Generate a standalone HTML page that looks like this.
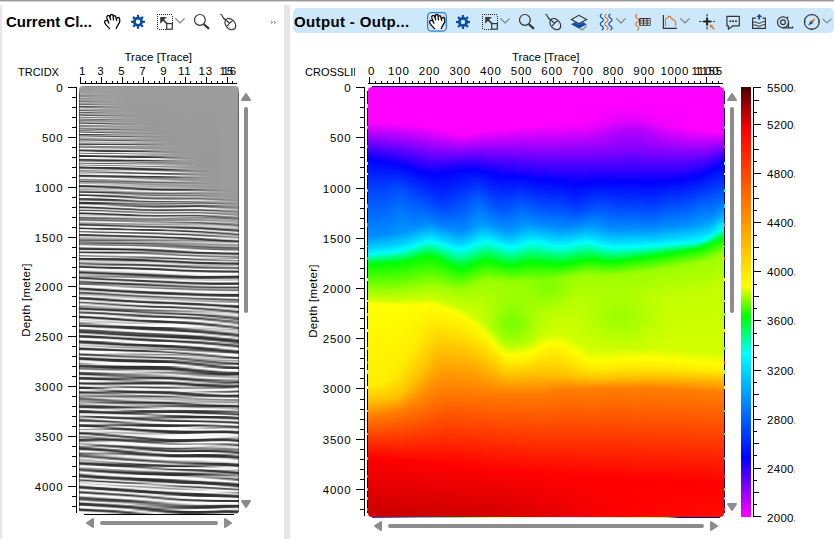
<!DOCTYPE html><html><head><meta charset="utf-8"><style>
*{margin:0;padding:0;box-sizing:border-box}
html,body{width:834px;height:539px;overflow:hidden;background:#fff}
body{position:relative;font-family:"Liberation Sans",sans-serif;color:#000}
.a{position:absolute;white-space:nowrap}
.n{font-size:11.5px;line-height:12px;letter-spacing:0.8px}
.l{font-size:11px;line-height:12px}
.ttl{font-size:15px;font-weight:bold;line-height:15px}
svg{position:absolute;left:0;top:0}
</style></head><body>
<div class="a" style="left:0;top:0;width:834px;height:1px;background:#999"></div><div class="a" style="left:0;top:1px;width:834px;height:1px;background:#d4d4d4"></div>
<div class="a" style="left:0;top:5px;width:2px;height:534px;background:#e6e6e6"></div>
<div class="a" style="left:284px;top:5px;width:6px;height:534px;background:#e6e6e6"></div>
<div class="a" style="left:293px;top:8px;width:541px;height:25px;background:#cee8fb;border-radius:5px"></div>
<svg width="834" height="539" viewBox="0 0 834 539"><defs><linearGradient id="v0" x1="0" y1="0" x2="0" y2="1"><stop offset="0.001" stop-color="#ff00ff"/><stop offset="0.083" stop-color="#ff00ff"/><stop offset="0.166" stop-color="#0200ff"/><stop offset="0.245" stop-color="#0049ff"/><stop offset="0.348" stop-color="#008dff"/><stop offset="0.376" stop-color="#00d4ff"/><stop offset="0.387" stop-color="#00f9ff"/><stop offset="0.390" stop-color="#00fffb"/><stop offset="0.413" stop-color="#00ff00"/><stop offset="0.480" stop-color="#acff00"/><stop offset="0.497" stop-color="#d3ff00"/><stop offset="0.503" stop-color="#feff00"/><stop offset="0.692" stop-color="#ffee00"/><stop offset="0.731" stop-color="#ffc000"/><stop offset="0.771" stop-color="#ff7800"/><stop offset="0.859" stop-color="#ff0000"/><stop offset="0.999" stop-color="#ca0000"/></linearGradient><linearGradient id="v1" x1="0" y1="0" x2="0" y2="1"><stop offset="0.001" stop-color="#ff00ff"/><stop offset="0.083" stop-color="#ff00ff"/><stop offset="0.166" stop-color="#0200ff"/><stop offset="0.245" stop-color="#0049ff"/><stop offset="0.348" stop-color="#008dff"/><stop offset="0.376" stop-color="#00d4ff"/><stop offset="0.387" stop-color="#00f9ff"/><stop offset="0.390" stop-color="#00fffb"/><stop offset="0.413" stop-color="#00ff00"/><stop offset="0.480" stop-color="#acff00"/><stop offset="0.497" stop-color="#d3ff00"/><stop offset="0.503" stop-color="#feff00"/><stop offset="0.692" stop-color="#ffee00"/><stop offset="0.731" stop-color="#ffc000"/><stop offset="0.771" stop-color="#ff7700"/><stop offset="0.859" stop-color="#ff0000"/><stop offset="0.999" stop-color="#cb0000"/></linearGradient><linearGradient id="v2" x1="0" y1="0" x2="0" y2="1"><stop offset="0.001" stop-color="#ff00ff"/><stop offset="0.083" stop-color="#ff00ff"/><stop offset="0.169" stop-color="#0000ff"/><stop offset="0.243" stop-color="#0047ff"/><stop offset="0.348" stop-color="#008fff"/><stop offset="0.376" stop-color="#00d6ff"/><stop offset="0.387" stop-color="#00fbff"/><stop offset="0.390" stop-color="#00fff4"/><stop offset="0.410" stop-color="#00ff13"/><stop offset="0.413" stop-color="#01ff00"/><stop offset="0.480" stop-color="#acff00"/><stop offset="0.497" stop-color="#d3ff00"/><stop offset="0.503" stop-color="#fcff00"/><stop offset="0.517" stop-color="#fffe00"/><stop offset="0.692" stop-color="#ffed00"/><stop offset="0.731" stop-color="#ffbe00"/><stop offset="0.769" stop-color="#ff7900"/><stop offset="0.862" stop-color="#fe0000"/><stop offset="0.999" stop-color="#cb0000"/></linearGradient><linearGradient id="v3" x1="0" y1="0" x2="0" y2="1"><stop offset="0.001" stop-color="#ff00ff"/><stop offset="0.083" stop-color="#ff00ff"/><stop offset="0.171" stop-color="#0001ff"/><stop offset="0.241" stop-color="#0046ff"/><stop offset="0.345" stop-color="#008cff"/><stop offset="0.373" stop-color="#00d2ff"/><stop offset="0.387" stop-color="#00fefe"/><stop offset="0.410" stop-color="#00ff0d"/><stop offset="0.413" stop-color="#03ff00"/><stop offset="0.480" stop-color="#acff00"/><stop offset="0.497" stop-color="#d2ff00"/><stop offset="0.503" stop-color="#f9ff00"/><stop offset="0.506" stop-color="#ffff00"/><stop offset="0.690" stop-color="#ffee00"/><stop offset="0.729" stop-color="#ffc100"/><stop offset="0.766" stop-color="#ff7a00"/><stop offset="0.862" stop-color="#ff0000"/><stop offset="0.999" stop-color="#cb0000"/></linearGradient><linearGradient id="v4" x1="0" y1="0" x2="0" y2="1"><stop offset="0.001" stop-color="#ff00ff"/><stop offset="0.083" stop-color="#ff00ff"/><stop offset="0.171" stop-color="#0300ff"/><stop offset="0.178" stop-color="#0006ff"/><stop offset="0.241" stop-color="#0047ff"/><stop offset="0.345" stop-color="#008fff"/><stop offset="0.373" stop-color="#00d6ff"/><stop offset="0.385" stop-color="#00fbff"/><stop offset="0.387" stop-color="#00fff5"/><stop offset="0.410" stop-color="#00ff07"/><stop offset="0.413" stop-color="#04ff00"/><stop offset="0.480" stop-color="#abff00"/><stop offset="0.497" stop-color="#d1ff00"/><stop offset="0.503" stop-color="#f7ff00"/><stop offset="0.506" stop-color="#ffff00"/><stop offset="0.690" stop-color="#ffec00"/><stop offset="0.727" stop-color="#ffc300"/><stop offset="0.764" stop-color="#ff7b00"/><stop offset="0.864" stop-color="#fe0000"/><stop offset="0.999" stop-color="#cb0000"/></linearGradient><linearGradient id="v5" x1="0" y1="0" x2="0" y2="1"><stop offset="0.001" stop-color="#ff00ff"/><stop offset="0.083" stop-color="#ff00ff"/><stop offset="0.092" stop-color="#e800ff"/><stop offset="0.173" stop-color="#0300ff"/><stop offset="0.238" stop-color="#0046ff"/><stop offset="0.343" stop-color="#008cff"/><stop offset="0.371" stop-color="#00d2ff"/><stop offset="0.385" stop-color="#00fefe"/><stop offset="0.410" stop-color="#00ff01"/><stop offset="0.478" stop-color="#a6ff00"/><stop offset="0.497" stop-color="#d0ff00"/><stop offset="0.506" stop-color="#ffff00"/><stop offset="0.687" stop-color="#ffed00"/><stop offset="0.727" stop-color="#ffc000"/><stop offset="0.762" stop-color="#ff7c00"/><stop offset="0.864" stop-color="#ff0000"/><stop offset="0.999" stop-color="#cc0000"/></linearGradient><linearGradient id="v6" x1="0" y1="0" x2="0" y2="1"><stop offset="0.001" stop-color="#ff00ff"/><stop offset="0.085" stop-color="#fc00ff"/><stop offset="0.176" stop-color="#0200ff"/><stop offset="0.238" stop-color="#0047ff"/><stop offset="0.343" stop-color="#008fff"/><stop offset="0.371" stop-color="#00d6ff"/><stop offset="0.383" stop-color="#00fbff"/><stop offset="0.385" stop-color="#00fff5"/><stop offset="0.408" stop-color="#00ff12"/><stop offset="0.410" stop-color="#01ff00"/><stop offset="0.478" stop-color="#a6ff00"/><stop offset="0.497" stop-color="#d0ff00"/><stop offset="0.501" stop-color="#e5ff00"/><stop offset="0.506" stop-color="#feff00"/><stop offset="0.685" stop-color="#ffec00"/><stop offset="0.724" stop-color="#ffc300"/><stop offset="0.759" stop-color="#ff7d00"/><stop offset="0.864" stop-color="#ff0000"/><stop offset="0.999" stop-color="#cc0000"/></linearGradient><linearGradient id="v7" x1="0" y1="0" x2="0" y2="1"><stop offset="0.001" stop-color="#ff00ff"/><stop offset="0.085" stop-color="#fd00ff"/><stop offset="0.178" stop-color="#0100ff"/><stop offset="0.236" stop-color="#0048ff"/><stop offset="0.334" stop-color="#008bff"/><stop offset="0.341" stop-color="#008fff"/><stop offset="0.369" stop-color="#00d2ff"/><stop offset="0.383" stop-color="#00fefe"/><stop offset="0.408" stop-color="#00ff0c"/><stop offset="0.410" stop-color="#03ff00"/><stop offset="0.478" stop-color="#a6ff00"/><stop offset="0.497" stop-color="#cfff00"/><stop offset="0.501" stop-color="#e3ff00"/><stop offset="0.506" stop-color="#fcff00"/><stop offset="0.515" stop-color="#fffe00"/><stop offset="0.678" stop-color="#ffec00"/><stop offset="0.724" stop-color="#ffc000"/><stop offset="0.757" stop-color="#ff7d00"/><stop offset="0.866" stop-color="#fe0000"/><stop offset="0.999" stop-color="#cc0000"/></linearGradient><linearGradient id="v8" x1="0" y1="0" x2="0" y2="1"><stop offset="0.001" stop-color="#ff00ff"/><stop offset="0.085" stop-color="#fe00ff"/><stop offset="0.180" stop-color="#0100ff"/><stop offset="0.236" stop-color="#004cff"/><stop offset="0.294" stop-color="#0079ff"/><stop offset="0.341" stop-color="#0094ff"/><stop offset="0.369" stop-color="#00d6ff"/><stop offset="0.380" stop-color="#00fbff"/><stop offset="0.383" stop-color="#00fff5"/><stop offset="0.408" stop-color="#00ff06"/><stop offset="0.410" stop-color="#04ff00"/><stop offset="0.478" stop-color="#a6ff00"/><stop offset="0.497" stop-color="#ceff00"/><stop offset="0.499" stop-color="#d5ff00"/><stop offset="0.506" stop-color="#f9ff00"/><stop offset="0.508" stop-color="#ffff00"/><stop offset="0.666" stop-color="#ffec00"/><stop offset="0.722" stop-color="#ffc200"/><stop offset="0.757" stop-color="#ff7b00"/><stop offset="0.866" stop-color="#ff0000"/><stop offset="0.999" stop-color="#cc0000"/></linearGradient><linearGradient id="v9" x1="0" y1="0" x2="0" y2="1"><stop offset="0.001" stop-color="#ff00ff"/><stop offset="0.085" stop-color="#ff00ff"/><stop offset="0.183" stop-color="#0100ff"/><stop offset="0.236" stop-color="#004eff"/><stop offset="0.283" stop-color="#0075ff"/><stop offset="0.324" stop-color="#008eff"/><stop offset="0.338" stop-color="#0095ff"/><stop offset="0.366" stop-color="#00d4ff"/><stop offset="0.378" stop-color="#00f9ff"/><stop offset="0.380" stop-color="#00fffb"/><stop offset="0.406" stop-color="#00ff12"/><stop offset="0.408" stop-color="#01ff00"/><stop offset="0.478" stop-color="#a7ff00"/><stop offset="0.497" stop-color="#ceff00"/><stop offset="0.499" stop-color="#d5ff00"/><stop offset="0.506" stop-color="#f8ff00"/><stop offset="0.508" stop-color="#ffff00"/><stop offset="0.655" stop-color="#ffec00"/><stop offset="0.717" stop-color="#ffc400"/><stop offset="0.755" stop-color="#ff7b00"/><stop offset="0.869" stop-color="#fe0000"/><stop offset="0.999" stop-color="#cd0000"/></linearGradient><linearGradient id="v10" x1="0" y1="0" x2="0" y2="1"><stop offset="0.001" stop-color="#ff00ff"/><stop offset="0.085" stop-color="#ff00ff"/><stop offset="0.185" stop-color="#0100ff"/><stop offset="0.241" stop-color="#004fff"/><stop offset="0.294" stop-color="#007bff"/><stop offset="0.336" stop-color="#0095ff"/><stop offset="0.364" stop-color="#00d5ff"/><stop offset="0.376" stop-color="#00f9ff"/><stop offset="0.378" stop-color="#00fffa"/><stop offset="0.406" stop-color="#00ff04"/><stop offset="0.410" stop-color="#0aff00"/><stop offset="0.476" stop-color="#a4ff00"/><stop offset="0.497" stop-color="#cfff00"/><stop offset="0.501" stop-color="#e2ff00"/><stop offset="0.506" stop-color="#f9ff00"/><stop offset="0.508" stop-color="#ffff00"/><stop offset="0.641" stop-color="#ffec00"/><stop offset="0.710" stop-color="#ffc200"/><stop offset="0.752" stop-color="#ff7b00"/><stop offset="0.869" stop-color="#fe0000"/><stop offset="0.999" stop-color="#cd0000"/></linearGradient><linearGradient id="v11" x1="0" y1="0" x2="0" y2="1"><stop offset="0.001" stop-color="#ff00ff"/><stop offset="0.087" stop-color="#fe00ff"/><stop offset="0.187" stop-color="#0200ff"/><stop offset="0.245" stop-color="#004cff"/><stop offset="0.334" stop-color="#0093ff"/><stop offset="0.362" stop-color="#00d7ff"/><stop offset="0.373" stop-color="#00fbff"/><stop offset="0.376" stop-color="#00fff5"/><stop offset="0.403" stop-color="#00ff06"/><stop offset="0.406" stop-color="#04ff00"/><stop offset="0.473" stop-color="#a3ff00"/><stop offset="0.494" stop-color="#cbff00"/><stop offset="0.499" stop-color="#d9ff00"/><stop offset="0.506" stop-color="#fbff00"/><stop offset="0.510" stop-color="#fffe00"/><stop offset="0.627" stop-color="#ffec00"/><stop offset="0.701" stop-color="#ffc100"/><stop offset="0.750" stop-color="#ff7900"/><stop offset="0.869" stop-color="#ff0000"/><stop offset="0.999" stop-color="#cd0000"/></linearGradient><linearGradient id="v12" x1="0" y1="0" x2="0" y2="1"><stop offset="0.001" stop-color="#ff00ff"/><stop offset="0.087" stop-color="#ff00ff"/><stop offset="0.190" stop-color="#0300ff"/><stop offset="0.252" stop-color="#004cff"/><stop offset="0.329" stop-color="#008eff"/><stop offset="0.357" stop-color="#00d2ff"/><stop offset="0.371" stop-color="#00fdfd"/><stop offset="0.376" stop-color="#00ffdc"/><stop offset="0.401" stop-color="#00ff06"/><stop offset="0.403" stop-color="#04ff00"/><stop offset="0.471" stop-color="#a2ff00"/><stop offset="0.494" stop-color="#cdff00"/><stop offset="0.499" stop-color="#dcff00"/><stop offset="0.506" stop-color="#fdff00"/><stop offset="0.615" stop-color="#ffeb00"/><stop offset="0.690" stop-color="#ffc200"/><stop offset="0.750" stop-color="#ff7500"/><stop offset="0.871" stop-color="#fe0000"/><stop offset="0.999" stop-color="#cd0000"/></linearGradient><linearGradient id="v13" x1="0" y1="0" x2="0" y2="1"><stop offset="0.001" stop-color="#ff00ff"/><stop offset="0.090" stop-color="#fd00ff"/><stop offset="0.194" stop-color="#0001ff"/><stop offset="0.259" stop-color="#004dff"/><stop offset="0.327" stop-color="#008eff"/><stop offset="0.355" stop-color="#00d4ff"/><stop offset="0.366" stop-color="#00f9ff"/><stop offset="0.369" stop-color="#00fefa"/><stop offset="0.399" stop-color="#00ff07"/><stop offset="0.401" stop-color="#03ff00"/><stop offset="0.469" stop-color="#a1ff00"/><stop offset="0.492" stop-color="#c9ff00"/><stop offset="0.497" stop-color="#d4ff00"/><stop offset="0.506" stop-color="#ffff00"/><stop offset="0.601" stop-color="#ffeb00"/><stop offset="0.680" stop-color="#ffc000"/><stop offset="0.750" stop-color="#ff7200"/><stop offset="0.871" stop-color="#ff0000"/><stop offset="0.999" stop-color="#ce0000"/></linearGradient><linearGradient id="v14" x1="0" y1="0" x2="0" y2="1"><stop offset="0.001" stop-color="#ff00ff"/><stop offset="0.090" stop-color="#ff00ff"/><stop offset="0.197" stop-color="#0001ff"/><stop offset="0.283" stop-color="#0062ff"/><stop offset="0.324" stop-color="#008fff"/><stop offset="0.352" stop-color="#00d6ff"/><stop offset="0.364" stop-color="#00fbff"/><stop offset="0.366" stop-color="#00fff6"/><stop offset="0.397" stop-color="#00ff08"/><stop offset="0.399" stop-color="#03ff00"/><stop offset="0.466" stop-color="#a0ff00"/><stop offset="0.492" stop-color="#cbff00"/><stop offset="0.497" stop-color="#d6ff00"/><stop offset="0.506" stop-color="#ffff00"/><stop offset="0.590" stop-color="#ffea00"/><stop offset="0.669" stop-color="#ffc100"/><stop offset="0.762" stop-color="#ff6400"/><stop offset="0.873" stop-color="#fe0000"/><stop offset="0.999" stop-color="#ce0000"/></linearGradient><linearGradient id="v15" x1="0" y1="0" x2="0" y2="1"><stop offset="0.001" stop-color="#ff00ff"/><stop offset="0.092" stop-color="#fd00ff"/><stop offset="0.199" stop-color="#0100ff"/><stop offset="0.322" stop-color="#0091ff"/><stop offset="0.350" stop-color="#00d9ff"/><stop offset="0.362" stop-color="#00fdfe"/><stop offset="0.366" stop-color="#00ffdf"/><stop offset="0.394" stop-color="#00ff0a"/><stop offset="0.397" stop-color="#03ff00"/><stop offset="0.464" stop-color="#9fff00"/><stop offset="0.492" stop-color="#ccff00"/><stop offset="0.497" stop-color="#d9ff00"/><stop offset="0.506" stop-color="#ffff00"/><stop offset="0.580" stop-color="#ffe800"/><stop offset="0.659" stop-color="#ffbf00"/><stop offset="0.871" stop-color="#ff0100"/><stop offset="0.999" stop-color="#ce0000"/></linearGradient><linearGradient id="v16" x1="0" y1="0" x2="0" y2="1"><stop offset="0.001" stop-color="#ff00ff"/><stop offset="0.092" stop-color="#ff00ff"/><stop offset="0.117" stop-color="#c600ff"/><stop offset="0.201" stop-color="#0100ff"/><stop offset="0.276" stop-color="#0054ff"/><stop offset="0.320" stop-color="#0090ff"/><stop offset="0.345" stop-color="#00d1ff"/><stop offset="0.359" stop-color="#00feff"/><stop offset="0.387" stop-color="#00ff31"/><stop offset="0.394" stop-color="#01ff00"/><stop offset="0.462" stop-color="#9eff00"/><stop offset="0.490" stop-color="#c8ff00"/><stop offset="0.497" stop-color="#daff00"/><stop offset="0.503" stop-color="#f8ff00"/><stop offset="0.506" stop-color="#ffff00"/><stop offset="0.583" stop-color="#ffe100"/><stop offset="0.648" stop-color="#ffbf00"/><stop offset="0.876" stop-color="#fe0000"/><stop offset="0.999" stop-color="#cf0000"/></linearGradient><linearGradient id="v17" x1="0" y1="0" x2="0" y2="1"><stop offset="0.001" stop-color="#ff00ff"/><stop offset="0.094" stop-color="#ff00ff"/><stop offset="0.203" stop-color="#0000ff"/><stop offset="0.271" stop-color="#0047ff"/><stop offset="0.317" stop-color="#0088ff"/><stop offset="0.345" stop-color="#00d1ff"/><stop offset="0.359" stop-color="#00fefe"/><stop offset="0.394" stop-color="#00ff03"/><stop offset="0.401" stop-color="#10ff00"/><stop offset="0.462" stop-color="#9eff00"/><stop offset="0.492" stop-color="#cbff00"/><stop offset="0.497" stop-color="#d6ff00"/><stop offset="0.506" stop-color="#feff00"/><stop offset="0.592" stop-color="#ffd700"/><stop offset="0.643" stop-color="#ffb900"/><stop offset="0.806" stop-color="#ff3800"/><stop offset="0.876" stop-color="#fe0000"/><stop offset="0.999" stop-color="#cf0000"/></linearGradient><linearGradient id="v18" x1="0" y1="0" x2="0" y2="1"><stop offset="0.001" stop-color="#ff00ff"/><stop offset="0.097" stop-color="#ff00ff"/><stop offset="0.201" stop-color="#0400ff"/><stop offset="0.206" stop-color="#0002ff"/><stop offset="0.271" stop-color="#003fff"/><stop offset="0.320" stop-color="#0085ff"/><stop offset="0.348" stop-color="#00d0ff"/><stop offset="0.362" stop-color="#00fefd"/><stop offset="0.397" stop-color="#00ff0a"/><stop offset="0.399" stop-color="#03ff01"/><stop offset="0.464" stop-color="#9fff00"/><stop offset="0.494" stop-color="#cbff00"/><stop offset="0.499" stop-color="#d5ff00"/><stop offset="0.508" stop-color="#fdff00"/><stop offset="0.569" stop-color="#ffe100"/><stop offset="0.673" stop-color="#ff9c00"/><stop offset="0.783" stop-color="#ff4900"/><stop offset="0.876" stop-color="#ff0000"/><stop offset="0.999" stop-color="#cf0000"/></linearGradient><linearGradient id="v19" x1="0" y1="0" x2="0" y2="1"><stop offset="0.001" stop-color="#ff00ff"/><stop offset="0.099" stop-color="#fe00ff"/><stop offset="0.201" stop-color="#0200ff"/><stop offset="0.271" stop-color="#0039ff"/><stop offset="0.322" stop-color="#0082ff"/><stop offset="0.352" stop-color="#00d5ff"/><stop offset="0.364" stop-color="#00fcfe"/><stop offset="0.366" stop-color="#00fff3"/><stop offset="0.401" stop-color="#00ff08"/><stop offset="0.403" stop-color="#03ff01"/><stop offset="0.464" stop-color="#9dff00"/><stop offset="0.497" stop-color="#caff00"/><stop offset="0.501" stop-color="#d3ff00"/><stop offset="0.510" stop-color="#fbff00"/><stop offset="0.517" stop-color="#fffc00"/><stop offset="0.562" stop-color="#ffe400"/><stop offset="0.743" stop-color="#ff6600"/><stop offset="0.878" stop-color="#fe0000"/><stop offset="0.999" stop-color="#cf0000"/></linearGradient><linearGradient id="v20" x1="0" y1="0" x2="0" y2="1"><stop offset="0.001" stop-color="#ff00ff"/><stop offset="0.101" stop-color="#fe00ff"/><stop offset="0.199" stop-color="#0400ff"/><stop offset="0.206" stop-color="#0004ff"/><stop offset="0.273" stop-color="#003cff"/><stop offset="0.324" stop-color="#0083ff"/><stop offset="0.355" stop-color="#00d4ff"/><stop offset="0.366" stop-color="#00fbff"/><stop offset="0.369" stop-color="#00fff7"/><stop offset="0.406" stop-color="#01ff06"/><stop offset="0.408" stop-color="#04ff00"/><stop offset="0.466" stop-color="#9eff00"/><stop offset="0.499" stop-color="#c9ff00"/><stop offset="0.506" stop-color="#d9ff00"/><stop offset="0.513" stop-color="#f9ff00"/><stop offset="0.515" stop-color="#fffe00"/><stop offset="0.559" stop-color="#ffe600"/><stop offset="0.669" stop-color="#ff9900"/><stop offset="0.878" stop-color="#fe0000"/><stop offset="0.999" stop-color="#d00000"/></linearGradient><linearGradient id="v21" x1="0" y1="0" x2="0" y2="1"><stop offset="0.001" stop-color="#ff00ff"/><stop offset="0.103" stop-color="#fe00ff"/><stop offset="0.199" stop-color="#0000ff"/><stop offset="0.276" stop-color="#0042ff"/><stop offset="0.329" stop-color="#0089ff"/><stop offset="0.357" stop-color="#00d3ff"/><stop offset="0.369" stop-color="#00f9ff"/><stop offset="0.371" stop-color="#00fefb"/><stop offset="0.410" stop-color="#01ff05"/><stop offset="0.415" stop-color="#0cff00"/><stop offset="0.469" stop-color="#9eff00"/><stop offset="0.503" stop-color="#ccff00"/><stop offset="0.508" stop-color="#d6ff00"/><stop offset="0.515" stop-color="#f7ff00"/><stop offset="0.517" stop-color="#feff00"/><stop offset="0.562" stop-color="#ffe600"/><stop offset="0.880" stop-color="#fe0000"/><stop offset="0.999" stop-color="#d00000"/></linearGradient><linearGradient id="v22" x1="0" y1="0" x2="0" y2="1"><stop offset="0.001" stop-color="#ff00ff"/><stop offset="0.106" stop-color="#fe00ff"/><stop offset="0.197" stop-color="#0100ff"/><stop offset="0.278" stop-color="#0049ff"/><stop offset="0.334" stop-color="#0090ff"/><stop offset="0.362" stop-color="#00d9ff"/><stop offset="0.373" stop-color="#00fdfe"/><stop offset="0.380" stop-color="#00ffd7"/><stop offset="0.413" stop-color="#00ff0f"/><stop offset="0.415" stop-color="#01ff04"/><stop offset="0.422" stop-color="#14ff00"/><stop offset="0.469" stop-color="#9bff00"/><stop offset="0.506" stop-color="#cbff00"/><stop offset="0.510" stop-color="#d3ff00"/><stop offset="0.520" stop-color="#feff00"/><stop offset="0.564" stop-color="#ffe500"/><stop offset="0.880" stop-color="#fe0000"/><stop offset="0.999" stop-color="#d00000"/></linearGradient><linearGradient id="v23" x1="0" y1="0" x2="0" y2="1"><stop offset="0.001" stop-color="#ff00ff"/><stop offset="0.108" stop-color="#ff00ff"/><stop offset="0.120" stop-color="#e000ff"/><stop offset="0.194" stop-color="#0300ff"/><stop offset="0.210" stop-color="#000eff"/><stop offset="0.287" stop-color="#0058ff"/><stop offset="0.336" stop-color="#008fff"/><stop offset="0.364" stop-color="#00d7ff"/><stop offset="0.376" stop-color="#00fcff"/><stop offset="0.378" stop-color="#00fff7"/><stop offset="0.417" stop-color="#00ff0b"/><stop offset="0.420" stop-color="#02ff01"/><stop offset="0.471" stop-color="#9cff00"/><stop offset="0.508" stop-color="#caff00"/><stop offset="0.513" stop-color="#d1ff00"/><stop offset="0.517" stop-color="#e5ff00"/><stop offset="0.522" stop-color="#fcff00"/><stop offset="0.531" stop-color="#fffa00"/><stop offset="0.571" stop-color="#ffe100"/><stop offset="0.869" stop-color="#ff0700"/><stop offset="0.885" stop-color="#fd0000"/><stop offset="0.999" stop-color="#d00000"/></linearGradient><linearGradient id="v24" x1="0" y1="0" x2="0" y2="1"><stop offset="0.001" stop-color="#ff00ff"/><stop offset="0.110" stop-color="#ff00ff"/><stop offset="0.194" stop-color="#0001ff"/><stop offset="0.336" stop-color="#008cff"/><stop offset="0.364" stop-color="#00d2ff"/><stop offset="0.378" stop-color="#00feff"/><stop offset="0.422" stop-color="#01ff00"/><stop offset="0.471" stop-color="#9bff00"/><stop offset="0.515" stop-color="#cfff00"/><stop offset="0.520" stop-color="#deff00"/><stop offset="0.524" stop-color="#f5ff00"/><stop offset="0.527" stop-color="#fdff00"/><stop offset="0.571" stop-color="#ffe300"/><stop offset="0.799" stop-color="#ff3a00"/><stop offset="0.883" stop-color="#fe0000"/><stop offset="0.999" stop-color="#d10000"/></linearGradient><linearGradient id="v25" x1="0" y1="0" x2="0" y2="1"><stop offset="0.001" stop-color="#ff00ff"/><stop offset="0.110" stop-color="#ff00ff"/><stop offset="0.192" stop-color="#0100ff"/><stop offset="0.336" stop-color="#0090ff"/><stop offset="0.364" stop-color="#00d6ff"/><stop offset="0.376" stop-color="#00fbff"/><stop offset="0.378" stop-color="#00fff8"/><stop offset="0.420" stop-color="#00ff06"/><stop offset="0.422" stop-color="#04ff00"/><stop offset="0.469" stop-color="#99ff00"/><stop offset="0.522" stop-color="#d4ff00"/><stop offset="0.531" stop-color="#faff00"/><stop offset="0.536" stop-color="#fffd00"/><stop offset="0.576" stop-color="#ffe200"/><stop offset="0.713" stop-color="#ff7800"/><stop offset="0.883" stop-color="#fe0000"/><stop offset="0.999" stop-color="#d10000"/></linearGradient><linearGradient id="v26" x1="0" y1="0" x2="0" y2="1"><stop offset="0.001" stop-color="#ff00ff"/><stop offset="0.108" stop-color="#ff00ff"/><stop offset="0.115" stop-color="#ed00ff"/><stop offset="0.190" stop-color="#0400ff"/><stop offset="0.194" stop-color="#0004ff"/><stop offset="0.278" stop-color="#005dff"/><stop offset="0.331" stop-color="#008fff"/><stop offset="0.359" stop-color="#00d3ff"/><stop offset="0.373" stop-color="#00fdfd"/><stop offset="0.383" stop-color="#00ffcb"/><stop offset="0.417" stop-color="#01ff03"/><stop offset="0.427" stop-color="#1dff00"/><stop offset="0.466" stop-color="#9bff00"/><stop offset="0.527" stop-color="#d2ff00"/><stop offset="0.534" stop-color="#eaff00"/><stop offset="0.538" stop-color="#fbff00"/><stop offset="0.545" stop-color="#fffb00"/><stop offset="0.578" stop-color="#ffe500"/><stop offset="0.643" stop-color="#ffad00"/><stop offset="0.883" stop-color="#ff0000"/><stop offset="0.999" stop-color="#d10000"/></linearGradient><linearGradient id="v27" x1="0" y1="0" x2="0" y2="1"><stop offset="0.001" stop-color="#ff00ff"/><stop offset="0.108" stop-color="#fd00ff"/><stop offset="0.190" stop-color="#0400ff"/><stop offset="0.194" stop-color="#0004ff"/><stop offset="0.264" stop-color="#005aff"/><stop offset="0.329" stop-color="#0096ff"/><stop offset="0.357" stop-color="#00d8ff"/><stop offset="0.369" stop-color="#00fbff"/><stop offset="0.371" stop-color="#00fff9"/><stop offset="0.413" stop-color="#00ff08"/><stop offset="0.415" stop-color="#03ff01"/><stop offset="0.462" stop-color="#99ff00"/><stop offset="0.513" stop-color="#c3ff00"/><stop offset="0.534" stop-color="#d3ff00"/><stop offset="0.545" stop-color="#faff00"/><stop offset="0.555" stop-color="#fffa00"/><stop offset="0.585" stop-color="#ffe300"/><stop offset="0.641" stop-color="#ffb100"/><stop offset="0.771" stop-color="#ff5000"/><stop offset="0.885" stop-color="#fe0000"/><stop offset="0.999" stop-color="#d20000"/></linearGradient><linearGradient id="v28" x1="0" y1="0" x2="0" y2="1"><stop offset="0.001" stop-color="#ff00ff"/><stop offset="0.106" stop-color="#fe00ff"/><stop offset="0.192" stop-color="#0200ff"/><stop offset="0.262" stop-color="#0060ff"/><stop offset="0.320" stop-color="#0096ff"/><stop offset="0.327" stop-color="#009eff"/><stop offset="0.355" stop-color="#00deff"/><stop offset="0.364" stop-color="#00f9ff"/><stop offset="0.366" stop-color="#00fefc"/><stop offset="0.371" stop-color="#00ffe5"/><stop offset="0.410" stop-color="#01ff03"/><stop offset="0.427" stop-color="#34ff00"/><stop offset="0.459" stop-color="#9cff00"/><stop offset="0.520" stop-color="#c4ff00"/><stop offset="0.538" stop-color="#ceff00"/><stop offset="0.552" stop-color="#f9ff00"/><stop offset="0.559" stop-color="#fffc00"/><stop offset="0.590" stop-color="#ffe500"/><stop offset="0.659" stop-color="#ffa600"/><stop offset="0.741" stop-color="#ff6600"/><stop offset="0.885" stop-color="#fe0000"/><stop offset="0.999" stop-color="#d20000"/></linearGradient><linearGradient id="v29" x1="0" y1="0" x2="0" y2="1"><stop offset="0.001" stop-color="#ff00ff"/><stop offset="0.103" stop-color="#ff00ff"/><stop offset="0.194" stop-color="#0200ff"/><stop offset="0.266" stop-color="#0065ff"/><stop offset="0.322" stop-color="#009dff"/><stop offset="0.350" stop-color="#00dcff"/><stop offset="0.362" stop-color="#00fdfe"/><stop offset="0.369" stop-color="#00ffde"/><stop offset="0.406" stop-color="#00ff07"/><stop offset="0.408" stop-color="#04ff00"/><stop offset="0.455" stop-color="#9aff00"/><stop offset="0.510" stop-color="#bdff00"/><stop offset="0.543" stop-color="#c9ff00"/><stop offset="0.550" stop-color="#daff00"/><stop offset="0.562" stop-color="#fbfe00"/><stop offset="0.573" stop-color="#fff800"/><stop offset="0.610" stop-color="#ffd700"/><stop offset="0.720" stop-color="#ff7500"/><stop offset="0.887" stop-color="#fe0000"/><stop offset="0.999" stop-color="#d20000"/></linearGradient><linearGradient id="v30" x1="0" y1="0" x2="0" y2="1"><stop offset="0.001" stop-color="#ff00ff"/><stop offset="0.101" stop-color="#ff00ff"/><stop offset="0.113" stop-color="#e300ff"/><stop offset="0.197" stop-color="#0100ff"/><stop offset="0.280" stop-color="#006dff"/><stop offset="0.320" stop-color="#009bff"/><stop offset="0.348" stop-color="#00ddff"/><stop offset="0.359" stop-color="#00fefd"/><stop offset="0.376" stop-color="#00ffa4"/><stop offset="0.403" stop-color="#00ff03"/><stop offset="0.410" stop-color="#15ff00"/><stop offset="0.452" stop-color="#9cff00"/><stop offset="0.510" stop-color="#b9ff00"/><stop offset="0.550" stop-color="#c4ff00"/><stop offset="0.571" stop-color="#fdfe00"/><stop offset="0.603" stop-color="#ffe400"/><stop offset="0.717" stop-color="#ff7700"/><stop offset="0.887" stop-color="#fe0000"/><stop offset="0.999" stop-color="#d20000"/></linearGradient><linearGradient id="v31" x1="0" y1="0" x2="0" y2="1"><stop offset="0.001" stop-color="#ff00ff"/><stop offset="0.101" stop-color="#fe00ff"/><stop offset="0.199" stop-color="#0100ff"/><stop offset="0.317" stop-color="#0091ff"/><stop offset="0.345" stop-color="#00d5ff"/><stop offset="0.359" stop-color="#00fffc"/><stop offset="0.403" stop-color="#01ff00"/><stop offset="0.450" stop-color="#99ff00"/><stop offset="0.485" stop-color="#adff00"/><stop offset="0.520" stop-color="#b4ff00"/><stop offset="0.555" stop-color="#baff00"/><stop offset="0.564" stop-color="#d0ff00"/><stop offset="0.578" stop-color="#f9fe00"/><stop offset="0.585" stop-color="#fffb00"/><stop offset="0.643" stop-color="#ffc400"/><stop offset="0.715" stop-color="#ff7a00"/><stop offset="0.890" stop-color="#fe0000"/><stop offset="0.999" stop-color="#d30000"/></linearGradient><linearGradient id="v32" x1="0" y1="0" x2="0" y2="1"><stop offset="0.001" stop-color="#ff00ff"/><stop offset="0.099" stop-color="#ff00ff"/><stop offset="0.201" stop-color="#0100ff"/><stop offset="0.280" stop-color="#005bff"/><stop offset="0.320" stop-color="#008eff"/><stop offset="0.348" stop-color="#00d4ff"/><stop offset="0.359" stop-color="#00f9ff"/><stop offset="0.362" stop-color="#00fefc"/><stop offset="0.403" stop-color="#00ff09"/><stop offset="0.406" stop-color="#03ff00"/><stop offset="0.450" stop-color="#98ff00"/><stop offset="0.457" stop-color="#9fff00"/><stop offset="0.501" stop-color="#aeff00"/><stop offset="0.550" stop-color="#abff00"/><stop offset="0.564" stop-color="#b4ff00"/><stop offset="0.580" stop-color="#e0ff00"/><stop offset="0.590" stop-color="#fcfe00"/><stop offset="0.613" stop-color="#ffea00"/><stop offset="0.690" stop-color="#ff9500"/><stop offset="0.715" stop-color="#ff7a00"/><stop offset="0.890" stop-color="#fe0000"/><stop offset="0.999" stop-color="#d30000"/></linearGradient><linearGradient id="v33" x1="0" y1="0" x2="0" y2="1"><stop offset="0.001" stop-color="#ff00ff"/><stop offset="0.099" stop-color="#fd00ff"/><stop offset="0.203" stop-color="#0000ff"/><stop offset="0.278" stop-color="#0052ff"/><stop offset="0.324" stop-color="#0091ff"/><stop offset="0.352" stop-color="#00d9ff"/><stop offset="0.364" stop-color="#00fdfe"/><stop offset="0.371" stop-color="#00ffd8"/><stop offset="0.406" stop-color="#00ff0b"/><stop offset="0.408" stop-color="#02ff01"/><stop offset="0.452" stop-color="#9cff00"/><stop offset="0.492" stop-color="#a9ff00"/><stop offset="0.520" stop-color="#a3ff00"/><stop offset="0.548" stop-color="#9dff00"/><stop offset="0.571" stop-color="#a9ff00"/><stop offset="0.580" stop-color="#beff00"/><stop offset="0.599" stop-color="#f8fe00"/><stop offset="0.606" stop-color="#fff900"/><stop offset="0.666" stop-color="#ffb700"/><stop offset="0.713" stop-color="#ff7c00"/><stop offset="0.890" stop-color="#fe0000"/><stop offset="0.999" stop-color="#d30000"/></linearGradient><linearGradient id="v34" x1="0" y1="0" x2="0" y2="1"><stop offset="0.001" stop-color="#ff00ff"/><stop offset="0.097" stop-color="#ff00ff"/><stop offset="0.206" stop-color="#0001ff"/><stop offset="0.280" stop-color="#0051ff"/><stop offset="0.327" stop-color="#008fff"/><stop offset="0.355" stop-color="#00d6ff"/><stop offset="0.366" stop-color="#00fbff"/><stop offset="0.369" stop-color="#00fff8"/><stop offset="0.410" stop-color="#01ff02"/><stop offset="0.452" stop-color="#9aff00"/><stop offset="0.485" stop-color="#a5ff00"/><stop offset="0.515" stop-color="#9eff00"/><stop offset="0.543" stop-color="#90ff00"/><stop offset="0.564" stop-color="#96ff00"/><stop offset="0.583" stop-color="#a9ff00"/><stop offset="0.599" stop-color="#d7ff00"/><stop offset="0.610" stop-color="#fafe00"/><stop offset="0.620" stop-color="#fff600"/><stop offset="0.671" stop-color="#ffb800"/><stop offset="0.713" stop-color="#ff7d00"/><stop offset="0.892" stop-color="#fe0000"/><stop offset="0.999" stop-color="#d30000"/></linearGradient><linearGradient id="v35" x1="0" y1="0" x2="0" y2="1"><stop offset="0.001" stop-color="#ff00ff"/><stop offset="0.097" stop-color="#fe00ff"/><stop offset="0.206" stop-color="#0200ff"/><stop offset="0.285" stop-color="#0056ff"/><stop offset="0.329" stop-color="#008eff"/><stop offset="0.357" stop-color="#00d4ff"/><stop offset="0.369" stop-color="#00f9ff"/><stop offset="0.371" stop-color="#00fefb"/><stop offset="0.413" stop-color="#01ff03"/><stop offset="0.443" stop-color="#73ff00"/><stop offset="0.452" stop-color="#96ff00"/><stop offset="0.457" stop-color="#9cff00"/><stop offset="0.490" stop-color="#a2ff00"/><stop offset="0.517" stop-color="#95ff00"/><stop offset="0.543" stop-color="#85ff00"/><stop offset="0.562" stop-color="#89ff00"/><stop offset="0.590" stop-color="#a8ff00"/><stop offset="0.599" stop-color="#bfff00"/><stop offset="0.620" stop-color="#fdfe00"/><stop offset="0.645" stop-color="#ffe200"/><stop offset="0.680" stop-color="#ffb000"/><stop offset="0.713" stop-color="#ff7d00"/><stop offset="0.892" stop-color="#fe0000"/><stop offset="0.999" stop-color="#d50000"/></linearGradient><linearGradient id="v36" x1="0" y1="0" x2="0" y2="1"><stop offset="0.001" stop-color="#ff00ff"/><stop offset="0.094" stop-color="#ff00ff"/><stop offset="0.136" stop-color="#a300ff"/><stop offset="0.208" stop-color="#0001ff"/><stop offset="0.331" stop-color="#008eff"/><stop offset="0.359" stop-color="#00d4ff"/><stop offset="0.373" stop-color="#00fffd"/><stop offset="0.415" stop-color="#00ff02"/><stop offset="0.455" stop-color="#9aff00"/><stop offset="0.487" stop-color="#9fff00"/><stop offset="0.515" stop-color="#92ff00"/><stop offset="0.541" stop-color="#7eff00"/><stop offset="0.559" stop-color="#7fff00"/><stop offset="0.583" stop-color="#99ff00"/><stop offset="0.599" stop-color="#b3ff00"/><stop offset="0.620" stop-color="#efff00"/><stop offset="0.622" stop-color="#faff00"/><stop offset="0.624" stop-color="#fffe00"/><stop offset="0.648" stop-color="#ffe400"/><stop offset="0.680" stop-color="#ffb300"/><stop offset="0.713" stop-color="#ff7d00"/><stop offset="0.892" stop-color="#fe0000"/><stop offset="0.999" stop-color="#d60000"/></linearGradient><linearGradient id="v37" x1="0" y1="0" x2="0" y2="1"><stop offset="0.001" stop-color="#ff00ff"/><stop offset="0.094" stop-color="#ff00ff"/><stop offset="0.208" stop-color="#0000ff"/><stop offset="0.310" stop-color="#007aff"/><stop offset="0.334" stop-color="#0095ff"/><stop offset="0.359" stop-color="#00d3ff"/><stop offset="0.373" stop-color="#00fefe"/><stop offset="0.415" stop-color="#00ff04"/><stop offset="0.420" stop-color="#10ff00"/><stop offset="0.455" stop-color="#99ff00"/><stop offset="0.487" stop-color="#9eff00"/><stop offset="0.515" stop-color="#90ff00"/><stop offset="0.541" stop-color="#7bff00"/><stop offset="0.559" stop-color="#7cff00"/><stop offset="0.580" stop-color="#93ff00"/><stop offset="0.599" stop-color="#b1ff00"/><stop offset="0.620" stop-color="#eeff00"/><stop offset="0.624" stop-color="#fffe00"/><stop offset="0.648" stop-color="#ffe400"/><stop offset="0.683" stop-color="#ffaf00"/><stop offset="0.713" stop-color="#ff7d00"/><stop offset="0.894" stop-color="#fe0000"/><stop offset="0.999" stop-color="#d70000"/></linearGradient><linearGradient id="v38" x1="0" y1="0" x2="0" y2="1"><stop offset="0.001" stop-color="#ff00ff"/><stop offset="0.094" stop-color="#ff00ff"/><stop offset="0.201" stop-color="#1200ff"/><stop offset="0.208" stop-color="#0100ff"/><stop offset="0.278" stop-color="#005cff"/><stop offset="0.331" stop-color="#0099ff"/><stop offset="0.359" stop-color="#00dbff"/><stop offset="0.371" stop-color="#00fdfe"/><stop offset="0.383" stop-color="#00ffbc"/><stop offset="0.413" stop-color="#00ff09"/><stop offset="0.415" stop-color="#03ff00"/><stop offset="0.452" stop-color="#92ff00"/><stop offset="0.455" stop-color="#98ff00"/><stop offset="0.487" stop-color="#9eff00"/><stop offset="0.515" stop-color="#91ff00"/><stop offset="0.541" stop-color="#7dff00"/><stop offset="0.559" stop-color="#7eff00"/><stop offset="0.583" stop-color="#98ff00"/><stop offset="0.597" stop-color="#adff00"/><stop offset="0.620" stop-color="#f1ff00"/><stop offset="0.622" stop-color="#fdff00"/><stop offset="0.645" stop-color="#ffe600"/><stop offset="0.683" stop-color="#ffae00"/><stop offset="0.713" stop-color="#ff7d00"/><stop offset="0.894" stop-color="#fe0000"/><stop offset="0.999" stop-color="#d90000"/></linearGradient><linearGradient id="v39" x1="0" y1="0" x2="0" y2="1"><stop offset="0.001" stop-color="#ff00ff"/><stop offset="0.094" stop-color="#fd00ff"/><stop offset="0.199" stop-color="#1a00ff"/><stop offset="0.208" stop-color="#0200ff"/><stop offset="0.276" stop-color="#005fff"/><stop offset="0.322" stop-color="#0093ff"/><stop offset="0.331" stop-color="#00a2ff"/><stop offset="0.355" stop-color="#00d8ff"/><stop offset="0.366" stop-color="#00f9ff"/><stop offset="0.369" stop-color="#00fefc"/><stop offset="0.410" stop-color="#00ff0a"/><stop offset="0.413" stop-color="#02ff00"/><stop offset="0.452" stop-color="#93ff00"/><stop offset="0.459" stop-color="#99ff00"/><stop offset="0.497" stop-color="#9dff00"/><stop offset="0.517" stop-color="#92ff00"/><stop offset="0.543" stop-color="#82ff00"/><stop offset="0.562" stop-color="#86ff00"/><stop offset="0.587" stop-color="#a3ff00"/><stop offset="0.597" stop-color="#b1ff00"/><stop offset="0.620" stop-color="#f6ff00"/><stop offset="0.622" stop-color="#fffe00"/><stop offset="0.645" stop-color="#ffe500"/><stop offset="0.683" stop-color="#ffad00"/><stop offset="0.713" stop-color="#ff7d00"/><stop offset="0.897" stop-color="#fe0000"/><stop offset="0.999" stop-color="#da0000"/></linearGradient><linearGradient id="v40" x1="0" y1="0" x2="0" y2="1"><stop offset="0.001" stop-color="#ff00ff"/><stop offset="0.092" stop-color="#ff00ff"/><stop offset="0.201" stop-color="#1600ff"/><stop offset="0.210" stop-color="#0001ff"/><stop offset="0.283" stop-color="#0065ff"/><stop offset="0.324" stop-color="#0099ff"/><stop offset="0.352" stop-color="#00daff"/><stop offset="0.364" stop-color="#00fcfe"/><stop offset="0.369" stop-color="#00ffeb"/><stop offset="0.408" stop-color="#00ff0b"/><stop offset="0.410" stop-color="#02ff01"/><stop offset="0.452" stop-color="#93ff00"/><stop offset="0.497" stop-color="#9eff00"/><stop offset="0.515" stop-color="#99ff00"/><stop offset="0.545" stop-color="#8cff00"/><stop offset="0.566" stop-color="#94ff00"/><stop offset="0.597" stop-color="#b7ff00"/><stop offset="0.617" stop-color="#f1ff00"/><stop offset="0.620" stop-color="#fcff00"/><stop offset="0.641" stop-color="#ffeb00"/><stop offset="0.685" stop-color="#ffa900"/><stop offset="0.713" stop-color="#ff7d00"/><stop offset="0.897" stop-color="#fe0000"/><stop offset="0.999" stop-color="#dc0000"/></linearGradient><linearGradient id="v41" x1="0" y1="0" x2="0" y2="1"><stop offset="0.001" stop-color="#ff00ff"/><stop offset="0.092" stop-color="#ff00ff"/><stop offset="0.208" stop-color="#0900ff"/><stop offset="0.213" stop-color="#0001ff"/><stop offset="0.322" stop-color="#0096ff"/><stop offset="0.350" stop-color="#00daff"/><stop offset="0.362" stop-color="#00fdfe"/><stop offset="0.376" stop-color="#00ffb5"/><stop offset="0.408" stop-color="#01ff01"/><stop offset="0.452" stop-color="#91ff00"/><stop offset="0.510" stop-color="#a0ff00"/><stop offset="0.550" stop-color="#98ff00"/><stop offset="0.576" stop-color="#a6ff00"/><stop offset="0.594" stop-color="#b9ff00"/><stop offset="0.620" stop-color="#fffe00"/><stop offset="0.643" stop-color="#ffe600"/><stop offset="0.685" stop-color="#ffa800"/><stop offset="0.713" stop-color="#ff7d00"/><stop offset="0.897" stop-color="#fe0000"/><stop offset="0.999" stop-color="#dd0000"/></linearGradient><linearGradient id="v42" x1="0" y1="0" x2="0" y2="1"><stop offset="0.001" stop-color="#ff00ff"/><stop offset="0.092" stop-color="#ff00ff"/><stop offset="0.215" stop-color="#0001ff"/><stop offset="0.287" stop-color="#0061ff"/><stop offset="0.320" stop-color="#0091ff"/><stop offset="0.348" stop-color="#00d7ff"/><stop offset="0.359" stop-color="#00fbff"/><stop offset="0.362" stop-color="#00fff9"/><stop offset="0.406" stop-color="#00ff06"/><stop offset="0.408" stop-color="#04ff00"/><stop offset="0.448" stop-color="#81ff00"/><stop offset="0.452" stop-color="#8eff00"/><stop offset="0.490" stop-color="#9aff00"/><stop offset="0.510" stop-color="#a3ff00"/><stop offset="0.557" stop-color="#a6ff00"/><stop offset="0.590" stop-color="#bcff00"/><stop offset="0.601" stop-color="#d7ff00"/><stop offset="0.615" stop-color="#fcff00"/><stop offset="0.629" stop-color="#fff300"/><stop offset="0.673" stop-color="#ffba00"/><stop offset="0.713" stop-color="#ff7d00"/><stop offset="0.899" stop-color="#fe0000"/><stop offset="0.999" stop-color="#de0000"/></linearGradient><linearGradient id="v43" x1="0" y1="0" x2="0" y2="1"><stop offset="0.001" stop-color="#ff00ff"/><stop offset="0.092" stop-color="#fd00ff"/><stop offset="0.215" stop-color="#0200ff"/><stop offset="0.280" stop-color="#0053ff"/><stop offset="0.322" stop-color="#0093ff"/><stop offset="0.348" stop-color="#00d4ff"/><stop offset="0.362" stop-color="#00fffd"/><stop offset="0.406" stop-color="#00ff07"/><stop offset="0.408" stop-color="#03ff00"/><stop offset="0.443" stop-color="#72ff00"/><stop offset="0.452" stop-color="#89ff00"/><stop offset="0.480" stop-color="#90ff00"/><stop offset="0.510" stop-color="#a6ff00"/><stop offset="0.571" stop-color="#b8ff00"/><stop offset="0.587" stop-color="#c3ff00"/><stop offset="0.610" stop-color="#fdfe00"/><stop offset="0.638" stop-color="#ffe500"/><stop offset="0.673" stop-color="#ffb900"/><stop offset="0.713" stop-color="#ff7d00"/><stop offset="0.899" stop-color="#fe0000"/><stop offset="0.999" stop-color="#e00000"/></linearGradient><linearGradient id="v44" x1="0" y1="0" x2="0" y2="1"><stop offset="0.001" stop-color="#ff00ff"/><stop offset="0.090" stop-color="#ff00ff"/><stop offset="0.217" stop-color="#0000ff"/><stop offset="0.283" stop-color="#0053ff"/><stop offset="0.322" stop-color="#008fff"/><stop offset="0.350" stop-color="#00d7ff"/><stop offset="0.362" stop-color="#00fcff"/><stop offset="0.364" stop-color="#00fff8"/><stop offset="0.408" stop-color="#00ff01"/><stop offset="0.441" stop-color="#69ff00"/><stop offset="0.450" stop-color="#84ff00"/><stop offset="0.480" stop-color="#8cff00"/><stop offset="0.513" stop-color="#a9ff00"/><stop offset="0.583" stop-color="#c7ff00"/><stop offset="0.606" stop-color="#fefe00"/><stop offset="0.641" stop-color="#ffde00"/><stop offset="0.671" stop-color="#ffbc00"/><stop offset="0.713" stop-color="#ff7d00"/><stop offset="0.901" stop-color="#fe0000"/><stop offset="0.999" stop-color="#e10000"/></linearGradient><linearGradient id="v45" x1="0" y1="0" x2="0" y2="1"><stop offset="0.001" stop-color="#ff00ff"/><stop offset="0.090" stop-color="#ff00ff"/><stop offset="0.217" stop-color="#0100ff"/><stop offset="0.283" stop-color="#0051ff"/><stop offset="0.324" stop-color="#0091ff"/><stop offset="0.352" stop-color="#00d9ff"/><stop offset="0.364" stop-color="#00feff"/><stop offset="0.408" stop-color="#00ff05"/><stop offset="0.410" stop-color="#04ff00"/><stop offset="0.438" stop-color="#61ff00"/><stop offset="0.450" stop-color="#83ff00"/><stop offset="0.476" stop-color="#85ff00"/><stop offset="0.524" stop-color="#b4ff00"/><stop offset="0.578" stop-color="#caff00"/><stop offset="0.599" stop-color="#fdff00"/><stop offset="0.641" stop-color="#ffdb00"/><stop offset="0.669" stop-color="#ffbe00"/><stop offset="0.713" stop-color="#ff7d00"/><stop offset="0.901" stop-color="#fe0000"/><stop offset="0.999" stop-color="#e30000"/></linearGradient><linearGradient id="v46" x1="0" y1="0" x2="0" y2="1"><stop offset="0.001" stop-color="#ff00ff"/><stop offset="0.090" stop-color="#fe00ff"/><stop offset="0.217" stop-color="#0200ff"/><stop offset="0.283" stop-color="#0050ff"/><stop offset="0.327" stop-color="#0093ff"/><stop offset="0.352" stop-color="#00d4ff"/><stop offset="0.366" stop-color="#00fffd"/><stop offset="0.410" stop-color="#01ff00"/><stop offset="0.441" stop-color="#69ff00"/><stop offset="0.450" stop-color="#83ff00"/><stop offset="0.473" stop-color="#83ff00"/><stop offset="0.492" stop-color="#95ff00"/><stop offset="0.527" stop-color="#b9ff00"/><stop offset="0.576" stop-color="#cdff00"/><stop offset="0.597" stop-color="#fffe00"/><stop offset="0.655" stop-color="#ffce00"/><stop offset="0.671" stop-color="#ffbb00"/><stop offset="0.710" stop-color="#ff7e00"/><stop offset="0.901" stop-color="#fe0000"/><stop offset="0.999" stop-color="#e40000"/></linearGradient><linearGradient id="v47" x1="0" y1="0" x2="0" y2="1"><stop offset="0.001" stop-color="#ff00ff"/><stop offset="0.090" stop-color="#fe00ff"/><stop offset="0.220" stop-color="#0001ff"/><stop offset="0.287" stop-color="#0055ff"/><stop offset="0.327" stop-color="#008fff"/><stop offset="0.355" stop-color="#00d6ff"/><stop offset="0.366" stop-color="#00fbff"/><stop offset="0.369" stop-color="#00fff9"/><stop offset="0.410" stop-color="#00ff04"/><stop offset="0.417" stop-color="#18ff00"/><stop offset="0.445" stop-color="#7cff00"/><stop offset="0.448" stop-color="#84ff00"/><stop offset="0.476" stop-color="#86ff00"/><stop offset="0.497" stop-color="#9dff00"/><stop offset="0.531" stop-color="#bfff00"/><stop offset="0.576" stop-color="#d0ff00"/><stop offset="0.594" stop-color="#fdff00"/><stop offset="0.648" stop-color="#ffd500"/><stop offset="0.669" stop-color="#ffc000"/><stop offset="0.708" stop-color="#ff7e00"/><stop offset="0.903" stop-color="#fe0000"/><stop offset="0.999" stop-color="#e50000"/></linearGradient><linearGradient id="v48" x1="0" y1="0" x2="0" y2="1"><stop offset="0.001" stop-color="#ff00ff"/><stop offset="0.090" stop-color="#fd00ff"/><stop offset="0.220" stop-color="#0001ff"/><stop offset="0.290" stop-color="#0057ff"/><stop offset="0.329" stop-color="#0091ff"/><stop offset="0.357" stop-color="#00d9ff"/><stop offset="0.369" stop-color="#00feff"/><stop offset="0.394" stop-color="#00ff69"/><stop offset="0.410" stop-color="#00ff09"/><stop offset="0.413" stop-color="#03ff00"/><stop offset="0.443" stop-color="#7bff00"/><stop offset="0.448" stop-color="#88ff00"/><stop offset="0.473" stop-color="#8aff00"/><stop offset="0.494" stop-color="#9eff00"/><stop offset="0.531" stop-color="#c1ff00"/><stop offset="0.576" stop-color="#d1ff00"/><stop offset="0.594" stop-color="#fdff00"/><stop offset="0.659" stop-color="#ffcb00"/><stop offset="0.671" stop-color="#ffbe00"/><stop offset="0.706" stop-color="#ff7f00"/><stop offset="0.903" stop-color="#fe0000"/><stop offset="0.999" stop-color="#e70000"/></linearGradient><linearGradient id="v49" x1="0" y1="0" x2="0" y2="1"><stop offset="0.001" stop-color="#ff00ff"/><stop offset="0.090" stop-color="#fc00ff"/><stop offset="0.220" stop-color="#0000ff"/><stop offset="0.290" stop-color="#0056ff"/><stop offset="0.329" stop-color="#008eff"/><stop offset="0.357" stop-color="#00d6ff"/><stop offset="0.369" stop-color="#00fbff"/><stop offset="0.371" stop-color="#00fff8"/><stop offset="0.410" stop-color="#00ff0b"/><stop offset="0.413" stop-color="#01ff00"/><stop offset="0.445" stop-color="#8cff00"/><stop offset="0.478" stop-color="#94ff00"/><stop offset="0.524" stop-color="#beff00"/><stop offset="0.573" stop-color="#d1ff00"/><stop offset="0.578" stop-color="#d4ff00"/><stop offset="0.597" stop-color="#ffff00"/><stop offset="0.669" stop-color="#ffc400"/><stop offset="0.706" stop-color="#ff7d00"/><stop offset="0.903" stop-color="#fe0000"/><stop offset="0.999" stop-color="#e80000"/></linearGradient><linearGradient id="v50" x1="0" y1="0" x2="0" y2="1"><stop offset="0.001" stop-color="#ff00ff"/><stop offset="0.087" stop-color="#fe00ff"/><stop offset="0.222" stop-color="#0001ff"/><stop offset="0.287" stop-color="#0051ff"/><stop offset="0.329" stop-color="#008fff"/><stop offset="0.357" stop-color="#00d8ff"/><stop offset="0.369" stop-color="#00fdff"/><stop offset="0.378" stop-color="#00ffca"/><stop offset="0.410" stop-color="#00ff06"/><stop offset="0.413" stop-color="#05ff00"/><stop offset="0.443" stop-color="#8cff00"/><stop offset="0.445" stop-color="#91ff00"/><stop offset="0.478" stop-color="#9bff00"/><stop offset="0.520" stop-color="#bcff00"/><stop offset="0.576" stop-color="#d1ff00"/><stop offset="0.583" stop-color="#d7ff00"/><stop offset="0.599" stop-color="#fcff00"/><stop offset="0.650" stop-color="#ffd600"/><stop offset="0.671" stop-color="#ffc200"/><stop offset="0.703" stop-color="#ff7e00"/><stop offset="0.903" stop-color="#fe0000"/><stop offset="0.999" stop-color="#ea0000"/></linearGradient><linearGradient id="v51" x1="0" y1="0" x2="0" y2="1"><stop offset="0.001" stop-color="#ff00ff"/><stop offset="0.087" stop-color="#fd00ff"/><stop offset="0.217" stop-color="#0a00ff"/><stop offset="0.224" stop-color="#0002ff"/><stop offset="0.283" stop-color="#0046ff"/><stop offset="0.327" stop-color="#008bff"/><stop offset="0.355" stop-color="#00d5ff"/><stop offset="0.366" stop-color="#00fbff"/><stop offset="0.369" stop-color="#00fff8"/><stop offset="0.408" stop-color="#00ff0b"/><stop offset="0.410" stop-color="#02ff00"/><stop offset="0.443" stop-color="#94ff00"/><stop offset="0.485" stop-color="#a7ff00"/><stop offset="0.513" stop-color="#baff00"/><stop offset="0.585" stop-color="#d3ff00"/><stop offset="0.606" stop-color="#fefe00"/><stop offset="0.652" stop-color="#ffd600"/><stop offset="0.673" stop-color="#ffc000"/><stop offset="0.703" stop-color="#ff7e00"/><stop offset="0.903" stop-color="#ff0000"/><stop offset="0.999" stop-color="#eb0000"/></linearGradient><linearGradient id="v52" x1="0" y1="0" x2="0" y2="1"><stop offset="0.001" stop-color="#ff00ff"/><stop offset="0.087" stop-color="#fd00ff"/><stop offset="0.203" stop-color="#2400ff"/><stop offset="0.227" stop-color="#0002ff"/><stop offset="0.278" stop-color="#003aff"/><stop offset="0.324" stop-color="#0086ff"/><stop offset="0.352" stop-color="#00d2ff"/><stop offset="0.364" stop-color="#00f9ff"/><stop offset="0.366" stop-color="#00fffc"/><stop offset="0.408" stop-color="#00ff02"/><stop offset="0.441" stop-color="#93ff00"/><stop offset="0.445" stop-color="#99ff00"/><stop offset="0.492" stop-color="#b1ff00"/><stop offset="0.534" stop-color="#c3ff00"/><stop offset="0.590" stop-color="#d3ff00"/><stop offset="0.610" stop-color="#fdff00"/><stop offset="0.645" stop-color="#ffe100"/><stop offset="0.673" stop-color="#ffc200"/><stop offset="0.703" stop-color="#ff7e00"/><stop offset="0.906" stop-color="#fe0000"/><stop offset="0.999" stop-color="#ec0000"/></linearGradient><linearGradient id="v53" x1="0" y1="0" x2="0" y2="1"><stop offset="0.001" stop-color="#ff00ff"/><stop offset="0.087" stop-color="#fb00ff"/><stop offset="0.203" stop-color="#2500ff"/><stop offset="0.227" stop-color="#0000ff"/><stop offset="0.278" stop-color="#0037ff"/><stop offset="0.322" stop-color="#0083ff"/><stop offset="0.350" stop-color="#00cfff"/><stop offset="0.364" stop-color="#00fefe"/><stop offset="0.406" stop-color="#00ff06"/><stop offset="0.408" stop-color="#06ff00"/><stop offset="0.441" stop-color="#9aff00"/><stop offset="0.508" stop-color="#bbff00"/><stop offset="0.594" stop-color="#d2ff00"/><stop offset="0.617" stop-color="#fefe00"/><stop offset="0.648" stop-color="#ffe200"/><stop offset="0.676" stop-color="#ffc000"/><stop offset="0.703" stop-color="#ff7e00"/><stop offset="0.906" stop-color="#fe0000"/><stop offset="0.999" stop-color="#ee0000"/></linearGradient><linearGradient id="v54" x1="0" y1="0" x2="0" y2="1"><stop offset="0.001" stop-color="#ff00ff"/><stop offset="0.085" stop-color="#fb00ff"/><stop offset="0.094" stop-color="#ec00ff"/><stop offset="0.208" stop-color="#1d00ff"/><stop offset="0.227" stop-color="#0001ff"/><stop offset="0.280" stop-color="#003dff"/><stop offset="0.322" stop-color="#008aff"/><stop offset="0.350" stop-color="#00d6ff"/><stop offset="0.362" stop-color="#00fdff"/><stop offset="0.366" stop-color="#00ffe6"/><stop offset="0.403" stop-color="#00ff0a"/><stop offset="0.406" stop-color="#03ff00"/><stop offset="0.438" stop-color="#97ff00"/><stop offset="0.443" stop-color="#9dff00"/><stop offset="0.506" stop-color="#baff00"/><stop offset="0.585" stop-color="#cdff00"/><stop offset="0.601" stop-color="#d4ff00"/><stop offset="0.622" stop-color="#fdff00"/><stop offset="0.648" stop-color="#ffe700"/><stop offset="0.676" stop-color="#ffc200"/><stop offset="0.703" stop-color="#ff7e00"/><stop offset="0.906" stop-color="#ff0000"/><stop offset="0.999" stop-color="#ef0000"/></linearGradient><linearGradient id="v55" x1="0" y1="0" x2="0" y2="1"><stop offset="0.001" stop-color="#ff00ff"/><stop offset="0.083" stop-color="#f900ff"/><stop offset="0.090" stop-color="#f300ff"/><stop offset="0.224" stop-color="#0001ff"/><stop offset="0.280" stop-color="#0042ff"/><stop offset="0.322" stop-color="#0091ff"/><stop offset="0.348" stop-color="#00d4ff"/><stop offset="0.359" stop-color="#00faff"/><stop offset="0.362" stop-color="#00fffb"/><stop offset="0.403" stop-color="#00ff02"/><stop offset="0.438" stop-color="#9cff00"/><stop offset="0.506" stop-color="#b9ff00"/><stop offset="0.562" stop-color="#c3ff00"/><stop offset="0.606" stop-color="#d4ff00"/><stop offset="0.629" stop-color="#fefe00"/><stop offset="0.652" stop-color="#ffe700"/><stop offset="0.678" stop-color="#ffbf00"/><stop offset="0.703" stop-color="#ff7e00"/><stop offset="0.906" stop-color="#ff0000"/><stop offset="0.999" stop-color="#f10000"/></linearGradient><linearGradient id="v56" x1="0" y1="0" x2="0" y2="1"><stop offset="0.001" stop-color="#ff00ff"/><stop offset="0.073" stop-color="#fa00ff"/><stop offset="0.087" stop-color="#f500ff"/><stop offset="0.187" stop-color="#4100ff"/><stop offset="0.222" stop-color="#0000ff"/><stop offset="0.280" stop-color="#0046ff"/><stop offset="0.322" stop-color="#0093ff"/><stop offset="0.348" stop-color="#00d4ff"/><stop offset="0.359" stop-color="#00f9ff"/><stop offset="0.362" stop-color="#00fffc"/><stop offset="0.401" stop-color="#00ff08"/><stop offset="0.403" stop-color="#05ff00"/><stop offset="0.436" stop-color="#98ff00"/><stop offset="0.441" stop-color="#9eff00"/><stop offset="0.503" stop-color="#b8ff00"/><stop offset="0.552" stop-color="#bcff00"/><stop offset="0.610" stop-color="#d3ff00"/><stop offset="0.634" stop-color="#fefe00"/><stop offset="0.655" stop-color="#ffe900"/><stop offset="0.678" stop-color="#ffc200"/><stop offset="0.701" stop-color="#ff8100"/><stop offset="0.906" stop-color="#ff0000"/><stop offset="0.999" stop-color="#f20000"/></linearGradient><linearGradient id="v57" x1="0" y1="0" x2="0" y2="1"><stop offset="0.001" stop-color="#ff00ff"/><stop offset="0.066" stop-color="#fa00ff"/><stop offset="0.085" stop-color="#f500ff"/><stop offset="0.129" stop-color="#aa00ff"/><stop offset="0.201" stop-color="#2600ff"/><stop offset="0.222" stop-color="#0001ff"/><stop offset="0.283" stop-color="#004eff"/><stop offset="0.324" stop-color="#0097ff"/><stop offset="0.350" stop-color="#00d7ff"/><stop offset="0.362" stop-color="#00fbff"/><stop offset="0.364" stop-color="#00fff8"/><stop offset="0.401" stop-color="#00ff07"/><stop offset="0.403" stop-color="#06ff00"/><stop offset="0.436" stop-color="#9aff00"/><stop offset="0.485" stop-color="#b1ff00"/><stop offset="0.510" stop-color="#b4ff00"/><stop offset="0.550" stop-color="#b7ff00"/><stop offset="0.613" stop-color="#d3ff00"/><stop offset="0.636" stop-color="#ffff00"/><stop offset="0.657" stop-color="#ffe900"/><stop offset="0.680" stop-color="#ffbd00"/><stop offset="0.701" stop-color="#ff8100"/><stop offset="0.908" stop-color="#ff0000"/><stop offset="0.999" stop-color="#f30000"/></linearGradient><linearGradient id="v58" x1="0" y1="0" x2="0" y2="1"><stop offset="0.001" stop-color="#ff00ff"/><stop offset="0.062" stop-color="#fa00ff"/><stop offset="0.085" stop-color="#f200ff"/><stop offset="0.115" stop-color="#bd00ff"/><stop offset="0.159" stop-color="#7500ff"/><stop offset="0.210" stop-color="#1200ff"/><stop offset="0.220" stop-color="#0000ff"/><stop offset="0.285" stop-color="#0056ff"/><stop offset="0.327" stop-color="#009aff"/><stop offset="0.352" stop-color="#00d8ff"/><stop offset="0.364" stop-color="#00fcff"/><stop offset="0.366" stop-color="#00fff7"/><stop offset="0.403" stop-color="#02ff00"/><stop offset="0.436" stop-color="#99ff00"/><stop offset="0.452" stop-color="#a4ff00"/><stop offset="0.501" stop-color="#b3ff00"/><stop offset="0.541" stop-color="#b0ff00"/><stop offset="0.613" stop-color="#d2ff00"/><stop offset="0.636" stop-color="#feff00"/><stop offset="0.657" stop-color="#ffe900"/><stop offset="0.680" stop-color="#ffbd00"/><stop offset="0.701" stop-color="#ff8000"/><stop offset="0.908" stop-color="#ff0000"/><stop offset="0.999" stop-color="#f50000"/></linearGradient><linearGradient id="v59" x1="0" y1="0" x2="0" y2="1"><stop offset="0.001" stop-color="#ff00ff"/><stop offset="0.059" stop-color="#fa00ff"/><stop offset="0.085" stop-color="#ef00ff"/><stop offset="0.110" stop-color="#c000ff"/><stop offset="0.152" stop-color="#8000ff"/><stop offset="0.203" stop-color="#2000ff"/><stop offset="0.220" stop-color="#0001ff"/><stop offset="0.290" stop-color="#005fff"/><stop offset="0.329" stop-color="#009cff"/><stop offset="0.355" stop-color="#00d9ff"/><stop offset="0.366" stop-color="#00fcff"/><stop offset="0.369" stop-color="#00fff7"/><stop offset="0.403" stop-color="#00ff07"/><stop offset="0.406" stop-color="#06ff00"/><stop offset="0.436" stop-color="#97ff00"/><stop offset="0.441" stop-color="#9eff00"/><stop offset="0.490" stop-color="#afff00"/><stop offset="0.515" stop-color="#acff00"/><stop offset="0.548" stop-color="#aeff00"/><stop offset="0.613" stop-color="#d2ff00"/><stop offset="0.636" stop-color="#ffff00"/><stop offset="0.657" stop-color="#ffe800"/><stop offset="0.678" stop-color="#ffc300"/><stop offset="0.701" stop-color="#ff7f00"/><stop offset="0.908" stop-color="#ff0000"/><stop offset="0.999" stop-color="#f60000"/></linearGradient><linearGradient id="v60" x1="0" y1="0" x2="0" y2="1"><stop offset="0.001" stop-color="#ff00ff"/><stop offset="0.057" stop-color="#fa00ff"/><stop offset="0.085" stop-color="#ea00ff"/><stop offset="0.108" stop-color="#bf00ff"/><stop offset="0.150" stop-color="#8300ff"/><stop offset="0.206" stop-color="#1b00ff"/><stop offset="0.220" stop-color="#0001ff"/><stop offset="0.292" stop-color="#0060ff"/><stop offset="0.329" stop-color="#0095ff"/><stop offset="0.357" stop-color="#00d9ff"/><stop offset="0.369" stop-color="#00fcff"/><stop offset="0.371" stop-color="#00fff6"/><stop offset="0.406" stop-color="#01ff01"/><stop offset="0.436" stop-color="#94ff00"/><stop offset="0.438" stop-color="#9cff00"/><stop offset="0.485" stop-color="#adff00"/><stop offset="0.508" stop-color="#abff00"/><stop offset="0.541" stop-color="#a7ff00"/><stop offset="0.578" stop-color="#bbff00"/><stop offset="0.610" stop-color="#ceff00"/><stop offset="0.636" stop-color="#fffe00"/><stop offset="0.655" stop-color="#ffeb00"/><stop offset="0.678" stop-color="#ffc200"/><stop offset="0.701" stop-color="#ff7f00"/><stop offset="0.908" stop-color="#ff0000"/><stop offset="0.999" stop-color="#f80000"/></linearGradient><linearGradient id="v61" x1="0" y1="0" x2="0" y2="1"><stop offset="0.001" stop-color="#ff00ff"/><stop offset="0.055" stop-color="#fa00ff"/><stop offset="0.083" stop-color="#ea00ff"/><stop offset="0.103" stop-color="#c100ff"/><stop offset="0.148" stop-color="#8600ff"/><stop offset="0.215" stop-color="#0a00ff"/><stop offset="0.222" stop-color="#0002ff"/><stop offset="0.294" stop-color="#005eff"/><stop offset="0.331" stop-color="#0093ff"/><stop offset="0.359" stop-color="#00d9ff"/><stop offset="0.371" stop-color="#00fdff"/><stop offset="0.373" stop-color="#00fff3"/><stop offset="0.406" stop-color="#00ff09"/><stop offset="0.408" stop-color="#06ff00"/><stop offset="0.438" stop-color="#9cff00"/><stop offset="0.483" stop-color="#acff00"/><stop offset="0.503" stop-color="#aaff00"/><stop offset="0.536" stop-color="#a2ff00"/><stop offset="0.566" stop-color="#b0ff00"/><stop offset="0.610" stop-color="#ceff00"/><stop offset="0.634" stop-color="#fdff00"/><stop offset="0.655" stop-color="#ffea00"/><stop offset="0.678" stop-color="#ffc100"/><stop offset="0.701" stop-color="#ff7e00"/><stop offset="0.908" stop-color="#ff0000"/><stop offset="0.999" stop-color="#f90000"/></linearGradient><linearGradient id="v62" x1="0" y1="0" x2="0" y2="1"><stop offset="0.001" stop-color="#ff00ff"/><stop offset="0.052" stop-color="#fa00ff"/><stop offset="0.083" stop-color="#e500ff"/><stop offset="0.101" stop-color="#bf00ff"/><stop offset="0.148" stop-color="#8400ff"/><stop offset="0.222" stop-color="#0001ff"/><stop offset="0.294" stop-color="#005bff"/><stop offset="0.331" stop-color="#008fff"/><stop offset="0.359" stop-color="#00d5ff"/><stop offset="0.371" stop-color="#00f9ff"/><stop offset="0.373" stop-color="#00fffb"/><stop offset="0.406" stop-color="#00ff0a"/><stop offset="0.408" stop-color="#05ff00"/><stop offset="0.438" stop-color="#9cff00"/><stop offset="0.480" stop-color="#abff00"/><stop offset="0.501" stop-color="#a9ff00"/><stop offset="0.534" stop-color="#9fff00"/><stop offset="0.559" stop-color="#a9ff00"/><stop offset="0.610" stop-color="#cfff00"/><stop offset="0.634" stop-color="#ffff00"/><stop offset="0.655" stop-color="#ffe900"/><stop offset="0.678" stop-color="#ffc000"/><stop offset="0.701" stop-color="#ff7e00"/><stop offset="0.910" stop-color="#ff0000"/><stop offset="0.999" stop-color="#fa0000"/></linearGradient><linearGradient id="v63" x1="0" y1="0" x2="0" y2="1"><stop offset="0.001" stop-color="#ff00ff"/><stop offset="0.052" stop-color="#fa00ff"/><stop offset="0.080" stop-color="#e600ff"/><stop offset="0.099" stop-color="#be00ff"/><stop offset="0.129" stop-color="#9b00ff"/><stop offset="0.159" stop-color="#7000ff"/><stop offset="0.222" stop-color="#0000ff"/><stop offset="0.294" stop-color="#0059ff"/><stop offset="0.331" stop-color="#008eff"/><stop offset="0.359" stop-color="#00d4ff"/><stop offset="0.371" stop-color="#00f9ff"/><stop offset="0.373" stop-color="#00fffc"/><stop offset="0.406" stop-color="#00ff03"/><stop offset="0.415" stop-color="#2dff00"/><stop offset="0.436" stop-color="#96ff00"/><stop offset="0.441" stop-color="#9eff00"/><stop offset="0.480" stop-color="#abff00"/><stop offset="0.501" stop-color="#a8ff00"/><stop offset="0.534" stop-color="#9dff00"/><stop offset="0.559" stop-color="#a7ff00"/><stop offset="0.610" stop-color="#d0ff00"/><stop offset="0.634" stop-color="#fffe00"/><stop offset="0.655" stop-color="#ffe800"/><stop offset="0.678" stop-color="#ffbf00"/><stop offset="0.701" stop-color="#ff7e00"/><stop offset="0.910" stop-color="#ff0000"/><stop offset="0.999" stop-color="#fc0000"/></linearGradient><linearGradient id="v64" x1="0" y1="0" x2="0" y2="1"><stop offset="0.001" stop-color="#ff00ff"/><stop offset="0.050" stop-color="#fa00ff"/><stop offset="0.078" stop-color="#e600ff"/><stop offset="0.099" stop-color="#ba00ff"/><stop offset="0.124" stop-color="#9d00ff"/><stop offset="0.150" stop-color="#7e00ff"/><stop offset="0.222" stop-color="#0000ff"/><stop offset="0.292" stop-color="#0056ff"/><stop offset="0.331" stop-color="#008eff"/><stop offset="0.359" stop-color="#00d5ff"/><stop offset="0.371" stop-color="#00faff"/><stop offset="0.373" stop-color="#00fff9"/><stop offset="0.403" stop-color="#00ff0b"/><stop offset="0.406" stop-color="#05ff00"/><stop offset="0.436" stop-color="#9bff00"/><stop offset="0.476" stop-color="#abff00"/><stop offset="0.499" stop-color="#a9ff00"/><stop offset="0.531" stop-color="#9cff00"/><stop offset="0.557" stop-color="#a5ff00"/><stop offset="0.608" stop-color="#ccff00"/><stop offset="0.634" stop-color="#fffe00"/><stop offset="0.652" stop-color="#ffec00"/><stop offset="0.678" stop-color="#ffbe00"/><stop offset="0.701" stop-color="#ff7e00"/><stop offset="0.910" stop-color="#ff0000"/><stop offset="0.999" stop-color="#fd0000"/></linearGradient><linearGradient id="v65" x1="0" y1="0" x2="0" y2="1"><stop offset="0.001" stop-color="#ff00ff"/><stop offset="0.050" stop-color="#fa00ff"/><stop offset="0.078" stop-color="#e400ff"/><stop offset="0.097" stop-color="#ba00ff"/><stop offset="0.115" stop-color="#a300ff"/><stop offset="0.143" stop-color="#8700ff"/><stop offset="0.197" stop-color="#2d00ff"/><stop offset="0.222" stop-color="#0000ff"/><stop offset="0.292" stop-color="#0056ff"/><stop offset="0.331" stop-color="#008fff"/><stop offset="0.359" stop-color="#00d6ff"/><stop offset="0.371" stop-color="#00fbff"/><stop offset="0.373" stop-color="#00fff7"/><stop offset="0.403" stop-color="#01ff01"/><stop offset="0.434" stop-color="#94ff00"/><stop offset="0.436" stop-color="#9cff00"/><stop offset="0.478" stop-color="#acff00"/><stop offset="0.499" stop-color="#a9ff00"/><stop offset="0.531" stop-color="#9dff00"/><stop offset="0.557" stop-color="#a5ff00"/><stop offset="0.608" stop-color="#ccff00"/><stop offset="0.631" stop-color="#fdff00"/><stop offset="0.652" stop-color="#ffeb00"/><stop offset="0.678" stop-color="#ffbd00"/><stop offset="0.701" stop-color="#ff7e00"/><stop offset="0.910" stop-color="#ff0000"/><stop offset="0.999" stop-color="#ff0000"/></linearGradient><linearGradient id="v66" x1="0" y1="0" x2="0" y2="1"><stop offset="0.001" stop-color="#ff00ff"/><stop offset="0.050" stop-color="#fa00ff"/><stop offset="0.076" stop-color="#e600ff"/><stop offset="0.097" stop-color="#b700ff"/><stop offset="0.115" stop-color="#a100ff"/><stop offset="0.143" stop-color="#8600ff"/><stop offset="0.194" stop-color="#3100ff"/><stop offset="0.222" stop-color="#0000ff"/><stop offset="0.292" stop-color="#0056ff"/><stop offset="0.331" stop-color="#008fff"/><stop offset="0.359" stop-color="#00d7ff"/><stop offset="0.371" stop-color="#00fcff"/><stop offset="0.373" stop-color="#00fff4"/><stop offset="0.401" stop-color="#00ff08"/><stop offset="0.403" stop-color="#07ff00"/><stop offset="0.434" stop-color="#99ff00"/><stop offset="0.459" stop-color="#a8ff00"/><stop offset="0.494" stop-color="#adff00"/><stop offset="0.531" stop-color="#9fff00"/><stop offset="0.557" stop-color="#a7ff00"/><stop offset="0.608" stop-color="#ccff00"/><stop offset="0.631" stop-color="#fdff00"/><stop offset="0.652" stop-color="#ffeb00"/><stop offset="0.676" stop-color="#ffc300"/><stop offset="0.701" stop-color="#ff7e00"/><stop offset="0.910" stop-color="#ff0000"/><stop offset="0.999" stop-color="#ff0000"/></linearGradient><linearGradient id="v67" x1="0" y1="0" x2="0" y2="1"><stop offset="0.001" stop-color="#ff00ff"/><stop offset="0.050" stop-color="#fa00ff"/><stop offset="0.076" stop-color="#e600ff"/><stop offset="0.097" stop-color="#b700ff"/><stop offset="0.115" stop-color="#a000ff"/><stop offset="0.143" stop-color="#8500ff"/><stop offset="0.194" stop-color="#3100ff"/><stop offset="0.222" stop-color="#0000ff"/><stop offset="0.292" stop-color="#0057ff"/><stop offset="0.331" stop-color="#0090ff"/><stop offset="0.359" stop-color="#00d8ff"/><stop offset="0.371" stop-color="#00fdff"/><stop offset="0.373" stop-color="#00fff0"/><stop offset="0.399" stop-color="#00ff10"/><stop offset="0.401" stop-color="#02ff00"/><stop offset="0.434" stop-color="#9cff00"/><stop offset="0.478" stop-color="#aeff00"/><stop offset="0.497" stop-color="#aeff00"/><stop offset="0.534" stop-color="#a2ff00"/><stop offset="0.562" stop-color="#adff00"/><stop offset="0.608" stop-color="#cdff00"/><stop offset="0.631" stop-color="#fdff00"/><stop offset="0.652" stop-color="#ffeb00"/><stop offset="0.676" stop-color="#ffc200"/><stop offset="0.699" stop-color="#ff8100"/><stop offset="0.913" stop-color="#ff0000"/><stop offset="0.999" stop-color="#ff0100"/></linearGradient><linearGradient id="v68" x1="0" y1="0" x2="0" y2="1"><stop offset="0.001" stop-color="#ff00ff"/><stop offset="0.050" stop-color="#fa00ff"/><stop offset="0.078" stop-color="#e400ff"/><stop offset="0.097" stop-color="#b900ff"/><stop offset="0.115" stop-color="#a200ff"/><stop offset="0.143" stop-color="#8600ff"/><stop offset="0.197" stop-color="#2c00ff"/><stop offset="0.222" stop-color="#0000ff"/><stop offset="0.292" stop-color="#0057ff"/><stop offset="0.331" stop-color="#0091ff"/><stop offset="0.357" stop-color="#00d2ff"/><stop offset="0.371" stop-color="#00feff"/><stop offset="0.380" stop-color="#00ffad"/><stop offset="0.399" stop-color="#00ff04"/><stop offset="0.403" stop-color="#14ff00"/><stop offset="0.431" stop-color="#97ff00"/><stop offset="0.436" stop-color="#9eff00"/><stop offset="0.483" stop-color="#b1ff00"/><stop offset="0.503" stop-color="#adff00"/><stop offset="0.536" stop-color="#a6ff00"/><stop offset="0.566" stop-color="#b3ff00"/><stop offset="0.608" stop-color="#cdff00"/><stop offset="0.631" stop-color="#fdff00"/><stop offset="0.652" stop-color="#ffeb00"/><stop offset="0.676" stop-color="#ffc100"/><stop offset="0.699" stop-color="#ff8100"/><stop offset="0.913" stop-color="#ff0000"/><stop offset="0.999" stop-color="#ff0100"/></linearGradient><linearGradient id="v69" x1="0" y1="0" x2="0" y2="1"><stop offset="0.001" stop-color="#ff00ff"/><stop offset="0.050" stop-color="#fa00ff"/><stop offset="0.078" stop-color="#e600ff"/><stop offset="0.099" stop-color="#b900ff"/><stop offset="0.122" stop-color="#9f00ff"/><stop offset="0.148" stop-color="#8100ff"/><stop offset="0.222" stop-color="#0000ff"/><stop offset="0.290" stop-color="#0053ff"/><stop offset="0.331" stop-color="#0091ff"/><stop offset="0.357" stop-color="#00d2ff"/><stop offset="0.371" stop-color="#00fffe"/><stop offset="0.397" stop-color="#00ff0d"/><stop offset="0.399" stop-color="#04ff00"/><stop offset="0.431" stop-color="#9bff00"/><stop offset="0.480" stop-color="#b2ff00"/><stop offset="0.499" stop-color="#b2ff00"/><stop offset="0.536" stop-color="#abff00"/><stop offset="0.571" stop-color="#b9ff00"/><stop offset="0.608" stop-color="#ceff00"/><stop offset="0.631" stop-color="#feff00"/><stop offset="0.652" stop-color="#ffeb00"/><stop offset="0.676" stop-color="#ffc100"/><stop offset="0.699" stop-color="#ff8000"/><stop offset="0.913" stop-color="#ff0000"/><stop offset="0.999" stop-color="#ff0200"/></linearGradient><linearGradient id="v70" x1="0" y1="0" x2="0" y2="1"><stop offset="0.001" stop-color="#ff00ff"/><stop offset="0.050" stop-color="#fb00ff"/><stop offset="0.080" stop-color="#e600ff"/><stop offset="0.101" stop-color="#ba00ff"/><stop offset="0.145" stop-color="#8600ff"/><stop offset="0.222" stop-color="#0100ff"/><stop offset="0.283" stop-color="#0046ff"/><stop offset="0.329" stop-color="#008aff"/><stop offset="0.357" stop-color="#00d4ff"/><stop offset="0.369" stop-color="#00faff"/><stop offset="0.371" stop-color="#00fff9"/><stop offset="0.397" stop-color="#01ff01"/><stop offset="0.429" stop-color="#95ff00"/><stop offset="0.431" stop-color="#9dff00"/><stop offset="0.487" stop-color="#b7ff00"/><stop offset="0.538" stop-color="#b0ff00"/><stop offset="0.585" stop-color="#c4ff00"/><stop offset="0.608" stop-color="#cfff00"/><stop offset="0.631" stop-color="#feff00"/><stop offset="0.652" stop-color="#ffeb00"/><stop offset="0.676" stop-color="#ffc000"/><stop offset="0.699" stop-color="#ff7f00"/><stop offset="0.913" stop-color="#ff0000"/><stop offset="0.999" stop-color="#ff0300"/></linearGradient><linearGradient id="v71" x1="0" y1="0" x2="0" y2="1"><stop offset="0.001" stop-color="#ff00ff"/><stop offset="0.052" stop-color="#fa00ff"/><stop offset="0.083" stop-color="#e600ff"/><stop offset="0.101" stop-color="#c000ff"/><stop offset="0.148" stop-color="#8400ff"/><stop offset="0.213" stop-color="#1300ff"/><stop offset="0.224" stop-color="#0001ff"/><stop offset="0.280" stop-color="#0041ff"/><stop offset="0.327" stop-color="#0084ff"/><stop offset="0.357" stop-color="#00d5ff"/><stop offset="0.369" stop-color="#00fcff"/><stop offset="0.371" stop-color="#00fff2"/><stop offset="0.394" stop-color="#00ff09"/><stop offset="0.397" stop-color="#07ff00"/><stop offset="0.429" stop-color="#9aff00"/><stop offset="0.478" stop-color="#b6ff00"/><stop offset="0.497" stop-color="#b8ff00"/><stop offset="0.543" stop-color="#b6ff00"/><stop offset="0.608" stop-color="#d0ff00"/><stop offset="0.631" stop-color="#feff00"/><stop offset="0.652" stop-color="#ffeb00"/><stop offset="0.676" stop-color="#ffbf00"/><stop offset="0.699" stop-color="#ff7f00"/><stop offset="0.913" stop-color="#ff0000"/><stop offset="0.999" stop-color="#ff0300"/></linearGradient><linearGradient id="v72" x1="0" y1="0" x2="0" y2="1"><stop offset="0.001" stop-color="#ff00ff"/><stop offset="0.055" stop-color="#fa00ff"/><stop offset="0.085" stop-color="#e700ff"/><stop offset="0.106" stop-color="#be00ff"/><stop offset="0.148" stop-color="#8500ff"/><stop offset="0.210" stop-color="#1600ff"/><stop offset="0.224" stop-color="#0001ff"/><stop offset="0.280" stop-color="#0041ff"/><stop offset="0.327" stop-color="#0084ff"/><stop offset="0.355" stop-color="#00cfff"/><stop offset="0.369" stop-color="#00feff"/><stop offset="0.376" stop-color="#00ffba"/><stop offset="0.392" stop-color="#00ff12"/><stop offset="0.394" stop-color="#03ff00"/><stop offset="0.427" stop-color="#95ff00"/><stop offset="0.429" stop-color="#9dff00"/><stop offset="0.487" stop-color="#bbff00"/><stop offset="0.543" stop-color="#baff00"/><stop offset="0.608" stop-color="#d1ff00"/><stop offset="0.631" stop-color="#feff00"/><stop offset="0.652" stop-color="#ffeb00"/><stop offset="0.676" stop-color="#ffbf00"/><stop offset="0.699" stop-color="#ff8000"/><stop offset="0.915" stop-color="#ff0000"/><stop offset="0.999" stop-color="#ff0400"/></linearGradient><linearGradient id="v73" x1="0" y1="0" x2="0" y2="1"><stop offset="0.001" stop-color="#ff00ff"/><stop offset="0.055" stop-color="#fb00ff"/><stop offset="0.085" stop-color="#eb00ff"/><stop offset="0.108" stop-color="#c000ff"/><stop offset="0.150" stop-color="#8300ff"/><stop offset="0.222" stop-color="#0000ff"/><stop offset="0.283" stop-color="#0048ff"/><stop offset="0.327" stop-color="#0088ff"/><stop offset="0.355" stop-color="#00d2ff"/><stop offset="0.366" stop-color="#00f9ff"/><stop offset="0.369" stop-color="#00fffb"/><stop offset="0.392" stop-color="#00ff04"/><stop offset="0.397" stop-color="#14ff00"/><stop offset="0.427" stop-color="#9cff00"/><stop offset="0.487" stop-color="#bdff00"/><stop offset="0.550" stop-color="#bfff00"/><stop offset="0.608" stop-color="#d1ff00"/><stop offset="0.631" stop-color="#feff00"/><stop offset="0.652" stop-color="#ffeb00"/><stop offset="0.676" stop-color="#ffbf00"/><stop offset="0.699" stop-color="#ff8100"/><stop offset="0.915" stop-color="#ff0000"/><stop offset="0.999" stop-color="#ff0400"/></linearGradient><linearGradient id="v74" x1="0" y1="0" x2="0" y2="1"><stop offset="0.001" stop-color="#ff00ff"/><stop offset="0.059" stop-color="#fa00ff"/><stop offset="0.087" stop-color="#ed00ff"/><stop offset="0.113" stop-color="#bf00ff"/><stop offset="0.152" stop-color="#8000ff"/><stop offset="0.220" stop-color="#0100ff"/><stop offset="0.290" stop-color="#0057ff"/><stop offset="0.327" stop-color="#008dff"/><stop offset="0.355" stop-color="#00d5ff"/><stop offset="0.366" stop-color="#00fbff"/><stop offset="0.369" stop-color="#00fff3"/><stop offset="0.390" stop-color="#00ff0c"/><stop offset="0.392" stop-color="#05ff00"/><stop offset="0.424" stop-color="#99ff00"/><stop offset="0.450" stop-color="#abff00"/><stop offset="0.490" stop-color="#beff00"/><stop offset="0.557" stop-color="#c4ff00"/><stop offset="0.608" stop-color="#d2ff00"/><stop offset="0.631" stop-color="#feff00"/><stop offset="0.652" stop-color="#ffeb00"/><stop offset="0.676" stop-color="#ffc000"/><stop offset="0.701" stop-color="#ff7e00"/><stop offset="0.915" stop-color="#ff0000"/><stop offset="0.999" stop-color="#ff0500"/></linearGradient><linearGradient id="v75" x1="0" y1="0" x2="0" y2="1"><stop offset="0.001" stop-color="#ff00ff"/><stop offset="0.062" stop-color="#fa00ff"/><stop offset="0.090" stop-color="#ee00ff"/><stop offset="0.120" stop-color="#b900ff"/><stop offset="0.164" stop-color="#6b00ff"/><stop offset="0.220" stop-color="#0001ff"/><stop offset="0.299" stop-color="#0067ff"/><stop offset="0.327" stop-color="#0090ff"/><stop offset="0.355" stop-color="#00d8ff"/><stop offset="0.366" stop-color="#00fdff"/><stop offset="0.369" stop-color="#00ffeb"/><stop offset="0.387" stop-color="#00ff16"/><stop offset="0.390" stop-color="#02ff01"/><stop offset="0.422" stop-color="#96ff00"/><stop offset="0.424" stop-color="#9dff00"/><stop offset="0.487" stop-color="#bfff00"/><stop offset="0.566" stop-color="#c8ff00"/><stop offset="0.610" stop-color="#d5ff00"/><stop offset="0.634" stop-color="#fffe00"/><stop offset="0.652" stop-color="#ffec00"/><stop offset="0.676" stop-color="#ffc100"/><stop offset="0.701" stop-color="#ff7e00"/><stop offset="0.915" stop-color="#ff0000"/><stop offset="0.999" stop-color="#ff0500"/></linearGradient><linearGradient id="v76" x1="0" y1="0" x2="0" y2="1"><stop offset="0.001" stop-color="#ff00ff"/><stop offset="0.066" stop-color="#fa00ff"/><stop offset="0.090" stop-color="#f300ff"/><stop offset="0.169" stop-color="#6300ff"/><stop offset="0.220" stop-color="#0001ff"/><stop offset="0.308" stop-color="#0076ff"/><stop offset="0.327" stop-color="#0092ff"/><stop offset="0.352" stop-color="#00d3ff"/><stop offset="0.366" stop-color="#00fffd"/><stop offset="0.387" stop-color="#00ff06"/><stop offset="0.390" stop-color="#08ff00"/><stop offset="0.422" stop-color="#9dff00"/><stop offset="0.487" stop-color="#c0ff00"/><stop offset="0.585" stop-color="#ceff00"/><stop offset="0.610" stop-color="#d4ff00"/><stop offset="0.634" stop-color="#fffe00"/><stop offset="0.655" stop-color="#ffe900"/><stop offset="0.678" stop-color="#ffbc00"/><stop offset="0.701" stop-color="#ff8000"/><stop offset="0.915" stop-color="#ff0000"/><stop offset="0.999" stop-color="#ff0600"/></linearGradient><linearGradient id="v77" x1="0" y1="0" x2="0" y2="1"><stop offset="0.001" stop-color="#ff00ff"/><stop offset="0.071" stop-color="#fa00ff"/><stop offset="0.092" stop-color="#f500ff"/><stop offset="0.178" stop-color="#5100ff"/><stop offset="0.217" stop-color="#0200ff"/><stop offset="0.303" stop-color="#0070ff"/><stop offset="0.324" stop-color="#008eff"/><stop offset="0.352" stop-color="#00d5ff"/><stop offset="0.364" stop-color="#00faff"/><stop offset="0.366" stop-color="#00fff5"/><stop offset="0.385" stop-color="#00ff10"/><stop offset="0.387" stop-color="#05ff00"/><stop offset="0.420" stop-color="#9bff00"/><stop offset="0.485" stop-color="#c1ff00"/><stop offset="0.610" stop-color="#d3ff00"/><stop offset="0.634" stop-color="#feff00"/><stop offset="0.655" stop-color="#ffea00"/><stop offset="0.678" stop-color="#ffbc00"/><stop offset="0.703" stop-color="#ff7e00"/><stop offset="0.917" stop-color="#ff0000"/><stop offset="0.999" stop-color="#ff0600"/></linearGradient><linearGradient id="v78" x1="0" y1="0" x2="0" y2="1"><stop offset="0.001" stop-color="#ff00ff"/><stop offset="0.080" stop-color="#f900ff"/><stop offset="0.092" stop-color="#f800ff"/><stop offset="0.176" stop-color="#5600ff"/><stop offset="0.217" stop-color="#0100ff"/><stop offset="0.317" stop-color="#0085ff"/><stop offset="0.327" stop-color="#0096ff"/><stop offset="0.352" stop-color="#00d8ff"/><stop offset="0.364" stop-color="#00fcff"/><stop offset="0.366" stop-color="#00ffeb"/><stop offset="0.383" stop-color="#00ff1b"/><stop offset="0.385" stop-color="#01ff01"/><stop offset="0.417" stop-color="#98ff00"/><stop offset="0.422" stop-color="#9fff00"/><stop offset="0.485" stop-color="#c1ff00"/><stop offset="0.613" stop-color="#d5ff00"/><stop offset="0.636" stop-color="#fffe00"/><stop offset="0.655" stop-color="#ffeb00"/><stop offset="0.680" stop-color="#ffb700"/><stop offset="0.703" stop-color="#ff7e00"/><stop offset="0.917" stop-color="#ff0000"/><stop offset="0.999" stop-color="#ff0700"/></linearGradient><linearGradient id="v79" x1="0" y1="0" x2="0" y2="1"><stop offset="0.001" stop-color="#ff00ff"/><stop offset="0.094" stop-color="#f900ff"/><stop offset="0.210" stop-color="#0e00ff"/><stop offset="0.217" stop-color="#0000ff"/><stop offset="0.322" stop-color="#008cff"/><stop offset="0.350" stop-color="#00d3ff"/><stop offset="0.364" stop-color="#00fffe"/><stop offset="0.383" stop-color="#00ff09"/><stop offset="0.385" stop-color="#08ff00"/><stop offset="0.415" stop-color="#95ff00"/><stop offset="0.417" stop-color="#9dff00"/><stop offset="0.485" stop-color="#c1ff00"/><stop offset="0.613" stop-color="#d3ff00"/><stop offset="0.636" stop-color="#ffff00"/><stop offset="0.655" stop-color="#ffec00"/><stop offset="0.680" stop-color="#ffb800"/><stop offset="0.703" stop-color="#ff7f00"/><stop offset="0.917" stop-color="#ff0000"/><stop offset="0.999" stop-color="#ff0800"/></linearGradient><linearGradient id="v80" x1="0" y1="0" x2="0" y2="1"><stop offset="0.001" stop-color="#ff00ff"/><stop offset="0.094" stop-color="#fb00ff"/><stop offset="0.183" stop-color="#4600ff"/><stop offset="0.215" stop-color="#0100ff"/><stop offset="0.322" stop-color="#008eff"/><stop offset="0.350" stop-color="#00d5ff"/><stop offset="0.362" stop-color="#00faff"/><stop offset="0.364" stop-color="#00fff4"/><stop offset="0.380" stop-color="#00ff15"/><stop offset="0.383" stop-color="#04ff00"/><stop offset="0.415" stop-color="#9cff00"/><stop offset="0.483" stop-color="#c1ff00"/><stop offset="0.613" stop-color="#d3ff00"/><stop offset="0.636" stop-color="#feff00"/><stop offset="0.657" stop-color="#ffe900"/><stop offset="0.683" stop-color="#ffb300"/><stop offset="0.703" stop-color="#ff8000"/><stop offset="0.917" stop-color="#ff0000"/><stop offset="0.999" stop-color="#ff0800"/></linearGradient><linearGradient id="v81" x1="0" y1="0" x2="0" y2="1"><stop offset="0.001" stop-color="#ff00ff"/><stop offset="0.097" stop-color="#fc00ff"/><stop offset="0.213" stop-color="#0200ff"/><stop offset="0.322" stop-color="#0091ff"/><stop offset="0.350" stop-color="#00d9ff"/><stop offset="0.362" stop-color="#00fdff"/><stop offset="0.364" stop-color="#00ffe6"/><stop offset="0.380" stop-color="#01ff03"/><stop offset="0.408" stop-color="#84ff00"/><stop offset="0.413" stop-color="#9aff00"/><stop offset="0.480" stop-color="#c1ff00"/><stop offset="0.615" stop-color="#d4ff00"/><stop offset="0.638" stop-color="#fffe00"/><stop offset="0.657" stop-color="#ffea00"/><stop offset="0.685" stop-color="#ffae00"/><stop offset="0.706" stop-color="#ff7e00"/><stop offset="0.917" stop-color="#ff0000"/><stop offset="0.999" stop-color="#ff0900"/></linearGradient><linearGradient id="v82" x1="0" y1="0" x2="0" y2="1"><stop offset="0.001" stop-color="#ff00ff"/><stop offset="0.099" stop-color="#fc00ff"/><stop offset="0.210" stop-color="#0200ff"/><stop offset="0.299" stop-color="#0076ff"/><stop offset="0.322" stop-color="#0096ff"/><stop offset="0.348" stop-color="#00d5ff"/><stop offset="0.359" stop-color="#00f9ff"/><stop offset="0.362" stop-color="#00fff9"/><stop offset="0.378" stop-color="#00ff0c"/><stop offset="0.380" stop-color="#07ff00"/><stop offset="0.410" stop-color="#97ff00"/><stop offset="0.413" stop-color="#9dff00"/><stop offset="0.480" stop-color="#c2ff00"/><stop offset="0.615" stop-color="#d3ff00"/><stop offset="0.638" stop-color="#ffff00"/><stop offset="0.657" stop-color="#ffec00"/><stop offset="0.690" stop-color="#ffa400"/><stop offset="0.706" stop-color="#ff7e00"/><stop offset="0.917" stop-color="#ff0000"/><stop offset="0.999" stop-color="#ff0900"/></linearGradient><linearGradient id="v83" x1="0" y1="0" x2="0" y2="1"><stop offset="0.001" stop-color="#ff00ff"/><stop offset="0.099" stop-color="#fe00ff"/><stop offset="0.203" stop-color="#0d00ff"/><stop offset="0.208" stop-color="#0200ff"/><stop offset="0.276" stop-color="#005fff"/><stop offset="0.320" stop-color="#0096ff"/><stop offset="0.348" stop-color="#00daff"/><stop offset="0.359" stop-color="#00fdff"/><stop offset="0.362" stop-color="#00ffe8"/><stop offset="0.376" stop-color="#00ff18"/><stop offset="0.378" stop-color="#03ff00"/><stop offset="0.410" stop-color="#9dff00"/><stop offset="0.480" stop-color="#c2ff00"/><stop offset="0.617" stop-color="#d5ff00"/><stop offset="0.641" stop-color="#fffe00"/><stop offset="0.657" stop-color="#ffed00"/><stop offset="0.701" stop-color="#ff8a00"/><stop offset="0.708" stop-color="#ff7d00"/><stop offset="0.920" stop-color="#ff0000"/><stop offset="0.999" stop-color="#ff0a00"/></linearGradient><linearGradient id="v84" x1="0" y1="0" x2="0" y2="1"><stop offset="0.001" stop-color="#ff00ff"/><stop offset="0.101" stop-color="#fd00ff"/><stop offset="0.206" stop-color="#0100ff"/><stop offset="0.271" stop-color="#005fff"/><stop offset="0.317" stop-color="#0097ff"/><stop offset="0.345" stop-color="#00d9ff"/><stop offset="0.357" stop-color="#00fcff"/><stop offset="0.359" stop-color="#00fff0"/><stop offset="0.373" stop-color="#00ff1d"/><stop offset="0.376" stop-color="#03ff02"/><stop offset="0.408" stop-color="#9cff00"/><stop offset="0.478" stop-color="#c2ff00"/><stop offset="0.617" stop-color="#d4ff00"/><stop offset="0.641" stop-color="#fffe00"/><stop offset="0.659" stop-color="#ffea00"/><stop offset="0.708" stop-color="#ff7e00"/><stop offset="0.920" stop-color="#ff0000"/><stop offset="0.999" stop-color="#ff0a00"/></linearGradient><linearGradient id="v85" x1="0" y1="0" x2="0" y2="1"><stop offset="0.001" stop-color="#ff00ff"/><stop offset="0.101" stop-color="#ff00ff"/><stop offset="0.201" stop-color="#0400ff"/><stop offset="0.210" stop-color="#000cff"/><stop offset="0.273" stop-color="#0064ff"/><stop offset="0.315" stop-color="#0097ff"/><stop offset="0.343" stop-color="#00daff"/><stop offset="0.355" stop-color="#00fdfd"/><stop offset="0.357" stop-color="#00ffe7"/><stop offset="0.371" stop-color="#01ff11"/><stop offset="0.373" stop-color="#06ff00"/><stop offset="0.406" stop-color="#9cff00"/><stop offset="0.476" stop-color="#c2ff00"/><stop offset="0.617" stop-color="#d3ff00"/><stop offset="0.641" stop-color="#ffff00"/><stop offset="0.659" stop-color="#ffeb00"/><stop offset="0.708" stop-color="#ff7e00"/><stop offset="0.920" stop-color="#ff0000"/><stop offset="0.999" stop-color="#ff0b00"/></linearGradient><linearGradient id="v86" x1="0" y1="0" x2="0" y2="1"><stop offset="0.001" stop-color="#ff00ff"/><stop offset="0.103" stop-color="#fc00ff"/><stop offset="0.197" stop-color="#0300ff"/><stop offset="0.210" stop-color="#0012ff"/><stop offset="0.297" stop-color="#0081ff"/><stop offset="0.313" stop-color="#0098ff"/><stop offset="0.338" stop-color="#00d7ff"/><stop offset="0.350" stop-color="#00faff"/><stop offset="0.352" stop-color="#00fff1"/><stop offset="0.359" stop-color="#00ff87"/><stop offset="0.366" stop-color="#00ff1a"/><stop offset="0.369" stop-color="#04ff03"/><stop offset="0.376" stop-color="#22ff00"/><stop offset="0.401" stop-color="#96ff00"/><stop offset="0.403" stop-color="#9dff00"/><stop offset="0.473" stop-color="#c2ff00"/><stop offset="0.617" stop-color="#d3ff00"/><stop offset="0.641" stop-color="#feff00"/><stop offset="0.659" stop-color="#ffeb00"/><stop offset="0.708" stop-color="#ff7e00"/><stop offset="0.920" stop-color="#ff0000"/><stop offset="0.999" stop-color="#ff0b00"/></linearGradient><linearGradient id="v87" x1="0" y1="0" x2="0" y2="1"><stop offset="0.001" stop-color="#ff00ff"/><stop offset="0.103" stop-color="#fe00ff"/><stop offset="0.192" stop-color="#0201ff"/><stop offset="0.306" stop-color="#0091ff"/><stop offset="0.334" stop-color="#00d7ff"/><stop offset="0.343" stop-color="#00f4ff"/><stop offset="0.345" stop-color="#00fafb"/><stop offset="0.348" stop-color="#00feec"/><stop offset="0.352" stop-color="#00ffab"/><stop offset="0.362" stop-color="#00ff21"/><stop offset="0.364" stop-color="#03ff07"/><stop offset="0.366" stop-color="#0bff00"/><stop offset="0.399" stop-color="#99ff00"/><stop offset="0.406" stop-color="#a0ff00"/><stop offset="0.473" stop-color="#c2ff00"/><stop offset="0.620" stop-color="#d6ff00"/><stop offset="0.643" stop-color="#fffe00"/><stop offset="0.659" stop-color="#ffec00"/><stop offset="0.708" stop-color="#ff7f00"/><stop offset="0.920" stop-color="#ff0000"/><stop offset="0.999" stop-color="#ff0c00"/></linearGradient><linearGradient id="v88" x1="0" y1="0" x2="0" y2="1"><stop offset="0.001" stop-color="#ff00ff"/><stop offset="0.103" stop-color="#ff00ff"/><stop offset="0.187" stop-color="#0201ff"/><stop offset="0.297" stop-color="#008cff"/><stop offset="0.327" stop-color="#00d8ff"/><stop offset="0.336" stop-color="#00f5ff"/><stop offset="0.338" stop-color="#00faf8"/><stop offset="0.341" stop-color="#00fee8"/><stop offset="0.343" stop-color="#00ffd0"/><stop offset="0.357" stop-color="#00ff1f"/><stop offset="0.359" stop-color="#02ff09"/><stop offset="0.362" stop-color="#0aff00"/><stop offset="0.394" stop-color="#95ff00"/><stop offset="0.399" stop-color="#9eff00"/><stop offset="0.469" stop-color="#c2ff00"/><stop offset="0.620" stop-color="#d5ff00"/><stop offset="0.643" stop-color="#fffe00"/><stop offset="0.659" stop-color="#ffed00"/><stop offset="0.710" stop-color="#ff7e00"/><stop offset="0.922" stop-color="#ff0100"/><stop offset="0.999" stop-color="#ff0c00"/></linearGradient><linearGradient id="v89" x1="0" y1="0" x2="0" y2="1"><stop offset="0.001" stop-color="#ff00ff"/><stop offset="0.103" stop-color="#ff00ff"/><stop offset="0.108" stop-color="#f400ff"/><stop offset="0.180" stop-color="#0500ff"/><stop offset="0.185" stop-color="#0004ff"/><stop offset="0.252" stop-color="#0059ff"/><stop offset="0.290" stop-color="#008fff"/><stop offset="0.317" stop-color="#00d5ff"/><stop offset="0.327" stop-color="#00f2ff"/><stop offset="0.329" stop-color="#00f9fc"/><stop offset="0.331" stop-color="#00fdf1"/><stop offset="0.334" stop-color="#00ffdf"/><stop offset="0.352" stop-color="#00ff17"/><stop offset="0.355" stop-color="#03ff06"/><stop offset="0.357" stop-color="#0bff00"/><stop offset="0.390" stop-color="#97ff00"/><stop offset="0.397" stop-color="#a0ff00"/><stop offset="0.466" stop-color="#c2ff00"/><stop offset="0.620" stop-color="#d4ff00"/><stop offset="0.643" stop-color="#fffe00"/><stop offset="0.659" stop-color="#ffee00"/><stop offset="0.710" stop-color="#ff7e00"/><stop offset="0.922" stop-color="#ff0000"/><stop offset="0.999" stop-color="#ff0d00"/></linearGradient><linearGradient id="v90" x1="0" y1="0" x2="0" y2="1"><stop offset="0.001" stop-color="#ff00ff"/><stop offset="0.106" stop-color="#fd00ff"/><stop offset="0.178" stop-color="#0300ff"/><stop offset="0.213" stop-color="#0029ff"/><stop offset="0.248" stop-color="#0057ff"/><stop offset="0.285" stop-color="#0090ff"/><stop offset="0.313" stop-color="#00d8ff"/><stop offset="0.324" stop-color="#00fdff"/><stop offset="0.327" stop-color="#00fff0"/><stop offset="0.350" stop-color="#00ff0b"/><stop offset="0.352" stop-color="#06ff00"/><stop offset="0.387" stop-color="#9dff00"/><stop offset="0.464" stop-color="#c2ff00"/><stop offset="0.620" stop-color="#d4ff00"/><stop offset="0.643" stop-color="#ffff00"/><stop offset="0.659" stop-color="#ffee00"/><stop offset="0.710" stop-color="#ff7e00"/><stop offset="0.922" stop-color="#ff0000"/><stop offset="0.999" stop-color="#ff0d00"/></linearGradient><linearGradient id="v91" x1="0" y1="0" x2="0" y2="1"><stop offset="0.001" stop-color="#ff00ff"/><stop offset="0.106" stop-color="#fd00ff"/><stop offset="0.178" stop-color="#0200ff"/><stop offset="0.243" stop-color="#0050ff"/><stop offset="0.285" stop-color="#0091ff"/><stop offset="0.313" stop-color="#00d9ff"/><stop offset="0.324" stop-color="#00feff"/><stop offset="0.329" stop-color="#00ffd6"/><stop offset="0.350" stop-color="#00ff08"/><stop offset="0.352" stop-color="#06ff00"/><stop offset="0.385" stop-color="#96ff00"/><stop offset="0.387" stop-color="#9dff00"/><stop offset="0.464" stop-color="#c2ff00"/><stop offset="0.620" stop-color="#d4ff00"/><stop offset="0.643" stop-color="#ffff00"/><stop offset="0.659" stop-color="#ffee00"/><stop offset="0.710" stop-color="#ff7e00"/><stop offset="0.922" stop-color="#ff0000"/><stop offset="0.999" stop-color="#ff0e00"/></linearGradient><linearGradient id="s0" x1="0" y1="0" x2="0" y2="1"><stop offset="0.001" stop-color="#9d9d9d"/><stop offset="0.008" stop-color="#a2a2a2"/><stop offset="0.011" stop-color="#919191"/><stop offset="0.013" stop-color="#9e9e9e"/><stop offset="0.015" stop-color="#929292"/><stop offset="0.018" stop-color="#b4b4b4"/><stop offset="0.020" stop-color="#adadad"/><stop offset="0.022" stop-color="#808080"/><stop offset="0.025" stop-color="#7b7b7b"/><stop offset="0.027" stop-color="#cdcdcd"/><stop offset="0.029" stop-color="#828282"/><stop offset="0.032" stop-color="#d2d2d2"/><stop offset="0.034" stop-color="#7a7a7a"/><stop offset="0.036" stop-color="#6a6a6a"/><stop offset="0.039" stop-color="#f1f1f1"/><stop offset="0.041" stop-color="#8a8a8a"/><stop offset="0.043" stop-color="#858585"/><stop offset="0.046" stop-color="#c0c0c0"/><stop offset="0.048" stop-color="#484848"/><stop offset="0.050" stop-color="#d7d7d7"/><stop offset="0.053" stop-color="#bbbbbb"/><stop offset="0.055" stop-color="#c9c9c9"/><stop offset="0.057" stop-color="#333333"/><stop offset="0.060" stop-color="#ededed"/><stop offset="0.062" stop-color="#7d7d7d"/><stop offset="0.064" stop-color="#bfbfbf"/><stop offset="0.067" stop-color="#3a3a3a"/><stop offset="0.069" stop-color="#dadada"/><stop offset="0.071" stop-color="#7d7d7d"/><stop offset="0.074" stop-color="#dedede"/><stop offset="0.076" stop-color="#7c7c7c"/><stop offset="0.078" stop-color="#b3b3b3"/><stop offset="0.081" stop-color="#797979"/><stop offset="0.083" stop-color="#a7a7a7"/><stop offset="0.085" stop-color="#484848"/><stop offset="0.088" stop-color="#e7e7e7"/><stop offset="0.090" stop-color="#a1a1a1"/><stop offset="0.092" stop-color="#8d8d8d"/><stop offset="0.095" stop-color="#969696"/><stop offset="0.097" stop-color="#ababab"/><stop offset="0.099" stop-color="#818181"/><stop offset="0.102" stop-color="#d5d5d5"/><stop offset="0.104" stop-color="#696969"/><stop offset="0.106" stop-color="#5d5d5d"/><stop offset="0.109" stop-color="#e9e9e9"/><stop offset="0.111" stop-color="#dddddd"/><stop offset="0.113" stop-color="#303030"/><stop offset="0.116" stop-color="#9a9a9a"/><stop offset="0.118" stop-color="#d6d6d6"/><stop offset="0.120" stop-color="#a3a3a3"/><stop offset="0.123" stop-color="#b1b1b1"/><stop offset="0.125" stop-color="#656565"/><stop offset="0.127" stop-color="#d4d4d4"/><stop offset="0.130" stop-color="#7e7e7e"/><stop offset="0.132" stop-color="#dadada"/><stop offset="0.134" stop-color="#818181"/><stop offset="0.137" stop-color="#6f6f6f"/><stop offset="0.139" stop-color="#9b9b9b"/><stop offset="0.141" stop-color="#a3a3a3"/><stop offset="0.144" stop-color="#959595"/><stop offset="0.146" stop-color="#fafafa"/><stop offset="0.148" stop-color="#747474"/><stop offset="0.151" stop-color="#303030"/><stop offset="0.153" stop-color="#fcfcfc"/><stop offset="0.155" stop-color="#a8a8a8"/><stop offset="0.160" stop-color="#dfdfdf"/><stop offset="0.162" stop-color="#303030"/><stop offset="0.165" stop-color="#525252"/><stop offset="0.167" stop-color="#ffffff"/><stop offset="0.169" stop-color="#f6f6f6"/><stop offset="0.172" stop-color="#303030"/><stop offset="0.174" stop-color="#494949"/><stop offset="0.176" stop-color="#e7e7e7"/><stop offset="0.179" stop-color="#999999"/><stop offset="0.181" stop-color="#cacaca"/><stop offset="0.183" stop-color="#8e8e8e"/><stop offset="0.186" stop-color="#fcfcfc"/><stop offset="0.188" stop-color="#414141"/><stop offset="0.190" stop-color="#343434"/><stop offset="0.193" stop-color="#9d9d9d"/><stop offset="0.195" stop-color="#e7e7e7"/><stop offset="0.197" stop-color="#646464"/><stop offset="0.200" stop-color="#aaaaaa"/><stop offset="0.202" stop-color="#e1e1e1"/><stop offset="0.204" stop-color="#969696"/><stop offset="0.207" stop-color="#d3d3d3"/><stop offset="0.209" stop-color="#303030"/><stop offset="0.211" stop-color="#3f3f3f"/><stop offset="0.214" stop-color="#ffffff"/><stop offset="0.216" stop-color="#cecece"/><stop offset="0.218" stop-color="#7b7b7b"/><stop offset="0.221" stop-color="#adadad"/><stop offset="0.223" stop-color="#464646"/><stop offset="0.225" stop-color="#afafaf"/><stop offset="0.228" stop-color="#bcbcbc"/><stop offset="0.230" stop-color="#fcfcfc"/><stop offset="0.232" stop-color="#363636"/><stop offset="0.235" stop-color="#333333"/><stop offset="0.237" stop-color="#dcdcdc"/><stop offset="0.239" stop-color="#c9c9c9"/><stop offset="0.242" stop-color="#8f8f8f"/><stop offset="0.244" stop-color="#c0c0c0"/><stop offset="0.246" stop-color="#4e4e4e"/><stop offset="0.251" stop-color="#dedede"/><stop offset="0.254" stop-color="#535353"/><stop offset="0.256" stop-color="#313131"/><stop offset="0.258" stop-color="#ffffff"/><stop offset="0.261" stop-color="#d2d2d2"/><stop offset="0.263" stop-color="#4b4b4b"/><stop offset="0.265" stop-color="#4c4c4c"/><stop offset="0.268" stop-color="#bebebe"/><stop offset="0.270" stop-color="#aaaaaa"/><stop offset="0.272" stop-color="#3a3a3a"/><stop offset="0.275" stop-color="#303030"/><stop offset="0.277" stop-color="#fdfdfd"/><stop offset="0.279" stop-color="#ffffff"/><stop offset="0.282" stop-color="#383838"/><stop offset="0.284" stop-color="#3c3c3c"/><stop offset="0.286" stop-color="#f1f1f1"/><stop offset="0.289" stop-color="#7e7e7e"/><stop offset="0.291" stop-color="#858585"/><stop offset="0.293" stop-color="#ffffff"/><stop offset="0.296" stop-color="#353535"/><stop offset="0.298" stop-color="#353535"/><stop offset="0.300" stop-color="#d2d2d2"/><stop offset="0.303" stop-color="#dadada"/><stop offset="0.305" stop-color="#cbcbcb"/><stop offset="0.307" stop-color="#5d5d5d"/><stop offset="0.310" stop-color="#7a7a7a"/><stop offset="0.312" stop-color="#5c5c5c"/><stop offset="0.317" stop-color="#ffffff"/><stop offset="0.319" stop-color="#ababab"/><stop offset="0.321" stop-color="#7e7e7e"/><stop offset="0.324" stop-color="#303030"/><stop offset="0.326" stop-color="#b1b1b1"/><stop offset="0.328" stop-color="#ffffff"/><stop offset="0.331" stop-color="#363636"/><stop offset="0.333" stop-color="#303030"/><stop offset="0.335" stop-color="#fdfdfd"/><stop offset="0.338" stop-color="#d2d2d2"/><stop offset="0.340" stop-color="#5f5f5f"/><stop offset="0.342" stop-color="#fbfbfb"/><stop offset="0.345" stop-color="#f1f1f1"/><stop offset="0.347" stop-color="#303030"/><stop offset="0.349" stop-color="#595959"/><stop offset="0.352" stop-color="#ffffff"/><stop offset="0.354" stop-color="#a7a7a7"/><stop offset="0.356" stop-color="#a8a8a8"/><stop offset="0.359" stop-color="#7b7b7b"/><stop offset="0.361" stop-color="#686868"/><stop offset="0.363" stop-color="#7d7d7d"/><stop offset="0.370" stop-color="#838383"/><stop offset="0.373" stop-color="#ffffff"/><stop offset="0.375" stop-color="#ffffff"/><stop offset="0.377" stop-color="#696969"/><stop offset="0.380" stop-color="#303030"/><stop offset="0.382" stop-color="#818181"/><stop offset="0.384" stop-color="#e8e8e8"/><stop offset="0.387" stop-color="#757575"/><stop offset="0.389" stop-color="#646464"/><stop offset="0.391" stop-color="#ededed"/><stop offset="0.394" stop-color="#fbfbfb"/><stop offset="0.396" stop-color="#656565"/><stop offset="0.398" stop-color="#e0e0e0"/><stop offset="0.401" stop-color="#bdbdbd"/><stop offset="0.403" stop-color="#303030"/><stop offset="0.405" stop-color="#494949"/><stop offset="0.408" stop-color="#f0f0f0"/><stop offset="0.410" stop-color="#d6d6d6"/><stop offset="0.412" stop-color="#7a7a7a"/><stop offset="0.415" stop-color="#6d6d6d"/><stop offset="0.417" stop-color="#e7e7e7"/><stop offset="0.419" stop-color="#808080"/><stop offset="0.422" stop-color="#303030"/><stop offset="0.424" stop-color="#b0b0b0"/><stop offset="0.426" stop-color="#ffffff"/><stop offset="0.429" stop-color="#f1f1f1"/><stop offset="0.431" stop-color="#bababa"/><stop offset="0.433" stop-color="#414141"/><stop offset="0.436" stop-color="#323232"/><stop offset="0.438" stop-color="#a8a8a8"/><stop offset="0.440" stop-color="#cdcdcd"/><stop offset="0.443" stop-color="#e0e0e0"/><stop offset="0.445" stop-color="#808080"/><stop offset="0.447" stop-color="#303030"/><stop offset="0.452" stop-color="#fdfdfd"/><stop offset="0.454" stop-color="#909090"/><stop offset="0.457" stop-color="#646464"/><stop offset="0.459" stop-color="#979797"/><stop offset="0.461" stop-color="#3d3d3d"/><stop offset="0.464" stop-color="#bababa"/><stop offset="0.466" stop-color="#ffffff"/><stop offset="0.468" stop-color="#fbfbfb"/><stop offset="0.471" stop-color="#4c4c4c"/><stop offset="0.473" stop-color="#303030"/><stop offset="0.475" stop-color="#7f7f7f"/><stop offset="0.478" stop-color="#fdfdfd"/><stop offset="0.480" stop-color="#878787"/><stop offset="0.482" stop-color="#4a4a4a"/><stop offset="0.485" stop-color="#999999"/><stop offset="0.487" stop-color="#aeaeae"/><stop offset="0.489" stop-color="#fefefe"/><stop offset="0.492" stop-color="#bebebe"/><stop offset="0.494" stop-color="#303030"/><stop offset="0.496" stop-color="#383838"/><stop offset="0.499" stop-color="#f2f2f2"/><stop offset="0.501" stop-color="#ececec"/><stop offset="0.504" stop-color="#656565"/><stop offset="0.506" stop-color="#757575"/><stop offset="0.508" stop-color="#fafafa"/><stop offset="0.511" stop-color="#f1f1f1"/><stop offset="0.513" stop-color="#959595"/><stop offset="0.515" stop-color="#9b9b9b"/><stop offset="0.518" stop-color="#535353"/><stop offset="0.520" stop-color="#313131"/><stop offset="0.522" stop-color="#acacac"/><stop offset="0.525" stop-color="#adadad"/><stop offset="0.527" stop-color="#676767"/><stop offset="0.529" stop-color="#868686"/><stop offset="0.532" stop-color="#f1f1f1"/><stop offset="0.534" stop-color="#ffffff"/><stop offset="0.536" stop-color="#727272"/><stop offset="0.539" stop-color="#303030"/><stop offset="0.541" stop-color="#3d3d3d"/><stop offset="0.543" stop-color="#ffffff"/><stop offset="0.546" stop-color="#eeeeee"/><stop offset="0.548" stop-color="#f6f6f6"/><stop offset="0.550" stop-color="#efefef"/><stop offset="0.553" stop-color="#555555"/><stop offset="0.557" stop-color="#808080"/><stop offset="0.560" stop-color="#3d3d3d"/><stop offset="0.562" stop-color="#acacac"/><stop offset="0.564" stop-color="#ffffff"/><stop offset="0.567" stop-color="#c5c5c5"/><stop offset="0.569" stop-color="#4e4e4e"/><stop offset="0.571" stop-color="#525252"/><stop offset="0.574" stop-color="#323232"/><stop offset="0.576" stop-color="#5e5e5e"/><stop offset="0.578" stop-color="#fcfcfc"/><stop offset="0.581" stop-color="#adadad"/><stop offset="0.583" stop-color="#303030"/><stop offset="0.585" stop-color="#303030"/><stop offset="0.588" stop-color="#ebebeb"/><stop offset="0.590" stop-color="#ffffff"/><stop offset="0.592" stop-color="#ffffff"/><stop offset="0.595" stop-color="#323232"/><stop offset="0.597" stop-color="#303030"/><stop offset="0.599" stop-color="#424242"/><stop offset="0.602" stop-color="#e5e5e5"/><stop offset="0.604" stop-color="#d6d6d6"/><stop offset="0.606" stop-color="#e5e5e5"/><stop offset="0.609" stop-color="#eaeaea"/><stop offset="0.611" stop-color="#353535"/><stop offset="0.613" stop-color="#303030"/><stop offset="0.616" stop-color="#7e7e7e"/><stop offset="0.620" stop-color="#ffffff"/><stop offset="0.623" stop-color="#fafafa"/><stop offset="0.625" stop-color="#4c4c4c"/><stop offset="0.627" stop-color="#454545"/><stop offset="0.630" stop-color="#f1f1f1"/><stop offset="0.632" stop-color="#c6c6c6"/><stop offset="0.634" stop-color="#303030"/><stop offset="0.637" stop-color="#303030"/><stop offset="0.639" stop-color="#868686"/><stop offset="0.641" stop-color="#ffffff"/><stop offset="0.644" stop-color="#ffffff"/><stop offset="0.646" stop-color="#939393"/><stop offset="0.648" stop-color="#777777"/><stop offset="0.651" stop-color="#979797"/><stop offset="0.653" stop-color="#303030"/><stop offset="0.655" stop-color="#4d4d4d"/><stop offset="0.658" stop-color="#8a8a8a"/><stop offset="0.660" stop-color="#6a6a6a"/><stop offset="0.662" stop-color="#cccccc"/><stop offset="0.665" stop-color="#ffffff"/><stop offset="0.667" stop-color="#c2c2c2"/><stop offset="0.669" stop-color="#474747"/><stop offset="0.672" stop-color="#303030"/><stop offset="0.674" stop-color="#777777"/><stop offset="0.676" stop-color="#f9f9f9"/><stop offset="0.679" stop-color="#a9a9a9"/><stop offset="0.681" stop-color="#303030"/><stop offset="0.683" stop-color="#303030"/><stop offset="0.686" stop-color="#a4a4a4"/><stop offset="0.688" stop-color="#ffffff"/><stop offset="0.690" stop-color="#ffffff"/><stop offset="0.693" stop-color="#525252"/><stop offset="0.695" stop-color="#303030"/><stop offset="0.697" stop-color="#c7c7c7"/><stop offset="0.700" stop-color="#ffffff"/><stop offset="0.702" stop-color="#636363"/><stop offset="0.704" stop-color="#303030"/><stop offset="0.707" stop-color="#3c3c3c"/><stop offset="0.709" stop-color="#ffffff"/><stop offset="0.711" stop-color="#ffffff"/><stop offset="0.714" stop-color="#4b4b4b"/><stop offset="0.716" stop-color="#3b3b3b"/><stop offset="0.718" stop-color="#6b6b6b"/><stop offset="0.721" stop-color="#bdbdbd"/><stop offset="0.723" stop-color="#cecece"/><stop offset="0.725" stop-color="#868686"/><stop offset="0.728" stop-color="#505050"/><stop offset="0.730" stop-color="#5c5c5c"/><stop offset="0.732" stop-color="#888888"/><stop offset="0.735" stop-color="#a0a0a0"/><stop offset="0.737" stop-color="#c8c8c8"/><stop offset="0.739" stop-color="#c9c9c9"/><stop offset="0.742" stop-color="#8a8a8a"/><stop offset="0.744" stop-color="#8d8d8d"/><stop offset="0.749" stop-color="#303030"/><stop offset="0.751" stop-color="#636363"/><stop offset="0.754" stop-color="#ffffff"/><stop offset="0.756" stop-color="#dfdfdf"/><stop offset="0.758" stop-color="#303030"/><stop offset="0.761" stop-color="#303030"/><stop offset="0.763" stop-color="#3b3b3b"/><stop offset="0.765" stop-color="#cccccc"/><stop offset="0.768" stop-color="#dbdbdb"/><stop offset="0.770" stop-color="#a8a8a8"/><stop offset="0.772" stop-color="#d3d3d3"/><stop offset="0.775" stop-color="#d8d8d8"/><stop offset="0.777" stop-color="#5e5e5e"/><stop offset="0.779" stop-color="#454545"/><stop offset="0.782" stop-color="#626262"/><stop offset="0.784" stop-color="#959595"/><stop offset="0.786" stop-color="#ffffff"/><stop offset="0.789" stop-color="#fcfcfc"/><stop offset="0.791" stop-color="#303030"/><stop offset="0.793" stop-color="#303030"/><stop offset="0.798" stop-color="#ffffff"/><stop offset="0.800" stop-color="#f2f2f2"/><stop offset="0.803" stop-color="#888888"/><stop offset="0.805" stop-color="#ffffff"/><stop offset="0.807" stop-color="#c9c9c9"/><stop offset="0.810" stop-color="#303030"/><stop offset="0.812" stop-color="#303030"/><stop offset="0.814" stop-color="#f5f5f5"/><stop offset="0.817" stop-color="#d6d6d6"/><stop offset="0.819" stop-color="#6f6f6f"/><stop offset="0.821" stop-color="#c9c9c9"/><stop offset="0.824" stop-color="#cecece"/><stop offset="0.826" stop-color="#313131"/><stop offset="0.828" stop-color="#303030"/><stop offset="0.831" stop-color="#898989"/><stop offset="0.833" stop-color="#acacac"/><stop offset="0.835" stop-color="#b3b3b3"/><stop offset="0.838" stop-color="#fdfdfd"/><stop offset="0.840" stop-color="#f5f5f5"/><stop offset="0.842" stop-color="#363636"/><stop offset="0.845" stop-color="#303030"/><stop offset="0.847" stop-color="#3c3c3c"/><stop offset="0.849" stop-color="#838383"/><stop offset="0.852" stop-color="#ffffff"/><stop offset="0.854" stop-color="#ffffff"/><stop offset="0.859" stop-color="#363636"/><stop offset="0.861" stop-color="#393939"/><stop offset="0.863" stop-color="#474747"/><stop offset="0.866" stop-color="#b2b2b2"/><stop offset="0.868" stop-color="#fefefe"/><stop offset="0.870" stop-color="#b0b0b0"/><stop offset="0.873" stop-color="#8d8d8d"/><stop offset="0.875" stop-color="#f3f3f3"/><stop offset="0.877" stop-color="#898989"/><stop offset="0.880" stop-color="#303030"/><stop offset="0.882" stop-color="#313131"/><stop offset="0.884" stop-color="#a4a4a4"/><stop offset="0.887" stop-color="#f5f5f5"/><stop offset="0.889" stop-color="#f3f3f3"/><stop offset="0.891" stop-color="#b4b4b4"/><stop offset="0.894" stop-color="#525252"/><stop offset="0.896" stop-color="#404040"/><stop offset="0.898" stop-color="#cecece"/><stop offset="0.901" stop-color="#ffffff"/><stop offset="0.903" stop-color="#e5e5e5"/><stop offset="0.905" stop-color="#535353"/><stop offset="0.908" stop-color="#303030"/><stop offset="0.910" stop-color="#303030"/><stop offset="0.912" stop-color="#717171"/><stop offset="0.915" stop-color="#fefefe"/><stop offset="0.917" stop-color="#b0b0b0"/><stop offset="0.919" stop-color="#444444"/><stop offset="0.922" stop-color="#cecece"/><stop offset="0.926" stop-color="#bbbbbb"/><stop offset="0.929" stop-color="#ffffff"/><stop offset="0.931" stop-color="#fbfbfb"/><stop offset="0.933" stop-color="#4c4c4c"/><stop offset="0.936" stop-color="#303030"/><stop offset="0.938" stop-color="#303030"/><stop offset="0.940" stop-color="#d8d8d8"/><stop offset="0.943" stop-color="#ffffff"/><stop offset="0.945" stop-color="#cacaca"/><stop offset="0.947" stop-color="#303030"/><stop offset="0.950" stop-color="#545454"/><stop offset="0.952" stop-color="#fdfdfd"/><stop offset="0.954" stop-color="#ffffff"/><stop offset="0.957" stop-color="#d5d5d5"/><stop offset="0.959" stop-color="#646464"/><stop offset="0.961" stop-color="#3f3f3f"/><stop offset="0.964" stop-color="#5e5e5e"/><stop offset="0.966" stop-color="#676767"/><stop offset="0.968" stop-color="#e1e1e1"/><stop offset="0.971" stop-color="#eeeeee"/><stop offset="0.973" stop-color="#444444"/><stop offset="0.975" stop-color="#303030"/><stop offset="0.978" stop-color="#303030"/><stop offset="0.980" stop-color="#dbdbdb"/><stop offset="0.982" stop-color="#ffffff"/><stop offset="0.985" stop-color="#ececec"/><stop offset="0.987" stop-color="#383838"/><stop offset="0.989" stop-color="#323232"/><stop offset="0.992" stop-color="#7f7f7f"/><stop offset="0.994" stop-color="#f4f4f4"/><stop offset="0.996" stop-color="#fdfdfd"/><stop offset="0.999" stop-color="#d5d5d5"/></linearGradient><linearGradient id="s1" x1="0" y1="0" x2="0" y2="1"><stop offset="0.001" stop-color="#9d9d9d"/><stop offset="0.011" stop-color="#999999"/><stop offset="0.013" stop-color="#a0a0a0"/><stop offset="0.015" stop-color="#9a9a9a"/><stop offset="0.020" stop-color="#a7a7a7"/><stop offset="0.022" stop-color="#8a8a8a"/><stop offset="0.025" stop-color="#909090"/><stop offset="0.027" stop-color="#b1b1b1"/><stop offset="0.029" stop-color="#909090"/><stop offset="0.032" stop-color="#a5a5a5"/><stop offset="0.034" stop-color="#9d9d9d"/><stop offset="0.036" stop-color="#7e7e7e"/><stop offset="0.039" stop-color="#b2b2b2"/><stop offset="0.041" stop-color="#9f9f9f"/><stop offset="0.043" stop-color="#5b5b5b"/><stop offset="0.046" stop-color="#fefefe"/><stop offset="0.048" stop-color="#3b3b3b"/><stop offset="0.053" stop-color="#d3d3d3"/><stop offset="0.055" stop-color="#b5b5b5"/><stop offset="0.057" stop-color="#545454"/><stop offset="0.060" stop-color="#ededed"/><stop offset="0.062" stop-color="#515151"/><stop offset="0.064" stop-color="#b9b9b9"/><stop offset="0.067" stop-color="#909090"/><stop offset="0.069" stop-color="#565656"/><stop offset="0.071" stop-color="#fefefe"/><stop offset="0.074" stop-color="#626262"/><stop offset="0.076" stop-color="#cccccc"/><stop offset="0.078" stop-color="#868686"/><stop offset="0.081" stop-color="#808080"/><stop offset="0.083" stop-color="#afafaf"/><stop offset="0.085" stop-color="#a4a4a4"/><stop offset="0.088" stop-color="#4c4c4c"/><stop offset="0.090" stop-color="#fafafa"/><stop offset="0.092" stop-color="#7b7b7b"/><stop offset="0.095" stop-color="#8f8f8f"/><stop offset="0.097" stop-color="#cbcbcb"/><stop offset="0.099" stop-color="#7b7b7b"/><stop offset="0.102" stop-color="#a3a3a3"/><stop offset="0.104" stop-color="#7a7a7a"/><stop offset="0.106" stop-color="#b9b9b9"/><stop offset="0.109" stop-color="#666666"/><stop offset="0.111" stop-color="#ffffff"/><stop offset="0.113" stop-color="#303030"/><stop offset="0.116" stop-color="#939393"/><stop offset="0.118" stop-color="#a7a7a7"/><stop offset="0.120" stop-color="#d7d7d7"/><stop offset="0.123" stop-color="#969696"/><stop offset="0.125" stop-color="#767676"/><stop offset="0.130" stop-color="#c1c1c1"/><stop offset="0.132" stop-color="#c7c7c7"/><stop offset="0.134" stop-color="#929292"/><stop offset="0.137" stop-color="#434343"/><stop offset="0.139" stop-color="#cecece"/><stop offset="0.141" stop-color="#939393"/><stop offset="0.144" stop-color="#7d7d7d"/><stop offset="0.146" stop-color="#f8f8f8"/><stop offset="0.148" stop-color="#b0b0b0"/><stop offset="0.151" stop-color="#303030"/><stop offset="0.153" stop-color="#9f9f9f"/><stop offset="0.155" stop-color="#fdfdfd"/><stop offset="0.158" stop-color="#737373"/><stop offset="0.160" stop-color="#ffffff"/><stop offset="0.162" stop-color="#3e3e3e"/><stop offset="0.165" stop-color="#303030"/><stop offset="0.167" stop-color="#ffffff"/><stop offset="0.169" stop-color="#ffffff"/><stop offset="0.172" stop-color="#333333"/><stop offset="0.174" stop-color="#555555"/><stop offset="0.176" stop-color="#8f8f8f"/><stop offset="0.179" stop-color="#e5e5e5"/><stop offset="0.181" stop-color="#797979"/><stop offset="0.183" stop-color="#e5e5e5"/><stop offset="0.186" stop-color="#aeaeae"/><stop offset="0.188" stop-color="#c1c1c1"/><stop offset="0.190" stop-color="#303030"/><stop offset="0.193" stop-color="#646464"/><stop offset="0.195" stop-color="#e5e5e5"/><stop offset="0.197" stop-color="#8b8b8b"/><stop offset="0.200" stop-color="#a5a5a5"/><stop offset="0.202" stop-color="#ababab"/><stop offset="0.207" stop-color="#dfdfdf"/><stop offset="0.209" stop-color="#373737"/><stop offset="0.211" stop-color="#303030"/><stop offset="0.214" stop-color="#f8f8f8"/><stop offset="0.216" stop-color="#ebebeb"/><stop offset="0.218" stop-color="#858585"/><stop offset="0.221" stop-color="#a2a2a2"/><stop offset="0.223" stop-color="#545454"/><stop offset="0.225" stop-color="#9c9c9c"/><stop offset="0.228" stop-color="#b1b1b1"/><stop offset="0.230" stop-color="#ffffff"/><stop offset="0.232" stop-color="#636363"/><stop offset="0.235" stop-color="#303030"/><stop offset="0.237" stop-color="#b2b2b2"/><stop offset="0.239" stop-color="#d0d0d0"/><stop offset="0.242" stop-color="#9c9c9c"/><stop offset="0.244" stop-color="#c6c6c6"/><stop offset="0.246" stop-color="#6e6e6e"/><stop offset="0.249" stop-color="#4d4d4d"/><stop offset="0.251" stop-color="#ffffff"/><stop offset="0.254" stop-color="#737373"/><stop offset="0.256" stop-color="#303030"/><stop offset="0.258" stop-color="#fcfcfc"/><stop offset="0.261" stop-color="#ffffff"/><stop offset="0.263" stop-color="#404040"/><stop offset="0.265" stop-color="#464646"/><stop offset="0.270" stop-color="#e4e4e4"/><stop offset="0.272" stop-color="#353535"/><stop offset="0.275" stop-color="#303030"/><stop offset="0.277" stop-color="#c6c6c6"/><stop offset="0.279" stop-color="#ffffff"/><stop offset="0.282" stop-color="#8c8c8c"/><stop offset="0.284" stop-color="#303030"/><stop offset="0.286" stop-color="#c1c1c1"/><stop offset="0.289" stop-color="#c7c7c7"/><stop offset="0.291" stop-color="#454545"/><stop offset="0.293" stop-color="#ffffff"/><stop offset="0.296" stop-color="#919191"/><stop offset="0.298" stop-color="#303030"/><stop offset="0.300" stop-color="#acacac"/><stop offset="0.303" stop-color="#dfdfdf"/><stop offset="0.305" stop-color="#dddddd"/><stop offset="0.307" stop-color="#6d6d6d"/><stop offset="0.314" stop-color="#797979"/><stop offset="0.317" stop-color="#ffffff"/><stop offset="0.319" stop-color="#b7b7b7"/><stop offset="0.321" stop-color="#9b9b9b"/><stop offset="0.324" stop-color="#363636"/><stop offset="0.326" stop-color="#6c6c6c"/><stop offset="0.328" stop-color="#ffffff"/><stop offset="0.331" stop-color="#bebebe"/><stop offset="0.333" stop-color="#303030"/><stop offset="0.335" stop-color="#cfcfcf"/><stop offset="0.338" stop-color="#fcfcfc"/><stop offset="0.340" stop-color="#707070"/><stop offset="0.342" stop-color="#ababab"/><stop offset="0.345" stop-color="#ffffff"/><stop offset="0.347" stop-color="#434343"/><stop offset="0.349" stop-color="#313131"/><stop offset="0.352" stop-color="#eaeaea"/><stop offset="0.354" stop-color="#bfbfbf"/><stop offset="0.356" stop-color="#acacac"/><stop offset="0.359" stop-color="#818181"/><stop offset="0.361" stop-color="#656565"/><stop offset="0.363" stop-color="#939393"/><stop offset="0.366" stop-color="#767676"/><stop offset="0.370" stop-color="#7d7d7d"/><stop offset="0.373" stop-color="#dfdfdf"/><stop offset="0.375" stop-color="#ffffff"/><stop offset="0.377" stop-color="#afafaf"/><stop offset="0.380" stop-color="#303030"/><stop offset="0.382" stop-color="#3c3c3c"/><stop offset="0.384" stop-color="#f3f3f3"/><stop offset="0.387" stop-color="#939393"/><stop offset="0.389" stop-color="#3f3f3f"/><stop offset="0.391" stop-color="#c8c8c8"/><stop offset="0.394" stop-color="#ffffff"/><stop offset="0.396" stop-color="#8c8c8c"/><stop offset="0.398" stop-color="#a3a3a3"/><stop offset="0.401" stop-color="#f8f8f8"/><stop offset="0.403" stop-color="#303030"/><stop offset="0.405" stop-color="#303030"/><stop offset="0.408" stop-color="#cbcbcb"/><stop offset="0.410" stop-color="#e1e1e1"/><stop offset="0.412" stop-color="#adadad"/><stop offset="0.415" stop-color="#696969"/><stop offset="0.417" stop-color="#919191"/><stop offset="0.419" stop-color="#d5d5d5"/><stop offset="0.422" stop-color="#3f3f3f"/><stop offset="0.424" stop-color="#313131"/><stop offset="0.426" stop-color="#fafafa"/><stop offset="0.429" stop-color="#ffffff"/><stop offset="0.431" stop-color="#d3d3d3"/><stop offset="0.433" stop-color="#989898"/><stop offset="0.436" stop-color="#303030"/><stop offset="0.438" stop-color="#666666"/><stop offset="0.440" stop-color="#c3c3c3"/><stop offset="0.443" stop-color="#b4b4b4"/><stop offset="0.445" stop-color="#b2b2b2"/><stop offset="0.447" stop-color="#575757"/><stop offset="0.450" stop-color="#343434"/><stop offset="0.452" stop-color="#bebebe"/><stop offset="0.454" stop-color="#ededed"/><stop offset="0.457" stop-color="#6b6b6b"/><stop offset="0.459" stop-color="#5e5e5e"/><stop offset="0.461" stop-color="#6d6d6d"/><stop offset="0.464" stop-color="#696969"/><stop offset="0.466" stop-color="#f8f8f8"/><stop offset="0.468" stop-color="#ffffff"/><stop offset="0.471" stop-color="#d2d2d2"/><stop offset="0.473" stop-color="#373737"/><stop offset="0.475" stop-color="#303030"/><stop offset="0.478" stop-color="#a5a5a5"/><stop offset="0.480" stop-color="#f5f5f5"/><stop offset="0.482" stop-color="#545454"/><stop offset="0.485" stop-color="#5b5b5b"/><stop offset="0.487" stop-color="#adadad"/><stop offset="0.489" stop-color="#cbcbcb"/><stop offset="0.492" stop-color="#ffffff"/><stop offset="0.494" stop-color="#636363"/><stop offset="0.496" stop-color="#303030"/><stop offset="0.499" stop-color="#585858"/><stop offset="0.501" stop-color="#ffffff"/><stop offset="0.504" stop-color="#dfdfdf"/><stop offset="0.506" stop-color="#4c4c4c"/><stop offset="0.508" stop-color="#a0a0a0"/><stop offset="0.511" stop-color="#fefefe"/><stop offset="0.515" stop-color="#959595"/><stop offset="0.518" stop-color="#9b9b9b"/><stop offset="0.520" stop-color="#303030"/><stop offset="0.522" stop-color="#3e3e3e"/><stop offset="0.525" stop-color="#fcfcfc"/><stop offset="0.527" stop-color="#adadad"/><stop offset="0.529" stop-color="#434343"/><stop offset="0.532" stop-color="#868686"/><stop offset="0.534" stop-color="#ffffff"/><stop offset="0.536" stop-color="#fefefe"/><stop offset="0.539" stop-color="#313131"/><stop offset="0.541" stop-color="#303030"/><stop offset="0.543" stop-color="#a7a7a7"/><stop offset="0.546" stop-color="#ffffff"/><stop offset="0.548" stop-color="#d1d1d1"/><stop offset="0.550" stop-color="#f6f6f6"/><stop offset="0.553" stop-color="#aeaeae"/><stop offset="0.555" stop-color="#838383"/><stop offset="0.557" stop-color="#9f9f9f"/><stop offset="0.560" stop-color="#303030"/><stop offset="0.562" stop-color="#373737"/><stop offset="0.564" stop-color="#fbfbfb"/><stop offset="0.567" stop-color="#ffffff"/><stop offset="0.569" stop-color="#898989"/><stop offset="0.571" stop-color="#464646"/><stop offset="0.574" stop-color="#4d4d4d"/><stop offset="0.576" stop-color="#303030"/><stop offset="0.578" stop-color="#a3a3a3"/><stop offset="0.581" stop-color="#ffffff"/><stop offset="0.583" stop-color="#5e5e5e"/><stop offset="0.585" stop-color="#303030"/><stop offset="0.588" stop-color="#494949"/><stop offset="0.590" stop-color="#ffffff"/><stop offset="0.592" stop-color="#ffffff"/><stop offset="0.595" stop-color="#b0b0b0"/><stop offset="0.597" stop-color="#303030"/><stop offset="0.599" stop-color="#303030"/><stop offset="0.602" stop-color="#717171"/><stop offset="0.604" stop-color="#ebebeb"/><stop offset="0.606" stop-color="#c0c0c0"/><stop offset="0.609" stop-color="#e7e7e7"/><stop offset="0.611" stop-color="#c6c6c6"/><stop offset="0.613" stop-color="#303030"/><stop offset="0.616" stop-color="#323232"/><stop offset="0.618" stop-color="#d2d2d2"/><stop offset="0.620" stop-color="#ffffff"/><stop offset="0.623" stop-color="#ffffff"/><stop offset="0.625" stop-color="#bcbcbc"/><stop offset="0.627" stop-color="#323232"/><stop offset="0.630" stop-color="#7c7c7c"/><stop offset="0.632" stop-color="#ffffff"/><stop offset="0.634" stop-color="#777777"/><stop offset="0.637" stop-color="#303030"/><stop offset="0.639" stop-color="#303030"/><stop offset="0.641" stop-color="#b8b8b8"/><stop offset="0.644" stop-color="#ffffff"/><stop offset="0.646" stop-color="#fdfdfd"/><stop offset="0.648" stop-color="#acacac"/><stop offset="0.651" stop-color="#a8a8a8"/><stop offset="0.653" stop-color="#4a4a4a"/><stop offset="0.655" stop-color="#303030"/><stop offset="0.658" stop-color="#737373"/><stop offset="0.662" stop-color="#7e7e7e"/><stop offset="0.665" stop-color="#ffffff"/><stop offset="0.667" stop-color="#fbfbfb"/><stop offset="0.669" stop-color="#747474"/><stop offset="0.672" stop-color="#343434"/><stop offset="0.674" stop-color="#343434"/><stop offset="0.676" stop-color="#bdbdbd"/><stop offset="0.679" stop-color="#f5f5f5"/><stop offset="0.681" stop-color="#434343"/><stop offset="0.683" stop-color="#303030"/><stop offset="0.686" stop-color="#5f5f5f"/><stop offset="0.688" stop-color="#ffffff"/><stop offset="0.690" stop-color="#ffffff"/><stop offset="0.693" stop-color="#838383"/><stop offset="0.695" stop-color="#303030"/><stop offset="0.697" stop-color="#6b6b6b"/><stop offset="0.700" stop-color="#ffffff"/><stop offset="0.702" stop-color="#d4d4d4"/><stop offset="0.704" stop-color="#303030"/><stop offset="0.707" stop-color="#303030"/><stop offset="0.709" stop-color="#f1f1f1"/><stop offset="0.711" stop-color="#ffffff"/><stop offset="0.714" stop-color="#7f7f7f"/><stop offset="0.716" stop-color="#303030"/><stop offset="0.718" stop-color="#737373"/><stop offset="0.721" stop-color="#c3c3c3"/><stop offset="0.723" stop-color="#9e9e9e"/><stop offset="0.725" stop-color="#949494"/><stop offset="0.728" stop-color="#acacac"/><stop offset="0.730" stop-color="#6b6b6b"/><stop offset="0.732" stop-color="#5c5c5c"/><stop offset="0.735" stop-color="#999999"/><stop offset="0.739" stop-color="#9a9a9a"/><stop offset="0.742" stop-color="#cdcdcd"/><stop offset="0.744" stop-color="#b3b3b3"/><stop offset="0.746" stop-color="#6a6a6a"/><stop offset="0.749" stop-color="#303030"/><stop offset="0.751" stop-color="#303030"/><stop offset="0.754" stop-color="#f1f1f1"/><stop offset="0.756" stop-color="#ffffff"/><stop offset="0.758" stop-color="#575757"/><stop offset="0.761" stop-color="#303030"/><stop offset="0.763" stop-color="#303030"/><stop offset="0.765" stop-color="#c8c8c8"/><stop offset="0.768" stop-color="#ffffff"/><stop offset="0.770" stop-color="#cacaca"/><stop offset="0.772" stop-color="#4b4b4b"/><stop offset="0.775" stop-color="#a2a2a2"/><stop offset="0.777" stop-color="#e3e3e3"/><stop offset="0.779" stop-color="#7f7f7f"/><stop offset="0.782" stop-color="#323232"/><stop offset="0.784" stop-color="#777777"/><stop offset="0.786" stop-color="#ebebeb"/><stop offset="0.789" stop-color="#ffffff"/><stop offset="0.791" stop-color="#737373"/><stop offset="0.793" stop-color="#303030"/><stop offset="0.796" stop-color="#313131"/><stop offset="0.798" stop-color="#ffffff"/><stop offset="0.800" stop-color="#fefefe"/><stop offset="0.803" stop-color="#8a8a8a"/><stop offset="0.805" stop-color="#f2f2f2"/><stop offset="0.807" stop-color="#ffffff"/><stop offset="0.810" stop-color="#555555"/><stop offset="0.812" stop-color="#303030"/><stop offset="0.814" stop-color="#6f6f6f"/><stop offset="0.817" stop-color="#fdfdfd"/><stop offset="0.819" stop-color="#959595"/><stop offset="0.821" stop-color="#7f7f7f"/><stop offset="0.824" stop-color="#9c9c9c"/><stop offset="0.826" stop-color="#464646"/><stop offset="0.828" stop-color="#383838"/><stop offset="0.831" stop-color="#989898"/><stop offset="0.833" stop-color="#e7e7e7"/><stop offset="0.835" stop-color="#bababa"/><stop offset="0.838" stop-color="#9b9b9b"/><stop offset="0.840" stop-color="#cecece"/><stop offset="0.842" stop-color="#a7a7a7"/><stop offset="0.845" stop-color="#525252"/><stop offset="0.847" stop-color="#303030"/><stop offset="0.849" stop-color="#323232"/><stop offset="0.852" stop-color="#c8c8c8"/><stop offset="0.854" stop-color="#ffffff"/><stop offset="0.856" stop-color="#c8c8c8"/><stop offset="0.859" stop-color="#676767"/><stop offset="0.861" stop-color="#757575"/><stop offset="0.866" stop-color="#4f4f4f"/><stop offset="0.870" stop-color="#f9f9f9"/><stop offset="0.873" stop-color="#c3c3c3"/><stop offset="0.875" stop-color="#a8a8a8"/><stop offset="0.877" stop-color="#dddddd"/><stop offset="0.880" stop-color="#666666"/><stop offset="0.882" stop-color="#303030"/><stop offset="0.884" stop-color="#323232"/><stop offset="0.887" stop-color="#e0e0e0"/><stop offset="0.889" stop-color="#ffffff"/><stop offset="0.891" stop-color="#d7d7d7"/><stop offset="0.896" stop-color="#575757"/><stop offset="0.898" stop-color="#343434"/><stop offset="0.901" stop-color="#b1b1b1"/><stop offset="0.903" stop-color="#ffffff"/><stop offset="0.905" stop-color="#f3f3f3"/><stop offset="0.908" stop-color="#8b8b8b"/><stop offset="0.910" stop-color="#303030"/><stop offset="0.912" stop-color="#303030"/><stop offset="0.915" stop-color="#5a5a5a"/><stop offset="0.917" stop-color="#fafafa"/><stop offset="0.919" stop-color="#bfbfbf"/><stop offset="0.922" stop-color="#363636"/><stop offset="0.924" stop-color="#b3b3b3"/><stop offset="0.926" stop-color="#e9e9e9"/><stop offset="0.929" stop-color="#d1d1d1"/><stop offset="0.931" stop-color="#fbfbfb"/><stop offset="0.933" stop-color="#f9f9f9"/><stop offset="0.936" stop-color="#575757"/><stop offset="0.938" stop-color="#303030"/><stop offset="0.940" stop-color="#303030"/><stop offset="0.943" stop-color="#dcdcdc"/><stop offset="0.945" stop-color="#ffffff"/><stop offset="0.947" stop-color="#ababab"/><stop offset="0.950" stop-color="#303030"/><stop offset="0.952" stop-color="#676767"/><stop offset="0.954" stop-color="#fefefe"/><stop offset="0.957" stop-color="#ffffff"/><stop offset="0.959" stop-color="#d6d6d6"/><stop offset="0.961" stop-color="#656565"/><stop offset="0.964" stop-color="#404040"/><stop offset="0.966" stop-color="#4e4e4e"/><stop offset="0.968" stop-color="#707070"/><stop offset="0.971" stop-color="#f7f7f7"/><stop offset="0.973" stop-color="#dedede"/><stop offset="0.975" stop-color="#333333"/><stop offset="0.980" stop-color="#343434"/><stop offset="0.982" stop-color="#fcfcfc"/><stop offset="0.985" stop-color="#ffffff"/><stop offset="0.987" stop-color="#d8d8d8"/><stop offset="0.989" stop-color="#303030"/><stop offset="0.992" stop-color="#333333"/><stop offset="0.994" stop-color="#b1b1b1"/><stop offset="0.996" stop-color="#ffffff"/><stop offset="0.999" stop-color="#e6e6e6"/></linearGradient><linearGradient id="s2" x1="0" y1="0" x2="0" y2="1"><stop offset="0.001" stop-color="#9d9d9d"/><stop offset="0.020" stop-color="#a0a0a0"/><stop offset="0.022" stop-color="#979797"/><stop offset="0.027" stop-color="#a0a0a0"/><stop offset="0.032" stop-color="#9d9d9d"/><stop offset="0.034" stop-color="#a1a1a1"/><stop offset="0.036" stop-color="#939393"/><stop offset="0.041" stop-color="#a4a4a4"/><stop offset="0.043" stop-color="#878787"/><stop offset="0.046" stop-color="#cccccc"/><stop offset="0.048" stop-color="#777777"/><stop offset="0.050" stop-color="#878787"/><stop offset="0.053" stop-color="#c5c5c5"/><stop offset="0.055" stop-color="#9c9c9c"/><stop offset="0.057" stop-color="#989898"/><stop offset="0.060" stop-color="#a0a0a0"/><stop offset="0.062" stop-color="#8e8e8e"/><stop offset="0.064" stop-color="#9d9d9d"/><stop offset="0.067" stop-color="#b7b7b7"/><stop offset="0.069" stop-color="#585858"/><stop offset="0.071" stop-color="#d8d8d8"/><stop offset="0.074" stop-color="#7e7e7e"/><stop offset="0.076" stop-color="#e4e4e4"/><stop offset="0.078" stop-color="#646464"/><stop offset="0.081" stop-color="#989898"/><stop offset="0.083" stop-color="#a0a0a0"/><stop offset="0.085" stop-color="#bebebe"/><stop offset="0.088" stop-color="#3c3c3c"/><stop offset="0.090" stop-color="#e4e4e4"/><stop offset="0.092" stop-color="#909090"/><stop offset="0.095" stop-color="#989898"/><stop offset="0.097" stop-color="#c3c3c3"/><stop offset="0.099" stop-color="#9d9d9d"/><stop offset="0.102" stop-color="#5d5d5d"/><stop offset="0.104" stop-color="#b4b4b4"/><stop offset="0.106" stop-color="#c4c4c4"/><stop offset="0.109" stop-color="#3e3e3e"/><stop offset="0.111" stop-color="#fbfbfb"/><stop offset="0.113" stop-color="#4e4e4e"/><stop offset="0.116" stop-color="#9b9b9b"/><stop offset="0.118" stop-color="#747474"/><stop offset="0.120" stop-color="#eaeaea"/><stop offset="0.123" stop-color="#979797"/><stop offset="0.125" stop-color="#949494"/><stop offset="0.127" stop-color="#545454"/><stop offset="0.130" stop-color="#f1f1f1"/><stop offset="0.132" stop-color="#b3b3b3"/><stop offset="0.134" stop-color="#b3b3b3"/><stop offset="0.137" stop-color="#303030"/><stop offset="0.139" stop-color="#f5f5f5"/><stop offset="0.141" stop-color="#808080"/><stop offset="0.144" stop-color="#878787"/><stop offset="0.146" stop-color="#d4d4d4"/><stop offset="0.148" stop-color="#dadada"/><stop offset="0.151" stop-color="#303030"/><stop offset="0.153" stop-color="#484848"/><stop offset="0.155" stop-color="#ffffff"/><stop offset="0.158" stop-color="#5b5b5b"/><stop offset="0.160" stop-color="#ffffff"/><stop offset="0.162" stop-color="#818181"/><stop offset="0.165" stop-color="#303030"/><stop offset="0.167" stop-color="#dedede"/><stop offset="0.169" stop-color="#ffffff"/><stop offset="0.172" stop-color="#666666"/><stop offset="0.174" stop-color="#3a3a3a"/><stop offset="0.176" stop-color="#6e6e6e"/><stop offset="0.179" stop-color="#fcfcfc"/><stop offset="0.181" stop-color="#575757"/><stop offset="0.183" stop-color="#ffffff"/><stop offset="0.186" stop-color="#747474"/><stop offset="0.188" stop-color="#ffffff"/><stop offset="0.190" stop-color="#303030"/><stop offset="0.193" stop-color="#494949"/><stop offset="0.195" stop-color="#bdbdbd"/><stop offset="0.197" stop-color="#b0b0b0"/><stop offset="0.200" stop-color="#b3b3b3"/><stop offset="0.202" stop-color="#757575"/><stop offset="0.204" stop-color="#dedede"/><stop offset="0.207" stop-color="#eeeeee"/><stop offset="0.209" stop-color="#575757"/><stop offset="0.211" stop-color="#303030"/><stop offset="0.214" stop-color="#c3c3c3"/><stop offset="0.216" stop-color="#ffffff"/><stop offset="0.218" stop-color="#9d9d9d"/><stop offset="0.223" stop-color="#757575"/><stop offset="0.225" stop-color="#787878"/><stop offset="0.228" stop-color="#bfbfbf"/><stop offset="0.230" stop-color="#e3e3e3"/><stop offset="0.232" stop-color="#b6b6b6"/><stop offset="0.235" stop-color="#303030"/><stop offset="0.237" stop-color="#707070"/><stop offset="0.239" stop-color="#c3c3c3"/><stop offset="0.242" stop-color="#bababa"/><stop offset="0.244" stop-color="#c8c8c8"/><stop offset="0.246" stop-color="#939393"/><stop offset="0.249" stop-color="#303030"/><stop offset="0.251" stop-color="#ebebeb"/><stop offset="0.254" stop-color="#bdbdbd"/><stop offset="0.256" stop-color="#313131"/><stop offset="0.258" stop-color="#747474"/><stop offset="0.261" stop-color="#ffffff"/><stop offset="0.263" stop-color="#7c7c7c"/><stop offset="0.265" stop-color="#373737"/><stop offset="0.268" stop-color="#676767"/><stop offset="0.270" stop-color="#fefefe"/><stop offset="0.272" stop-color="#505050"/><stop offset="0.275" stop-color="#303030"/><stop offset="0.277" stop-color="#858585"/><stop offset="0.279" stop-color="#f6f6f6"/><stop offset="0.282" stop-color="#f5f5f5"/><stop offset="0.284" stop-color="#373737"/><stop offset="0.286" stop-color="#5e5e5e"/><stop offset="0.289" stop-color="#fbfbfb"/><stop offset="0.291" stop-color="#525252"/><stop offset="0.293" stop-color="#c7c7c7"/><stop offset="0.296" stop-color="#f8f8f8"/><stop offset="0.298" stop-color="#303030"/><stop offset="0.300" stop-color="#525252"/><stop offset="0.303" stop-color="#e0e0e0"/><stop offset="0.305" stop-color="#e8e8e8"/><stop offset="0.307" stop-color="#8c8c8c"/><stop offset="0.310" stop-color="#616161"/><stop offset="0.312" stop-color="#8c8c8c"/><stop offset="0.314" stop-color="#5a5a5a"/><stop offset="0.317" stop-color="#f5f5f5"/><stop offset="0.319" stop-color="#dbdbdb"/><stop offset="0.321" stop-color="#979797"/><stop offset="0.326" stop-color="#404040"/><stop offset="0.328" stop-color="#d8d8d8"/><stop offset="0.331" stop-color="#ffffff"/><stop offset="0.333" stop-color="#303030"/><stop offset="0.335" stop-color="#575757"/><stop offset="0.338" stop-color="#ffffff"/><stop offset="0.340" stop-color="#a2a2a2"/><stop offset="0.342" stop-color="#595959"/><stop offset="0.345" stop-color="#ffffff"/><stop offset="0.347" stop-color="#9e9e9e"/><stop offset="0.349" stop-color="#303030"/><stop offset="0.352" stop-color="#a8a8a8"/><stop offset="0.354" stop-color="#d4d4d4"/><stop offset="0.361" stop-color="#616161"/><stop offset="0.363" stop-color="#a4a4a4"/><stop offset="0.366" stop-color="#7c7c7c"/><stop offset="0.368" stop-color="#676767"/><stop offset="0.373" stop-color="#a6a6a6"/><stop offset="0.375" stop-color="#ffffff"/><stop offset="0.377" stop-color="#e6e6e6"/><stop offset="0.380" stop-color="#313131"/><stop offset="0.382" stop-color="#303030"/><stop offset="0.384" stop-color="#dedede"/><stop offset="0.387" stop-color="#b2b2b2"/><stop offset="0.389" stop-color="#313131"/><stop offset="0.391" stop-color="#a4a4a4"/><stop offset="0.394" stop-color="#ffffff"/><stop offset="0.396" stop-color="#bcbcbc"/><stop offset="0.398" stop-color="#838383"/><stop offset="0.401" stop-color="#f6f6f6"/><stop offset="0.403" stop-color="#313131"/><stop offset="0.405" stop-color="#303030"/><stop offset="0.408" stop-color="#9c9c9c"/><stop offset="0.410" stop-color="#dadada"/><stop offset="0.412" stop-color="#cccccc"/><stop offset="0.415" stop-color="#868686"/><stop offset="0.417" stop-color="#5b5b5b"/><stop offset="0.419" stop-color="#c0c0c0"/><stop offset="0.422" stop-color="#a4a4a4"/><stop offset="0.424" stop-color="#303030"/><stop offset="0.426" stop-color="#858585"/><stop offset="0.429" stop-color="#ffffff"/><stop offset="0.431" stop-color="#f8f8f8"/><stop offset="0.433" stop-color="#cccccc"/><stop offset="0.436" stop-color="#4f4f4f"/><stop offset="0.438" stop-color="#333333"/><stop offset="0.440" stop-color="#969696"/><stop offset="0.443" stop-color="#b3b3b3"/><stop offset="0.445" stop-color="#8c8c8c"/><stop offset="0.447" stop-color="#bcbcbc"/><stop offset="0.450" stop-color="#505050"/><stop offset="0.452" stop-color="#424242"/><stop offset="0.454" stop-color="#e8e8e8"/><stop offset="0.457" stop-color="#d0d0d0"/><stop offset="0.459" stop-color="#373737"/><stop offset="0.464" stop-color="#7b7b7b"/><stop offset="0.466" stop-color="#a5a5a5"/><stop offset="0.468" stop-color="#fdfdfd"/><stop offset="0.471" stop-color="#ffffff"/><stop offset="0.473" stop-color="#b4b4b4"/><stop offset="0.475" stop-color="#303030"/><stop offset="0.478" stop-color="#333333"/><stop offset="0.480" stop-color="#d0d0d0"/><stop offset="0.482" stop-color="#dddddd"/><stop offset="0.485" stop-color="#3c3c3c"/><stop offset="0.489" stop-color="#b6b6b6"/><stop offset="0.492" stop-color="#e4e4e4"/><stop offset="0.494" stop-color="#fafafa"/><stop offset="0.496" stop-color="#505050"/><stop offset="0.499" stop-color="#303030"/><stop offset="0.501" stop-color="#7f7f7f"/><stop offset="0.504" stop-color="#ffffff"/><stop offset="0.506" stop-color="#c0c0c0"/><stop offset="0.508" stop-color="#4a4a4a"/><stop offset="0.511" stop-color="#afafaf"/><stop offset="0.513" stop-color="#fafafa"/><stop offset="0.515" stop-color="#b9b9b9"/><stop offset="0.518" stop-color="#a5a5a5"/><stop offset="0.522" stop-color="#303030"/><stop offset="0.525" stop-color="#888888"/><stop offset="0.527" stop-color="#ffffff"/><stop offset="0.529" stop-color="#6c6c6c"/><stop offset="0.532" stop-color="#343434"/><stop offset="0.534" stop-color="#d2d2d2"/><stop offset="0.536" stop-color="#ffffff"/><stop offset="0.539" stop-color="#d3d3d3"/><stop offset="0.541" stop-color="#313131"/><stop offset="0.543" stop-color="#303030"/><stop offset="0.546" stop-color="#cdcdcd"/><stop offset="0.548" stop-color="#f6f6f6"/><stop offset="0.550" stop-color="#bdbdbd"/><stop offset="0.553" stop-color="#e1e1e1"/><stop offset="0.555" stop-color="#d5d5d5"/><stop offset="0.557" stop-color="#b8b8b8"/><stop offset="0.560" stop-color="#494949"/><stop offset="0.562" stop-color="#303030"/><stop offset="0.564" stop-color="#717171"/><stop offset="0.567" stop-color="#ffffff"/><stop offset="0.569" stop-color="#f5f5f5"/><stop offset="0.571" stop-color="#646464"/><stop offset="0.574" stop-color="#4b4b4b"/><stop offset="0.576" stop-color="#3e3e3e"/><stop offset="0.578" stop-color="#3d3d3d"/><stop offset="0.581" stop-color="#c0c0c0"/><stop offset="0.583" stop-color="#ededed"/><stop offset="0.585" stop-color="#3d3d3d"/><stop offset="0.588" stop-color="#303030"/><stop offset="0.590" stop-color="#a5a5a5"/><stop offset="0.592" stop-color="#ffffff"/><stop offset="0.595" stop-color="#ffffff"/><stop offset="0.597" stop-color="#676767"/><stop offset="0.599" stop-color="#303030"/><stop offset="0.602" stop-color="#303030"/><stop offset="0.604" stop-color="#949494"/><stop offset="0.606" stop-color="#dedede"/><stop offset="0.609" stop-color="#a6a6a6"/><stop offset="0.611" stop-color="#f7f7f7"/><stop offset="0.613" stop-color="#7e7e7e"/><stop offset="0.616" stop-color="#303030"/><stop offset="0.618" stop-color="#676767"/><stop offset="0.620" stop-color="#ffffff"/><stop offset="0.623" stop-color="#ffffff"/><stop offset="0.625" stop-color="#f0f0f0"/><stop offset="0.627" stop-color="#787878"/><stop offset="0.630" stop-color="#353535"/><stop offset="0.632" stop-color="#c3c3c3"/><stop offset="0.634" stop-color="#f4f4f4"/><stop offset="0.637" stop-color="#404040"/><stop offset="0.639" stop-color="#303030"/><stop offset="0.641" stop-color="#313131"/><stop offset="0.644" stop-color="#e8e8e8"/><stop offset="0.646" stop-color="#ffffff"/><stop offset="0.648" stop-color="#fdfdfd"/><stop offset="0.651" stop-color="#dbdbdb"/><stop offset="0.653" stop-color="#727272"/><stop offset="0.655" stop-color="#303030"/><stop offset="0.658" stop-color="#343434"/><stop offset="0.660" stop-color="#7e7e7e"/><stop offset="0.662" stop-color="#696969"/><stop offset="0.665" stop-color="#dddddd"/><stop offset="0.667" stop-color="#ffffff"/><stop offset="0.669" stop-color="#b1b1b1"/><stop offset="0.672" stop-color="#4e4e4e"/><stop offset="0.674" stop-color="#3e3e3e"/><stop offset="0.676" stop-color="#656565"/><stop offset="0.679" stop-color="#e0e0e0"/><stop offset="0.681" stop-color="#9c9c9c"/><stop offset="0.683" stop-color="#303030"/><stop offset="0.686" stop-color="#313131"/><stop offset="0.688" stop-color="#dadada"/><stop offset="0.690" stop-color="#fefefe"/><stop offset="0.693" stop-color="#8b8b8b"/><stop offset="0.695" stop-color="#333333"/><stop offset="0.697" stop-color="#535353"/><stop offset="0.700" stop-color="#dedede"/><stop offset="0.702" stop-color="#f7f7f7"/><stop offset="0.704" stop-color="#686868"/><stop offset="0.707" stop-color="#5c5c5c"/><stop offset="0.709" stop-color="#b8b8b8"/><stop offset="0.711" stop-color="#b9b9b9"/><stop offset="0.714" stop-color="#9e9e9e"/><stop offset="0.716" stop-color="#484848"/><stop offset="0.718" stop-color="#4f4f4f"/><stop offset="0.721" stop-color="#cdcdcd"/><stop offset="0.723" stop-color="#8d8d8d"/><stop offset="0.725" stop-color="#6b6b6b"/><stop offset="0.728" stop-color="#d3d3d3"/><stop offset="0.730" stop-color="#c3c3c3"/><stop offset="0.732" stop-color="#5c5c5c"/><stop offset="0.735" stop-color="#707070"/><stop offset="0.737" stop-color="#8f8f8f"/><stop offset="0.739" stop-color="#626262"/><stop offset="0.742" stop-color="#b4b4b4"/><stop offset="0.744" stop-color="#f8f8f8"/><stop offset="0.746" stop-color="#7e7e7e"/><stop offset="0.749" stop-color="#303030"/><stop offset="0.751" stop-color="#313131"/><stop offset="0.754" stop-color="#8c8c8c"/><stop offset="0.756" stop-color="#ffffff"/><stop offset="0.758" stop-color="#ececec"/><stop offset="0.761" stop-color="#303030"/><stop offset="0.763" stop-color="#303030"/><stop offset="0.765" stop-color="#818181"/><stop offset="0.768" stop-color="#ffffff"/><stop offset="0.770" stop-color="#ffffff"/><stop offset="0.772" stop-color="#454545"/><stop offset="0.775" stop-color="#333333"/><stop offset="0.777" stop-color="#dbdbdb"/><stop offset="0.779" stop-color="#f6f6f6"/><stop offset="0.782" stop-color="#474747"/><stop offset="0.784" stop-color="#3d3d3d"/><stop offset="0.786" stop-color="#cacaca"/><stop offset="0.789" stop-color="#e0e0e0"/><stop offset="0.791" stop-color="#acacac"/><stop offset="0.793" stop-color="#3d3d3d"/><stop offset="0.796" stop-color="#333333"/><stop offset="0.798" stop-color="#9a9a9a"/><stop offset="0.800" stop-color="#b8b8b8"/><stop offset="0.803" stop-color="#a8a8a8"/><stop offset="0.805" stop-color="#e4e4e4"/><stop offset="0.807" stop-color="#ececec"/><stop offset="0.810" stop-color="#c1c1c1"/><stop offset="0.812" stop-color="#636363"/><stop offset="0.814" stop-color="#303030"/><stop offset="0.817" stop-color="#797979"/><stop offset="0.819" stop-color="#e8e8e8"/><stop offset="0.821" stop-color="#9f9f9f"/><stop offset="0.824" stop-color="#424242"/><stop offset="0.826" stop-color="#353535"/><stop offset="0.828" stop-color="#646464"/><stop offset="0.831" stop-color="#c6c6c6"/><stop offset="0.833" stop-color="#e8e8e8"/><stop offset="0.835" stop-color="#fafafa"/><stop offset="0.840" stop-color="#3c3c3c"/><stop offset="0.842" stop-color="#898989"/><stop offset="0.845" stop-color="#eaeaea"/><stop offset="0.847" stop-color="#717171"/><stop offset="0.849" stop-color="#303030"/><stop offset="0.852" stop-color="#424242"/><stop offset="0.854" stop-color="#e0e0e0"/><stop offset="0.856" stop-color="#cccccc"/><stop offset="0.859" stop-color="#8d8d8d"/><stop offset="0.861" stop-color="#a8a8a8"/><stop offset="0.863" stop-color="#b0b0b0"/><stop offset="0.868" stop-color="#474747"/><stop offset="0.870" stop-color="#919191"/><stop offset="0.873" stop-color="#f8f8f8"/><stop offset="0.875" stop-color="#e0e0e0"/><stop offset="0.877" stop-color="#9d9d9d"/><stop offset="0.880" stop-color="#b1b1b1"/><stop offset="0.882" stop-color="#4a4a4a"/><stop offset="0.884" stop-color="#303030"/><stop offset="0.887" stop-color="#3c3c3c"/><stop offset="0.889" stop-color="#fafafa"/><stop offset="0.891" stop-color="#ffffff"/><stop offset="0.894" stop-color="#afafaf"/><stop offset="0.896" stop-color="#969696"/><stop offset="0.898" stop-color="#4b4b4b"/><stop offset="0.901" stop-color="#303030"/><stop offset="0.903" stop-color="#9f9f9f"/><stop offset="0.905" stop-color="#ffffff"/><stop offset="0.908" stop-color="#ffffff"/><stop offset="0.910" stop-color="#aeaeae"/><stop offset="0.912" stop-color="#303030"/><stop offset="0.915" stop-color="#303030"/><stop offset="0.917" stop-color="#505050"/><stop offset="0.919" stop-color="#ffffff"/><stop offset="0.922" stop-color="#b4b4b4"/><stop offset="0.924" stop-color="#303030"/><stop offset="0.926" stop-color="#d3d3d3"/><stop offset="0.929" stop-color="#fafafa"/><stop offset="0.931" stop-color="#bdbdbd"/><stop offset="0.933" stop-color="#f9f9f9"/><stop offset="0.936" stop-color="#fcfcfc"/><stop offset="0.938" stop-color="#494949"/><stop offset="0.940" stop-color="#303030"/><stop offset="0.943" stop-color="#313131"/><stop offset="0.945" stop-color="#e7e7e7"/><stop offset="0.947" stop-color="#ffffff"/><stop offset="0.952" stop-color="#303030"/><stop offset="0.954" stop-color="#767676"/><stop offset="0.957" stop-color="#ffffff"/><stop offset="0.959" stop-color="#ffffff"/><stop offset="0.961" stop-color="#d4d4d4"/><stop offset="0.964" stop-color="#515151"/><stop offset="0.966" stop-color="#363636"/><stop offset="0.968" stop-color="#494949"/><stop offset="0.971" stop-color="#949494"/><stop offset="0.973" stop-color="#ffffff"/><stop offset="0.975" stop-color="#bcbcbc"/><stop offset="0.978" stop-color="#303030"/><stop offset="0.980" stop-color="#303030"/><stop offset="0.982" stop-color="#515151"/><stop offset="0.985" stop-color="#ffffff"/><stop offset="0.987" stop-color="#ffffff"/><stop offset="0.992" stop-color="#303030"/><stop offset="0.994" stop-color="#4c4c4c"/><stop offset="0.996" stop-color="#dadada"/><stop offset="0.999" stop-color="#ffffff"/></linearGradient><linearGradient id="s3" x1="0" y1="0" x2="0" y2="1"><stop offset="0.001" stop-color="#9d9d9d"/><stop offset="0.041" stop-color="#9f9f9f"/><stop offset="0.043" stop-color="#989898"/><stop offset="0.046" stop-color="#a5a5a5"/><stop offset="0.048" stop-color="#979797"/><stop offset="0.050" stop-color="#969696"/><stop offset="0.053" stop-color="#a7a7a7"/><stop offset="0.055" stop-color="#9a9a9a"/><stop offset="0.057" stop-color="#9f9f9f"/><stop offset="0.060" stop-color="#959595"/><stop offset="0.062" stop-color="#a7a7a7"/><stop offset="0.064" stop-color="#919191"/><stop offset="0.067" stop-color="#ababab"/><stop offset="0.069" stop-color="#828282"/><stop offset="0.071" stop-color="#a5a5a5"/><stop offset="0.076" stop-color="#a6a6a6"/><stop offset="0.078" stop-color="#888888"/><stop offset="0.081" stop-color="#a2a2a2"/><stop offset="0.083" stop-color="#919191"/><stop offset="0.085" stop-color="#b9b9b9"/><stop offset="0.088" stop-color="#737373"/><stop offset="0.092" stop-color="#bababa"/><stop offset="0.095" stop-color="#939393"/><stop offset="0.097" stop-color="#aaaaaa"/><stop offset="0.099" stop-color="#b0b0b0"/><stop offset="0.102" stop-color="#606060"/><stop offset="0.104" stop-color="#b5b5b5"/><stop offset="0.106" stop-color="#a8a8a8"/><stop offset="0.109" stop-color="#7d7d7d"/><stop offset="0.111" stop-color="#b0b0b0"/><stop offset="0.113" stop-color="#929292"/><stop offset="0.116" stop-color="#aaaaaa"/><stop offset="0.118" stop-color="#525252"/><stop offset="0.120" stop-color="#e3e3e3"/><stop offset="0.123" stop-color="#a8a8a8"/><stop offset="0.125" stop-color="#9c9c9c"/><stop offset="0.127" stop-color="#3f3f3f"/><stop offset="0.130" stop-color="#f0f0f0"/><stop offset="0.132" stop-color="#b6b6b6"/><stop offset="0.134" stop-color="#bebebe"/><stop offset="0.137" stop-color="#303030"/><stop offset="0.139" stop-color="#f3f3f3"/><stop offset="0.141" stop-color="#818181"/><stop offset="0.144" stop-color="#949494"/><stop offset="0.146" stop-color="#b2b2b2"/><stop offset="0.148" stop-color="#f0f0f0"/><stop offset="0.151" stop-color="#363636"/><stop offset="0.153" stop-color="#303030"/><stop offset="0.155" stop-color="#ffffff"/><stop offset="0.158" stop-color="#686868"/><stop offset="0.160" stop-color="#fefefe"/><stop offset="0.162" stop-color="#a2a2a2"/><stop offset="0.165" stop-color="#303030"/><stop offset="0.169" stop-color="#ffffff"/><stop offset="0.174" stop-color="#303030"/><stop offset="0.176" stop-color="#717171"/><stop offset="0.179" stop-color="#e7e7e7"/><stop offset="0.181" stop-color="#616161"/><stop offset="0.183" stop-color="#fefefe"/><stop offset="0.186" stop-color="#7b7b7b"/><stop offset="0.188" stop-color="#ffffff"/><stop offset="0.190" stop-color="#393939"/><stop offset="0.193" stop-color="#373737"/><stop offset="0.195" stop-color="#878787"/><stop offset="0.197" stop-color="#c6c6c6"/><stop offset="0.200" stop-color="#cdcdcd"/><stop offset="0.202" stop-color="#5c5c5c"/><stop offset="0.204" stop-color="#bdbdbd"/><stop offset="0.207" stop-color="#ffffff"/><stop offset="0.209" stop-color="#7c7c7c"/><stop offset="0.211" stop-color="#303030"/><stop offset="0.214" stop-color="#868686"/><stop offset="0.216" stop-color="#fefefe"/><stop offset="0.221" stop-color="#898989"/><stop offset="0.225" stop-color="#737373"/><stop offset="0.228" stop-color="#b2b2b2"/><stop offset="0.230" stop-color="#bababa"/><stop offset="0.232" stop-color="#e9e9e9"/><stop offset="0.235" stop-color="#5f5f5f"/><stop offset="0.237" stop-color="#393939"/><stop offset="0.239" stop-color="#7c7c7c"/><stop offset="0.242" stop-color="#d7d7d7"/><stop offset="0.244" stop-color="#d8d8d8"/><stop offset="0.246" stop-color="#a1a1a1"/><stop offset="0.249" stop-color="#4f4f4f"/><stop offset="0.251" stop-color="#6e6e6e"/><stop offset="0.254" stop-color="#ffffff"/><stop offset="0.256" stop-color="#646464"/><stop offset="0.258" stop-color="#303030"/><stop offset="0.261" stop-color="#dbdbdb"/><stop offset="0.263" stop-color="#fcfcfc"/><stop offset="0.265" stop-color="#383838"/><stop offset="0.268" stop-color="#505050"/><stop offset="0.270" stop-color="#c5c5c5"/><stop offset="0.272" stop-color="#bababa"/><stop offset="0.275" stop-color="#303030"/><stop offset="0.277" stop-color="#7e7e7e"/><stop offset="0.279" stop-color="#858585"/><stop offset="0.282" stop-color="#ffffff"/><stop offset="0.284" stop-color="#c2c2c2"/><stop offset="0.286" stop-color="#303030"/><stop offset="0.289" stop-color="#b9b9b9"/><stop offset="0.291" stop-color="#c3c3c3"/><stop offset="0.293" stop-color="#565656"/><stop offset="0.296" stop-color="#fafafa"/><stop offset="0.298" stop-color="#9d9d9d"/><stop offset="0.300" stop-color="#303030"/><stop offset="0.303" stop-color="#b0b0b0"/><stop offset="0.305" stop-color="#ededed"/><stop offset="0.307" stop-color="#b6b6b6"/><stop offset="0.310" stop-color="#575757"/><stop offset="0.312" stop-color="#959595"/><stop offset="0.314" stop-color="#656565"/><stop offset="0.317" stop-color="#b6b6b6"/><stop offset="0.319" stop-color="#fdfdfd"/><stop offset="0.321" stop-color="#909090"/><stop offset="0.324" stop-color="#9b9b9b"/><stop offset="0.326" stop-color="#474747"/><stop offset="0.328" stop-color="#888888"/><stop offset="0.331" stop-color="#ffffff"/><stop offset="0.333" stop-color="#474747"/><stop offset="0.335" stop-color="#303030"/><stop offset="0.338" stop-color="#ffffff"/><stop offset="0.340" stop-color="#dbdbdb"/><stop offset="0.342" stop-color="#404040"/><stop offset="0.345" stop-color="#f2f2f2"/><stop offset="0.347" stop-color="#f4f4f4"/><stop offset="0.349" stop-color="#373737"/><stop offset="0.352" stop-color="#646464"/><stop offset="0.354" stop-color="#d3d3d3"/><stop offset="0.356" stop-color="#bcbcbc"/><stop offset="0.361" stop-color="#616161"/><stop offset="0.363" stop-color="#afafaf"/><stop offset="0.368" stop-color="#595959"/><stop offset="0.370" stop-color="#959595"/><stop offset="0.373" stop-color="#848484"/><stop offset="0.375" stop-color="#ffffff"/><stop offset="0.377" stop-color="#ffffff"/><stop offset="0.380" stop-color="#494949"/><stop offset="0.382" stop-color="#303030"/><stop offset="0.384" stop-color="#c4c4c4"/><stop offset="0.387" stop-color="#bebebe"/><stop offset="0.389" stop-color="#333333"/><stop offset="0.394" stop-color="#ffffff"/><stop offset="0.396" stop-color="#d6d6d6"/><stop offset="0.398" stop-color="#848484"/><stop offset="0.401" stop-color="#dfdfdf"/><stop offset="0.403" stop-color="#4b4b4b"/><stop offset="0.405" stop-color="#303030"/><stop offset="0.408" stop-color="#787878"/><stop offset="0.410" stop-color="#cfcfcf"/><stop offset="0.412" stop-color="#dadada"/><stop offset="0.415" stop-color="#9e9e9e"/><stop offset="0.417" stop-color="#484848"/><stop offset="0.422" stop-color="#e6e6e6"/><stop offset="0.424" stop-color="#303030"/><stop offset="0.426" stop-color="#313131"/><stop offset="0.429" stop-color="#ffffff"/><stop offset="0.431" stop-color="#ffffff"/><stop offset="0.433" stop-color="#dadada"/><stop offset="0.436" stop-color="#949494"/><stop offset="0.438" stop-color="#303030"/><stop offset="0.440" stop-color="#5c5c5c"/><stop offset="0.443" stop-color="#a9a9a9"/><stop offset="0.445" stop-color="#838383"/><stop offset="0.447" stop-color="#b1b1b1"/><stop offset="0.450" stop-color="#cecece"/><stop offset="0.452" stop-color="#303030"/><stop offset="0.454" stop-color="#727272"/><stop offset="0.457" stop-color="#fefefe"/><stop offset="0.459" stop-color="#8d8d8d"/><stop offset="0.461" stop-color="#303030"/><stop offset="0.464" stop-color="#838383"/><stop offset="0.466" stop-color="#959595"/><stop offset="0.468" stop-color="#b2b2b2"/><stop offset="0.471" stop-color="#fefefe"/><stop offset="0.473" stop-color="#ffffff"/><stop offset="0.478" stop-color="#303030"/><stop offset="0.480" stop-color="#3d3d3d"/><stop offset="0.482" stop-color="#dfdfdf"/><stop offset="0.485" stop-color="#c6c6c6"/><stop offset="0.487" stop-color="#474747"/><stop offset="0.492" stop-color="#c4c4c4"/><stop offset="0.496" stop-color="#f9f9f9"/><stop offset="0.499" stop-color="#4d4d4d"/><stop offset="0.501" stop-color="#303030"/><stop offset="0.504" stop-color="#9d9d9d"/><stop offset="0.506" stop-color="#ffffff"/><stop offset="0.508" stop-color="#b8b8b8"/><stop offset="0.511" stop-color="#444444"/><stop offset="0.515" stop-color="#f8f8f8"/><stop offset="0.520" stop-color="#919191"/><stop offset="0.522" stop-color="#494949"/><stop offset="0.525" stop-color="#303030"/><stop offset="0.527" stop-color="#bebebe"/><stop offset="0.529" stop-color="#f8f8f8"/><stop offset="0.532" stop-color="#424242"/><stop offset="0.534" stop-color="#484848"/><stop offset="0.536" stop-color="#d3d3d3"/><stop offset="0.539" stop-color="#ffffff"/><stop offset="0.541" stop-color="#d6d6d6"/><stop offset="0.543" stop-color="#333333"/><stop offset="0.546" stop-color="#303030"/><stop offset="0.548" stop-color="#cacaca"/><stop offset="0.550" stop-color="#e6e6e6"/><stop offset="0.553" stop-color="#a5a5a5"/><stop offset="0.555" stop-color="#ffffff"/><stop offset="0.557" stop-color="#f6f6f6"/><stop offset="0.560" stop-color="#7d7d7d"/><stop offset="0.562" stop-color="#303030"/><stop offset="0.564" stop-color="#303030"/><stop offset="0.567" stop-color="#c3c3c3"/><stop offset="0.569" stop-color="#ffffff"/><stop offset="0.571" stop-color="#e5e5e5"/><stop offset="0.574" stop-color="#5b5b5b"/><stop offset="0.576" stop-color="#464646"/><stop offset="0.581" stop-color="#3f3f3f"/><stop offset="0.583" stop-color="#cbcbcb"/><stop offset="0.585" stop-color="#d5d5d5"/><stop offset="0.588" stop-color="#313131"/><stop offset="0.590" stop-color="#303030"/><stop offset="0.592" stop-color="#dedede"/><stop offset="0.595" stop-color="#ffffff"/><stop offset="0.597" stop-color="#f8f8f8"/><stop offset="0.599" stop-color="#808080"/><stop offset="0.602" stop-color="#303030"/><stop offset="0.604" stop-color="#313131"/><stop offset="0.606" stop-color="#aeaeae"/><stop offset="0.609" stop-color="#bcbcbc"/><stop offset="0.611" stop-color="#ababab"/><stop offset="0.613" stop-color="#fbfbfb"/><stop offset="0.616" stop-color="#363636"/><stop offset="0.618" stop-color="#303030"/><stop offset="0.620" stop-color="#efefef"/><stop offset="0.623" stop-color="#ffffff"/><stop offset="0.625" stop-color="#d2d2d2"/><stop offset="0.627" stop-color="#bcbcbc"/><stop offset="0.630" stop-color="#5f5f5f"/><stop offset="0.632" stop-color="#676767"/><stop offset="0.634" stop-color="#e0e0e0"/><stop offset="0.637" stop-color="#b9b9b9"/><stop offset="0.639" stop-color="#303030"/><stop offset="0.641" stop-color="#303030"/><stop offset="0.644" stop-color="#4a4a4a"/><stop offset="0.646" stop-color="#ffffff"/><stop offset="0.651" stop-color="#ffffff"/><stop offset="0.653" stop-color="#9d9d9d"/><stop offset="0.655" stop-color="#303030"/><stop offset="0.658" stop-color="#303030"/><stop offset="0.660" stop-color="#464646"/><stop offset="0.665" stop-color="#adadad"/><stop offset="0.667" stop-color="#fefefe"/><stop offset="0.669" stop-color="#ededed"/><stop offset="0.672" stop-color="#7d7d7d"/><stop offset="0.674" stop-color="#5f5f5f"/><stop offset="0.676" stop-color="#5f5f5f"/><stop offset="0.681" stop-color="#a9a9a9"/><stop offset="0.683" stop-color="#535353"/><stop offset="0.686" stop-color="#383838"/><stop offset="0.688" stop-color="#969696"/><stop offset="0.690" stop-color="#d7d7d7"/><stop offset="0.695" stop-color="#373737"/><stop offset="0.700" stop-color="#c0c0c0"/><stop offset="0.702" stop-color="#a4a4a4"/><stop offset="0.704" stop-color="#949494"/><stop offset="0.707" stop-color="#dadada"/><stop offset="0.709" stop-color="#ededed"/><stop offset="0.711" stop-color="#6c6c6c"/><stop offset="0.714" stop-color="#3b3b3b"/><stop offset="0.716" stop-color="#6b6b6b"/><stop offset="0.718" stop-color="#7c7c7c"/><stop offset="0.721" stop-color="#a3a3a3"/><stop offset="0.723" stop-color="#999999"/><stop offset="0.725" stop-color="#5c5c5c"/><stop offset="0.730" stop-color="#efefef"/><stop offset="0.732" stop-color="#b7b7b7"/><stop offset="0.735" stop-color="#696969"/><stop offset="0.737" stop-color="#676767"/><stop offset="0.739" stop-color="#555555"/><stop offset="0.742" stop-color="#747474"/><stop offset="0.744" stop-color="#ededed"/><stop offset="0.746" stop-color="#d3d3d3"/><stop offset="0.749" stop-color="#3d3d3d"/><stop offset="0.751" stop-color="#393939"/><stop offset="0.754" stop-color="#9a9a9a"/><stop offset="0.756" stop-color="#d8d8d8"/><stop offset="0.758" stop-color="#ebebeb"/><stop offset="0.761" stop-color="#525252"/><stop offset="0.763" stop-color="#303030"/><stop offset="0.765" stop-color="#323232"/><stop offset="0.768" stop-color="#fafafa"/><stop offset="0.770" stop-color="#ffffff"/><stop offset="0.772" stop-color="#b9b9b9"/><stop offset="0.775" stop-color="#303030"/><stop offset="0.777" stop-color="#464646"/><stop offset="0.779" stop-color="#fefefe"/><stop offset="0.782" stop-color="#dddddd"/><stop offset="0.784" stop-color="#414141"/><stop offset="0.789" stop-color="#bababa"/><stop offset="0.791" stop-color="#6c6c6c"/><stop offset="0.793" stop-color="#717171"/><stop offset="0.796" stop-color="#c9c9c9"/><stop offset="0.800" stop-color="#343434"/><stop offset="0.803" stop-color="#646464"/><stop offset="0.805" stop-color="#fbfbfb"/><stop offset="0.807" stop-color="#e3e3e3"/><stop offset="0.810" stop-color="#acacac"/><stop offset="0.812" stop-color="#dedede"/><stop offset="0.814" stop-color="#aeaeae"/><stop offset="0.817" stop-color="#323232"/><stop offset="0.819" stop-color="#585858"/><stop offset="0.821" stop-color="#ebebeb"/><stop offset="0.824" stop-color="#838383"/><stop offset="0.826" stop-color="#303030"/><stop offset="0.828" stop-color="#3d3d3d"/><stop offset="0.831" stop-color="#e2e2e2"/><stop offset="0.833" stop-color="#fefefe"/><stop offset="0.835" stop-color="#fbfbfb"/><stop offset="0.838" stop-color="#eeeeee"/><stop offset="0.840" stop-color="#5c5c5c"/><stop offset="0.842" stop-color="#303030"/><stop offset="0.847" stop-color="#fefefe"/><stop offset="0.849" stop-color="#7b7b7b"/><stop offset="0.852" stop-color="#303030"/><stop offset="0.854" stop-color="#494949"/><stop offset="0.856" stop-color="#909090"/><stop offset="0.859" stop-color="#7e7e7e"/><stop offset="0.863" stop-color="#e4e4e4"/><stop offset="0.866" stop-color="#cacaca"/><stop offset="0.868" stop-color="#7d7d7d"/><stop offset="0.870" stop-color="#3b3b3b"/><stop offset="0.873" stop-color="#818181"/><stop offset="0.875" stop-color="#fcfcfc"/><stop offset="0.877" stop-color="#e7e7e7"/><stop offset="0.880" stop-color="#7e7e7e"/><stop offset="0.882" stop-color="#7d7d7d"/><stop offset="0.884" stop-color="#393939"/><stop offset="0.887" stop-color="#303030"/><stop offset="0.889" stop-color="#616161"/><stop offset="0.891" stop-color="#ffffff"/><stop offset="0.894" stop-color="#fafafa"/><stop offset="0.896" stop-color="#a1a1a1"/><stop offset="0.898" stop-color="#8c8c8c"/><stop offset="0.901" stop-color="#383838"/><stop offset="0.903" stop-color="#303030"/><stop offset="0.905" stop-color="#9f9f9f"/><stop offset="0.908" stop-color="#ffffff"/><stop offset="0.910" stop-color="#ffffff"/><stop offset="0.912" stop-color="#a1a1a1"/><stop offset="0.915" stop-color="#303030"/><stop offset="0.917" stop-color="#303030"/><stop offset="0.919" stop-color="#6e6e6e"/><stop offset="0.922" stop-color="#ffffff"/><stop offset="0.924" stop-color="#777777"/><stop offset="0.926" stop-color="#393939"/><stop offset="0.929" stop-color="#f9f9f9"/><stop offset="0.931" stop-color="#f1f1f1"/><stop offset="0.933" stop-color="#a8a8a8"/><stop offset="0.936" stop-color="#fbfbfb"/><stop offset="0.938" stop-color="#f1f1f1"/><stop offset="0.940" stop-color="#3e3e3e"/><stop offset="0.943" stop-color="#303030"/><stop offset="0.945" stop-color="#373737"/><stop offset="0.947" stop-color="#e5e5e5"/><stop offset="0.950" stop-color="#ffffff"/><stop offset="0.952" stop-color="#848484"/><stop offset="0.954" stop-color="#303030"/><stop offset="0.959" stop-color="#ffffff"/><stop offset="0.961" stop-color="#ffffff"/><stop offset="0.964" stop-color="#bbbbbb"/><stop offset="0.966" stop-color="#373737"/><stop offset="0.968" stop-color="#363636"/><stop offset="0.971" stop-color="#5d5d5d"/><stop offset="0.973" stop-color="#c2c2c2"/><stop offset="0.975" stop-color="#ffffff"/><stop offset="0.978" stop-color="#838383"/><stop offset="0.980" stop-color="#303030"/><stop offset="0.982" stop-color="#303030"/><stop offset="0.985" stop-color="#7d7d7d"/><stop offset="0.987" stop-color="#ffffff"/><stop offset="0.989" stop-color="#ffffff"/><stop offset="0.992" stop-color="#575757"/><stop offset="0.994" stop-color="#303030"/><stop offset="0.996" stop-color="#6b6b6b"/><stop offset="0.999" stop-color="#d3d3d3"/></linearGradient><linearGradient id="s4" x1="0" y1="0" x2="0" y2="1"><stop offset="0.001" stop-color="#9d9d9d"/><stop offset="0.060" stop-color="#9a9a9a"/><stop offset="0.062" stop-color="#a0a0a0"/><stop offset="0.064" stop-color="#989898"/><stop offset="0.067" stop-color="#a0a0a0"/><stop offset="0.069" stop-color="#969696"/><stop offset="0.074" stop-color="#a2a2a2"/><stop offset="0.078" stop-color="#999999"/><stop offset="0.081" stop-color="#9e9e9e"/><stop offset="0.083" stop-color="#979797"/><stop offset="0.085" stop-color="#a7a7a7"/><stop offset="0.088" stop-color="#919191"/><stop offset="0.090" stop-color="#939393"/><stop offset="0.092" stop-color="#adadad"/><stop offset="0.095" stop-color="#969696"/><stop offset="0.099" stop-color="#a5a5a5"/><stop offset="0.102" stop-color="#848484"/><stop offset="0.104" stop-color="#a2a2a2"/><stop offset="0.109" stop-color="#9d9d9d"/><stop offset="0.111" stop-color="#898989"/><stop offset="0.113" stop-color="#ababab"/><stop offset="0.116" stop-color="#a8a8a8"/><stop offset="0.118" stop-color="#646464"/><stop offset="0.120" stop-color="#c6c6c6"/><stop offset="0.123" stop-color="#ababab"/><stop offset="0.125" stop-color="#9b9b9b"/><stop offset="0.127" stop-color="#585858"/><stop offset="0.130" stop-color="#cfcfcf"/><stop offset="0.134" stop-color="#b5b5b5"/><stop offset="0.137" stop-color="#343434"/><stop offset="0.139" stop-color="#dddddd"/><stop offset="0.141" stop-color="#8d8d8d"/><stop offset="0.144" stop-color="#989898"/><stop offset="0.146" stop-color="#999999"/><stop offset="0.148" stop-color="#f2f2f2"/><stop offset="0.151" stop-color="#575757"/><stop offset="0.153" stop-color="#303030"/><stop offset="0.155" stop-color="#fdfdfd"/><stop offset="0.158" stop-color="#909090"/><stop offset="0.160" stop-color="#e7e7e7"/><stop offset="0.162" stop-color="#bdbdbd"/><stop offset="0.165" stop-color="#303030"/><stop offset="0.167" stop-color="#474747"/><stop offset="0.169" stop-color="#ffffff"/><stop offset="0.172" stop-color="#bdbdbd"/><stop offset="0.174" stop-color="#303030"/><stop offset="0.176" stop-color="#8b8b8b"/><stop offset="0.179" stop-color="#b5b5b5"/><stop offset="0.181" stop-color="#858585"/><stop offset="0.183" stop-color="#dddddd"/><stop offset="0.186" stop-color="#aaaaaa"/><stop offset="0.188" stop-color="#d6d6d6"/><stop offset="0.190" stop-color="#929292"/><stop offset="0.193" stop-color="#303030"/><stop offset="0.195" stop-color="#4d4d4d"/><stop offset="0.197" stop-color="#c3c3c3"/><stop offset="0.200" stop-color="#f5f5f5"/><stop offset="0.202" stop-color="#6c6c6c"/><stop offset="0.204" stop-color="#616161"/><stop offset="0.207" stop-color="#ffffff"/><stop offset="0.209" stop-color="#a9a9a9"/><stop offset="0.211" stop-color="#303030"/><stop offset="0.214" stop-color="#676767"/><stop offset="0.216" stop-color="#cbcbcb"/><stop offset="0.218" stop-color="#e4e4e4"/><stop offset="0.221" stop-color="#adadad"/><stop offset="0.223" stop-color="#606060"/><stop offset="0.225" stop-color="#979797"/><stop offset="0.228" stop-color="#828282"/><stop offset="0.230" stop-color="#c7c7c7"/><stop offset="0.232" stop-color="#b4b4b4"/><stop offset="0.235" stop-color="#cdcdcd"/><stop offset="0.237" stop-color="#545454"/><stop offset="0.239" stop-color="#363636"/><stop offset="0.244" stop-color="#fcfcfc"/><stop offset="0.249" stop-color="#727272"/><stop offset="0.251" stop-color="#606060"/><stop offset="0.254" stop-color="#a8a8a8"/><stop offset="0.256" stop-color="#e1e1e1"/><stop offset="0.258" stop-color="#525252"/><stop offset="0.261" stop-color="#4d4d4d"/><stop offset="0.263" stop-color="#eaeaea"/><stop offset="0.265" stop-color="#d7d7d7"/><stop offset="0.268" stop-color="#323232"/><stop offset="0.270" stop-color="#8a8a8a"/><stop offset="0.272" stop-color="#c7c7c7"/><stop offset="0.275" stop-color="#646464"/><stop offset="0.277" stop-color="#747474"/><stop offset="0.279" stop-color="#646464"/><stop offset="0.282" stop-color="#989898"/><stop offset="0.284" stop-color="#ffffff"/><stop offset="0.286" stop-color="#757575"/><stop offset="0.289" stop-color="#3e3e3e"/><stop offset="0.291" stop-color="#e5e5e5"/><stop offset="0.293" stop-color="#848484"/><stop offset="0.296" stop-color="#919191"/><stop offset="0.298" stop-color="#ffffff"/><stop offset="0.300" stop-color="#404040"/><stop offset="0.303" stop-color="#454545"/><stop offset="0.305" stop-color="#e6e6e6"/><stop offset="0.307" stop-color="#d5d5d5"/><stop offset="0.310" stop-color="#666666"/><stop offset="0.312" stop-color="#888888"/><stop offset="0.314" stop-color="#808080"/><stop offset="0.317" stop-color="#8d8d8d"/><stop offset="0.319" stop-color="#eeeeee"/><stop offset="0.321" stop-color="#a7a7a7"/><stop offset="0.324" stop-color="#9f9f9f"/><stop offset="0.328" stop-color="#555555"/><stop offset="0.331" stop-color="#eeeeee"/><stop offset="0.333" stop-color="#d0d0d0"/><stop offset="0.335" stop-color="#303030"/><stop offset="0.338" stop-color="#e1e1e1"/><stop offset="0.340" stop-color="#fefefe"/><stop offset="0.342" stop-color="#595959"/><stop offset="0.345" stop-color="#9c9c9c"/><stop offset="0.347" stop-color="#ffffff"/><stop offset="0.349" stop-color="#727272"/><stop offset="0.352" stop-color="#373737"/><stop offset="0.354" stop-color="#b5b5b5"/><stop offset="0.356" stop-color="#cfcfcf"/><stop offset="0.359" stop-color="#8b8b8b"/><stop offset="0.361" stop-color="#686868"/><stop offset="0.363" stop-color="#b5b5b5"/><stop offset="0.366" stop-color="#939393"/><stop offset="0.368" stop-color="#4f4f4f"/><stop offset="0.370" stop-color="#989898"/><stop offset="0.373" stop-color="#727272"/><stop offset="0.375" stop-color="#f8f8f8"/><stop offset="0.377" stop-color="#ffffff"/><stop offset="0.380" stop-color="#797979"/><stop offset="0.382" stop-color="#303030"/><stop offset="0.384" stop-color="#919191"/><stop offset="0.387" stop-color="#c5c5c5"/><stop offset="0.389" stop-color="#3e3e3e"/><stop offset="0.391" stop-color="#888888"/><stop offset="0.394" stop-color="#ffffff"/><stop offset="0.396" stop-color="#f5f5f5"/><stop offset="0.398" stop-color="#919191"/><stop offset="0.401" stop-color="#a8a8a8"/><stop offset="0.403" stop-color="#7b7b7b"/><stop offset="0.405" stop-color="#303030"/><stop offset="0.408" stop-color="#454545"/><stop offset="0.410" stop-color="#b9b9b9"/><stop offset="0.412" stop-color="#e3e3e3"/><stop offset="0.415" stop-color="#bcbcbc"/><stop offset="0.417" stop-color="#454545"/><stop offset="0.419" stop-color="#686868"/><stop offset="0.422" stop-color="#ffffff"/><stop offset="0.424" stop-color="#535353"/><stop offset="0.426" stop-color="#303030"/><stop offset="0.429" stop-color="#e3e3e3"/><stop offset="0.431" stop-color="#ffffff"/><stop offset="0.433" stop-color="#f4f4f4"/><stop offset="0.436" stop-color="#c5c5c5"/><stop offset="0.438" stop-color="#555555"/><stop offset="0.440" stop-color="#333333"/><stop offset="0.443" stop-color="#7d7d7d"/><stop offset="0.445" stop-color="#8c8c8c"/><stop offset="0.447" stop-color="#878787"/><stop offset="0.450" stop-color="#ffffff"/><stop offset="0.452" stop-color="#737373"/><stop offset="0.454" stop-color="#303030"/><stop offset="0.457" stop-color="#c2c2c2"/><stop offset="0.459" stop-color="#ebebeb"/><stop offset="0.461" stop-color="#474747"/><stop offset="0.464" stop-color="#3a3a3a"/><stop offset="0.466" stop-color="#b4b4b4"/><stop offset="0.468" stop-color="#8b8b8b"/><stop offset="0.471" stop-color="#bdbdbd"/><stop offset="0.473" stop-color="#ffffff"/><stop offset="0.475" stop-color="#fefefe"/><stop offset="0.478" stop-color="#6a6a6a"/><stop offset="0.480" stop-color="#303030"/><stop offset="0.482" stop-color="#4e4e4e"/><stop offset="0.485" stop-color="#ececec"/><stop offset="0.487" stop-color="#b9b9b9"/><stop offset="0.489" stop-color="#434343"/><stop offset="0.492" stop-color="#9f9f9f"/><stop offset="0.496" stop-color="#e4e4e4"/><stop offset="0.499" stop-color="#f5f5f5"/><stop offset="0.501" stop-color="#323232"/><stop offset="0.504" stop-color="#303030"/><stop offset="0.506" stop-color="#c9c9c9"/><stop offset="0.508" stop-color="#ffffff"/><stop offset="0.511" stop-color="#a1a1a1"/><stop offset="0.513" stop-color="#363636"/><stop offset="0.515" stop-color="#adadad"/><stop offset="0.518" stop-color="#fefefe"/><stop offset="0.522" stop-color="#696969"/><stop offset="0.525" stop-color="#4c4c4c"/><stop offset="0.527" stop-color="#3f3f3f"/><stop offset="0.529" stop-color="#d8d8d8"/><stop offset="0.532" stop-color="#d8d8d8"/><stop offset="0.534" stop-color="#383838"/><stop offset="0.536" stop-color="#5c5c5c"/><stop offset="0.539" stop-color="#c7c7c7"/><stop offset="0.541" stop-color="#ffffff"/><stop offset="0.543" stop-color="#dbdbdb"/><stop offset="0.546" stop-color="#303030"/><stop offset="0.548" stop-color="#303030"/><stop offset="0.550" stop-color="#dddddd"/><stop offset="0.553" stop-color="#c4c4c4"/><stop offset="0.555" stop-color="#c7c7c7"/><stop offset="0.557" stop-color="#ffffff"/><stop offset="0.560" stop-color="#dfdfdf"/><stop offset="0.562" stop-color="#313131"/><stop offset="0.567" stop-color="#353535"/><stop offset="0.569" stop-color="#e5e5e5"/><stop offset="0.571" stop-color="#ffffff"/><stop offset="0.574" stop-color="#d9d9d9"/><stop offset="0.576" stop-color="#474747"/><stop offset="0.578" stop-color="#505050"/><stop offset="0.581" stop-color="#383838"/><stop offset="0.583" stop-color="#434343"/><stop offset="0.585" stop-color="#e2e2e2"/><stop offset="0.588" stop-color="#a8a8a8"/><stop offset="0.590" stop-color="#303030"/><stop offset="0.592" stop-color="#3e3e3e"/><stop offset="0.595" stop-color="#ededed"/><stop offset="0.597" stop-color="#ffffff"/><stop offset="0.599" stop-color="#fcfcfc"/><stop offset="0.602" stop-color="#6c6c6c"/><stop offset="0.604" stop-color="#303030"/><stop offset="0.606" stop-color="#3d3d3d"/><stop offset="0.609" stop-color="#bdbdbd"/><stop offset="0.611" stop-color="#9b9b9b"/><stop offset="0.613" stop-color="#d8d8d8"/><stop offset="0.616" stop-color="#9f9f9f"/><stop offset="0.618" stop-color="#303030"/><stop offset="0.620" stop-color="#757575"/><stop offset="0.623" stop-color="#ffffff"/><stop offset="0.625" stop-color="#c5c5c5"/><stop offset="0.630" stop-color="#a0a0a0"/><stop offset="0.632" stop-color="#616161"/><stop offset="0.634" stop-color="#989898"/><stop offset="0.637" stop-color="#e5e5e5"/><stop offset="0.639" stop-color="#565656"/><stop offset="0.641" stop-color="#303030"/><stop offset="0.644" stop-color="#303030"/><stop offset="0.646" stop-color="#cfcfcf"/><stop offset="0.648" stop-color="#ffffff"/><stop offset="0.651" stop-color="#ffffff"/><stop offset="0.653" stop-color="#d0d0d0"/><stop offset="0.655" stop-color="#303030"/><stop offset="0.660" stop-color="#303030"/><stop offset="0.662" stop-color="#666666"/><stop offset="0.665" stop-color="#b8b8b8"/><stop offset="0.667" stop-color="#eaeaea"/><stop offset="0.669" stop-color="#eaeaea"/><stop offset="0.672" stop-color="#a9a9a9"/><stop offset="0.674" stop-color="#787878"/><stop offset="0.676" stop-color="#7b7b7b"/><stop offset="0.681" stop-color="#686868"/><stop offset="0.683" stop-color="#717171"/><stop offset="0.686" stop-color="#6f6f6f"/><stop offset="0.688" stop-color="#969696"/><stop offset="0.690" stop-color="#a8a8a8"/><stop offset="0.695" stop-color="#323232"/><stop offset="0.697" stop-color="#858585"/><stop offset="0.700" stop-color="#eeeeee"/><stop offset="0.702" stop-color="#878787"/><stop offset="0.704" stop-color="#484848"/><stop offset="0.707" stop-color="#fefefe"/><stop offset="0.709" stop-color="#ffffff"/><stop offset="0.711" stop-color="#a7a7a7"/><stop offset="0.714" stop-color="#303030"/><stop offset="0.716" stop-color="#303030"/><stop offset="0.718" stop-color="#a9a9a9"/><stop offset="0.721" stop-color="#c0c0c0"/><stop offset="0.723" stop-color="#808080"/><stop offset="0.725" stop-color="#656565"/><stop offset="0.728" stop-color="#939393"/><stop offset="0.730" stop-color="#d5d5d5"/><stop offset="0.732" stop-color="#e3e3e3"/><stop offset="0.735" stop-color="#acacac"/><stop offset="0.737" stop-color="#585858"/><stop offset="0.739" stop-color="#383838"/><stop offset="0.742" stop-color="#656565"/><stop offset="0.744" stop-color="#bebebe"/><stop offset="0.746" stop-color="#dbdbdb"/><stop offset="0.749" stop-color="#7a7a7a"/><stop offset="0.751" stop-color="#383838"/><stop offset="0.754" stop-color="#b9b9b9"/><stop offset="0.756" stop-color="#dbdbdb"/><stop offset="0.758" stop-color="#7f7f7f"/><stop offset="0.761" stop-color="#676767"/><stop offset="0.763" stop-color="#313131"/><stop offset="0.765" stop-color="#303030"/><stop offset="0.768" stop-color="#b0b0b0"/><stop offset="0.770" stop-color="#ffffff"/><stop offset="0.772" stop-color="#f2f2f2"/><stop offset="0.775" stop-color="#3f3f3f"/><stop offset="0.777" stop-color="#303030"/><stop offset="0.779" stop-color="#a0a0a0"/><stop offset="0.782" stop-color="#ffffff"/><stop offset="0.784" stop-color="#cbcbcb"/><stop offset="0.786" stop-color="#727272"/><stop offset="0.789" stop-color="#818181"/><stop offset="0.793" stop-color="#353535"/><stop offset="0.796" stop-color="#f3f3f3"/><stop offset="0.798" stop-color="#fefefe"/><stop offset="0.800" stop-color="#414141"/><stop offset="0.803" stop-color="#303030"/><stop offset="0.805" stop-color="#8c8c8c"/><stop offset="0.807" stop-color="#ffffff"/><stop offset="0.810" stop-color="#b2b2b2"/><stop offset="0.812" stop-color="#acacac"/><stop offset="0.814" stop-color="#ffffff"/><stop offset="0.817" stop-color="#d2d2d2"/><stop offset="0.819" stop-color="#3a3a3a"/><stop offset="0.821" stop-color="#414141"/><stop offset="0.824" stop-color="#bdbdbd"/><stop offset="0.826" stop-color="#696969"/><stop offset="0.828" stop-color="#303030"/><stop offset="0.831" stop-color="#626262"/><stop offset="0.833" stop-color="#fbfbfb"/><stop offset="0.838" stop-color="#fafafa"/><stop offset="0.840" stop-color="#bfbfbf"/><stop offset="0.842" stop-color="#474747"/><stop offset="0.845" stop-color="#303030"/><stop offset="0.847" stop-color="#868686"/><stop offset="0.849" stop-color="#fbfbfb"/><stop offset="0.852" stop-color="#a7a7a7"/><stop offset="0.854" stop-color="#404040"/><stop offset="0.856" stop-color="#323232"/><stop offset="0.859" stop-color="#3c3c3c"/><stop offset="0.861" stop-color="#6f6f6f"/><stop offset="0.863" stop-color="#e0e0e0"/><stop offset="0.866" stop-color="#fcfcfc"/><stop offset="0.868" stop-color="#d8d8d8"/><stop offset="0.873" stop-color="#353535"/><stop offset="0.875" stop-color="#848484"/><stop offset="0.877" stop-color="#fefefe"/><stop offset="0.880" stop-color="#dddddd"/><stop offset="0.882" stop-color="#505050"/><stop offset="0.884" stop-color="#4e4e4e"/><stop offset="0.887" stop-color="#373737"/><stop offset="0.889" stop-color="#303030"/><stop offset="0.891" stop-color="#adadad"/><stop offset="0.894" stop-color="#ffffff"/><stop offset="0.896" stop-color="#e9e9e9"/><stop offset="0.898" stop-color="#9b9b9b"/><stop offset="0.903" stop-color="#303030"/><stop offset="0.905" stop-color="#303030"/><stop offset="0.908" stop-color="#cecece"/><stop offset="0.910" stop-color="#ffffff"/><stop offset="0.912" stop-color="#ffffff"/><stop offset="0.915" stop-color="#5b5b5b"/><stop offset="0.917" stop-color="#303030"/><stop offset="0.919" stop-color="#303030"/><stop offset="0.922" stop-color="#9e9e9e"/><stop offset="0.924" stop-color="#fcfcfc"/><stop offset="0.926" stop-color="#4b4b4b"/><stop offset="0.929" stop-color="#7c7c7c"/><stop offset="0.931" stop-color="#ffffff"/><stop offset="0.933" stop-color="#c6c6c6"/><stop offset="0.936" stop-color="#a5a5a5"/><stop offset="0.938" stop-color="#ffffff"/><stop offset="0.940" stop-color="#e4e4e4"/><stop offset="0.943" stop-color="#3d3d3d"/><stop offset="0.945" stop-color="#303030"/><stop offset="0.947" stop-color="#363636"/><stop offset="0.950" stop-color="#e5e5e5"/><stop offset="0.952" stop-color="#ffffff"/><stop offset="0.954" stop-color="#787878"/><stop offset="0.957" stop-color="#303030"/><stop offset="0.959" stop-color="#adadad"/><stop offset="0.961" stop-color="#ffffff"/><stop offset="0.964" stop-color="#fefefe"/><stop offset="0.966" stop-color="#a3a3a3"/><stop offset="0.968" stop-color="#373737"/><stop offset="0.971" stop-color="#404040"/><stop offset="0.973" stop-color="#797979"/><stop offset="0.975" stop-color="#c1c1c1"/><stop offset="0.978" stop-color="#f9f9f9"/><stop offset="0.980" stop-color="#888888"/><stop offset="0.982" stop-color="#303030"/><stop offset="0.985" stop-color="#303030"/><stop offset="0.987" stop-color="#838383"/><stop offset="0.989" stop-color="#fdfdfd"/><stop offset="0.992" stop-color="#ffffff"/><stop offset="0.994" stop-color="#8f8f8f"/><stop offset="0.996" stop-color="#313131"/><stop offset="0.999" stop-color="#4f4f4f"/></linearGradient><linearGradient id="s5" x1="0" y1="0" x2="0" y2="1"><stop offset="0.001" stop-color="#9d9d9d"/><stop offset="0.090" stop-color="#9a9a9a"/><stop offset="0.092" stop-color="#a0a0a0"/><stop offset="0.097" stop-color="#9d9d9d"/><stop offset="0.102" stop-color="#959595"/><stop offset="0.106" stop-color="#9e9e9e"/><stop offset="0.109" stop-color="#9d9d9d"/><stop offset="0.111" stop-color="#919191"/><stop offset="0.113" stop-color="#a4a4a4"/><stop offset="0.116" stop-color="#a0a0a0"/><stop offset="0.118" stop-color="#868686"/><stop offset="0.120" stop-color="#aaaaaa"/><stop offset="0.125" stop-color="#9b9b9b"/><stop offset="0.127" stop-color="#808080"/><stop offset="0.130" stop-color="#acacac"/><stop offset="0.132" stop-color="#b3b3b3"/><stop offset="0.134" stop-color="#a4a4a4"/><stop offset="0.137" stop-color="#636363"/><stop offset="0.139" stop-color="#b9b9b9"/><stop offset="0.141" stop-color="#9a9a9a"/><stop offset="0.146" stop-color="#929292"/><stop offset="0.148" stop-color="#d7d7d7"/><stop offset="0.151" stop-color="#797979"/><stop offset="0.153" stop-color="#454545"/><stop offset="0.155" stop-color="#d2d2d2"/><stop offset="0.158" stop-color="#b3b3b3"/><stop offset="0.162" stop-color="#c4c4c4"/><stop offset="0.165" stop-color="#323232"/><stop offset="0.167" stop-color="#303030"/><stop offset="0.169" stop-color="#ffffff"/><stop offset="0.172" stop-color="#d3d3d3"/><stop offset="0.174" stop-color="#303030"/><stop offset="0.176" stop-color="#a5a5a5"/><stop offset="0.179" stop-color="#7b7b7b"/><stop offset="0.181" stop-color="#a7a7a7"/><stop offset="0.183" stop-color="#aeaeae"/><stop offset="0.186" stop-color="#e7e7e7"/><stop offset="0.188" stop-color="#858585"/><stop offset="0.190" stop-color="#f3f3f3"/><stop offset="0.193" stop-color="#303030"/><stop offset="0.195" stop-color="#303030"/><stop offset="0.197" stop-color="#8e8e8e"/><stop offset="0.200" stop-color="#ffffff"/><stop offset="0.202" stop-color="#acacac"/><stop offset="0.204" stop-color="#303030"/><stop offset="0.207" stop-color="#ffffff"/><stop offset="0.209" stop-color="#f5f5f5"/><stop offset="0.211" stop-color="#303030"/><stop offset="0.216" stop-color="#8f8f8f"/><stop offset="0.218" stop-color="#d2d2d2"/><stop offset="0.221" stop-color="#dbdbdb"/><stop offset="0.223" stop-color="#7e7e7e"/><stop offset="0.225" stop-color="#737373"/><stop offset="0.228" stop-color="#9f9f9f"/><stop offset="0.230" stop-color="#9a9a9a"/><stop offset="0.232" stop-color="#b7b7b7"/><stop offset="0.235" stop-color="#b3b3b3"/><stop offset="0.237" stop-color="#c3c3c3"/><stop offset="0.239" stop-color="#535353"/><stop offset="0.242" stop-color="#343434"/><stop offset="0.244" stop-color="#cdcdcd"/><stop offset="0.246" stop-color="#f8f8f8"/><stop offset="0.249" stop-color="#8c8c8c"/><stop offset="0.251" stop-color="#767676"/><stop offset="0.254" stop-color="#7d7d7d"/><stop offset="0.258" stop-color="#cacaca"/><stop offset="0.261" stop-color="#666666"/><stop offset="0.263" stop-color="#595959"/><stop offset="0.265" stop-color="#eeeeee"/><stop offset="0.268" stop-color="#bbbbbb"/><stop offset="0.270" stop-color="#484848"/><stop offset="0.272" stop-color="#a9a9a9"/><stop offset="0.275" stop-color="#8b8b8b"/><stop offset="0.277" stop-color="#818181"/><stop offset="0.279" stop-color="#838383"/><stop offset="0.282" stop-color="#434343"/><stop offset="0.284" stop-color="#c6c6c6"/><stop offset="0.286" stop-color="#fefefe"/><stop offset="0.289" stop-color="#414141"/><stop offset="0.291" stop-color="#6f6f6f"/><stop offset="0.293" stop-color="#e1e1e1"/><stop offset="0.296" stop-color="#646464"/><stop offset="0.298" stop-color="#d3d3d3"/><stop offset="0.300" stop-color="#d5d5d5"/><stop offset="0.303" stop-color="#303030"/><stop offset="0.305" stop-color="#a6a6a6"/><stop offset="0.307" stop-color="#ebebeb"/><stop offset="0.310" stop-color="#7d7d7d"/><stop offset="0.317" stop-color="#8f8f8f"/><stop offset="0.319" stop-color="#c0c0c0"/><stop offset="0.321" stop-color="#c4c4c4"/><stop offset="0.324" stop-color="#939393"/><stop offset="0.326" stop-color="#ababab"/><stop offset="0.328" stop-color="#474747"/><stop offset="0.331" stop-color="#ababab"/><stop offset="0.333" stop-color="#ffffff"/><stop offset="0.335" stop-color="#303030"/><stop offset="0.338" stop-color="#6d6d6d"/><stop offset="0.340" stop-color="#ffffff"/><stop offset="0.342" stop-color="#858585"/><stop offset="0.345" stop-color="#575757"/><stop offset="0.347" stop-color="#ffffff"/><stop offset="0.349" stop-color="#c9c9c9"/><stop offset="0.352" stop-color="#303030"/><stop offset="0.354" stop-color="#7f7f7f"/><stop offset="0.356" stop-color="#e3e3e3"/><stop offset="0.359" stop-color="#878787"/><stop offset="0.361" stop-color="#787878"/><stop offset="0.363" stop-color="#b4b4b4"/><stop offset="0.366" stop-color="#9e9e9e"/><stop offset="0.368" stop-color="#505050"/><stop offset="0.370" stop-color="#919191"/><stop offset="0.373" stop-color="#6f6f6f"/><stop offset="0.375" stop-color="#c6c6c6"/><stop offset="0.377" stop-color="#ffffff"/><stop offset="0.380" stop-color="#b2b2b2"/><stop offset="0.382" stop-color="#303030"/><stop offset="0.384" stop-color="#515151"/><stop offset="0.387" stop-color="#bfbfbf"/><stop offset="0.389" stop-color="#5c5c5c"/><stop offset="0.391" stop-color="#777777"/><stop offset="0.394" stop-color="#f2f2f2"/><stop offset="0.396" stop-color="#ffffff"/><stop offset="0.398" stop-color="#afafaf"/><stop offset="0.401" stop-color="#6a6a6a"/><stop offset="0.403" stop-color="#a5a5a5"/><stop offset="0.405" stop-color="#414141"/><stop offset="0.408" stop-color="#303030"/><stop offset="0.410" stop-color="#989898"/><stop offset="0.412" stop-color="#e4e4e4"/><stop offset="0.415" stop-color="#d9d9d9"/><stop offset="0.417" stop-color="#545454"/><stop offset="0.419" stop-color="#393939"/><stop offset="0.422" stop-color="#fcfcfc"/><stop offset="0.424" stop-color="#bfbfbf"/><stop offset="0.426" stop-color="#303030"/><stop offset="0.429" stop-color="#555555"/><stop offset="0.431" stop-color="#ffffff"/><stop offset="0.433" stop-color="#ffffff"/><stop offset="0.436" stop-color="#d8d8d8"/><stop offset="0.438" stop-color="#9e9e9e"/><stop offset="0.440" stop-color="#303030"/><stop offset="0.443" stop-color="#434343"/><stop offset="0.445" stop-color="#808080"/><stop offset="0.447" stop-color="#7c7c7c"/><stop offset="0.450" stop-color="#eaeaea"/><stop offset="0.452" stop-color="#eeeeee"/><stop offset="0.454" stop-color="#313131"/><stop offset="0.457" stop-color="#474747"/><stop offset="0.459" stop-color="#ebebeb"/><stop offset="0.461" stop-color="#adadad"/><stop offset="0.464" stop-color="#313131"/><stop offset="0.468" stop-color="#bbbbbb"/><stop offset="0.471" stop-color="#767676"/><stop offset="0.473" stop-color="#e3e3e3"/><stop offset="0.475" stop-color="#ffffff"/><stop offset="0.478" stop-color="#ededed"/><stop offset="0.480" stop-color="#3c3c3c"/><stop offset="0.482" stop-color="#303030"/><stop offset="0.485" stop-color="#6c6c6c"/><stop offset="0.487" stop-color="#fafafa"/><stop offset="0.489" stop-color="#979797"/><stop offset="0.492" stop-color="#515151"/><stop offset="0.494" stop-color="#b7b7b7"/><stop offset="0.496" stop-color="#b3b3b3"/><stop offset="0.499" stop-color="#f8f8f8"/><stop offset="0.501" stop-color="#c5c5c5"/><stop offset="0.504" stop-color="#303030"/><stop offset="0.506" stop-color="#333333"/><stop offset="0.508" stop-color="#ebebeb"/><stop offset="0.511" stop-color="#ffffff"/><stop offset="0.513" stop-color="#6f6f6f"/><stop offset="0.515" stop-color="#3e3e3e"/><stop offset="0.518" stop-color="#d1d1d1"/><stop offset="0.520" stop-color="#fafafa"/><stop offset="0.522" stop-color="#888888"/><stop offset="0.525" stop-color="#626262"/><stop offset="0.527" stop-color="#707070"/><stop offset="0.529" stop-color="#606060"/><stop offset="0.532" stop-color="#d3d3d3"/><stop offset="0.534" stop-color="#aeaeae"/><stop offset="0.536" stop-color="#3f3f3f"/><stop offset="0.539" stop-color="#4e4e4e"/><stop offset="0.541" stop-color="#d8d8d8"/><stop offset="0.543" stop-color="#ffffff"/><stop offset="0.546" stop-color="#c1c1c1"/><stop offset="0.548" stop-color="#303030"/><stop offset="0.550" stop-color="#353535"/><stop offset="0.553" stop-color="#e5e5e5"/><stop offset="0.555" stop-color="#bbbbbb"/><stop offset="0.557" stop-color="#fafafa"/><stop offset="0.560" stop-color="#ffffff"/><stop offset="0.562" stop-color="#878787"/><stop offset="0.564" stop-color="#303030"/><stop offset="0.567" stop-color="#303030"/><stop offset="0.569" stop-color="#4a4a4a"/><stop offset="0.571" stop-color="#f2f2f2"/><stop offset="0.574" stop-color="#ffffff"/><stop offset="0.576" stop-color="#bababa"/><stop offset="0.578" stop-color="#424242"/><stop offset="0.581" stop-color="#535353"/><stop offset="0.583" stop-color="#303030"/><stop offset="0.585" stop-color="#595959"/><stop offset="0.588" stop-color="#eeeeee"/><stop offset="0.590" stop-color="#7a7a7a"/><stop offset="0.592" stop-color="#303030"/><stop offset="0.595" stop-color="#505050"/><stop offset="0.597" stop-color="#fafafa"/><stop offset="0.599" stop-color="#ffffff"/><stop offset="0.602" stop-color="#eeeeee"/><stop offset="0.604" stop-color="#313131"/><stop offset="0.606" stop-color="#303030"/><stop offset="0.611" stop-color="#b3b3b3"/><stop offset="0.613" stop-color="#a2a2a2"/><stop offset="0.616" stop-color="#c7c7c7"/><stop offset="0.618" stop-color="#343434"/><stop offset="0.620" stop-color="#313131"/><stop offset="0.623" stop-color="#ffffff"/><stop offset="0.627" stop-color="#959595"/><stop offset="0.630" stop-color="#c7c7c7"/><stop offset="0.632" stop-color="#787878"/><stop offset="0.634" stop-color="#646464"/><stop offset="0.637" stop-color="#d8d8d8"/><stop offset="0.639" stop-color="#939393"/><stop offset="0.641" stop-color="#303030"/><stop offset="0.644" stop-color="#303030"/><stop offset="0.646" stop-color="#828282"/><stop offset="0.648" stop-color="#ffffff"/><stop offset="0.651" stop-color="#ffffff"/><stop offset="0.653" stop-color="#d7d7d7"/><stop offset="0.655" stop-color="#303030"/><stop offset="0.660" stop-color="#303030"/><stop offset="0.662" stop-color="#545454"/><stop offset="0.665" stop-color="#d8d8d8"/><stop offset="0.667" stop-color="#d7d7d7"/><stop offset="0.669" stop-color="#c4c4c4"/><stop offset="0.672" stop-color="#bdbdbd"/><stop offset="0.674" stop-color="#979797"/><stop offset="0.676" stop-color="#929292"/><stop offset="0.679" stop-color="#757575"/><stop offset="0.681" stop-color="#343434"/><stop offset="0.683" stop-color="#5a5a5a"/><stop offset="0.686" stop-color="#aeaeae"/><stop offset="0.688" stop-color="#bfbfbf"/><stop offset="0.690" stop-color="#8f8f8f"/><stop offset="0.693" stop-color="#3c3c3c"/><stop offset="0.695" stop-color="#303030"/><stop offset="0.697" stop-color="#8c8c8c"/><stop offset="0.700" stop-color="#ffffff"/><stop offset="0.702" stop-color="#9e9e9e"/><stop offset="0.704" stop-color="#303030"/><stop offset="0.707" stop-color="#ececec"/><stop offset="0.709" stop-color="#ffffff"/><stop offset="0.711" stop-color="#e5e5e5"/><stop offset="0.714" stop-color="#303030"/><stop offset="0.716" stop-color="#303030"/><stop offset="0.718" stop-color="#828282"/><stop offset="0.721" stop-color="#f8f8f8"/><stop offset="0.723" stop-color="#787878"/><stop offset="0.725" stop-color="#535353"/><stop offset="0.728" stop-color="#a2a2a2"/><stop offset="0.732" stop-color="#d7d7d7"/><stop offset="0.735" stop-color="#dddddd"/><stop offset="0.737" stop-color="#757575"/><stop offset="0.739" stop-color="#303030"/><stop offset="0.742" stop-color="#5e5e5e"/><stop offset="0.744" stop-color="#b1b1b1"/><stop offset="0.746" stop-color="#adadad"/><stop offset="0.749" stop-color="#959595"/><stop offset="0.751" stop-color="#666666"/><stop offset="0.754" stop-color="#bfbfbf"/><stop offset="0.756" stop-color="#fefefe"/><stop offset="0.758" stop-color="#4f4f4f"/><stop offset="0.761" stop-color="#303030"/><stop offset="0.763" stop-color="#575757"/><stop offset="0.765" stop-color="#565656"/><stop offset="0.768" stop-color="#787878"/><stop offset="0.770" stop-color="#ebebeb"/><stop offset="0.772" stop-color="#dadada"/><stop offset="0.775" stop-color="#767676"/><stop offset="0.777" stop-color="#3a3a3a"/><stop offset="0.779" stop-color="#404040"/><stop offset="0.782" stop-color="#acacac"/><stop offset="0.784" stop-color="#ffffff"/><stop offset="0.786" stop-color="#eaeaea"/><stop offset="0.789" stop-color="#797979"/><stop offset="0.791" stop-color="#3a3a3a"/><stop offset="0.793" stop-color="#303030"/><stop offset="0.796" stop-color="#767676"/><stop offset="0.798" stop-color="#ffffff"/><stop offset="0.800" stop-color="#f5f5f5"/><stop offset="0.803" stop-color="#313131"/><stop offset="0.805" stop-color="#303030"/><stop offset="0.810" stop-color="#e3e3e3"/><stop offset="0.812" stop-color="#acacac"/><stop offset="0.814" stop-color="#cdcdcd"/><stop offset="0.817" stop-color="#ffffff"/><stop offset="0.819" stop-color="#ebebeb"/><stop offset="0.821" stop-color="#5c5c5c"/><stop offset="0.824" stop-color="#303030"/><stop offset="0.826" stop-color="#666666"/><stop offset="0.828" stop-color="#626262"/><stop offset="0.831" stop-color="#333333"/><stop offset="0.833" stop-color="#6a6a6a"/><stop offset="0.835" stop-color="#f2f2f2"/><stop offset="0.838" stop-color="#ffffff"/><stop offset="0.840" stop-color="#f7f7f7"/><stop offset="0.845" stop-color="#424242"/><stop offset="0.847" stop-color="#313131"/><stop offset="0.849" stop-color="#585858"/><stop offset="0.852" stop-color="#d8d8d8"/><stop offset="0.854" stop-color="#e8e8e8"/><stop offset="0.856" stop-color="#767676"/><stop offset="0.859" stop-color="#303030"/><stop offset="0.861" stop-color="#303030"/><stop offset="0.863" stop-color="#757575"/><stop offset="0.866" stop-color="#f3f3f3"/><stop offset="0.868" stop-color="#ffffff"/><stop offset="0.870" stop-color="#e1e1e1"/><stop offset="0.873" stop-color="#828282"/><stop offset="0.875" stop-color="#363636"/><stop offset="0.877" stop-color="#959595"/><stop offset="0.880" stop-color="#ffffff"/><stop offset="0.882" stop-color="#bfbfbf"/><stop offset="0.884" stop-color="#303030"/><stop offset="0.889" stop-color="#4f4f4f"/><stop offset="0.891" stop-color="#464646"/><stop offset="0.894" stop-color="#cecece"/><stop offset="0.896" stop-color="#ffffff"/><stop offset="0.898" stop-color="#d6d6d6"/><stop offset="0.901" stop-color="#797979"/><stop offset="0.903" stop-color="#434343"/><stop offset="0.905" stop-color="#303030"/><stop offset="0.908" stop-color="#3a3a3a"/><stop offset="0.910" stop-color="#ffffff"/><stop offset="0.912" stop-color="#ffffff"/><stop offset="0.915" stop-color="#eaeaea"/><stop offset="0.917" stop-color="#303030"/><stop offset="0.922" stop-color="#303030"/><stop offset="0.924" stop-color="#b0b0b0"/><stop offset="0.926" stop-color="#d5d5d5"/><stop offset="0.929" stop-color="#616161"/><stop offset="0.931" stop-color="#d0d0d0"/><stop offset="0.933" stop-color="#ffffff"/><stop offset="0.936" stop-color="#979797"/><stop offset="0.938" stop-color="#b8b8b8"/><stop offset="0.940" stop-color="#ffffff"/><stop offset="0.943" stop-color="#e6e6e6"/><stop offset="0.945" stop-color="#3d3d3d"/><stop offset="0.947" stop-color="#303030"/><stop offset="0.950" stop-color="#343434"/><stop offset="0.952" stop-color="#eaeaea"/><stop offset="0.954" stop-color="#ffffff"/><stop offset="0.957" stop-color="#838383"/><stop offset="0.959" stop-color="#303030"/><stop offset="0.961" stop-color="#a1a1a1"/><stop offset="0.964" stop-color="#ffffff"/><stop offset="0.966" stop-color="#fcfcfc"/><stop offset="0.971" stop-color="#4b4b4b"/><stop offset="0.973" stop-color="#4b4b4b"/><stop offset="0.975" stop-color="#828282"/><stop offset="0.978" stop-color="#979797"/><stop offset="0.980" stop-color="#cecece"/><stop offset="0.982" stop-color="#adadad"/><stop offset="0.985" stop-color="#404040"/><stop offset="0.987" stop-color="#303030"/><stop offset="0.989" stop-color="#464646"/><stop offset="0.992" stop-color="#b4b4b4"/><stop offset="0.994" stop-color="#ffffff"/><stop offset="0.996" stop-color="#e4e4e4"/><stop offset="0.999" stop-color="#6f6f6f"/></linearGradient><linearGradient id="s6" x1="0" y1="0" x2="0" y2="1"><stop offset="0.001" stop-color="#9d9d9d"/><stop offset="0.111" stop-color="#989898"/><stop offset="0.116" stop-color="#9e9e9e"/><stop offset="0.118" stop-color="#969696"/><stop offset="0.123" stop-color="#9e9e9e"/><stop offset="0.127" stop-color="#959595"/><stop offset="0.132" stop-color="#a6a6a6"/><stop offset="0.137" stop-color="#8d8d8d"/><stop offset="0.141" stop-color="#a4a4a4"/><stop offset="0.144" stop-color="#959595"/><stop offset="0.146" stop-color="#969696"/><stop offset="0.148" stop-color="#b3b3b3"/><stop offset="0.153" stop-color="#7d7d7d"/><stop offset="0.155" stop-color="#969696"/><stop offset="0.158" stop-color="#c1c1c1"/><stop offset="0.160" stop-color="#9b9b9b"/><stop offset="0.162" stop-color="#b8b8b8"/><stop offset="0.167" stop-color="#323232"/><stop offset="0.169" stop-color="#f2f2f2"/><stop offset="0.172" stop-color="#e6e6e6"/><stop offset="0.174" stop-color="#525252"/><stop offset="0.176" stop-color="#9e9e9e"/><stop offset="0.179" stop-color="#6e6e6e"/><stop offset="0.181" stop-color="#a4a4a4"/><stop offset="0.183" stop-color="#9c9c9c"/><stop offset="0.186" stop-color="#f0f0f0"/><stop offset="0.188" stop-color="#6b6b6b"/><stop offset="0.190" stop-color="#f6f6f6"/><stop offset="0.193" stop-color="#626262"/><stop offset="0.195" stop-color="#303030"/><stop offset="0.197" stop-color="#535353"/><stop offset="0.200" stop-color="#fcfcfc"/><stop offset="0.202" stop-color="#efefef"/><stop offset="0.204" stop-color="#303030"/><stop offset="0.207" stop-color="#c1c1c1"/><stop offset="0.209" stop-color="#ffffff"/><stop offset="0.211" stop-color="#343434"/><stop offset="0.216" stop-color="#838383"/><stop offset="0.218" stop-color="#9f9f9f"/><stop offset="0.221" stop-color="#e7e7e7"/><stop offset="0.223" stop-color="#ababab"/><stop offset="0.225" stop-color="#595959"/><stop offset="0.228" stop-color="#adadad"/><stop offset="0.230" stop-color="#8c8c8c"/><stop offset="0.232" stop-color="#b6b6b6"/><stop offset="0.235" stop-color="#999999"/><stop offset="0.237" stop-color="#d5d5d5"/><stop offset="0.239" stop-color="#969696"/><stop offset="0.242" stop-color="#303030"/><stop offset="0.244" stop-color="#797979"/><stop offset="0.246" stop-color="#ffffff"/><stop offset="0.251" stop-color="#666666"/><stop offset="0.254" stop-color="#9a9a9a"/><stop offset="0.256" stop-color="#6e6e6e"/><stop offset="0.258" stop-color="#d9d9d9"/><stop offset="0.261" stop-color="#878787"/><stop offset="0.263" stop-color="#5e5e5e"/><stop offset="0.265" stop-color="#a9a9a9"/><stop offset="0.268" stop-color="#ffffff"/><stop offset="0.270" stop-color="#3d3d3d"/><stop offset="0.272" stop-color="#ababab"/><stop offset="0.275" stop-color="#767676"/><stop offset="0.277" stop-color="#989898"/><stop offset="0.279" stop-color="#8c8c8c"/><stop offset="0.282" stop-color="#474747"/><stop offset="0.284" stop-color="#868686"/><stop offset="0.286" stop-color="#ffffff"/><stop offset="0.289" stop-color="#636363"/><stop offset="0.291" stop-color="#444444"/><stop offset="0.293" stop-color="#e3e3e3"/><stop offset="0.296" stop-color="#7e7e7e"/><stop offset="0.298" stop-color="#a1a1a1"/><stop offset="0.300" stop-color="#ffffff"/><stop offset="0.303" stop-color="#303030"/><stop offset="0.305" stop-color="#858585"/><stop offset="0.307" stop-color="#ececec"/><stop offset="0.310" stop-color="#7d7d7d"/><stop offset="0.312" stop-color="#888888"/><stop offset="0.314" stop-color="#858585"/><stop offset="0.317" stop-color="#a3a3a3"/><stop offset="0.319" stop-color="#a3a3a3"/><stop offset="0.321" stop-color="#c4c4c4"/><stop offset="0.324" stop-color="#919191"/><stop offset="0.326" stop-color="#c6c6c6"/><stop offset="0.328" stop-color="#575757"/><stop offset="0.331" stop-color="#767676"/><stop offset="0.333" stop-color="#f4f4f4"/><stop offset="0.335" stop-color="#565656"/><stop offset="0.338" stop-color="#303030"/><stop offset="0.340" stop-color="#ffffff"/><stop offset="0.342" stop-color="#bbbbbb"/><stop offset="0.345" stop-color="#424242"/><stop offset="0.347" stop-color="#d6d6d6"/><stop offset="0.349" stop-color="#ffffff"/><stop offset="0.352" stop-color="#494949"/><stop offset="0.354" stop-color="#383838"/><stop offset="0.356" stop-color="#dedede"/><stop offset="0.359" stop-color="#959595"/><stop offset="0.361" stop-color="#828282"/><stop offset="0.363" stop-color="#b0b0b0"/><stop offset="0.366" stop-color="#ababab"/><stop offset="0.368" stop-color="#6c6c6c"/><stop offset="0.373" stop-color="#818181"/><stop offset="0.375" stop-color="#797979"/><stop offset="0.377" stop-color="#fafafa"/><stop offset="0.380" stop-color="#f9f9f9"/><stop offset="0.382" stop-color="#6c6c6c"/><stop offset="0.384" stop-color="#303030"/><stop offset="0.387" stop-color="#7d7d7d"/><stop offset="0.389" stop-color="#989898"/><stop offset="0.391" stop-color="#707070"/><stop offset="0.394" stop-color="#a9a9a9"/><stop offset="0.396" stop-color="#ffffff"/><stop offset="0.398" stop-color="#f4f4f4"/><stop offset="0.401" stop-color="#454545"/><stop offset="0.403" stop-color="#868686"/><stop offset="0.405" stop-color="#b9b9b9"/><stop offset="0.408" stop-color="#303030"/><stop offset="0.410" stop-color="#484848"/><stop offset="0.412" stop-color="#c9c9c9"/><stop offset="0.415" stop-color="#f3f3f3"/><stop offset="0.419" stop-color="#303030"/><stop offset="0.422" stop-color="#a4a4a4"/><stop offset="0.424" stop-color="#ffffff"/><stop offset="0.426" stop-color="#4c4c4c"/><stop offset="0.429" stop-color="#303030"/><stop offset="0.431" stop-color="#d1d1d1"/><stop offset="0.433" stop-color="#ffffff"/><stop offset="0.436" stop-color="#f5f5f5"/><stop offset="0.438" stop-color="#dbdbdb"/><stop offset="0.440" stop-color="#6a6a6a"/><stop offset="0.443" stop-color="#303030"/><stop offset="0.445" stop-color="#4b4b4b"/><stop offset="0.447" stop-color="#7a7a7a"/><stop offset="0.450" stop-color="#b4b4b4"/><stop offset="0.452" stop-color="#ffffff"/><stop offset="0.457" stop-color="#303030"/><stop offset="0.459" stop-color="#7e7e7e"/><stop offset="0.461" stop-color="#e5e5e5"/><stop offset="0.464" stop-color="#707070"/><stop offset="0.466" stop-color="#343434"/><stop offset="0.468" stop-color="#b1b1b1"/><stop offset="0.471" stop-color="#919191"/><stop offset="0.473" stop-color="#878787"/><stop offset="0.475" stop-color="#fefefe"/><stop offset="0.478" stop-color="#ffffff"/><stop offset="0.480" stop-color="#acacac"/><stop offset="0.482" stop-color="#303030"/><stop offset="0.485" stop-color="#303030"/><stop offset="0.487" stop-color="#adadad"/><stop offset="0.489" stop-color="#f9f9f9"/><stop offset="0.492" stop-color="#606060"/><stop offset="0.494" stop-color="#7e7e7e"/><stop offset="0.496" stop-color="#b7b7b7"/><stop offset="0.499" stop-color="#c7c7c7"/><stop offset="0.501" stop-color="#ffffff"/><stop offset="0.504" stop-color="#545454"/><stop offset="0.506" stop-color="#303030"/><stop offset="0.508" stop-color="#5f5f5f"/><stop offset="0.511" stop-color="#ffffff"/><stop offset="0.513" stop-color="#e3e3e3"/><stop offset="0.515" stop-color="#323232"/><stop offset="0.518" stop-color="#737373"/><stop offset="0.520" stop-color="#ffffff"/><stop offset="0.522" stop-color="#c5c5c5"/><stop offset="0.525" stop-color="#595959"/><stop offset="0.527" stop-color="#969696"/><stop offset="0.529" stop-color="#6d6d6d"/><stop offset="0.532" stop-color="#656565"/><stop offset="0.534" stop-color="#e3e3e3"/><stop offset="0.539" stop-color="#303030"/><stop offset="0.541" stop-color="#727272"/><stop offset="0.543" stop-color="#ffffff"/><stop offset="0.546" stop-color="#ffffff"/><stop offset="0.548" stop-color="#484848"/><stop offset="0.550" stop-color="#303030"/><stop offset="0.553" stop-color="#4d4d4d"/><stop offset="0.555" stop-color="#f4f4f4"/><stop offset="0.557" stop-color="#e3e3e3"/><stop offset="0.560" stop-color="#ffffff"/><stop offset="0.562" stop-color="#f6f6f6"/><stop offset="0.564" stop-color="#313131"/><stop offset="0.569" stop-color="#303030"/><stop offset="0.571" stop-color="#737373"/><stop offset="0.574" stop-color="#ffffff"/><stop offset="0.576" stop-color="#ffffff"/><stop offset="0.578" stop-color="#7a7a7a"/><stop offset="0.581" stop-color="#454545"/><stop offset="0.585" stop-color="#303030"/><stop offset="0.590" stop-color="#f5f5f5"/><stop offset="0.592" stop-color="#505050"/><stop offset="0.595" stop-color="#303030"/><stop offset="0.597" stop-color="#6e6e6e"/><stop offset="0.599" stop-color="#ffffff"/><stop offset="0.602" stop-color="#ffffff"/><stop offset="0.604" stop-color="#888888"/><stop offset="0.606" stop-color="#303030"/><stop offset="0.609" stop-color="#303030"/><stop offset="0.611" stop-color="#a8a8a8"/><stop offset="0.616" stop-color="#979797"/><stop offset="0.618" stop-color="#ababab"/><stop offset="0.620" stop-color="#303030"/><stop offset="0.623" stop-color="#c8c8c8"/><stop offset="0.625" stop-color="#e8e8e8"/><stop offset="0.627" stop-color="#7a7a7a"/><stop offset="0.630" stop-color="#dddddd"/><stop offset="0.632" stop-color="#b1b1b1"/><stop offset="0.634" stop-color="#3b3b3b"/><stop offset="0.637" stop-color="#a9a9a9"/><stop offset="0.639" stop-color="#d7d7d7"/><stop offset="0.641" stop-color="#303030"/><stop offset="0.646" stop-color="#343434"/><stop offset="0.648" stop-color="#ffffff"/><stop offset="0.653" stop-color="#fafafa"/><stop offset="0.655" stop-color="#303030"/><stop offset="0.662" stop-color="#363636"/><stop offset="0.665" stop-color="#e0e0e0"/><stop offset="0.667" stop-color="#cbcbcb"/><stop offset="0.669" stop-color="#939393"/><stop offset="0.672" stop-color="#c8c8c8"/><stop offset="0.674" stop-color="#c8c8c8"/><stop offset="0.676" stop-color="#adadad"/><stop offset="0.679" stop-color="#868686"/><stop offset="0.681" stop-color="#303030"/><stop offset="0.683" stop-color="#323232"/><stop offset="0.686" stop-color="#d3d3d3"/><stop offset="0.688" stop-color="#f6f6f6"/><stop offset="0.690" stop-color="#8c8c8c"/><stop offset="0.693" stop-color="#303030"/><stop offset="0.695" stop-color="#303030"/><stop offset="0.700" stop-color="#ffffff"/><stop offset="0.702" stop-color="#c2c2c2"/><stop offset="0.704" stop-color="#303030"/><stop offset="0.707" stop-color="#aeaeae"/><stop offset="0.709" stop-color="#ffffff"/><stop offset="0.711" stop-color="#ffffff"/><stop offset="0.714" stop-color="#303030"/><stop offset="0.718" stop-color="#393939"/><stop offset="0.721" stop-color="#fefefe"/><stop offset="0.723" stop-color="#a7a7a7"/><stop offset="0.725" stop-color="#3b3b3b"/><stop offset="0.728" stop-color="#ababab"/><stop offset="0.730" stop-color="#bdbdbd"/><stop offset="0.732" stop-color="#bebebe"/><stop offset="0.735" stop-color="#ededed"/><stop offset="0.737" stop-color="#a8a8a8"/><stop offset="0.739" stop-color="#303030"/><stop offset="0.742" stop-color="#494949"/><stop offset="0.744" stop-color="#aaaaaa"/><stop offset="0.746" stop-color="#838383"/><stop offset="0.749" stop-color="#8c8c8c"/><stop offset="0.756" stop-color="#fafafa"/><stop offset="0.758" stop-color="#535353"/><stop offset="0.761" stop-color="#303030"/><stop offset="0.763" stop-color="#464646"/><stop offset="0.765" stop-color="#dbdbdb"/><stop offset="0.768" stop-color="#969696"/><stop offset="0.770" stop-color="#8c8c8c"/><stop offset="0.772" stop-color="#979797"/><stop offset="0.775" stop-color="#7e7e7e"/><stop offset="0.777" stop-color="#828282"/><stop offset="0.782" stop-color="#3d3d3d"/><stop offset="0.784" stop-color="#c4c4c4"/><stop offset="0.786" stop-color="#ffffff"/><stop offset="0.789" stop-color="#e2e2e2"/><stop offset="0.791" stop-color="#303030"/><stop offset="0.793" stop-color="#303030"/><stop offset="0.796" stop-color="#434343"/><stop offset="0.798" stop-color="#ffffff"/><stop offset="0.800" stop-color="#ffffff"/><stop offset="0.803" stop-color="#b9b9b9"/><stop offset="0.805" stop-color="#303030"/><stop offset="0.807" stop-color="#303030"/><stop offset="0.810" stop-color="#717171"/><stop offset="0.812" stop-color="#c9c9c9"/><stop offset="0.814" stop-color="#c7c7c7"/><stop offset="0.817" stop-color="#f7f7f7"/><stop offset="0.819" stop-color="#ffffff"/><stop offset="0.821" stop-color="#f9f9f9"/><stop offset="0.824" stop-color="#5a5a5a"/><stop offset="0.826" stop-color="#303030"/><stop offset="0.828" stop-color="#393939"/><stop offset="0.831" stop-color="#6a6a6a"/><stop offset="0.833" stop-color="#4d4d4d"/><stop offset="0.835" stop-color="#848484"/><stop offset="0.838" stop-color="#f8f8f8"/><stop offset="0.840" stop-color="#ffffff"/><stop offset="0.842" stop-color="#f5f5f5"/><stop offset="0.845" stop-color="#6c6c6c"/><stop offset="0.847" stop-color="#484848"/><stop offset="0.852" stop-color="#3a3a3a"/><stop offset="0.854" stop-color="#cbcbcb"/><stop offset="0.856" stop-color="#fefefe"/><stop offset="0.859" stop-color="#7e7e7e"/><stop offset="0.861" stop-color="#303030"/><stop offset="0.863" stop-color="#303030"/><stop offset="0.868" stop-color="#fefefe"/><stop offset="0.870" stop-color="#ffffff"/><stop offset="0.873" stop-color="#d9d9d9"/><stop offset="0.875" stop-color="#777777"/><stop offset="0.877" stop-color="#484848"/><stop offset="0.880" stop-color="#acacac"/><stop offset="0.882" stop-color="#fdfdfd"/><stop offset="0.884" stop-color="#757575"/><stop offset="0.887" stop-color="#303030"/><stop offset="0.889" stop-color="#717171"/><stop offset="0.891" stop-color="#9b9b9b"/><stop offset="0.894" stop-color="#6f6f6f"/><stop offset="0.898" stop-color="#ffffff"/><stop offset="0.903" stop-color="#505050"/><stop offset="0.905" stop-color="#303030"/><stop offset="0.908" stop-color="#303030"/><stop offset="0.910" stop-color="#adadad"/><stop offset="0.912" stop-color="#ffffff"/><stop offset="0.915" stop-color="#ffffff"/><stop offset="0.917" stop-color="#8e8e8e"/><stop offset="0.919" stop-color="#303030"/><stop offset="0.924" stop-color="#313131"/><stop offset="0.926" stop-color="#ababab"/><stop offset="0.929" stop-color="#ececec"/><stop offset="0.931" stop-color="#959595"/><stop offset="0.933" stop-color="#c7c7c7"/><stop offset="0.936" stop-color="#e6e6e6"/><stop offset="0.938" stop-color="#8d8d8d"/><stop offset="0.943" stop-color="#ffffff"/><stop offset="0.945" stop-color="#ececec"/><stop offset="0.947" stop-color="#383838"/><stop offset="0.950" stop-color="#303030"/><stop offset="0.952" stop-color="#363636"/><stop offset="0.954" stop-color="#e2e2e2"/><stop offset="0.957" stop-color="#ffffff"/><stop offset="0.959" stop-color="#a7a7a7"/><stop offset="0.961" stop-color="#353535"/><stop offset="0.964" stop-color="#808080"/><stop offset="0.966" stop-color="#f9f9f9"/><stop offset="0.968" stop-color="#fdfdfd"/><stop offset="0.971" stop-color="#bfbfbf"/><stop offset="0.973" stop-color="#767676"/><stop offset="0.975" stop-color="#5a5a5a"/><stop offset="0.978" stop-color="#7b7b7b"/><stop offset="0.980" stop-color="#747474"/><stop offset="0.982" stop-color="#909090"/><stop offset="0.985" stop-color="#b8b8b8"/><stop offset="0.987" stop-color="#646464"/><stop offset="0.989" stop-color="#333333"/><stop offset="0.992" stop-color="#303030"/><stop offset="0.994" stop-color="#5f5f5f"/><stop offset="0.996" stop-color="#ebebeb"/><stop offset="0.999" stop-color="#ffffff"/></linearGradient><linearGradient id="s7" x1="0" y1="0" x2="0" y2="1"><stop offset="0.001" stop-color="#9d9d9d"/><stop offset="0.137" stop-color="#999999"/><stop offset="0.141" stop-color="#a0a0a0"/><stop offset="0.146" stop-color="#9a9a9a"/><stop offset="0.151" stop-color="#9b9b9b"/><stop offset="0.155" stop-color="#919191"/><stop offset="0.158" stop-color="#a7a7a7"/><stop offset="0.160" stop-color="#9c9c9c"/><stop offset="0.165" stop-color="#9f9f9f"/><stop offset="0.167" stop-color="#6e6e6e"/><stop offset="0.172" stop-color="#d1d1d1"/><stop offset="0.174" stop-color="#8b8b8b"/><stop offset="0.179" stop-color="#949494"/><stop offset="0.181" stop-color="#878787"/><stop offset="0.183" stop-color="#a8a8a8"/><stop offset="0.186" stop-color="#b5b5b5"/><stop offset="0.188" stop-color="#9d9d9d"/><stop offset="0.190" stop-color="#a9a9a9"/><stop offset="0.193" stop-color="#bfbfbf"/><stop offset="0.195" stop-color="#434343"/><stop offset="0.197" stop-color="#505050"/><stop offset="0.200" stop-color="#c2c2c2"/><stop offset="0.202" stop-color="#fcfcfc"/><stop offset="0.204" stop-color="#494949"/><stop offset="0.207" stop-color="#767676"/><stop offset="0.209" stop-color="#ffffff"/><stop offset="0.211" stop-color="#727272"/><stop offset="0.214" stop-color="#5a5a5a"/><stop offset="0.216" stop-color="#8b8b8b"/><stop offset="0.218" stop-color="#868686"/><stop offset="0.221" stop-color="#cccccc"/><stop offset="0.223" stop-color="#c5c5c5"/><stop offset="0.225" stop-color="#666666"/><stop offset="0.228" stop-color="#9c9c9c"/><stop offset="0.235" stop-color="#a2a2a2"/><stop offset="0.237" stop-color="#bababa"/><stop offset="0.239" stop-color="#bcbcbc"/><stop offset="0.242" stop-color="#303030"/><stop offset="0.244" stop-color="#5a5a5a"/><stop offset="0.246" stop-color="#ffffff"/><stop offset="0.249" stop-color="#bcbcbc"/><stop offset="0.251" stop-color="#646464"/><stop offset="0.254" stop-color="#a2a2a2"/><stop offset="0.256" stop-color="#6f6f6f"/><stop offset="0.258" stop-color="#cbcbcb"/><stop offset="0.263" stop-color="#666666"/><stop offset="0.265" stop-color="#949494"/><stop offset="0.268" stop-color="#ffffff"/><stop offset="0.270" stop-color="#4b4b4b"/><stop offset="0.272" stop-color="#b3b3b3"/><stop offset="0.275" stop-color="#5e5e5e"/><stop offset="0.277" stop-color="#aeaeae"/><stop offset="0.279" stop-color="#868686"/><stop offset="0.282" stop-color="#3b3b3b"/><stop offset="0.286" stop-color="#ffffff"/><stop offset="0.289" stop-color="#585858"/><stop offset="0.291" stop-color="#4f4f4f"/><stop offset="0.293" stop-color="#e8e8e8"/><stop offset="0.296" stop-color="#717171"/><stop offset="0.298" stop-color="#adadad"/><stop offset="0.300" stop-color="#fafafa"/><stop offset="0.303" stop-color="#303030"/><stop offset="0.305" stop-color="#9c9c9c"/><stop offset="0.307" stop-color="#d1d1d1"/><stop offset="0.310" stop-color="#7e7e7e"/><stop offset="0.312" stop-color="#8d8d8d"/><stop offset="0.314" stop-color="#868686"/><stop offset="0.317" stop-color="#bcbcbc"/><stop offset="0.319" stop-color="#898989"/><stop offset="0.321" stop-color="#bababa"/><stop offset="0.324" stop-color="#979797"/><stop offset="0.326" stop-color="#d2d2d2"/><stop offset="0.328" stop-color="#747474"/><stop offset="0.331" stop-color="#4e4e4e"/><stop offset="0.333" stop-color="#b8b8b8"/><stop offset="0.335" stop-color="#d9d9d9"/><stop offset="0.338" stop-color="#303030"/><stop offset="0.340" stop-color="#cccccc"/><stop offset="0.342" stop-color="#ebebeb"/><stop offset="0.345" stop-color="#6c6c6c"/><stop offset="0.347" stop-color="#5b5b5b"/><stop offset="0.349" stop-color="#ffffff"/><stop offset="0.352" stop-color="#c5c5c5"/><stop offset="0.354" stop-color="#303030"/><stop offset="0.356" stop-color="#898989"/><stop offset="0.359" stop-color="#bcbcbc"/><stop offset="0.361" stop-color="#7f7f7f"/><stop offset="0.363" stop-color="#b8b8b8"/><stop offset="0.366" stop-color="#aaaaaa"/><stop offset="0.370" stop-color="#737373"/><stop offset="0.375" stop-color="#767676"/><stop offset="0.377" stop-color="#969696"/><stop offset="0.380" stop-color="#ffffff"/><stop offset="0.382" stop-color="#e8e8e8"/><stop offset="0.384" stop-color="#515151"/><stop offset="0.387" stop-color="#303030"/><stop offset="0.389" stop-color="#939393"/><stop offset="0.391" stop-color="#a7a7a7"/><stop offset="0.394" stop-color="#6d6d6d"/><stop offset="0.396" stop-color="#c6c6c6"/><stop offset="0.398" stop-color="#ffffff"/><stop offset="0.401" stop-color="#a4a4a4"/><stop offset="0.403" stop-color="#353535"/><stop offset="0.405" stop-color="#e8e8e8"/><stop offset="0.408" stop-color="#838383"/><stop offset="0.410" stop-color="#303030"/><stop offset="0.412" stop-color="#727272"/><stop offset="0.415" stop-color="#e8e8e8"/><stop offset="0.417" stop-color="#d5d5d5"/><stop offset="0.419" stop-color="#585858"/><stop offset="0.422" stop-color="#3f3f3f"/><stop offset="0.424" stop-color="#e0e0e0"/><stop offset="0.426" stop-color="#e9e9e9"/><stop offset="0.429" stop-color="#303030"/><stop offset="0.431" stop-color="#333333"/><stop offset="0.433" stop-color="#fdfdfd"/><stop offset="0.436" stop-color="#ffffff"/><stop offset="0.438" stop-color="#f3f3f3"/><stop offset="0.440" stop-color="#d0d0d0"/><stop offset="0.443" stop-color="#3d3d3d"/><stop offset="0.445" stop-color="#303030"/><stop offset="0.447" stop-color="#535353"/><stop offset="0.450" stop-color="#a2a2a2"/><stop offset="0.452" stop-color="#e4e4e4"/><stop offset="0.454" stop-color="#fdfdfd"/><stop offset="0.457" stop-color="#515151"/><stop offset="0.459" stop-color="#303030"/><stop offset="0.461" stop-color="#afafaf"/><stop offset="0.464" stop-color="#c9c9c9"/><stop offset="0.466" stop-color="#505050"/><stop offset="0.468" stop-color="#626262"/><stop offset="0.471" stop-color="#bababa"/><stop offset="0.473" stop-color="#686868"/><stop offset="0.475" stop-color="#c7c7c7"/><stop offset="0.478" stop-color="#ffffff"/><stop offset="0.480" stop-color="#fbfbfb"/><stop offset="0.482" stop-color="#545454"/><stop offset="0.485" stop-color="#303030"/><stop offset="0.487" stop-color="#414141"/><stop offset="0.489" stop-color="#f9f9f9"/><stop offset="0.492" stop-color="#c0c0c0"/><stop offset="0.494" stop-color="#545454"/><stop offset="0.496" stop-color="#a3a3a3"/><stop offset="0.499" stop-color="#b7b7b7"/><stop offset="0.501" stop-color="#eeeeee"/><stop offset="0.504" stop-color="#d6d6d6"/><stop offset="0.506" stop-color="#303030"/><stop offset="0.508" stop-color="#303030"/><stop offset="0.511" stop-color="#eeeeee"/><stop offset="0.513" stop-color="#ffffff"/><stop offset="0.515" stop-color="#5f5f5f"/><stop offset="0.518" stop-color="#3a3a3a"/><stop offset="0.520" stop-color="#e2e2e2"/><stop offset="0.522" stop-color="#eeeeee"/><stop offset="0.525" stop-color="#696969"/><stop offset="0.527" stop-color="#9b9b9b"/><stop offset="0.529" stop-color="#a2a2a2"/><stop offset="0.532" stop-color="#323232"/><stop offset="0.534" stop-color="#acacac"/><stop offset="0.536" stop-color="#dfdfdf"/><stop offset="0.539" stop-color="#323232"/><stop offset="0.541" stop-color="#383838"/><stop offset="0.543" stop-color="#f2f2f2"/><stop offset="0.546" stop-color="#ffffff"/><stop offset="0.548" stop-color="#e2e2e2"/><stop offset="0.550" stop-color="#303030"/><stop offset="0.553" stop-color="#303030"/><stop offset="0.555" stop-color="#cccccc"/><stop offset="0.557" stop-color="#fcfcfc"/><stop offset="0.562" stop-color="#ffffff"/><stop offset="0.564" stop-color="#6c6c6c"/><stop offset="0.567" stop-color="#303030"/><stop offset="0.569" stop-color="#3b3b3b"/><stop offset="0.571" stop-color="#303030"/><stop offset="0.574" stop-color="#d8d8d8"/><stop offset="0.576" stop-color="#ffffff"/><stop offset="0.578" stop-color="#e8e8e8"/><stop offset="0.581" stop-color="#505050"/><stop offset="0.585" stop-color="#303030"/><stop offset="0.588" stop-color="#343434"/><stop offset="0.590" stop-color="#e4e4e4"/><stop offset="0.592" stop-color="#dfdfdf"/><stop offset="0.595" stop-color="#303030"/><stop offset="0.597" stop-color="#303030"/><stop offset="0.599" stop-color="#f8f8f8"/><stop offset="0.602" stop-color="#ffffff"/><stop offset="0.604" stop-color="#f9f9f9"/><stop offset="0.606" stop-color="#353535"/><stop offset="0.609" stop-color="#303030"/><stop offset="0.611" stop-color="#575757"/><stop offset="0.613" stop-color="#b4b4b4"/><stop offset="0.616" stop-color="#5b5b5b"/><stop offset="0.618" stop-color="#f5f5f5"/><stop offset="0.623" stop-color="#424242"/><stop offset="0.625" stop-color="#d5d5d5"/><stop offset="0.627" stop-color="#898989"/><stop offset="0.630" stop-color="#c9c9c9"/><stop offset="0.632" stop-color="#ebebeb"/><stop offset="0.634" stop-color="#464646"/><stop offset="0.637" stop-color="#5d5d5d"/><stop offset="0.639" stop-color="#e5e5e5"/><stop offset="0.641" stop-color="#6b6b6b"/><stop offset="0.644" stop-color="#303030"/><stop offset="0.646" stop-color="#303030"/><stop offset="0.648" stop-color="#ececec"/><stop offset="0.651" stop-color="#ffffff"/><stop offset="0.653" stop-color="#ffffff"/><stop offset="0.655" stop-color="#616161"/><stop offset="0.658" stop-color="#303030"/><stop offset="0.662" stop-color="#303030"/><stop offset="0.665" stop-color="#b3b3b3"/><stop offset="0.667" stop-color="#cfcfcf"/><stop offset="0.669" stop-color="#767676"/><stop offset="0.672" stop-color="#a7a7a7"/><stop offset="0.674" stop-color="#efefef"/><stop offset="0.676" stop-color="#dbdbdb"/><stop offset="0.679" stop-color="#9c9c9c"/><stop offset="0.681" stop-color="#313131"/><stop offset="0.683" stop-color="#303030"/><stop offset="0.686" stop-color="#a4a4a4"/><stop offset="0.688" stop-color="#ffffff"/><stop offset="0.690" stop-color="#bababa"/><stop offset="0.693" stop-color="#303030"/><stop offset="0.695" stop-color="#303030"/><stop offset="0.697" stop-color="#787878"/><stop offset="0.700" stop-color="#fcfcfc"/><stop offset="0.702" stop-color="#cfcfcf"/><stop offset="0.704" stop-color="#545454"/><stop offset="0.707" stop-color="#888888"/><stop offset="0.709" stop-color="#ffffff"/><stop offset="0.711" stop-color="#ffffff"/><stop offset="0.714" stop-color="#5d5d5d"/><stop offset="0.716" stop-color="#303030"/><stop offset="0.718" stop-color="#303030"/><stop offset="0.721" stop-color="#bbbbbb"/><stop offset="0.723" stop-color="#e0e0e0"/><stop offset="0.725" stop-color="#5b5b5b"/><stop offset="0.730" stop-color="#c4c4c4"/><stop offset="0.732" stop-color="#ababab"/><stop offset="0.735" stop-color="#dcdcdc"/><stop offset="0.737" stop-color="#d0d0d0"/><stop offset="0.739" stop-color="#404040"/><stop offset="0.742" stop-color="#353535"/><stop offset="0.744" stop-color="#919191"/><stop offset="0.746" stop-color="#6c6c6c"/><stop offset="0.749" stop-color="#6e6e6e"/><stop offset="0.751" stop-color="#e2e2e2"/><stop offset="0.754" stop-color="#fcfcfc"/><stop offset="0.756" stop-color="#d8d8d8"/><stop offset="0.758" stop-color="#555555"/><stop offset="0.761" stop-color="#303030"/><stop offset="0.763" stop-color="#303030"/><stop offset="0.765" stop-color="#ffffff"/><stop offset="0.768" stop-color="#f0f0f0"/><stop offset="0.770" stop-color="#4c4c4c"/><stop offset="0.772" stop-color="#414141"/><stop offset="0.775" stop-color="#626262"/><stop offset="0.777" stop-color="#b3b3b3"/><stop offset="0.779" stop-color="#b5b5b5"/><stop offset="0.782" stop-color="#303030"/><stop offset="0.784" stop-color="#4d4d4d"/><stop offset="0.786" stop-color="#ffffff"/><stop offset="0.789" stop-color="#ffffff"/><stop offset="0.791" stop-color="#595959"/><stop offset="0.793" stop-color="#303030"/><stop offset="0.796" stop-color="#323232"/><stop offset="0.798" stop-color="#fdfdfd"/><stop offset="0.803" stop-color="#ffffff"/><stop offset="0.805" stop-color="#626262"/><stop offset="0.807" stop-color="#303030"/><stop offset="0.810" stop-color="#303030"/><stop offset="0.812" stop-color="#6c6c6c"/><stop offset="0.814" stop-color="#dedede"/><stop offset="0.817" stop-color="#f9f9f9"/><stop offset="0.821" stop-color="#ffffff"/><stop offset="0.824" stop-color="#f5f5f5"/><stop offset="0.826" stop-color="#404040"/><stop offset="0.828" stop-color="#303030"/><stop offset="0.831" stop-color="#333333"/><stop offset="0.833" stop-color="#a3a3a3"/><stop offset="0.835" stop-color="#898989"/><stop offset="0.838" stop-color="#9c9c9c"/><stop offset="0.840" stop-color="#ffffff"/><stop offset="0.842" stop-color="#ffffff"/><stop offset="0.845" stop-color="#cbcbcb"/><stop offset="0.847" stop-color="#494949"/><stop offset="0.849" stop-color="#6c6c6c"/><stop offset="0.852" stop-color="#434343"/><stop offset="0.854" stop-color="#353535"/><stop offset="0.856" stop-color="#e5e5e5"/><stop offset="0.859" stop-color="#ffffff"/><stop offset="0.861" stop-color="#4f4f4f"/><stop offset="0.863" stop-color="#303030"/><stop offset="0.866" stop-color="#313131"/><stop offset="0.868" stop-color="#c7c7c7"/><stop offset="0.870" stop-color="#ffffff"/><stop offset="0.873" stop-color="#ffffff"/><stop offset="0.875" stop-color="#c2c2c2"/><stop offset="0.877" stop-color="#777777"/><stop offset="0.880" stop-color="#656565"/><stop offset="0.882" stop-color="#b0b0b0"/><stop offset="0.884" stop-color="#d3d3d3"/><stop offset="0.887" stop-color="#373737"/><stop offset="0.889" stop-color="#323232"/><stop offset="0.891" stop-color="#e3e3e3"/><stop offset="0.894" stop-color="#c4c4c4"/><stop offset="0.896" stop-color="#3e3e3e"/><stop offset="0.898" stop-color="#c2c2c2"/><stop offset="0.901" stop-color="#f5f5f5"/><stop offset="0.903" stop-color="#676767"/><stop offset="0.905" stop-color="#373737"/><stop offset="0.908" stop-color="#303030"/><stop offset="0.910" stop-color="#353535"/><stop offset="0.912" stop-color="#fefefe"/><stop offset="0.917" stop-color="#fdfdfd"/><stop offset="0.919" stop-color="#606060"/><stop offset="0.922" stop-color="#303030"/><stop offset="0.926" stop-color="#313131"/><stop offset="0.929" stop-color="#eeeeee"/><stop offset="0.931" stop-color="#f9f9f9"/><stop offset="0.933" stop-color="#727272"/><stop offset="0.936" stop-color="#acacac"/><stop offset="0.938" stop-color="#dbdbdb"/><stop offset="0.940" stop-color="#8c8c8c"/><stop offset="0.943" stop-color="#d6d6d6"/><stop offset="0.945" stop-color="#ffffff"/><stop offset="0.947" stop-color="#eaeaea"/><stop offset="0.950" stop-color="#303030"/><stop offset="0.954" stop-color="#323232"/><stop offset="0.957" stop-color="#c3c3c3"/><stop offset="0.959" stop-color="#ffffff"/><stop offset="0.961" stop-color="#dcdcdc"/><stop offset="0.964" stop-color="#525252"/><stop offset="0.966" stop-color="#535353"/><stop offset="0.968" stop-color="#dadada"/><stop offset="0.971" stop-color="#ffffff"/><stop offset="0.973" stop-color="#dedede"/><stop offset="0.978" stop-color="#727272"/><stop offset="0.985" stop-color="#5a5a5a"/><stop offset="0.987" stop-color="#9c9c9c"/><stop offset="0.989" stop-color="#ababab"/><stop offset="0.994" stop-color="#303030"/><stop offset="0.996" stop-color="#333333"/><stop offset="0.999" stop-color="#c3c3c3"/></linearGradient><linearGradient id="s8" x1="0" y1="0" x2="0" y2="1"><stop offset="0.001" stop-color="#9d9d9d"/><stop offset="0.158" stop-color="#9a9a9a"/><stop offset="0.165" stop-color="#9d9d9d"/><stop offset="0.169" stop-color="#8e8e8e"/><stop offset="0.172" stop-color="#a9a9a9"/><stop offset="0.176" stop-color="#969696"/><stop offset="0.179" stop-color="#9c9c9c"/><stop offset="0.181" stop-color="#8f8f8f"/><stop offset="0.183" stop-color="#9d9d9d"/><stop offset="0.188" stop-color="#a7a7a7"/><stop offset="0.190" stop-color="#929292"/><stop offset="0.193" stop-color="#b2b2b2"/><stop offset="0.195" stop-color="#8b8b8b"/><stop offset="0.197" stop-color="#767676"/><stop offset="0.200" stop-color="#8b8b8b"/><stop offset="0.202" stop-color="#cdcdcd"/><stop offset="0.204" stop-color="#979797"/><stop offset="0.207" stop-color="#707070"/><stop offset="0.209" stop-color="#cbcbcb"/><stop offset="0.211" stop-color="#bababa"/><stop offset="0.214" stop-color="#696969"/><stop offset="0.216" stop-color="#969696"/><stop offset="0.218" stop-color="#8c8c8c"/><stop offset="0.221" stop-color="#a0a0a0"/><stop offset="0.223" stop-color="#c2c2c2"/><stop offset="0.225" stop-color="#828282"/><stop offset="0.228" stop-color="#8e8e8e"/><stop offset="0.230" stop-color="#aaaaaa"/><stop offset="0.232" stop-color="#969696"/><stop offset="0.235" stop-color="#a5a5a5"/><stop offset="0.237" stop-color="#a2a2a2"/><stop offset="0.239" stop-color="#cbcbcb"/><stop offset="0.242" stop-color="#383838"/><stop offset="0.244" stop-color="#5d5d5d"/><stop offset="0.246" stop-color="#fbfbfb"/><stop offset="0.251" stop-color="#6c6c6c"/><stop offset="0.254" stop-color="#adadad"/><stop offset="0.256" stop-color="#6d6d6d"/><stop offset="0.258" stop-color="#c2c2c2"/><stop offset="0.261" stop-color="#a1a1a1"/><stop offset="0.263" stop-color="#646464"/><stop offset="0.265" stop-color="#9f9f9f"/><stop offset="0.268" stop-color="#ffffff"/><stop offset="0.270" stop-color="#656565"/><stop offset="0.272" stop-color="#a4a4a4"/><stop offset="0.275" stop-color="#545454"/><stop offset="0.277" stop-color="#cfcfcf"/><stop offset="0.279" stop-color="#717171"/><stop offset="0.282" stop-color="#313131"/><stop offset="0.284" stop-color="#cecece"/><stop offset="0.286" stop-color="#ffffff"/><stop offset="0.289" stop-color="#505050"/><stop offset="0.291" stop-color="#585858"/><stop offset="0.293" stop-color="#f8f8f8"/><stop offset="0.296" stop-color="#595959"/><stop offset="0.298" stop-color="#c1c1c1"/><stop offset="0.300" stop-color="#ececec"/><stop offset="0.303" stop-color="#303030"/><stop offset="0.305" stop-color="#b1b1b1"/><stop offset="0.307" stop-color="#a6a6a6"/><stop offset="0.310" stop-color="#8f8f8f"/><stop offset="0.314" stop-color="#8e8e8e"/><stop offset="0.317" stop-color="#d0d0d0"/><stop offset="0.319" stop-color="#707070"/><stop offset="0.321" stop-color="#a7a7a7"/><stop offset="0.324" stop-color="#a9a9a9"/><stop offset="0.326" stop-color="#d2d2d2"/><stop offset="0.328" stop-color="#a1a1a1"/><stop offset="0.331" stop-color="#343434"/><stop offset="0.333" stop-color="#696969"/><stop offset="0.335" stop-color="#ffffff"/><stop offset="0.338" stop-color="#4e4e4e"/><stop offset="0.340" stop-color="#424242"/><stop offset="0.342" stop-color="#f6f6f6"/><stop offset="0.345" stop-color="#b8b8b8"/><stop offset="0.347" stop-color="#383838"/><stop offset="0.349" stop-color="#cdcdcd"/><stop offset="0.352" stop-color="#ffffff"/><stop offset="0.354" stop-color="#565656"/><stop offset="0.356" stop-color="#323232"/><stop offset="0.359" stop-color="#a0a0a0"/><stop offset="0.361" stop-color="#969696"/><stop offset="0.363" stop-color="#b1b1b1"/><stop offset="0.366" stop-color="#bbbbbb"/><stop offset="0.368" stop-color="#939393"/><stop offset="0.370" stop-color="#9a9a9a"/><stop offset="0.373" stop-color="#6c6c6c"/><stop offset="0.377" stop-color="#737373"/><stop offset="0.380" stop-color="#aeaeae"/><stop offset="0.382" stop-color="#ffffff"/><stop offset="0.384" stop-color="#e1e1e1"/><stop offset="0.387" stop-color="#393939"/><stop offset="0.389" stop-color="#343434"/><stop offset="0.391" stop-color="#bfbfbf"/><stop offset="0.394" stop-color="#9f9f9f"/><stop offset="0.396" stop-color="#646464"/><stop offset="0.398" stop-color="#f3f3f3"/><stop offset="0.401" stop-color="#fefefe"/><stop offset="0.403" stop-color="#4f4f4f"/><stop offset="0.405" stop-color="#767676"/><stop offset="0.408" stop-color="#f9f9f9"/><stop offset="0.410" stop-color="#4b4b4b"/><stop offset="0.412" stop-color="#303030"/><stop offset="0.415" stop-color="#a9a9a9"/><stop offset="0.417" stop-color="#e5e5e5"/><stop offset="0.419" stop-color="#a3a3a3"/><stop offset="0.422" stop-color="#484848"/><stop offset="0.424" stop-color="#717171"/><stop offset="0.426" stop-color="#fafafa"/><stop offset="0.429" stop-color="#a4a4a4"/><stop offset="0.431" stop-color="#303030"/><stop offset="0.433" stop-color="#676767"/><stop offset="0.436" stop-color="#ffffff"/><stop offset="0.440" stop-color="#f5f5f5"/><stop offset="0.445" stop-color="#303030"/><stop offset="0.447" stop-color="#303030"/><stop offset="0.450" stop-color="#8d8d8d"/><stop offset="0.452" stop-color="#c9c9c9"/><stop offset="0.454" stop-color="#f7f7f7"/><stop offset="0.457" stop-color="#d8d8d8"/><stop offset="0.459" stop-color="#303030"/><stop offset="0.461" stop-color="#424242"/><stop offset="0.464" stop-color="#cecece"/><stop offset="0.466" stop-color="#a5a5a5"/><stop offset="0.468" stop-color="#484848"/><stop offset="0.471" stop-color="#9a9a9a"/><stop offset="0.473" stop-color="#909090"/><stop offset="0.475" stop-color="#797979"/><stop offset="0.478" stop-color="#fbfbfb"/><stop offset="0.480" stop-color="#ffffff"/><stop offset="0.482" stop-color="#c5c5c5"/><stop offset="0.485" stop-color="#313131"/><stop offset="0.487" stop-color="#303030"/><stop offset="0.489" stop-color="#9c9c9c"/><stop offset="0.492" stop-color="#ffffff"/><stop offset="0.494" stop-color="#7c7c7c"/><stop offset="0.496" stop-color="#6a6a6a"/><stop offset="0.499" stop-color="#b7b7b7"/><stop offset="0.501" stop-color="#b9b9b9"/><stop offset="0.504" stop-color="#fafafa"/><stop offset="0.506" stop-color="#888888"/><stop offset="0.508" stop-color="#303030"/><stop offset="0.511" stop-color="#535353"/><stop offset="0.513" stop-color="#ffffff"/><stop offset="0.515" stop-color="#dcdcdc"/><stop offset="0.518" stop-color="#383838"/><stop offset="0.520" stop-color="#777777"/><stop offset="0.522" stop-color="#f4f4f4"/><stop offset="0.525" stop-color="#ababab"/><stop offset="0.527" stop-color="#898989"/><stop offset="0.529" stop-color="#cecece"/><stop offset="0.532" stop-color="#626262"/><stop offset="0.534" stop-color="#393939"/><stop offset="0.536" stop-color="#eeeeee"/><stop offset="0.539" stop-color="#9e9e9e"/><stop offset="0.541" stop-color="#303030"/><stop offset="0.543" stop-color="#6f6f6f"/><stop offset="0.546" stop-color="#ffffff"/><stop offset="0.548" stop-color="#ffffff"/><stop offset="0.550" stop-color="#8a8a8a"/><stop offset="0.553" stop-color="#303030"/><stop offset="0.555" stop-color="#343434"/><stop offset="0.557" stop-color="#f7f7f7"/><stop offset="0.562" stop-color="#ffffff"/><stop offset="0.564" stop-color="#e2e2e2"/><stop offset="0.567" stop-color="#5c5c5c"/><stop offset="0.569" stop-color="#4d4d4d"/><stop offset="0.571" stop-color="#343434"/><stop offset="0.574" stop-color="#3e3e3e"/><stop offset="0.576" stop-color="#f1f1f1"/><stop offset="0.578" stop-color="#ffffff"/><stop offset="0.581" stop-color="#c7c7c7"/><stop offset="0.583" stop-color="#393939"/><stop offset="0.588" stop-color="#303030"/><stop offset="0.590" stop-color="#525252"/><stop offset="0.592" stop-color="#ffffff"/><stop offset="0.595" stop-color="#9f9f9f"/><stop offset="0.597" stop-color="#303030"/><stop offset="0.599" stop-color="#494949"/><stop offset="0.602" stop-color="#ffffff"/><stop offset="0.604" stop-color="#ffffff"/><stop offset="0.606" stop-color="#cfcfcf"/><stop offset="0.609" stop-color="#313131"/><stop offset="0.611" stop-color="#303030"/><stop offset="0.613" stop-color="#717171"/><stop offset="0.618" stop-color="#838383"/><stop offset="0.620" stop-color="#ffffff"/><stop offset="0.623" stop-color="#959595"/><stop offset="0.625" stop-color="#3e3e3e"/><stop offset="0.627" stop-color="#9e9e9e"/><stop offset="0.630" stop-color="#a8a8a8"/><stop offset="0.632" stop-color="#e1e1e1"/><stop offset="0.634" stop-color="#cccccc"/><stop offset="0.637" stop-color="#515151"/><stop offset="0.639" stop-color="#5d5d5d"/><stop offset="0.641" stop-color="#bebebe"/><stop offset="0.644" stop-color="#868686"/><stop offset="0.646" stop-color="#313131"/><stop offset="0.648" stop-color="#333333"/><stop offset="0.651" stop-color="#c0c0c0"/><stop offset="0.653" stop-color="#ffffff"/><stop offset="0.655" stop-color="#fbfbfb"/><stop offset="0.658" stop-color="#a9a9a9"/><stop offset="0.660" stop-color="#3f3f3f"/><stop offset="0.662" stop-color="#303030"/><stop offset="0.665" stop-color="#3e3e3e"/><stop offset="0.667" stop-color="#8c8c8c"/><stop offset="0.669" stop-color="#9a9a9a"/><stop offset="0.672" stop-color="#797979"/><stop offset="0.674" stop-color="#a1a1a1"/><stop offset="0.676" stop-color="#f2f2f2"/><stop offset="0.679" stop-color="#ededed"/><stop offset="0.681" stop-color="#898989"/><stop offset="0.683" stop-color="#333333"/><stop offset="0.686" stop-color="#333333"/><stop offset="0.688" stop-color="#aeaeae"/><stop offset="0.690" stop-color="#fefefe"/><stop offset="0.695" stop-color="#303030"/><stop offset="0.697" stop-color="#313131"/><stop offset="0.700" stop-color="#a1a1a1"/><stop offset="0.702" stop-color="#dfdfdf"/><stop offset="0.704" stop-color="#929292"/><stop offset="0.707" stop-color="#949494"/><stop offset="0.709" stop-color="#ececec"/><stop offset="0.711" stop-color="#fcfcfc"/><stop offset="0.714" stop-color="#efefef"/><stop offset="0.716" stop-color="#5c5c5c"/><stop offset="0.718" stop-color="#303030"/><stop offset="0.721" stop-color="#363636"/><stop offset="0.723" stop-color="#979797"/><stop offset="0.725" stop-color="#c1c1c1"/><stop offset="0.728" stop-color="#8c8c8c"/><stop offset="0.730" stop-color="#a8a8a8"/><stop offset="0.732" stop-color="#b5b5b5"/><stop offset="0.735" stop-color="#b5b5b5"/><stop offset="0.737" stop-color="#d2d2d2"/><stop offset="0.739" stop-color="#9e9e9e"/><stop offset="0.742" stop-color="#505050"/><stop offset="0.746" stop-color="#616161"/><stop offset="0.749" stop-color="#525252"/><stop offset="0.751" stop-color="#c2c2c2"/><stop offset="0.754" stop-color="#ffffff"/><stop offset="0.756" stop-color="#e6e6e6"/><stop offset="0.758" stop-color="#4b4b4b"/><stop offset="0.761" stop-color="#303030"/><stop offset="0.763" stop-color="#303030"/><stop offset="0.765" stop-color="#e1e1e1"/><stop offset="0.768" stop-color="#ffffff"/><stop offset="0.770" stop-color="#6b6b6b"/><stop offset="0.772" stop-color="#303030"/><stop offset="0.775" stop-color="#363636"/><stop offset="0.777" stop-color="#c4c4c4"/><stop offset="0.779" stop-color="#ededed"/><stop offset="0.782" stop-color="#414141"/><stop offset="0.784" stop-color="#303030"/><stop offset="0.786" stop-color="#ffffff"/><stop offset="0.789" stop-color="#ffffff"/><stop offset="0.791" stop-color="#7d7d7d"/><stop offset="0.793" stop-color="#303030"/><stop offset="0.796" stop-color="#575757"/><stop offset="0.798" stop-color="#ffffff"/><stop offset="0.800" stop-color="#f8f8f8"/><stop offset="0.803" stop-color="#ffffff"/><stop offset="0.805" stop-color="#b3b3b3"/><stop offset="0.807" stop-color="#303030"/><stop offset="0.810" stop-color="#303030"/><stop offset="0.812" stop-color="#424242"/><stop offset="0.814" stop-color="#f9f9f9"/><stop offset="0.817" stop-color="#ffffff"/><stop offset="0.819" stop-color="#fafafa"/><stop offset="0.824" stop-color="#ffffff"/><stop offset="0.826" stop-color="#3a3a3a"/><stop offset="0.831" stop-color="#303030"/><stop offset="0.833" stop-color="#d9d9d9"/><stop offset="0.838" stop-color="#929292"/><stop offset="0.840" stop-color="#ffffff"/><stop offset="0.842" stop-color="#ffffff"/><stop offset="0.845" stop-color="#bebebe"/><stop offset="0.847" stop-color="#525252"/><stop offset="0.849" stop-color="#868686"/><stop offset="0.852" stop-color="#515151"/><stop offset="0.854" stop-color="#303030"/><stop offset="0.856" stop-color="#d6d6d6"/><stop offset="0.859" stop-color="#ffffff"/><stop offset="0.861" stop-color="#626262"/><stop offset="0.863" stop-color="#303030"/><stop offset="0.866" stop-color="#303030"/><stop offset="0.868" stop-color="#a7a7a7"/><stop offset="0.870" stop-color="#ffffff"/><stop offset="0.873" stop-color="#ffffff"/><stop offset="0.875" stop-color="#dcdcdc"/><stop offset="0.877" stop-color="#a2a2a2"/><stop offset="0.880" stop-color="#727272"/><stop offset="0.882" stop-color="#666666"/><stop offset="0.884" stop-color="#acacac"/><stop offset="0.887" stop-color="#606060"/><stop offset="0.889" stop-color="#303030"/><stop offset="0.891" stop-color="#d8d8d8"/><stop offset="0.894" stop-color="#ffffff"/><stop offset="0.896" stop-color="#343434"/><stop offset="0.898" stop-color="#4c4c4c"/><stop offset="0.901" stop-color="#f0f0f0"/><stop offset="0.903" stop-color="#9d9d9d"/><stop offset="0.905" stop-color="#383838"/><stop offset="0.908" stop-color="#303030"/><stop offset="0.910" stop-color="#383838"/><stop offset="0.912" stop-color="#b8b8b8"/><stop offset="0.915" stop-color="#ffffff"/><stop offset="0.917" stop-color="#ffffff"/><stop offset="0.919" stop-color="#e4e4e4"/><stop offset="0.922" stop-color="#545454"/><stop offset="0.924" stop-color="#303030"/><stop offset="0.926" stop-color="#303030"/><stop offset="0.929" stop-color="#515151"/><stop offset="0.931" stop-color="#ffffff"/><stop offset="0.933" stop-color="#e4e4e4"/><stop offset="0.936" stop-color="#383838"/><stop offset="0.938" stop-color="#b6b6b6"/><stop offset="0.940" stop-color="#d4d4d4"/><stop offset="0.943" stop-color="#9a9a9a"/><stop offset="0.945" stop-color="#fefefe"/><stop offset="0.947" stop-color="#ffffff"/><stop offset="0.950" stop-color="#a6a6a6"/><stop offset="0.952" stop-color="#303030"/><stop offset="0.957" stop-color="#303030"/><stop offset="0.959" stop-color="#ebebeb"/><stop offset="0.961" stop-color="#ffffff"/><stop offset="0.964" stop-color="#e9e9e9"/><stop offset="0.966" stop-color="#373737"/><stop offset="0.968" stop-color="#4b4b4b"/><stop offset="0.971" stop-color="#f1f1f1"/><stop offset="0.973" stop-color="#ffffff"/><stop offset="0.975" stop-color="#e8e8e8"/><stop offset="0.978" stop-color="#afafaf"/><stop offset="0.980" stop-color="#5f5f5f"/><stop offset="0.982" stop-color="#555555"/><stop offset="0.985" stop-color="#3a3a3a"/><stop offset="0.987" stop-color="#575757"/><stop offset="0.989" stop-color="#e2e2e2"/><stop offset="0.992" stop-color="#dddddd"/><stop offset="0.994" stop-color="#303030"/><stop offset="0.996" stop-color="#303030"/><stop offset="0.999" stop-color="#474747"/></linearGradient><linearGradient id="s9" x1="0" y1="0" x2="0" y2="1"><stop offset="0.001" stop-color="#9d9d9d"/><stop offset="0.172" stop-color="#999999"/><stop offset="0.181" stop-color="#9a9a9a"/><stop offset="0.193" stop-color="#999999"/><stop offset="0.195" stop-color="#a1a1a1"/><stop offset="0.197" stop-color="#919191"/><stop offset="0.200" stop-color="#909090"/><stop offset="0.204" stop-color="#a7a7a7"/><stop offset="0.207" stop-color="#8e8e8e"/><stop offset="0.209" stop-color="#9a9a9a"/><stop offset="0.211" stop-color="#b0b0b0"/><stop offset="0.214" stop-color="#8c8c8c"/><stop offset="0.216" stop-color="#989898"/><stop offset="0.221" stop-color="#939393"/><stop offset="0.223" stop-color="#aaaaaa"/><stop offset="0.225" stop-color="#969696"/><stop offset="0.228" stop-color="#929292"/><stop offset="0.230" stop-color="#a3a3a3"/><stop offset="0.232" stop-color="#989898"/><stop offset="0.235" stop-color="#9e9e9e"/><stop offset="0.237" stop-color="#979797"/><stop offset="0.239" stop-color="#b9b9b9"/><stop offset="0.242" stop-color="#646464"/><stop offset="0.244" stop-color="#797979"/><stop offset="0.246" stop-color="#d4d4d4"/><stop offset="0.249" stop-color="#9e9e9e"/><stop offset="0.251" stop-color="#818181"/><stop offset="0.254" stop-color="#afafaf"/><stop offset="0.256" stop-color="#6f6f6f"/><stop offset="0.258" stop-color="#bababa"/><stop offset="0.261" stop-color="#a6a6a6"/><stop offset="0.263" stop-color="#626262"/><stop offset="0.265" stop-color="#adadad"/><stop offset="0.268" stop-color="#e9e9e9"/><stop offset="0.270" stop-color="#919191"/><stop offset="0.272" stop-color="#6f6f6f"/><stop offset="0.275" stop-color="#838383"/><stop offset="0.277" stop-color="#c7c7c7"/><stop offset="0.279" stop-color="#575757"/><stop offset="0.282" stop-color="#3f3f3f"/><stop offset="0.284" stop-color="#f4f4f4"/><stop offset="0.286" stop-color="#ffffff"/><stop offset="0.289" stop-color="#444444"/><stop offset="0.291" stop-color="#696969"/><stop offset="0.293" stop-color="#f8f8f8"/><stop offset="0.296" stop-color="#4b4b4b"/><stop offset="0.298" stop-color="#d1d1d1"/><stop offset="0.300" stop-color="#e5e5e5"/><stop offset="0.303" stop-color="#303030"/><stop offset="0.305" stop-color="#acacac"/><stop offset="0.307" stop-color="#848484"/><stop offset="0.310" stop-color="#a9a9a9"/><stop offset="0.312" stop-color="#8c8c8c"/><stop offset="0.314" stop-color="#9a9a9a"/><stop offset="0.317" stop-color="#dddddd"/><stop offset="0.319" stop-color="#5d5d5d"/><stop offset="0.324" stop-color="#bfbfbf"/><stop offset="0.326" stop-color="#cdcdcd"/><stop offset="0.328" stop-color="#c9c9c9"/><stop offset="0.331" stop-color="#424242"/><stop offset="0.333" stop-color="#333333"/><stop offset="0.335" stop-color="#dddddd"/><stop offset="0.338" stop-color="#eaeaea"/><stop offset="0.340" stop-color="#303030"/><stop offset="0.342" stop-color="#838383"/><stop offset="0.345" stop-color="#efefef"/><stop offset="0.347" stop-color="#858585"/><stop offset="0.349" stop-color="#484848"/><stop offset="0.352" stop-color="#f8f8f8"/><stop offset="0.354" stop-color="#efefef"/><stop offset="0.356" stop-color="#3e3e3e"/><stop offset="0.359" stop-color="#3b3b3b"/><stop offset="0.361" stop-color="#8d8d8d"/><stop offset="0.363" stop-color="#a8a8a8"/><stop offset="0.366" stop-color="#cfcfcf"/><stop offset="0.368" stop-color="#a2a2a2"/><stop offset="0.370" stop-color="#969696"/><stop offset="0.373" stop-color="#a4a4a4"/><stop offset="0.375" stop-color="#5c5c5c"/><stop offset="0.377" stop-color="#797979"/><stop offset="0.380" stop-color="#6b6b6b"/><stop offset="0.382" stop-color="#bebebe"/><stop offset="0.384" stop-color="#ffffff"/><stop offset="0.387" stop-color="#cbcbcb"/><stop offset="0.389" stop-color="#303030"/><stop offset="0.391" stop-color="#434343"/><stop offset="0.394" stop-color="#e7e7e7"/><stop offset="0.396" stop-color="#757575"/><stop offset="0.398" stop-color="#8a8a8a"/><stop offset="0.401" stop-color="#ffffff"/><stop offset="0.403" stop-color="#c1c1c1"/><stop offset="0.405" stop-color="#515151"/><stop offset="0.408" stop-color="#bfbfbf"/><stop offset="0.410" stop-color="#d8d8d8"/><stop offset="0.412" stop-color="#303030"/><stop offset="0.415" stop-color="#424242"/><stop offset="0.417" stop-color="#c7c7c7"/><stop offset="0.419" stop-color="#c2c2c2"/><stop offset="0.424" stop-color="#535353"/><stop offset="0.426" stop-color="#a3a3a3"/><stop offset="0.429" stop-color="#ffffff"/><stop offset="0.431" stop-color="#3f3f3f"/><stop offset="0.433" stop-color="#303030"/><stop offset="0.436" stop-color="#e8e8e8"/><stop offset="0.438" stop-color="#ffffff"/><stop offset="0.440" stop-color="#ffffff"/><stop offset="0.443" stop-color="#dcdcdc"/><stop offset="0.445" stop-color="#383838"/><stop offset="0.447" stop-color="#303030"/><stop offset="0.450" stop-color="#5c5c5c"/><stop offset="0.452" stop-color="#cbcbcb"/><stop offset="0.454" stop-color="#cfcfcf"/><stop offset="0.457" stop-color="#ffffff"/><stop offset="0.459" stop-color="#6a6a6a"/><stop offset="0.461" stop-color="#303030"/><stop offset="0.466" stop-color="#d7d7d7"/><stop offset="0.468" stop-color="#808080"/><stop offset="0.471" stop-color="#606060"/><stop offset="0.473" stop-color="#aaaaaa"/><stop offset="0.475" stop-color="#6d6d6d"/><stop offset="0.478" stop-color="#bfbfbf"/><stop offset="0.480" stop-color="#ffffff"/><stop offset="0.482" stop-color="#fefefe"/><stop offset="0.485" stop-color="#757575"/><stop offset="0.487" stop-color="#303030"/><stop offset="0.489" stop-color="#373737"/><stop offset="0.492" stop-color="#f0f0f0"/><stop offset="0.494" stop-color="#e5e5e5"/><stop offset="0.496" stop-color="#4f4f4f"/><stop offset="0.499" stop-color="#929292"/><stop offset="0.501" stop-color="#b5b5b5"/><stop offset="0.504" stop-color="#bcbcbc"/><stop offset="0.506" stop-color="#fdfdfd"/><stop offset="0.508" stop-color="#474747"/><stop offset="0.511" stop-color="#303030"/><stop offset="0.515" stop-color="#ffffff"/><stop offset="0.518" stop-color="#a7a7a7"/><stop offset="0.520" stop-color="#343434"/><stop offset="0.522" stop-color="#969696"/><stop offset="0.525" stop-color="#d9d9d9"/><stop offset="0.527" stop-color="#aaaaaa"/><stop offset="0.529" stop-color="#bdbdbd"/><stop offset="0.532" stop-color="#c7c7c7"/><stop offset="0.534" stop-color="#3b3b3b"/><stop offset="0.536" stop-color="#545454"/><stop offset="0.539" stop-color="#f7f7f7"/><stop offset="0.541" stop-color="#717171"/><stop offset="0.543" stop-color="#303030"/><stop offset="0.548" stop-color="#ffffff"/><stop offset="0.550" stop-color="#ffffff"/><stop offset="0.553" stop-color="#737373"/><stop offset="0.555" stop-color="#303030"/><stop offset="0.557" stop-color="#484848"/><stop offset="0.560" stop-color="#fbfbfb"/><stop offset="0.562" stop-color="#fdfdfd"/><stop offset="0.564" stop-color="#e1e1e1"/><stop offset="0.567" stop-color="#d0d0d0"/><stop offset="0.569" stop-color="#7e7e7e"/><stop offset="0.574" stop-color="#313131"/><stop offset="0.576" stop-color="#505050"/><stop offset="0.578" stop-color="#f2f2f2"/><stop offset="0.581" stop-color="#ffffff"/><stop offset="0.583" stop-color="#acacac"/><stop offset="0.585" stop-color="#333333"/><stop offset="0.590" stop-color="#303030"/><stop offset="0.592" stop-color="#7f7f7f"/><stop offset="0.595" stop-color="#ffffff"/><stop offset="0.597" stop-color="#676767"/><stop offset="0.599" stop-color="#303030"/><stop offset="0.602" stop-color="#737373"/><stop offset="0.604" stop-color="#ffffff"/><stop offset="0.606" stop-color="#ffffff"/><stop offset="0.609" stop-color="#c3c3c3"/><stop offset="0.611" stop-color="#323232"/><stop offset="0.613" stop-color="#303030"/><stop offset="0.616" stop-color="#515151"/><stop offset="0.618" stop-color="#686868"/><stop offset="0.623" stop-color="#ffffff"/><stop offset="0.625" stop-color="#acacac"/><stop offset="0.627" stop-color="#303030"/><stop offset="0.632" stop-color="#cecece"/><stop offset="0.637" stop-color="#cbcbcb"/><stop offset="0.641" stop-color="#434343"/><stop offset="0.644" stop-color="#848484"/><stop offset="0.646" stop-color="#b5b5b5"/><stop offset="0.648" stop-color="#545454"/><stop offset="0.651" stop-color="#303030"/><stop offset="0.653" stop-color="#707070"/><stop offset="0.655" stop-color="#dedede"/><stop offset="0.658" stop-color="#ffffff"/><stop offset="0.660" stop-color="#f1f1f1"/><stop offset="0.662" stop-color="#858585"/><stop offset="0.665" stop-color="#303030"/><stop offset="0.667" stop-color="#3a3a3a"/><stop offset="0.672" stop-color="#646464"/><stop offset="0.674" stop-color="#828282"/><stop offset="0.676" stop-color="#8f8f8f"/><stop offset="0.679" stop-color="#d6d6d6"/><stop offset="0.681" stop-color="#fdfdfd"/><stop offset="0.683" stop-color="#a6a6a6"/><stop offset="0.686" stop-color="#3a3a3a"/><stop offset="0.688" stop-color="#363636"/><stop offset="0.690" stop-color="#888888"/><stop offset="0.693" stop-color="#e6e6e6"/><stop offset="0.695" stop-color="#a7a7a7"/><stop offset="0.697" stop-color="#313131"/><stop offset="0.700" stop-color="#313131"/><stop offset="0.702" stop-color="#888888"/><stop offset="0.704" stop-color="#afafaf"/><stop offset="0.707" stop-color="#939393"/><stop offset="0.709" stop-color="#ececec"/><stop offset="0.711" stop-color="#efefef"/><stop offset="0.714" stop-color="#bfbfbf"/><stop offset="0.716" stop-color="#dcdcdc"/><stop offset="0.718" stop-color="#7e7e7e"/><stop offset="0.721" stop-color="#303030"/><stop offset="0.723" stop-color="#303030"/><stop offset="0.725" stop-color="#6d6d6d"/><stop offset="0.728" stop-color="#ececec"/><stop offset="0.730" stop-color="#9b9b9b"/><stop offset="0.732" stop-color="#9c9c9c"/><stop offset="0.735" stop-color="#b9b9b9"/><stop offset="0.737" stop-color="#aeaeae"/><stop offset="0.739" stop-color="#bcbcbc"/><stop offset="0.742" stop-color="#b4b4b4"/><stop offset="0.744" stop-color="#575757"/><stop offset="0.746" stop-color="#373737"/><stop offset="0.749" stop-color="#4f4f4f"/><stop offset="0.751" stop-color="#898989"/><stop offset="0.754" stop-color="#ffffff"/><stop offset="0.756" stop-color="#ffffff"/><stop offset="0.758" stop-color="#515151"/><stop offset="0.761" stop-color="#303030"/><stop offset="0.763" stop-color="#303030"/><stop offset="0.765" stop-color="#696969"/><stop offset="0.768" stop-color="#ffffff"/><stop offset="0.770" stop-color="#d6d6d6"/><stop offset="0.772" stop-color="#303030"/><stop offset="0.775" stop-color="#303030"/><stop offset="0.777" stop-color="#c0c0c0"/><stop offset="0.779" stop-color="#f7f7f7"/><stop offset="0.782" stop-color="#717171"/><stop offset="0.784" stop-color="#303030"/><stop offset="0.786" stop-color="#d9d9d9"/><stop offset="0.789" stop-color="#ffffff"/><stop offset="0.791" stop-color="#7f7f7f"/><stop offset="0.793" stop-color="#303030"/><stop offset="0.796" stop-color="#a7a7a7"/><stop offset="0.798" stop-color="#e5e5e5"/><stop offset="0.800" stop-color="#bbbbbb"/><stop offset="0.803" stop-color="#ffffff"/><stop offset="0.805" stop-color="#bfbfbf"/><stop offset="0.807" stop-color="#303030"/><stop offset="0.810" stop-color="#303030"/><stop offset="0.812" stop-color="#8a8a8a"/><stop offset="0.814" stop-color="#ffffff"/><stop offset="0.819" stop-color="#f6f6f6"/><stop offset="0.821" stop-color="#ffffff"/><stop offset="0.824" stop-color="#e0e0e0"/><stop offset="0.826" stop-color="#303030"/><stop offset="0.828" stop-color="#303030"/><stop offset="0.831" stop-color="#6d6d6d"/><stop offset="0.833" stop-color="#ffffff"/><stop offset="0.835" stop-color="#aeaeae"/><stop offset="0.838" stop-color="#b2b2b2"/><stop offset="0.840" stop-color="#fefefe"/><stop offset="0.842" stop-color="#ececec"/><stop offset="0.845" stop-color="#8c8c8c"/><stop offset="0.847" stop-color="#787878"/><stop offset="0.849" stop-color="#939393"/><stop offset="0.852" stop-color="#323232"/><stop offset="0.854" stop-color="#303030"/><stop offset="0.856" stop-color="#fefefe"/><stop offset="0.859" stop-color="#ffffff"/><stop offset="0.861" stop-color="#323232"/><stop offset="0.866" stop-color="#303030"/><stop offset="0.868" stop-color="#acacac"/><stop offset="0.870" stop-color="#ffffff"/><stop offset="0.873" stop-color="#ffffff"/><stop offset="0.875" stop-color="#e7e7e7"/><stop offset="0.877" stop-color="#c3c3c3"/><stop offset="0.882" stop-color="#3a3a3a"/><stop offset="0.884" stop-color="#676767"/><stop offset="0.887" stop-color="#7d7d7d"/><stop offset="0.889" stop-color="#434343"/><stop offset="0.891" stop-color="#cacaca"/><stop offset="0.894" stop-color="#ffffff"/><stop offset="0.896" stop-color="#656565"/><stop offset="0.898" stop-color="#303030"/><stop offset="0.901" stop-color="#9d9d9d"/><stop offset="0.903" stop-color="#c6c6c6"/><stop offset="0.905" stop-color="#565656"/><stop offset="0.908" stop-color="#303030"/><stop offset="0.910" stop-color="#6b6b6b"/><stop offset="0.912" stop-color="#868686"/><stop offset="0.915" stop-color="#d1d1d1"/><stop offset="0.917" stop-color="#ffffff"/><stop offset="0.919" stop-color="#ffffff"/><stop offset="0.922" stop-color="#d9d9d9"/><stop offset="0.924" stop-color="#333333"/><stop offset="0.929" stop-color="#303030"/><stop offset="0.931" stop-color="#d7d7d7"/><stop offset="0.933" stop-color="#ffffff"/><stop offset="0.936" stop-color="#888888"/><stop offset="0.938" stop-color="#3e3e3e"/><stop offset="0.940" stop-color="#d3d3d3"/><stop offset="0.945" stop-color="#d9d9d9"/><stop offset="0.947" stop-color="#ffffff"/><stop offset="0.950" stop-color="#ffffff"/><stop offset="0.952" stop-color="#3d3d3d"/><stop offset="0.954" stop-color="#303030"/><stop offset="0.957" stop-color="#303030"/><stop offset="0.959" stop-color="#494949"/><stop offset="0.961" stop-color="#ffffff"/><stop offset="0.964" stop-color="#ffffff"/><stop offset="0.966" stop-color="#8e8e8e"/><stop offset="0.968" stop-color="#303030"/><stop offset="0.973" stop-color="#ffffff"/><stop offset="0.975" stop-color="#ffffff"/><stop offset="0.978" stop-color="#dbdbdb"/><stop offset="0.980" stop-color="#666666"/><stop offset="0.982" stop-color="#393939"/><stop offset="0.985" stop-color="#313131"/><stop offset="0.987" stop-color="#414141"/><stop offset="0.989" stop-color="#fefefe"/><stop offset="0.992" stop-color="#ffffff"/><stop offset="0.994" stop-color="#303030"/><stop offset="0.996" stop-color="#303030"/><stop offset="0.999" stop-color="#484848"/></linearGradient><linearGradient id="s10" x1="0" y1="0" x2="0" y2="1"><stop offset="0.001" stop-color="#9d9d9d"/><stop offset="0.202" stop-color="#989898"/><stop offset="0.207" stop-color="#9a9a9a"/><stop offset="0.237" stop-color="#999999"/><stop offset="0.239" stop-color="#a2a2a2"/><stop offset="0.244" stop-color="#868686"/><stop offset="0.246" stop-color="#a5a5a5"/><stop offset="0.249" stop-color="#a5a5a5"/><stop offset="0.251" stop-color="#8e8e8e"/><stop offset="0.254" stop-color="#a1a1a1"/><stop offset="0.256" stop-color="#929292"/><stop offset="0.258" stop-color="#919191"/><stop offset="0.261" stop-color="#b3b3b3"/><stop offset="0.263" stop-color="#8c8c8c"/><stop offset="0.265" stop-color="#747474"/><stop offset="0.268" stop-color="#d8d8d8"/><stop offset="0.270" stop-color="#a6a6a6"/><stop offset="0.272" stop-color="#8b8b8b"/><stop offset="0.275" stop-color="#626262"/><stop offset="0.277" stop-color="#d9d9d9"/><stop offset="0.279" stop-color="#757575"/><stop offset="0.282" stop-color="#535353"/><stop offset="0.284" stop-color="#939393"/><stop offset="0.286" stop-color="#f8f8f8"/><stop offset="0.289" stop-color="#b0b0b0"/><stop offset="0.291" stop-color="#3e3e3e"/><stop offset="0.293" stop-color="#c5c5c5"/><stop offset="0.296" stop-color="#a4a4a4"/><stop offset="0.298" stop-color="#6a6a6a"/><stop offset="0.300" stop-color="#f2f2f2"/><stop offset="0.303" stop-color="#909090"/><stop offset="0.305" stop-color="#515151"/><stop offset="0.307" stop-color="#7f7f7f"/><stop offset="0.312" stop-color="#b0b0b0"/><stop offset="0.314" stop-color="#898989"/><stop offset="0.317" stop-color="#d3d3d3"/><stop offset="0.319" stop-color="#a4a4a4"/><stop offset="0.321" stop-color="#4b4b4b"/><stop offset="0.324" stop-color="#9d9d9d"/><stop offset="0.326" stop-color="#d3d3d3"/><stop offset="0.328" stop-color="#d4d4d4"/><stop offset="0.331" stop-color="#b0b0b0"/><stop offset="0.333" stop-color="#343434"/><stop offset="0.335" stop-color="#4a4a4a"/><stop offset="0.338" stop-color="#f0f0f0"/><stop offset="0.340" stop-color="#cbcbcb"/><stop offset="0.342" stop-color="#303030"/><stop offset="0.345" stop-color="#929292"/><stop offset="0.347" stop-color="#e2e2e2"/><stop offset="0.349" stop-color="#6f6f6f"/><stop offset="0.352" stop-color="#7f7f7f"/><stop offset="0.354" stop-color="#ffffff"/><stop offset="0.356" stop-color="#cdcdcd"/><stop offset="0.359" stop-color="#393939"/><stop offset="0.361" stop-color="#3a3a3a"/><stop offset="0.363" stop-color="#989898"/><stop offset="0.366" stop-color="#d0d0d0"/><stop offset="0.368" stop-color="#c4c4c4"/><stop offset="0.370" stop-color="#8b8b8b"/><stop offset="0.373" stop-color="#b2b2b2"/><stop offset="0.377" stop-color="#5a5a5a"/><stop offset="0.380" stop-color="#7e7e7e"/><stop offset="0.382" stop-color="#6a6a6a"/><stop offset="0.384" stop-color="#fcfcfc"/><stop offset="0.387" stop-color="#ffffff"/><stop offset="0.389" stop-color="#464646"/><stop offset="0.391" stop-color="#303030"/><stop offset="0.394" stop-color="#c4c4c4"/><stop offset="0.396" stop-color="#adadad"/><stop offset="0.398" stop-color="#6b6b6b"/><stop offset="0.401" stop-color="#e4e4e4"/><stop offset="0.403" stop-color="#c8c8c8"/><stop offset="0.405" stop-color="#8d8d8d"/><stop offset="0.408" stop-color="#8e8e8e"/><stop offset="0.410" stop-color="#f0f0f0"/><stop offset="0.412" stop-color="#494949"/><stop offset="0.415" stop-color="#303030"/><stop offset="0.417" stop-color="#a1a1a1"/><stop offset="0.419" stop-color="#b7b7b7"/><stop offset="0.422" stop-color="#aeaeae"/><stop offset="0.424" stop-color="#646464"/><stop offset="0.426" stop-color="#767676"/><stop offset="0.429" stop-color="#ffffff"/><stop offset="0.431" stop-color="#737373"/><stop offset="0.433" stop-color="#303030"/><stop offset="0.436" stop-color="#a3a3a3"/><stop offset="0.438" stop-color="#ffffff"/><stop offset="0.440" stop-color="#ffffff"/><stop offset="0.443" stop-color="#e3e3e3"/><stop offset="0.445" stop-color="#383838"/><stop offset="0.447" stop-color="#303030"/><stop offset="0.450" stop-color="#606060"/><stop offset="0.452" stop-color="#cfcfcf"/><stop offset="0.454" stop-color="#c1c1c1"/><stop offset="0.457" stop-color="#ffffff"/><stop offset="0.459" stop-color="#9f9f9f"/><stop offset="0.461" stop-color="#303030"/><stop offset="0.464" stop-color="#505050"/><stop offset="0.466" stop-color="#e7e7e7"/><stop offset="0.468" stop-color="#acacac"/><stop offset="0.471" stop-color="#484848"/><stop offset="0.473" stop-color="#9e9e9e"/><stop offset="0.475" stop-color="#808080"/><stop offset="0.478" stop-color="#939393"/><stop offset="0.480" stop-color="#fefefe"/><stop offset="0.482" stop-color="#ffffff"/><stop offset="0.485" stop-color="#bdbdbd"/><stop offset="0.487" stop-color="#303030"/><stop offset="0.489" stop-color="#303030"/><stop offset="0.492" stop-color="#a9a9a9"/><stop offset="0.494" stop-color="#ffffff"/><stop offset="0.496" stop-color="#7e7e7e"/><stop offset="0.499" stop-color="#5a5a5a"/><stop offset="0.501" stop-color="#b4b4b4"/><stop offset="0.504" stop-color="#949494"/><stop offset="0.506" stop-color="#f4f4f4"/><stop offset="0.508" stop-color="#eaeaea"/><stop offset="0.511" stop-color="#303030"/><stop offset="0.513" stop-color="#303030"/><stop offset="0.515" stop-color="#bfbfbf"/><stop offset="0.518" stop-color="#ffffff"/><stop offset="0.522" stop-color="#3a3a3a"/><stop offset="0.527" stop-color="#cecece"/><stop offset="0.532" stop-color="#d0d0d0"/><stop offset="0.534" stop-color="#b7b7b7"/><stop offset="0.536" stop-color="#484848"/><stop offset="0.539" stop-color="#4b4b4b"/><stop offset="0.541" stop-color="#d3d3d3"/><stop offset="0.543" stop-color="#9e9e9e"/><stop offset="0.546" stop-color="#363636"/><stop offset="0.548" stop-color="#757575"/><stop offset="0.550" stop-color="#ebebeb"/><stop offset="0.553" stop-color="#ffffff"/><stop offset="0.555" stop-color="#aeaeae"/><stop offset="0.557" stop-color="#333333"/><stop offset="0.560" stop-color="#3b3b3b"/><stop offset="0.562" stop-color="#c5c5c5"/><stop offset="0.564" stop-color="#f4f4f4"/><stop offset="0.567" stop-color="#bebebe"/><stop offset="0.569" stop-color="#e3e3e3"/><stop offset="0.571" stop-color="#b7b7b7"/><stop offset="0.574" stop-color="#616161"/><stop offset="0.576" stop-color="#363636"/><stop offset="0.578" stop-color="#404040"/><stop offset="0.581" stop-color="#cbcbcb"/><stop offset="0.583" stop-color="#ffffff"/><stop offset="0.585" stop-color="#c3c3c3"/><stop offset="0.588" stop-color="#3e3e3e"/><stop offset="0.590" stop-color="#303030"/><stop offset="0.592" stop-color="#303030"/><stop offset="0.595" stop-color="#757575"/><stop offset="0.597" stop-color="#f7f7f7"/><stop offset="0.599" stop-color="#7e7e7e"/><stop offset="0.602" stop-color="#303030"/><stop offset="0.604" stop-color="#5f5f5f"/><stop offset="0.606" stop-color="#f2f2f2"/><stop offset="0.609" stop-color="#ffffff"/><stop offset="0.611" stop-color="#dcdcdc"/><stop offset="0.613" stop-color="#494949"/><stop offset="0.616" stop-color="#303030"/><stop offset="0.618" stop-color="#343434"/><stop offset="0.620" stop-color="#676767"/><stop offset="0.623" stop-color="#d2d2d2"/><stop offset="0.625" stop-color="#ffffff"/><stop offset="0.627" stop-color="#d6d6d6"/><stop offset="0.630" stop-color="#424242"/><stop offset="0.632" stop-color="#555555"/><stop offset="0.634" stop-color="#d8d8d8"/><stop offset="0.639" stop-color="#b9b9b9"/><stop offset="0.641" stop-color="#b4b4b4"/><stop offset="0.644" stop-color="#515151"/><stop offset="0.646" stop-color="#525252"/><stop offset="0.648" stop-color="#b6b6b6"/><stop offset="0.651" stop-color="#8a8a8a"/><stop offset="0.653" stop-color="#3c3c3c"/><stop offset="0.655" stop-color="#343434"/><stop offset="0.658" stop-color="#8c8c8c"/><stop offset="0.660" stop-color="#fdfdfd"/><stop offset="0.662" stop-color="#ffffff"/><stop offset="0.665" stop-color="#a7a7a7"/><stop offset="0.667" stop-color="#373737"/><stop offset="0.669" stop-color="#4c4c4c"/><stop offset="0.672" stop-color="#303030"/><stop offset="0.674" stop-color="#474747"/><stop offset="0.676" stop-color="#939393"/><stop offset="0.679" stop-color="#9c9c9c"/><stop offset="0.681" stop-color="#eaeaea"/><stop offset="0.683" stop-color="#fbfbfb"/><stop offset="0.686" stop-color="#767676"/><stop offset="0.688" stop-color="#515151"/><stop offset="0.693" stop-color="#828282"/><stop offset="0.695" stop-color="#bcbcbc"/><stop offset="0.697" stop-color="#6d6d6d"/><stop offset="0.700" stop-color="#323232"/><stop offset="0.702" stop-color="#464646"/><stop offset="0.704" stop-color="#7d7d7d"/><stop offset="0.707" stop-color="#979797"/><stop offset="0.709" stop-color="#fbfbfb"/><stop offset="0.711" stop-color="#ffffff"/><stop offset="0.714" stop-color="#747474"/><stop offset="0.718" stop-color="#f0f0f0"/><stop offset="0.721" stop-color="#6a6a6a"/><stop offset="0.723" stop-color="#303030"/><stop offset="0.725" stop-color="#303030"/><stop offset="0.728" stop-color="#e4e4e4"/><stop offset="0.730" stop-color="#e8e8e8"/><stop offset="0.732" stop-color="#777777"/><stop offset="0.735" stop-color="#b7b7b7"/><stop offset="0.737" stop-color="#a5a5a5"/><stop offset="0.739" stop-color="#a1a1a1"/><stop offset="0.742" stop-color="#e4e4e4"/><stop offset="0.744" stop-color="#9c9c9c"/><stop offset="0.746" stop-color="#303030"/><stop offset="0.749" stop-color="#393939"/><stop offset="0.751" stop-color="#878787"/><stop offset="0.754" stop-color="#ededed"/><stop offset="0.756" stop-color="#ffffff"/><stop offset="0.758" stop-color="#818181"/><stop offset="0.761" stop-color="#303030"/><stop offset="0.763" stop-color="#3e3e3e"/><stop offset="0.765" stop-color="#363636"/><stop offset="0.768" stop-color="#f2f2f2"/><stop offset="0.770" stop-color="#ffffff"/><stop offset="0.772" stop-color="#303030"/><stop offset="0.775" stop-color="#303030"/><stop offset="0.777" stop-color="#a0a0a0"/><stop offset="0.779" stop-color="#eaeaea"/><stop offset="0.782" stop-color="#b4b4b4"/><stop offset="0.784" stop-color="#313131"/><stop offset="0.786" stop-color="#828282"/><stop offset="0.789" stop-color="#ffffff"/><stop offset="0.791" stop-color="#bebebe"/><stop offset="0.793" stop-color="#4e4e4e"/><stop offset="0.796" stop-color="#9a9a9a"/><stop offset="0.798" stop-color="#8f8f8f"/><stop offset="0.800" stop-color="#b2b2b2"/><stop offset="0.803" stop-color="#ffffff"/><stop offset="0.805" stop-color="#aaaaaa"/><stop offset="0.807" stop-color="#303030"/><stop offset="0.810" stop-color="#303030"/><stop offset="0.812" stop-color="#cccccc"/><stop offset="0.814" stop-color="#ffffff"/><stop offset="0.817" stop-color="#ededed"/><stop offset="0.819" stop-color="#ffffff"/><stop offset="0.821" stop-color="#ffffff"/><stop offset="0.824" stop-color="#7d7d7d"/><stop offset="0.826" stop-color="#303030"/><stop offset="0.828" stop-color="#303030"/><stop offset="0.831" stop-color="#d8d8d8"/><stop offset="0.833" stop-color="#ffffff"/><stop offset="0.835" stop-color="#a3a3a3"/><stop offset="0.838" stop-color="#a4a4a4"/><stop offset="0.840" stop-color="#d6d6d6"/><stop offset="0.842" stop-color="#c7c7c7"/><stop offset="0.845" stop-color="#a7a7a7"/><stop offset="0.849" stop-color="#7e7e7e"/><stop offset="0.852" stop-color="#373737"/><stop offset="0.854" stop-color="#323232"/><stop offset="0.856" stop-color="#dfdfdf"/><stop offset="0.859" stop-color="#f4f4f4"/><stop offset="0.861" stop-color="#414141"/><stop offset="0.863" stop-color="#303030"/><stop offset="0.866" stop-color="#303030"/><stop offset="0.868" stop-color="#888888"/><stop offset="0.870" stop-color="#f8f8f8"/><stop offset="0.875" stop-color="#fcfcfc"/><stop offset="0.877" stop-color="#e9e9e9"/><stop offset="0.880" stop-color="#9d9d9d"/><stop offset="0.882" stop-color="#303030"/><stop offset="0.884" stop-color="#303030"/><stop offset="0.887" stop-color="#737373"/><stop offset="0.889" stop-color="#a0a0a0"/><stop offset="0.891" stop-color="#b9b9b9"/><stop offset="0.894" stop-color="#ffffff"/><stop offset="0.896" stop-color="#dbdbdb"/><stop offset="0.898" stop-color="#333333"/><stop offset="0.901" stop-color="#343434"/><stop offset="0.903" stop-color="#989898"/><stop offset="0.905" stop-color="#a7a7a7"/><stop offset="0.908" stop-color="#424242"/><stop offset="0.910" stop-color="#717171"/><stop offset="0.912" stop-color="#b1b1b1"/><stop offset="0.915" stop-color="#7a7a7a"/><stop offset="0.917" stop-color="#acacac"/><stop offset="0.919" stop-color="#ffffff"/><stop offset="0.922" stop-color="#ffffff"/><stop offset="0.924" stop-color="#c0c0c0"/><stop offset="0.926" stop-color="#303030"/><stop offset="0.931" stop-color="#343434"/><stop offset="0.933" stop-color="#e6e6e6"/><stop offset="0.936" stop-color="#ffffff"/><stop offset="0.938" stop-color="#5e5e5e"/><stop offset="0.940" stop-color="#505050"/><stop offset="0.943" stop-color="#f3f3f3"/><stop offset="0.945" stop-color="#efefef"/><stop offset="0.950" stop-color="#fefefe"/><stop offset="0.952" stop-color="#b4b4b4"/><stop offset="0.954" stop-color="#303030"/><stop offset="0.959" stop-color="#303030"/><stop offset="0.961" stop-color="#fcfcfc"/><stop offset="0.964" stop-color="#ffffff"/><stop offset="0.966" stop-color="#e6e6e6"/><stop offset="0.968" stop-color="#303030"/><stop offset="0.971" stop-color="#505050"/><stop offset="0.973" stop-color="#ffffff"/><stop offset="0.975" stop-color="#ffffff"/><stop offset="0.978" stop-color="#e5e5e5"/><stop offset="0.980" stop-color="#4f4f4f"/><stop offset="0.982" stop-color="#303030"/><stop offset="0.985" stop-color="#303030"/><stop offset="0.987" stop-color="#777777"/><stop offset="0.989" stop-color="#ffffff"/><stop offset="0.992" stop-color="#c4c4c4"/><stop offset="0.994" stop-color="#303030"/><stop offset="0.996" stop-color="#303030"/><stop offset="0.999" stop-color="#8c8c8c"/></linearGradient><linearGradient id="s11" x1="0" y1="0" x2="0" y2="1"><stop offset="0.001" stop-color="#9d9d9d"/><stop offset="0.242" stop-color="#9c9c9c"/><stop offset="0.244" stop-color="#959595"/><stop offset="0.249" stop-color="#9e9e9e"/><stop offset="0.254" stop-color="#999999"/><stop offset="0.256" stop-color="#9d9d9d"/><stop offset="0.258" stop-color="#929292"/><stop offset="0.261" stop-color="#9e9e9e"/><stop offset="0.263" stop-color="#9f9f9f"/><stop offset="0.265" stop-color="#8d8d8d"/><stop offset="0.268" stop-color="#949494"/><stop offset="0.270" stop-color="#b5b5b5"/><stop offset="0.275" stop-color="#7f7f7f"/><stop offset="0.277" stop-color="#9e9e9e"/><stop offset="0.279" stop-color="#a9a9a9"/><stop offset="0.282" stop-color="#7b7b7b"/><stop offset="0.284" stop-color="#7b7b7b"/><stop offset="0.286" stop-color="#a5a5a5"/><stop offset="0.289" stop-color="#dedede"/><stop offset="0.291" stop-color="#8f8f8f"/><stop offset="0.293" stop-color="#6b6b6b"/><stop offset="0.296" stop-color="#bdbdbd"/><stop offset="0.298" stop-color="#8f8f8f"/><stop offset="0.300" stop-color="#868686"/><stop offset="0.303" stop-color="#e8e8e8"/><stop offset="0.305" stop-color="#888888"/><stop offset="0.307" stop-color="#575757"/><stop offset="0.310" stop-color="#737373"/><stop offset="0.312" stop-color="#adadad"/><stop offset="0.317" stop-color="#9f9f9f"/><stop offset="0.319" stop-color="#cecece"/><stop offset="0.321" stop-color="#858585"/><stop offset="0.324" stop-color="#565656"/><stop offset="0.326" stop-color="#a1a1a1"/><stop offset="0.328" stop-color="#dedede"/><stop offset="0.331" stop-color="#cdcdcd"/><stop offset="0.333" stop-color="#a1a1a1"/><stop offset="0.335" stop-color="#343434"/><stop offset="0.338" stop-color="#595959"/><stop offset="0.340" stop-color="#f4f4f4"/><stop offset="0.342" stop-color="#c6c6c6"/><stop offset="0.345" stop-color="#303030"/><stop offset="0.347" stop-color="#939393"/><stop offset="0.349" stop-color="#d4d4d4"/><stop offset="0.352" stop-color="#7b7b7b"/><stop offset="0.354" stop-color="#aaaaaa"/><stop offset="0.356" stop-color="#fefefe"/><stop offset="0.359" stop-color="#b5b5b5"/><stop offset="0.361" stop-color="#313131"/><stop offset="0.363" stop-color="#3f3f3f"/><stop offset="0.366" stop-color="#cecece"/><stop offset="0.368" stop-color="#d7d7d7"/><stop offset="0.370" stop-color="#9e9e9e"/><stop offset="0.373" stop-color="#9e9e9e"/><stop offset="0.375" stop-color="#b0b0b0"/><stop offset="0.377" stop-color="#5f5f5f"/><stop offset="0.380" stop-color="#707070"/><stop offset="0.382" stop-color="#6e6e6e"/><stop offset="0.387" stop-color="#ffffff"/><stop offset="0.391" stop-color="#303030"/><stop offset="0.396" stop-color="#c9c9c9"/><stop offset="0.398" stop-color="#7d7d7d"/><stop offset="0.401" stop-color="#afafaf"/><stop offset="0.403" stop-color="#aaaaaa"/><stop offset="0.405" stop-color="#cacaca"/><stop offset="0.408" stop-color="#898989"/><stop offset="0.410" stop-color="#d7d7d7"/><stop offset="0.415" stop-color="#303030"/><stop offset="0.417" stop-color="#797979"/><stop offset="0.419" stop-color="#aeaeae"/><stop offset="0.422" stop-color="#cdcdcd"/><stop offset="0.424" stop-color="#707070"/><stop offset="0.426" stop-color="#646464"/><stop offset="0.429" stop-color="#f8f8f8"/><stop offset="0.433" stop-color="#303030"/><stop offset="0.436" stop-color="#888888"/><stop offset="0.438" stop-color="#ffffff"/><stop offset="0.440" stop-color="#ffffff"/><stop offset="0.443" stop-color="#cfcfcf"/><stop offset="0.445" stop-color="#303030"/><stop offset="0.447" stop-color="#303030"/><stop offset="0.450" stop-color="#838383"/><stop offset="0.452" stop-color="#c6c6c6"/><stop offset="0.454" stop-color="#c1c1c1"/><stop offset="0.457" stop-color="#ffffff"/><stop offset="0.459" stop-color="#a2a2a2"/><stop offset="0.461" stop-color="#303030"/><stop offset="0.464" stop-color="#444444"/><stop offset="0.466" stop-color="#fcfcfc"/><stop offset="0.468" stop-color="#bfbfbf"/><stop offset="0.471" stop-color="#414141"/><stop offset="0.473" stop-color="#979797"/><stop offset="0.475" stop-color="#939393"/><stop offset="0.478" stop-color="#818181"/><stop offset="0.480" stop-color="#eaeaea"/><stop offset="0.482" stop-color="#ffffff"/><stop offset="0.485" stop-color="#dbdbdb"/><stop offset="0.487" stop-color="#303030"/><stop offset="0.489" stop-color="#303030"/><stop offset="0.492" stop-color="#6c6c6c"/><stop offset="0.494" stop-color="#ffffff"/><stop offset="0.496" stop-color="#cacaca"/><stop offset="0.499" stop-color="#474747"/><stop offset="0.501" stop-color="#8e8e8e"/><stop offset="0.504" stop-color="#969696"/><stop offset="0.506" stop-color="#b2b2b2"/><stop offset="0.508" stop-color="#ffffff"/><stop offset="0.511" stop-color="#b8b8b8"/><stop offset="0.513" stop-color="#303030"/><stop offset="0.515" stop-color="#313131"/><stop offset="0.518" stop-color="#c3c3c3"/><stop offset="0.520" stop-color="#ffffff"/><stop offset="0.522" stop-color="#aeaeae"/><stop offset="0.525" stop-color="#3a3a3a"/><stop offset="0.527" stop-color="#585858"/><stop offset="0.529" stop-color="#c6c6c6"/><stop offset="0.532" stop-color="#f6f6f6"/><stop offset="0.534" stop-color="#dedede"/><stop offset="0.536" stop-color="#b9b9b9"/><stop offset="0.539" stop-color="#696969"/><stop offset="0.541" stop-color="#353535"/><stop offset="0.543" stop-color="#8b8b8b"/><stop offset="0.546" stop-color="#cecece"/><stop offset="0.548" stop-color="#656565"/><stop offset="0.550" stop-color="#474747"/><stop offset="0.553" stop-color="#b3b3b3"/><stop offset="0.555" stop-color="#fcfcfc"/><stop offset="0.557" stop-color="#f2f2f2"/><stop offset="0.560" stop-color="#757575"/><stop offset="0.562" stop-color="#303030"/><stop offset="0.564" stop-color="#838383"/><stop offset="0.567" stop-color="#fafafa"/><stop offset="0.569" stop-color="#bababa"/><stop offset="0.571" stop-color="#d7d7d7"/><stop offset="0.574" stop-color="#e7e7e7"/><stop offset="0.576" stop-color="#818181"/><stop offset="0.578" stop-color="#3e3e3e"/><stop offset="0.581" stop-color="#303030"/><stop offset="0.583" stop-color="#929292"/><stop offset="0.585" stop-color="#fefefe"/><stop offset="0.588" stop-color="#e8e8e8"/><stop offset="0.590" stop-color="#626262"/><stop offset="0.592" stop-color="#303030"/><stop offset="0.595" stop-color="#303030"/><stop offset="0.597" stop-color="#515151"/><stop offset="0.599" stop-color="#cecece"/><stop offset="0.602" stop-color="#a3a3a3"/><stop offset="0.604" stop-color="#383838"/><stop offset="0.606" stop-color="#383838"/><stop offset="0.609" stop-color="#c1c1c1"/><stop offset="0.611" stop-color="#ffffff"/><stop offset="0.613" stop-color="#fbfbfb"/><stop offset="0.616" stop-color="#828282"/><stop offset="0.618" stop-color="#303030"/><stop offset="0.620" stop-color="#303030"/><stop offset="0.623" stop-color="#585858"/><stop offset="0.625" stop-color="#e8e8e8"/><stop offset="0.627" stop-color="#ffffff"/><stop offset="0.630" stop-color="#fcfcfc"/><stop offset="0.632" stop-color="#767676"/><stop offset="0.634" stop-color="#323232"/><stop offset="0.637" stop-color="#b6b6b6"/><stop offset="0.639" stop-color="#d9d9d9"/><stop offset="0.641" stop-color="#9c9c9c"/><stop offset="0.644" stop-color="#d1d1d1"/><stop offset="0.646" stop-color="#6c6c6c"/><stop offset="0.648" stop-color="#373737"/><stop offset="0.651" stop-color="#9d9d9d"/><stop offset="0.653" stop-color="#d8d8d8"/><stop offset="0.655" stop-color="#656565"/><stop offset="0.658" stop-color="#303030"/><stop offset="0.660" stop-color="#505050"/><stop offset="0.662" stop-color="#ffffff"/><stop offset="0.665" stop-color="#ffffff"/><stop offset="0.667" stop-color="#b8b8b8"/><stop offset="0.669" stop-color="#515151"/><stop offset="0.672" stop-color="#343434"/><stop offset="0.674" stop-color="#303030"/><stop offset="0.676" stop-color="#616161"/><stop offset="0.679" stop-color="#b0b0b0"/><stop offset="0.681" stop-color="#b6b6b6"/><stop offset="0.683" stop-color="#f0f0f0"/><stop offset="0.688" stop-color="#7c7c7c"/><stop offset="0.690" stop-color="#888888"/><stop offset="0.693" stop-color="#4f4f4f"/><stop offset="0.695" stop-color="#707070"/><stop offset="0.697" stop-color="#aaaaaa"/><stop offset="0.700" stop-color="#646464"/><stop offset="0.702" stop-color="#333333"/><stop offset="0.704" stop-color="#3f3f3f"/><stop offset="0.709" stop-color="#ffffff"/><stop offset="0.711" stop-color="#fcfcfc"/><stop offset="0.714" stop-color="#5e5e5e"/><stop offset="0.716" stop-color="#787878"/><stop offset="0.718" stop-color="#ffffff"/><stop offset="0.721" stop-color="#c8c8c8"/><stop offset="0.723" stop-color="#303030"/><stop offset="0.725" stop-color="#303030"/><stop offset="0.730" stop-color="#ffffff"/><stop offset="0.732" stop-color="#878787"/><stop offset="0.737" stop-color="#acacac"/><stop offset="0.739" stop-color="#8f8f8f"/><stop offset="0.742" stop-color="#e2e2e2"/><stop offset="0.744" stop-color="#d9d9d9"/><stop offset="0.746" stop-color="#333333"/><stop offset="0.749" stop-color="#303030"/><stop offset="0.751" stop-color="#898989"/><stop offset="0.754" stop-color="#c5c5c5"/><stop offset="0.756" stop-color="#f1f1f1"/><stop offset="0.758" stop-color="#bababa"/><stop offset="0.761" stop-color="#373737"/><stop offset="0.763" stop-color="#696969"/><stop offset="0.765" stop-color="#4e4e4e"/><stop offset="0.768" stop-color="#7b7b7b"/><stop offset="0.770" stop-color="#ffffff"/><stop offset="0.772" stop-color="#575757"/><stop offset="0.775" stop-color="#303030"/><stop offset="0.777" stop-color="#5f5f5f"/><stop offset="0.779" stop-color="#d1d1d1"/><stop offset="0.782" stop-color="#ededed"/><stop offset="0.784" stop-color="#4e4e4e"/><stop offset="0.786" stop-color="#383838"/><stop offset="0.789" stop-color="#f6f6f6"/><stop offset="0.791" stop-color="#fefefe"/><stop offset="0.793" stop-color="#888888"/><stop offset="0.796" stop-color="#464646"/><stop offset="0.798" stop-color="#6e6e6e"/><stop offset="0.800" stop-color="#d1d1d1"/><stop offset="0.803" stop-color="#ffffff"/><stop offset="0.805" stop-color="#919191"/><stop offset="0.807" stop-color="#303030"/><stop offset="0.810" stop-color="#303030"/><stop offset="0.812" stop-color="#d8d8d8"/><stop offset="0.814" stop-color="#ffffff"/><stop offset="0.817" stop-color="#efefef"/><stop offset="0.819" stop-color="#f1f1f1"/><stop offset="0.821" stop-color="#e8e8e8"/><stop offset="0.824" stop-color="#4e4e4e"/><stop offset="0.826" stop-color="#303030"/><stop offset="0.828" stop-color="#303030"/><stop offset="0.831" stop-color="#f6f6f6"/><stop offset="0.833" stop-color="#ffffff"/><stop offset="0.835" stop-color="#8e8e8e"/><stop offset="0.838" stop-color="#666666"/><stop offset="0.840" stop-color="#aaaaaa"/><stop offset="0.842" stop-color="#e3e3e3"/><stop offset="0.845" stop-color="#cbcbcb"/><stop offset="0.847" stop-color="#828282"/><stop offset="0.849" stop-color="#7c7c7c"/><stop offset="0.852" stop-color="#6a6a6a"/><stop offset="0.854" stop-color="#323232"/><stop offset="0.856" stop-color="#777777"/><stop offset="0.859" stop-color="#d2d2d2"/><stop offset="0.861" stop-color="#929292"/><stop offset="0.863" stop-color="#323232"/><stop offset="0.866" stop-color="#303030"/><stop offset="0.868" stop-color="#525252"/><stop offset="0.870" stop-color="#d4d4d4"/><stop offset="0.873" stop-color="#fdfdfd"/><stop offset="0.877" stop-color="#ffffff"/><stop offset="0.880" stop-color="#c0c0c0"/><stop offset="0.882" stop-color="#3c3c3c"/><stop offset="0.884" stop-color="#303030"/><stop offset="0.887" stop-color="#393939"/><stop offset="0.889" stop-color="#cbcbcb"/><stop offset="0.891" stop-color="#f1f1f1"/><stop offset="0.894" stop-color="#eaeaea"/><stop offset="0.896" stop-color="#f1f1f1"/><stop offset="0.898" stop-color="#9e9e9e"/><stop offset="0.901" stop-color="#313131"/><stop offset="0.903" stop-color="#333333"/><stop offset="0.905" stop-color="#939393"/><stop offset="0.908" stop-color="#999999"/><stop offset="0.910" stop-color="#6a6a6a"/><stop offset="0.912" stop-color="#b7b7b7"/><stop offset="0.915" stop-color="#b9b9b9"/><stop offset="0.917" stop-color="#4c4c4c"/><stop offset="0.919" stop-color="#8c8c8c"/><stop offset="0.922" stop-color="#ffffff"/><stop offset="0.924" stop-color="#ffffff"/><stop offset="0.926" stop-color="#919191"/><stop offset="0.929" stop-color="#303030"/><stop offset="0.931" stop-color="#303030"/><stop offset="0.933" stop-color="#3c3c3c"/><stop offset="0.936" stop-color="#d4d4d4"/><stop offset="0.938" stop-color="#f8f8f8"/><stop offset="0.940" stop-color="#484848"/><stop offset="0.943" stop-color="#7b7b7b"/><stop offset="0.945" stop-color="#ffffff"/><stop offset="0.947" stop-color="#ededed"/><stop offset="0.950" stop-color="#bbbbbb"/><stop offset="0.952" stop-color="#f0f0f0"/><stop offset="0.954" stop-color="#818181"/><stop offset="0.957" stop-color="#303030"/><stop offset="0.959" stop-color="#303030"/><stop offset="0.961" stop-color="#a2a2a2"/><stop offset="0.964" stop-color="#ffffff"/><stop offset="0.966" stop-color="#ffffff"/><stop offset="0.968" stop-color="#303030"/><stop offset="0.971" stop-color="#383838"/><stop offset="0.973" stop-color="#ffffff"/><stop offset="0.975" stop-color="#ffffff"/><stop offset="0.978" stop-color="#cccccc"/><stop offset="0.980" stop-color="#313131"/><stop offset="0.982" stop-color="#303030"/><stop offset="0.985" stop-color="#3e3e3e"/><stop offset="0.987" stop-color="#ebebeb"/><stop offset="0.989" stop-color="#ffffff"/><stop offset="0.992" stop-color="#4f4f4f"/><stop offset="0.994" stop-color="#303030"/><stop offset="0.996" stop-color="#303030"/><stop offset="0.999" stop-color="#e8e8e8"/></linearGradient><linearGradient id="s12" x1="0" y1="0" x2="0" y2="1"><stop offset="0.001" stop-color="#9d9d9d"/><stop offset="0.265" stop-color="#9a9a9a"/><stop offset="0.268" stop-color="#959595"/><stop offset="0.272" stop-color="#a2a2a2"/><stop offset="0.277" stop-color="#919191"/><stop offset="0.279" stop-color="#9f9f9f"/><stop offset="0.284" stop-color="#8f8f8f"/><stop offset="0.286" stop-color="#909090"/><stop offset="0.291" stop-color="#b3b3b3"/><stop offset="0.293" stop-color="#939393"/><stop offset="0.296" stop-color="#898989"/><stop offset="0.298" stop-color="#a5a5a5"/><stop offset="0.300" stop-color="#959595"/><stop offset="0.303" stop-color="#909090"/><stop offset="0.305" stop-color="#bfbfbf"/><stop offset="0.310" stop-color="#6c6c6c"/><stop offset="0.312" stop-color="#7f7f7f"/><stop offset="0.314" stop-color="#a8a8a8"/><stop offset="0.319" stop-color="#a4a4a4"/><stop offset="0.321" stop-color="#b5b5b5"/><stop offset="0.326" stop-color="#6a6a6a"/><stop offset="0.328" stop-color="#979797"/><stop offset="0.331" stop-color="#d2d2d2"/><stop offset="0.333" stop-color="#c0c0c0"/><stop offset="0.335" stop-color="#9c9c9c"/><stop offset="0.338" stop-color="#3f3f3f"/><stop offset="0.340" stop-color="#646464"/><stop offset="0.342" stop-color="#ebebeb"/><stop offset="0.345" stop-color="#c8c8c8"/><stop offset="0.347" stop-color="#323232"/><stop offset="0.349" stop-color="#949494"/><stop offset="0.352" stop-color="#c3c3c3"/><stop offset="0.354" stop-color="#929292"/><stop offset="0.356" stop-color="#b0b0b0"/><stop offset="0.359" stop-color="#fdfdfd"/><stop offset="0.361" stop-color="#848484"/><stop offset="0.363" stop-color="#303030"/><stop offset="0.368" stop-color="#e8e8e8"/><stop offset="0.370" stop-color="#a9a9a9"/><stop offset="0.373" stop-color="#9a9a9a"/><stop offset="0.375" stop-color="#b1b1b1"/><stop offset="0.377" stop-color="#797979"/><stop offset="0.380" stop-color="#636363"/><stop offset="0.384" stop-color="#929292"/><stop offset="0.387" stop-color="#ffffff"/><stop offset="0.389" stop-color="#b6b6b6"/><stop offset="0.391" stop-color="#303030"/><stop offset="0.394" stop-color="#646464"/><stop offset="0.396" stop-color="#c1c1c1"/><stop offset="0.401" stop-color="#787878"/><stop offset="0.403" stop-color="#999999"/><stop offset="0.405" stop-color="#f8f8f8"/><stop offset="0.408" stop-color="#818181"/><stop offset="0.410" stop-color="#c5c5c5"/><stop offset="0.412" stop-color="#a3a3a3"/><stop offset="0.415" stop-color="#303030"/><stop offset="0.417" stop-color="#565656"/><stop offset="0.419" stop-color="#bababa"/><stop offset="0.422" stop-color="#dddddd"/><stop offset="0.424" stop-color="#747474"/><stop offset="0.426" stop-color="#5c5c5c"/><stop offset="0.429" stop-color="#e2e2e2"/><stop offset="0.431" stop-color="#ababab"/><stop offset="0.433" stop-color="#303030"/><stop offset="0.436" stop-color="#7d7d7d"/><stop offset="0.438" stop-color="#ffffff"/><stop offset="0.440" stop-color="#ffffff"/><stop offset="0.443" stop-color="#a7a7a7"/><stop offset="0.445" stop-color="#303030"/><stop offset="0.447" stop-color="#313131"/><stop offset="0.450" stop-color="#8f8f8f"/><stop offset="0.452" stop-color="#b8b8b8"/><stop offset="0.454" stop-color="#cbcbcb"/><stop offset="0.457" stop-color="#fdfdfd"/><stop offset="0.459" stop-color="#8f8f8f"/><stop offset="0.461" stop-color="#303030"/><stop offset="0.464" stop-color="#5b5b5b"/><stop offset="0.466" stop-color="#ffffff"/><stop offset="0.468" stop-color="#b7b7b7"/><stop offset="0.471" stop-color="#3d3d3d"/><stop offset="0.473" stop-color="#9a9a9a"/><stop offset="0.475" stop-color="#9d9d9d"/><stop offset="0.478" stop-color="#707070"/><stop offset="0.480" stop-color="#d8d8d8"/><stop offset="0.482" stop-color="#ffffff"/><stop offset="0.485" stop-color="#d6d6d6"/><stop offset="0.487" stop-color="#343434"/><stop offset="0.489" stop-color="#303030"/><stop offset="0.492" stop-color="#585858"/><stop offset="0.494" stop-color="#ffffff"/><stop offset="0.496" stop-color="#f2f2f2"/><stop offset="0.499" stop-color="#636363"/><stop offset="0.501" stop-color="#636363"/><stop offset="0.504" stop-color="#8b8b8b"/><stop offset="0.506" stop-color="#a0a0a0"/><stop offset="0.508" stop-color="#f9f9f9"/><stop offset="0.511" stop-color="#ffffff"/><stop offset="0.513" stop-color="#686868"/><stop offset="0.515" stop-color="#303030"/><stop offset="0.518" stop-color="#333333"/><stop offset="0.520" stop-color="#cacaca"/><stop offset="0.522" stop-color="#ffffff"/><stop offset="0.525" stop-color="#c2c2c2"/><stop offset="0.527" stop-color="#414141"/><stop offset="0.529" stop-color="#3f3f3f"/><stop offset="0.532" stop-color="#ababab"/><stop offset="0.534" stop-color="#fcfcfc"/><stop offset="0.536" stop-color="#f0f0f0"/><stop offset="0.539" stop-color="#c2c2c2"/><stop offset="0.543" stop-color="#4b4b4b"/><stop offset="0.546" stop-color="#484848"/><stop offset="0.548" stop-color="#b0b0b0"/><stop offset="0.550" stop-color="#b3b3b3"/><stop offset="0.553" stop-color="#4f4f4f"/><stop offset="0.555" stop-color="#636363"/><stop offset="0.557" stop-color="#cccccc"/><stop offset="0.560" stop-color="#ffffff"/><stop offset="0.562" stop-color="#cdcdcd"/><stop offset="0.564" stop-color="#4f4f4f"/><stop offset="0.567" stop-color="#3c3c3c"/><stop offset="0.569" stop-color="#b9b9b9"/><stop offset="0.571" stop-color="#d4d4d4"/><stop offset="0.574" stop-color="#bababa"/><stop offset="0.576" stop-color="#fbfbfb"/><stop offset="0.578" stop-color="#bababa"/><stop offset="0.581" stop-color="#535353"/><stop offset="0.583" stop-color="#343434"/><stop offset="0.585" stop-color="#525252"/><stop offset="0.588" stop-color="#dbdbdb"/><stop offset="0.590" stop-color="#fefefe"/><stop offset="0.592" stop-color="#a0a0a0"/><stop offset="0.595" stop-color="#343434"/><stop offset="0.597" stop-color="#303030"/><stop offset="0.599" stop-color="#3b3b3b"/><stop offset="0.602" stop-color="#828282"/><stop offset="0.604" stop-color="#bbbbbb"/><stop offset="0.606" stop-color="#5e5e5e"/><stop offset="0.609" stop-color="#303030"/><stop offset="0.611" stop-color="#909090"/><stop offset="0.613" stop-color="#ffffff"/><stop offset="0.616" stop-color="#ffffff"/><stop offset="0.618" stop-color="#a2a2a2"/><stop offset="0.620" stop-color="#303030"/><stop offset="0.623" stop-color="#303030"/><stop offset="0.625" stop-color="#6e6e6e"/><stop offset="0.627" stop-color="#ffffff"/><stop offset="0.632" stop-color="#ffffff"/><stop offset="0.634" stop-color="#464646"/><stop offset="0.637" stop-color="#313131"/><stop offset="0.639" stop-color="#eeeeee"/><stop offset="0.641" stop-color="#9b9b9b"/><stop offset="0.644" stop-color="#bfbfbf"/><stop offset="0.646" stop-color="#b7b7b7"/><stop offset="0.648" stop-color="#303030"/><stop offset="0.651" stop-color="#5c5c5c"/><stop offset="0.653" stop-color="#ffffff"/><stop offset="0.655" stop-color="#afafaf"/><stop offset="0.658" stop-color="#303030"/><stop offset="0.660" stop-color="#303030"/><stop offset="0.662" stop-color="#ffffff"/><stop offset="0.665" stop-color="#ffffff"/><stop offset="0.667" stop-color="#e5e5e5"/><stop offset="0.669" stop-color="#484848"/><stop offset="0.672" stop-color="#303030"/><stop offset="0.674" stop-color="#303030"/><stop offset="0.676" stop-color="#9a9a9a"/><stop offset="0.679" stop-color="#b6b6b6"/><stop offset="0.681" stop-color="#ababab"/><stop offset="0.683" stop-color="#dbdbdb"/><stop offset="0.688" stop-color="#a3a3a3"/><stop offset="0.690" stop-color="#5a5a5a"/><stop offset="0.693" stop-color="#303030"/><stop offset="0.695" stop-color="#a3a3a3"/><stop offset="0.697" stop-color="#c1c1c1"/><stop offset="0.700" stop-color="#464646"/><stop offset="0.702" stop-color="#303030"/><stop offset="0.704" stop-color="#7e7e7e"/><stop offset="0.707" stop-color="#f5f5f5"/><stop offset="0.709" stop-color="#f9f9f9"/><stop offset="0.711" stop-color="#aaaaaa"/><stop offset="0.714" stop-color="#3b3b3b"/><stop offset="0.716" stop-color="#b7b7b7"/><stop offset="0.718" stop-color="#ffffff"/><stop offset="0.721" stop-color="#9e9e9e"/><stop offset="0.723" stop-color="#303030"/><stop offset="0.725" stop-color="#303030"/><stop offset="0.728" stop-color="#a3a3a3"/><stop offset="0.730" stop-color="#ffffff"/><stop offset="0.732" stop-color="#8f8f8f"/><stop offset="0.735" stop-color="#858585"/><stop offset="0.737" stop-color="#aaaaaa"/><stop offset="0.739" stop-color="#979797"/><stop offset="0.742" stop-color="#d6d6d6"/><stop offset="0.744" stop-color="#e8e8e8"/><stop offset="0.746" stop-color="#5f5f5f"/><stop offset="0.749" stop-color="#303030"/><stop offset="0.751" stop-color="#777777"/><stop offset="0.754" stop-color="#b1b1b1"/><stop offset="0.756" stop-color="#adadad"/><stop offset="0.758" stop-color="#d4d4d4"/><stop offset="0.761" stop-color="#848484"/><stop offset="0.763" stop-color="#6f6f6f"/><stop offset="0.765" stop-color="#898989"/><stop offset="0.768" stop-color="#313131"/><stop offset="0.770" stop-color="#a8a8a8"/><stop offset="0.772" stop-color="#efefef"/><stop offset="0.775" stop-color="#383838"/><stop offset="0.777" stop-color="#303030"/><stop offset="0.779" stop-color="#888888"/><stop offset="0.782" stop-color="#ffffff"/><stop offset="0.784" stop-color="#bebebe"/><stop offset="0.786" stop-color="#303030"/><stop offset="0.789" stop-color="#656565"/><stop offset="0.791" stop-color="#ffffff"/><stop offset="0.793" stop-color="#f3f3f3"/><stop offset="0.796" stop-color="#303030"/><stop offset="0.798" stop-color="#414141"/><stop offset="0.800" stop-color="#a9a9a9"/><stop offset="0.803" stop-color="#eaeaea"/><stop offset="0.805" stop-color="#fefefe"/><stop offset="0.807" stop-color="#5a5a5a"/><stop offset="0.810" stop-color="#303030"/><stop offset="0.812" stop-color="#3f3f3f"/><stop offset="0.814" stop-color="#e4e4e4"/><stop offset="0.817" stop-color="#ffffff"/><stop offset="0.819" stop-color="#d1d1d1"/><stop offset="0.821" stop-color="#b8b8b8"/><stop offset="0.824" stop-color="#c1c1c1"/><stop offset="0.828" stop-color="#303030"/><stop offset="0.831" stop-color="#474747"/><stop offset="0.833" stop-color="#ededed"/><stop offset="0.835" stop-color="#f1f1f1"/><stop offset="0.838" stop-color="#595959"/><stop offset="0.840" stop-color="#454545"/><stop offset="0.842" stop-color="#b9b9b9"/><stop offset="0.845" stop-color="#fdfdfd"/><stop offset="0.847" stop-color="#c2c2c2"/><stop offset="0.849" stop-color="#7c7c7c"/><stop offset="0.852" stop-color="#a0a0a0"/><stop offset="0.854" stop-color="#818181"/><stop offset="0.856" stop-color="#303030"/><stop offset="0.859" stop-color="#4f4f4f"/><stop offset="0.861" stop-color="#d4d4d4"/><stop offset="0.863" stop-color="#c7c7c7"/><stop offset="0.866" stop-color="#4a4a4a"/><stop offset="0.868" stop-color="#303030"/><stop offset="0.870" stop-color="#4e4e4e"/><stop offset="0.873" stop-color="#bbbbbb"/><stop offset="0.875" stop-color="#f9f9f9"/><stop offset="0.880" stop-color="#fcfcfc"/><stop offset="0.882" stop-color="#ababab"/><stop offset="0.884" stop-color="#3a3a3a"/><stop offset="0.887" stop-color="#303030"/><stop offset="0.889" stop-color="#484848"/><stop offset="0.891" stop-color="#ededed"/><stop offset="0.894" stop-color="#ffffff"/><stop offset="0.896" stop-color="#cbcbcb"/><stop offset="0.901" stop-color="#b5b5b5"/><stop offset="0.903" stop-color="#3a3a3a"/><stop offset="0.905" stop-color="#303030"/><stop offset="0.910" stop-color="#acacac"/><stop offset="0.912" stop-color="#a7a7a7"/><stop offset="0.915" stop-color="#cecece"/><stop offset="0.917" stop-color="#b3b3b3"/><stop offset="0.919" stop-color="#3e3e3e"/><stop offset="0.922" stop-color="#6b6b6b"/><stop offset="0.924" stop-color="#fafafa"/><stop offset="0.926" stop-color="#ffffff"/><stop offset="0.931" stop-color="#313131"/><stop offset="0.936" stop-color="#313131"/><stop offset="0.938" stop-color="#b3b3b3"/><stop offset="0.940" stop-color="#f2f2f2"/><stop offset="0.943" stop-color="#444444"/><stop offset="0.945" stop-color="#b7b7b7"/><stop offset="0.947" stop-color="#ffffff"/><stop offset="0.950" stop-color="#8a8a8a"/><stop offset="0.952" stop-color="#a7a7a7"/><stop offset="0.954" stop-color="#fcfcfc"/><stop offset="0.957" stop-color="#474747"/><stop offset="0.959" stop-color="#303030"/><stop offset="0.961" stop-color="#303030"/><stop offset="0.964" stop-color="#ffffff"/><stop offset="0.966" stop-color="#ffffff"/><stop offset="0.968" stop-color="#3d3d3d"/><stop offset="0.971" stop-color="#303030"/><stop offset="0.973" stop-color="#ffffff"/><stop offset="0.975" stop-color="#ffffff"/><stop offset="0.978" stop-color="#cfcfcf"/><stop offset="0.980" stop-color="#303030"/><stop offset="0.982" stop-color="#303030"/><stop offset="0.985" stop-color="#7b7b7b"/><stop offset="0.987" stop-color="#dfdfdf"/><stop offset="0.989" stop-color="#fefefe"/><stop offset="0.992" stop-color="#7b7b7b"/><stop offset="0.994" stop-color="#303030"/><stop offset="0.996" stop-color="#303030"/><stop offset="0.999" stop-color="#a2a2a2"/></linearGradient><linearGradient id="s13" x1="0" y1="0" x2="0" y2="1"><stop offset="0.001" stop-color="#9d9d9d"/><stop offset="0.275" stop-color="#9c9c9c"/><stop offset="0.279" stop-color="#979797"/><stop offset="0.284" stop-color="#989898"/><stop offset="0.289" stop-color="#969696"/><stop offset="0.293" stop-color="#a4a4a4"/><stop offset="0.296" stop-color="#949494"/><stop offset="0.298" stop-color="#939393"/><stop offset="0.300" stop-color="#9f9f9f"/><stop offset="0.305" stop-color="#959595"/><stop offset="0.307" stop-color="#adadad"/><stop offset="0.310" stop-color="#9a9a9a"/><stop offset="0.312" stop-color="#7c7c7c"/><stop offset="0.317" stop-color="#a3a3a3"/><stop offset="0.321" stop-color="#a2a2a2"/><stop offset="0.324" stop-color="#a7a7a7"/><stop offset="0.328" stop-color="#7a7a7a"/><stop offset="0.333" stop-color="#c4c4c4"/><stop offset="0.335" stop-color="#afafaf"/><stop offset="0.338" stop-color="#8f8f8f"/><stop offset="0.340" stop-color="#464646"/><stop offset="0.342" stop-color="#8d8d8d"/><stop offset="0.345" stop-color="#f7f7f7"/><stop offset="0.349" stop-color="#303030"/><stop offset="0.352" stop-color="#bababa"/><stop offset="0.356" stop-color="#939393"/><stop offset="0.359" stop-color="#c9c9c9"/><stop offset="0.361" stop-color="#d8d8d8"/><stop offset="0.363" stop-color="#373737"/><stop offset="0.366" stop-color="#545454"/><stop offset="0.368" stop-color="#e1e1e1"/><stop offset="0.370" stop-color="#ababab"/><stop offset="0.373" stop-color="#9d9d9d"/><stop offset="0.375" stop-color="#a9a9a9"/><stop offset="0.380" stop-color="#686868"/><stop offset="0.382" stop-color="#828282"/><stop offset="0.384" stop-color="#8c8c8c"/><stop offset="0.387" stop-color="#ffffff"/><stop offset="0.389" stop-color="#b9b9b9"/><stop offset="0.391" stop-color="#3b3b3b"/><stop offset="0.394" stop-color="#5d5d5d"/><stop offset="0.396" stop-color="#bcbcbc"/><stop offset="0.398" stop-color="#a6a6a6"/><stop offset="0.401" stop-color="#4f4f4f"/><stop offset="0.403" stop-color="#acacac"/><stop offset="0.405" stop-color="#fefefe"/><stop offset="0.408" stop-color="#7a7a7a"/><stop offset="0.410" stop-color="#bbbbbb"/><stop offset="0.412" stop-color="#b0b0b0"/><stop offset="0.415" stop-color="#303030"/><stop offset="0.417" stop-color="#4f4f4f"/><stop offset="0.419" stop-color="#cacaca"/><stop offset="0.422" stop-color="#d6d6d6"/><stop offset="0.424" stop-color="#777777"/><stop offset="0.426" stop-color="#5d5d5d"/><stop offset="0.429" stop-color="#d5d5d5"/><stop offset="0.431" stop-color="#aeaeae"/><stop offset="0.433" stop-color="#303030"/><stop offset="0.436" stop-color="#868686"/><stop offset="0.438" stop-color="#ffffff"/><stop offset="0.440" stop-color="#ffffff"/><stop offset="0.443" stop-color="#7f7f7f"/><stop offset="0.445" stop-color="#353535"/><stop offset="0.447" stop-color="#4d4d4d"/><stop offset="0.452" stop-color="#b8b8b8"/><stop offset="0.457" stop-color="#eaeaea"/><stop offset="0.459" stop-color="#727272"/><stop offset="0.461" stop-color="#303030"/><stop offset="0.464" stop-color="#848484"/><stop offset="0.466" stop-color="#ffffff"/><stop offset="0.471" stop-color="#434343"/><stop offset="0.473" stop-color="#a1a1a1"/><stop offset="0.475" stop-color="#9b9b9b"/><stop offset="0.478" stop-color="#636363"/><stop offset="0.480" stop-color="#dadada"/><stop offset="0.482" stop-color="#ffffff"/><stop offset="0.485" stop-color="#cecece"/><stop offset="0.487" stop-color="#454545"/><stop offset="0.489" stop-color="#303030"/><stop offset="0.492" stop-color="#5a5a5a"/><stop offset="0.494" stop-color="#f7f7f7"/><stop offset="0.496" stop-color="#ffffff"/><stop offset="0.499" stop-color="#7e7e7e"/><stop offset="0.501" stop-color="#494949"/><stop offset="0.508" stop-color="#dbdbdb"/><stop offset="0.511" stop-color="#ffffff"/><stop offset="0.513" stop-color="#ececec"/><stop offset="0.515" stop-color="#303030"/><stop offset="0.520" stop-color="#383838"/><stop offset="0.522" stop-color="#f5f5f5"/><stop offset="0.525" stop-color="#ffffff"/><stop offset="0.527" stop-color="#bababa"/><stop offset="0.529" stop-color="#323232"/><stop offset="0.532" stop-color="#313131"/><stop offset="0.534" stop-color="#a8a8a8"/><stop offset="0.536" stop-color="#ffffff"/><stop offset="0.539" stop-color="#fefefe"/><stop offset="0.541" stop-color="#b6b6b6"/><stop offset="0.548" stop-color="#303030"/><stop offset="0.550" stop-color="#949494"/><stop offset="0.553" stop-color="#eaeaea"/><stop offset="0.555" stop-color="#595959"/><stop offset="0.557" stop-color="#3c3c3c"/><stop offset="0.560" stop-color="#a7a7a7"/><stop offset="0.562" stop-color="#ffffff"/><stop offset="0.564" stop-color="#ffffff"/><stop offset="0.567" stop-color="#3b3b3b"/><stop offset="0.569" stop-color="#303030"/><stop offset="0.571" stop-color="#ababab"/><stop offset="0.574" stop-color="#ececec"/><stop offset="0.576" stop-color="#a5a5a5"/><stop offset="0.578" stop-color="#ffffff"/><stop offset="0.581" stop-color="#d2d2d2"/><stop offset="0.583" stop-color="#515151"/><stop offset="0.585" stop-color="#323232"/><stop offset="0.588" stop-color="#323232"/><stop offset="0.590" stop-color="#f2f2f2"/><stop offset="0.592" stop-color="#ffffff"/><stop offset="0.595" stop-color="#aaaaaa"/><stop offset="0.597" stop-color="#303030"/><stop offset="0.599" stop-color="#393939"/><stop offset="0.602" stop-color="#333333"/><stop offset="0.604" stop-color="#636363"/><stop offset="0.606" stop-color="#dfdfdf"/><stop offset="0.609" stop-color="#4d4d4d"/><stop offset="0.611" stop-color="#303030"/><stop offset="0.613" stop-color="#aeaeae"/><stop offset="0.616" stop-color="#ffffff"/><stop offset="0.618" stop-color="#ffffff"/><stop offset="0.620" stop-color="#696969"/><stop offset="0.623" stop-color="#303030"/><stop offset="0.625" stop-color="#303030"/><stop offset="0.627" stop-color="#f0f0f0"/><stop offset="0.630" stop-color="#ffffff"/><stop offset="0.632" stop-color="#f2f2f2"/><stop offset="0.634" stop-color="#cdcdcd"/><stop offset="0.637" stop-color="#303030"/><stop offset="0.639" stop-color="#9e9e9e"/><stop offset="0.641" stop-color="#bebebe"/><stop offset="0.644" stop-color="#a4a4a4"/><stop offset="0.646" stop-color="#cacaca"/><stop offset="0.648" stop-color="#343434"/><stop offset="0.651" stop-color="#4d4d4d"/><stop offset="0.653" stop-color="#ffffff"/><stop offset="0.655" stop-color="#a2a2a2"/><stop offset="0.658" stop-color="#303030"/><stop offset="0.660" stop-color="#303030"/><stop offset="0.662" stop-color="#ffffff"/><stop offset="0.665" stop-color="#ffffff"/><stop offset="0.667" stop-color="#cacaca"/><stop offset="0.669" stop-color="#303030"/><stop offset="0.672" stop-color="#303030"/><stop offset="0.674" stop-color="#3d3d3d"/><stop offset="0.676" stop-color="#c9c9c9"/><stop offset="0.679" stop-color="#8b8b8b"/><stop offset="0.681" stop-color="#b2b2b2"/><stop offset="0.683" stop-color="#f7f7f7"/><stop offset="0.686" stop-color="#cbcbcb"/><stop offset="0.688" stop-color="#757575"/><stop offset="0.690" stop-color="#303030"/><stop offset="0.693" stop-color="#575757"/><stop offset="0.695" stop-color="#fafafa"/><stop offset="0.697" stop-color="#7a7a7a"/><stop offset="0.700" stop-color="#303030"/><stop offset="0.702" stop-color="#535353"/><stop offset="0.704" stop-color="#e8e8e8"/><stop offset="0.707" stop-color="#f5f5f5"/><stop offset="0.709" stop-color="#cecece"/><stop offset="0.711" stop-color="#6a6a6a"/><stop offset="0.714" stop-color="#545454"/><stop offset="0.716" stop-color="#fefefe"/><stop offset="0.718" stop-color="#ffffff"/><stop offset="0.721" stop-color="#595959"/><stop offset="0.723" stop-color="#303030"/><stop offset="0.725" stop-color="#303030"/><stop offset="0.728" stop-color="#bbbbbb"/><stop offset="0.730" stop-color="#ffffff"/><stop offset="0.732" stop-color="#8b8b8b"/><stop offset="0.735" stop-color="#7b7b7b"/><stop offset="0.737" stop-color="#afafaf"/><stop offset="0.739" stop-color="#9f9f9f"/><stop offset="0.744" stop-color="#ebebeb"/><stop offset="0.749" stop-color="#303030"/><stop offset="0.751" stop-color="#5c5c5c"/><stop offset="0.754" stop-color="#a0a0a0"/><stop offset="0.756" stop-color="#858585"/><stop offset="0.758" stop-color="#c4c4c4"/><stop offset="0.761" stop-color="#cacaca"/><stop offset="0.763" stop-color="#7c7c7c"/><stop offset="0.765" stop-color="#9b9b9b"/><stop offset="0.768" stop-color="#303030"/><stop offset="0.770" stop-color="#343434"/><stop offset="0.772" stop-color="#ffffff"/><stop offset="0.775" stop-color="#a4a4a4"/><stop offset="0.777" stop-color="#303030"/><stop offset="0.779" stop-color="#3a3a3a"/><stop offset="0.782" stop-color="#ececec"/><stop offset="0.784" stop-color="#fdfdfd"/><stop offset="0.786" stop-color="#333333"/><stop offset="0.789" stop-color="#303030"/><stop offset="0.791" stop-color="#ffffff"/><stop offset="0.793" stop-color="#ffffff"/><stop offset="0.796" stop-color="#444444"/><stop offset="0.798" stop-color="#303030"/><stop offset="0.800" stop-color="#8c8c8c"/><stop offset="0.803" stop-color="#b1b1b1"/><stop offset="0.805" stop-color="#fafafa"/><stop offset="0.807" stop-color="#f5f5f5"/><stop offset="0.810" stop-color="#303030"/><stop offset="0.812" stop-color="#303030"/><stop offset="0.814" stop-color="#5a5a5a"/><stop offset="0.817" stop-color="#ffffff"/><stop offset="0.819" stop-color="#e8e8e8"/><stop offset="0.821" stop-color="#969696"/><stop offset="0.824" stop-color="#ababab"/><stop offset="0.826" stop-color="#eeeeee"/><stop offset="0.828" stop-color="#787878"/><stop offset="0.831" stop-color="#303030"/><stop offset="0.833" stop-color="#4b4b4b"/><stop offset="0.835" stop-color="#ffffff"/><stop offset="0.838" stop-color="#dadada"/><stop offset="0.840" stop-color="#303030"/><stop offset="0.842" stop-color="#484848"/><stop offset="0.845" stop-color="#e8e8e8"/><stop offset="0.847" stop-color="#fefefe"/><stop offset="0.849" stop-color="#ababab"/><stop offset="0.852" stop-color="#8d8d8d"/><stop offset="0.854" stop-color="#c0c0c0"/><stop offset="0.856" stop-color="#5d5d5d"/><stop offset="0.859" stop-color="#303030"/><stop offset="0.861" stop-color="#454545"/><stop offset="0.863" stop-color="#fefefe"/><stop offset="0.866" stop-color="#e3e3e3"/><stop offset="0.868" stop-color="#333333"/><stop offset="0.870" stop-color="#303030"/><stop offset="0.873" stop-color="#414141"/><stop offset="0.875" stop-color="#c5c5c5"/><stop offset="0.877" stop-color="#ffffff"/><stop offset="0.882" stop-color="#f9f9f9"/><stop offset="0.884" stop-color="#878787"/><stop offset="0.887" stop-color="#303030"/><stop offset="0.889" stop-color="#303030"/><stop offset="0.891" stop-color="#626262"/><stop offset="0.894" stop-color="#ffffff"/><stop offset="0.896" stop-color="#ffffff"/><stop offset="0.898" stop-color="#949494"/><stop offset="0.901" stop-color="#c6c6c6"/><stop offset="0.903" stop-color="#b4b4b4"/><stop offset="0.905" stop-color="#303030"/><stop offset="0.908" stop-color="#303030"/><stop offset="0.910" stop-color="#6a6a6a"/><stop offset="0.912" stop-color="#d0d0d0"/><stop offset="0.915" stop-color="#cccccc"/><stop offset="0.917" stop-color="#d3d3d3"/><stop offset="0.919" stop-color="#949494"/><stop offset="0.922" stop-color="#303030"/><stop offset="0.924" stop-color="#7a7a7a"/><stop offset="0.926" stop-color="#ffffff"/><stop offset="0.929" stop-color="#ffffff"/><stop offset="0.931" stop-color="#808080"/><stop offset="0.933" stop-color="#303030"/><stop offset="0.938" stop-color="#303030"/><stop offset="0.940" stop-color="#f6f6f6"/><stop offset="0.943" stop-color="#d6d6d6"/><stop offset="0.945" stop-color="#3b3b3b"/><stop offset="0.947" stop-color="#ffffff"/><stop offset="0.950" stop-color="#c9c9c9"/><stop offset="0.952" stop-color="#505050"/><stop offset="0.954" stop-color="#ffffff"/><stop offset="0.957" stop-color="#c3c3c3"/><stop offset="0.959" stop-color="#303030"/><stop offset="0.961" stop-color="#303030"/><stop offset="0.964" stop-color="#ededed"/><stop offset="0.966" stop-color="#ffffff"/><stop offset="0.968" stop-color="#8d8d8d"/><stop offset="0.971" stop-color="#303030"/><stop offset="0.973" stop-color="#e8e8e8"/><stop offset="0.975" stop-color="#ffffff"/><stop offset="0.978" stop-color="#d1d1d1"/><stop offset="0.980" stop-color="#303030"/><stop offset="0.982" stop-color="#303030"/><stop offset="0.985" stop-color="#a6a6a6"/><stop offset="0.987" stop-color="#b2b2b2"/><stop offset="0.989" stop-color="#ededed"/><stop offset="0.992" stop-color="#aeaeae"/><stop offset="0.994" stop-color="#303030"/><stop offset="0.996" stop-color="#303030"/><stop offset="0.999" stop-color="#626262"/></linearGradient><linearGradient id="c0" x1="0" y1="0" x2="0" y2="1"><stop offset="0.001" stop-color="#4d0000"/><stop offset="0.101" stop-color="#ff0000"/><stop offset="0.462" stop-color="#fffe00"/><stop offset="0.464" stop-color="#fcff00"/><stop offset="0.531" stop-color="#06ff00"/><stop offset="0.534" stop-color="#00ff02"/><stop offset="0.620" stop-color="#00fffc"/><stop offset="0.624" stop-color="#00fbff"/><stop offset="0.862" stop-color="#0001ff"/><stop offset="0.999" stop-color="#ff00ff"/></linearGradient><filter id="hb4" x="-10%" width="120%" color-interpolation-filters="sRGB"><feGaussianBlur stdDeviation="2.2 0"/></filter><filter id="hb8" x="-10%" width="120%" color-interpolation-filters="sRGB"><feGaussianBlur stdDeviation="5 0"/></filter><clipPath id="cpv"><rect x="368" y="87" width="356" height="430" rx="4"/></clipPath><clipPath id="cps"><rect x="79" y="86" width="160" height="428" rx="4"/></clipPath></defs><g clip-path="url(#cpv)"><g filter="url(#hb4)"><rect x="362" y="87" width="4" height="430" fill="url(#v0)"/><rect x="366" y="87" width="4" height="430" fill="url(#v1)"/><rect x="370" y="87" width="4" height="430" fill="url(#v2)"/><rect x="374" y="87" width="4" height="430" fill="url(#v3)"/><rect x="378" y="87" width="4" height="430" fill="url(#v4)"/><rect x="382" y="87" width="4" height="430" fill="url(#v5)"/><rect x="386" y="87" width="4" height="430" fill="url(#v6)"/><rect x="390" y="87" width="4" height="430" fill="url(#v7)"/><rect x="394" y="87" width="4" height="430" fill="url(#v8)"/><rect x="398" y="87" width="4" height="430" fill="url(#v9)"/><rect x="402" y="87" width="4" height="430" fill="url(#v10)"/><rect x="406" y="87" width="4" height="430" fill="url(#v11)"/><rect x="410" y="87" width="4" height="430" fill="url(#v12)"/><rect x="414" y="87" width="4" height="430" fill="url(#v13)"/><rect x="418" y="87" width="4" height="430" fill="url(#v14)"/><rect x="422" y="87" width="4" height="430" fill="url(#v15)"/><rect x="426" y="87" width="4" height="430" fill="url(#v16)"/><rect x="430" y="87" width="4" height="430" fill="url(#v17)"/><rect x="434" y="87" width="4" height="430" fill="url(#v18)"/><rect x="438" y="87" width="4" height="430" fill="url(#v19)"/><rect x="442" y="87" width="4" height="430" fill="url(#v20)"/><rect x="446" y="87" width="4" height="430" fill="url(#v21)"/><rect x="450" y="87" width="4" height="430" fill="url(#v22)"/><rect x="454" y="87" width="4" height="430" fill="url(#v23)"/><rect x="458" y="87" width="4" height="430" fill="url(#v24)"/><rect x="462" y="87" width="4" height="430" fill="url(#v25)"/><rect x="466" y="87" width="4" height="430" fill="url(#v26)"/><rect x="470" y="87" width="4" height="430" fill="url(#v27)"/><rect x="474" y="87" width="4" height="430" fill="url(#v28)"/><rect x="478" y="87" width="4" height="430" fill="url(#v29)"/><rect x="482" y="87" width="4" height="430" fill="url(#v30)"/><rect x="486" y="87" width="4" height="430" fill="url(#v31)"/><rect x="490" y="87" width="4" height="430" fill="url(#v32)"/><rect x="494" y="87" width="4" height="430" fill="url(#v33)"/><rect x="498" y="87" width="4" height="430" fill="url(#v34)"/><rect x="502" y="87" width="4" height="430" fill="url(#v35)"/><rect x="506" y="87" width="4" height="430" fill="url(#v36)"/><rect x="510" y="87" width="4" height="430" fill="url(#v37)"/><rect x="514" y="87" width="4" height="430" fill="url(#v38)"/><rect x="518" y="87" width="4" height="430" fill="url(#v39)"/><rect x="522" y="87" width="4" height="430" fill="url(#v40)"/><rect x="526" y="87" width="4" height="430" fill="url(#v41)"/><rect x="530" y="87" width="4" height="430" fill="url(#v42)"/><rect x="534" y="87" width="4" height="430" fill="url(#v43)"/><rect x="538" y="87" width="4" height="430" fill="url(#v44)"/><rect x="542" y="87" width="4" height="430" fill="url(#v45)"/><rect x="546" y="87" width="4" height="430" fill="url(#v46)"/><rect x="550" y="87" width="4" height="430" fill="url(#v47)"/><rect x="554" y="87" width="4" height="430" fill="url(#v48)"/><rect x="558" y="87" width="4" height="430" fill="url(#v49)"/><rect x="562" y="87" width="4" height="430" fill="url(#v50)"/><rect x="566" y="87" width="4" height="430" fill="url(#v51)"/><rect x="570" y="87" width="4" height="430" fill="url(#v52)"/><rect x="574" y="87" width="4" height="430" fill="url(#v53)"/><rect x="578" y="87" width="4" height="430" fill="url(#v54)"/><rect x="582" y="87" width="4" height="430" fill="url(#v55)"/><rect x="586" y="87" width="4" height="430" fill="url(#v56)"/><rect x="590" y="87" width="4" height="430" fill="url(#v57)"/><rect x="594" y="87" width="4" height="430" fill="url(#v58)"/><rect x="598" y="87" width="4" height="430" fill="url(#v59)"/><rect x="602" y="87" width="4" height="430" fill="url(#v60)"/><rect x="606" y="87" width="4" height="430" fill="url(#v61)"/><rect x="610" y="87" width="4" height="430" fill="url(#v62)"/><rect x="614" y="87" width="4" height="430" fill="url(#v63)"/><rect x="618" y="87" width="4" height="430" fill="url(#v64)"/><rect x="622" y="87" width="4" height="430" fill="url(#v65)"/><rect x="626" y="87" width="4" height="430" fill="url(#v66)"/><rect x="630" y="87" width="4" height="430" fill="url(#v67)"/><rect x="634" y="87" width="4" height="430" fill="url(#v68)"/><rect x="638" y="87" width="4" height="430" fill="url(#v69)"/><rect x="642" y="87" width="4" height="430" fill="url(#v70)"/><rect x="646" y="87" width="4" height="430" fill="url(#v71)"/><rect x="650" y="87" width="4" height="430" fill="url(#v72)"/><rect x="654" y="87" width="4" height="430" fill="url(#v73)"/><rect x="658" y="87" width="4" height="430" fill="url(#v74)"/><rect x="662" y="87" width="4" height="430" fill="url(#v75)"/><rect x="666" y="87" width="4" height="430" fill="url(#v76)"/><rect x="670" y="87" width="4" height="430" fill="url(#v77)"/><rect x="674" y="87" width="4" height="430" fill="url(#v78)"/><rect x="678" y="87" width="4" height="430" fill="url(#v79)"/><rect x="682" y="87" width="4" height="430" fill="url(#v80)"/><rect x="686" y="87" width="4" height="430" fill="url(#v81)"/><rect x="690" y="87" width="4" height="430" fill="url(#v82)"/><rect x="694" y="87" width="4" height="430" fill="url(#v83)"/><rect x="698" y="87" width="4" height="430" fill="url(#v84)"/><rect x="702" y="87" width="4" height="430" fill="url(#v85)"/><rect x="706" y="87" width="4" height="430" fill="url(#v86)"/><rect x="710" y="87" width="4" height="430" fill="url(#v87)"/><rect x="714" y="87" width="4" height="430" fill="url(#v88)"/><rect x="718" y="87" width="4" height="430" fill="url(#v89)"/><rect x="722" y="87" width="4" height="430" fill="url(#v90)"/><rect x="726" y="87" width="4" height="430" fill="url(#v91)"/></g></g><g clip-path="url(#cps)"><g filter="url(#hb8)"><rect x="65" y="86" width="14" height="428" fill="url(#s0)"/><rect x="79" y="86" width="14" height="428" fill="url(#s1)"/><rect x="93" y="86" width="14" height="428" fill="url(#s2)"/><rect x="107" y="86" width="14" height="428" fill="url(#s3)"/><rect x="121" y="86" width="14" height="428" fill="url(#s4)"/><rect x="135" y="86" width="14" height="428" fill="url(#s5)"/><rect x="149" y="86" width="14" height="428" fill="url(#s6)"/><rect x="163" y="86" width="14" height="428" fill="url(#s7)"/><rect x="177" y="86" width="14" height="428" fill="url(#s8)"/><rect x="191" y="86" width="14" height="428" fill="url(#s9)"/><rect x="205" y="86" width="14" height="428" fill="url(#s10)"/><rect x="219" y="86" width="14" height="428" fill="url(#s11)"/><rect x="233" y="86" width="14" height="428" fill="url(#s12)"/><rect x="247" y="86" width="6" height="428" fill="url(#s13)"/></g></g><rect x="741" y="87" width="10" height="430" fill="url(#c0)"/><rect x="372" y="86" width="348" height="1" fill="#00007a"/><rect x="372" y="517" width="348" height="1" fill="url(#bedg)"/><defs><linearGradient id="bedg" x1="0" x2="1" y1="0" y2="0"><stop offset="0" stop-color="#2040b0"/><stop offset=".14" stop-color="#60c0ff"/><stop offset=".25" stop-color="#50ff90"/><stop offset=".38" stop-color="#ffff70"/><stop offset=".45" stop-color="#fff0c0"/><stop offset=".55" stop-color="#f0e0ff"/><stop offset=".74" stop-color="#ffe0a0"/><stop offset=".79" stop-color="#ffff60"/><stop offset=".85" stop-color="#70ff70"/><stop offset=".885" stop-color="#00007a"/><stop offset="1" stop-color="#00007a"/></linearGradient></defs><rect x="367" y="91" width="1" height="422" fill="url(#edg)"/><rect x="724" y="91" width="1" height="422" fill="url(#edg)"/><defs><linearGradient id="edg" x1="0" y1="0" x2="0" y2="1"><stop offset="0" stop-color="#00007a"/><stop offset="0.0314" stop-color="#00007a"/><stop offset="0.0314" stop-color="#80ff80"/><stop offset="0.0400" stop-color="#80ff80"/><stop offset="0.0400" stop-color="#00007a"/><stop offset="0.0838" stop-color="#00007a"/><stop offset="0.0838" stop-color="#30c0ff"/><stop offset="0.0904" stop-color="#30c0ff"/><stop offset="0.0904" stop-color="#00007a"/><stop offset="0.1269" stop-color="#00007a"/><stop offset="0.1269" stop-color="#ff3030"/><stop offset="0.1352" stop-color="#ff3030"/><stop offset="0.1352" stop-color="#00007a"/><stop offset="0.1675" stop-color="#00007a"/><stop offset="0.1675" stop-color="#80ff80"/><stop offset="0.1757" stop-color="#80ff80"/><stop offset="0.1757" stop-color="#00007a"/><stop offset="0.1935" stop-color="#00007a"/><stop offset="0.1935" stop-color="#ffff40"/><stop offset="0.1979" stop-color="#ffff40"/><stop offset="0.1979" stop-color="#00007a"/><stop offset="0.2325" stop-color="#00007a"/><stop offset="0.2325" stop-color="#30ff30"/><stop offset="0.2396" stop-color="#30ff30"/><stop offset="0.2396" stop-color="#00007a"/><stop offset="0.2689" stop-color="#00007a"/><stop offset="0.2689" stop-color="#30c0ff"/><stop offset="0.2763" stop-color="#30c0ff"/><stop offset="0.2763" stop-color="#00007a"/><stop offset="0.3138" stop-color="#00007a"/><stop offset="0.3138" stop-color="#ff3030"/><stop offset="0.3211" stop-color="#ff3030"/><stop offset="0.3211" stop-color="#00007a"/><stop offset="0.3668" stop-color="#00007a"/><stop offset="0.3668" stop-color="#30ff30"/><stop offset="0.3707" stop-color="#30ff30"/><stop offset="0.3707" stop-color="#00007a"/><stop offset="0.3922" stop-color="#00007a"/><stop offset="0.3922" stop-color="#ff3030"/><stop offset="0.3993" stop-color="#ff3030"/><stop offset="0.3993" stop-color="#00007a"/><stop offset="0.4430" stop-color="#00007a"/><stop offset="0.4430" stop-color="#ffff40"/><stop offset="0.4492" stop-color="#ffff40"/><stop offset="0.4492" stop-color="#00007a"/><stop offset="0.4953" stop-color="#00007a"/><stop offset="0.4953" stop-color="#80ff80"/><stop offset="0.5003" stop-color="#80ff80"/><stop offset="0.5003" stop-color="#00007a"/><stop offset="0.5256" stop-color="#00007a"/><stop offset="0.5256" stop-color="#30ff30"/><stop offset="0.5331" stop-color="#30ff30"/><stop offset="0.5331" stop-color="#00007a"/><stop offset="0.5647" stop-color="#00007a"/><stop offset="0.5647" stop-color="#ffff40"/><stop offset="0.5706" stop-color="#ffff40"/><stop offset="0.5706" stop-color="#00007a"/><stop offset="0.6058" stop-color="#00007a"/><stop offset="0.6058" stop-color="#30ff30"/><stop offset="0.6135" stop-color="#30ff30"/><stop offset="0.6135" stop-color="#00007a"/><stop offset="0.6397" stop-color="#00007a"/><stop offset="0.6397" stop-color="#ff3030"/><stop offset="0.6463" stop-color="#ff3030"/><stop offset="0.6463" stop-color="#00007a"/><stop offset="0.6616" stop-color="#00007a"/><stop offset="0.6616" stop-color="#80ff80"/><stop offset="0.6697" stop-color="#80ff80"/><stop offset="0.6697" stop-color="#00007a"/><stop offset="0.6991" stop-color="#00007a"/><stop offset="0.6991" stop-color="#ffff40"/><stop offset="0.7050" stop-color="#ffff40"/><stop offset="0.7050" stop-color="#00007a"/><stop offset="0.7555" stop-color="#00007a"/><stop offset="0.7555" stop-color="#30ff30"/><stop offset="0.7603" stop-color="#30ff30"/><stop offset="0.7603" stop-color="#00007a"/><stop offset="0.8097" stop-color="#00007a"/><stop offset="0.8097" stop-color="#30ff30"/><stop offset="0.8160" stop-color="#30ff30"/><stop offset="0.8160" stop-color="#00007a"/><stop offset="0.8674" stop-color="#00007a"/><stop offset="0.8674" stop-color="#30c0ff"/><stop offset="0.8734" stop-color="#30c0ff"/><stop offset="0.8734" stop-color="#00007a"/><stop offset="0.9091" stop-color="#00007a"/><stop offset="0.9091" stop-color="#ff3030"/><stop offset="0.9173" stop-color="#ff3030"/><stop offset="0.9173" stop-color="#00007a"/><stop offset="0.9417" stop-color="#00007a"/><stop offset="0.9417" stop-color="#30ff30"/><stop offset="0.9471" stop-color="#30ff30"/><stop offset="0.9471" stop-color="#00007a"/><stop offset="0.9619" stop-color="#00007a"/><stop offset="0.9619" stop-color="#30c0ff"/><stop offset="0.9700" stop-color="#30c0ff"/><stop offset="0.9700" stop-color="#00007a"/><stop offset="0.9887" stop-color="#00007a"/><stop offset="0.9887" stop-color="#ff3030"/><stop offset="0.9964" stop-color="#ff3030"/><stop offset="0.9964" stop-color="#00007a"/><stop offset="1" stop-color="#00007a"/></linearGradient></defs><rect x="79" y="92" width="1" height="418" fill="#000" opacity="0.4"/><rect x="238" y="92" width="1" height="418" fill="#000" opacity="0.4"/><rect x="84" y="86" width="150" height="1" fill="#000" opacity="0.08"/><path d="M80 83h157v1h-157zM80 77h1v6h-1zM85 81h1v2h-1zM91 81h1v2h-1zM96 81h1v2h-1zM101 77h1v6h-1zM106 81h1v2h-1zM112 81h1v2h-1zM117 81h1v2h-1zM122 77h1v6h-1zM127 81h1v2h-1zM133 81h1v2h-1zM138 81h1v2h-1zM143 77h1v6h-1zM148 81h1v2h-1zM154 81h1v2h-1zM159 81h1v2h-1zM164 77h1v6h-1zM169 81h1v2h-1zM175 81h1v2h-1zM180 81h1v2h-1zM185 77h1v6h-1zM190 81h1v2h-1zM196 81h1v2h-1zM201 81h1v2h-1zM206 77h1v6h-1zM211 81h1v2h-1zM217 81h1v2h-1zM222 81h1v2h-1zM227 77h1v6h-1zM232 81h1v2h-1zM76 87h1v426h-1zM68 87h8v1h-8zM72 97h4v1h-4zM72 107h4v1h-4zM72 117h4v1h-4zM72 127h4v1h-4zM68 137h8v1h-8zM72 147h4v1h-4zM72 157h4v1h-4zM72 167h4v1h-4zM72 177h4v1h-4zM68 187h8v1h-8zM72 197h4v1h-4zM72 207h4v1h-4zM72 217h4v1h-4zM72 227h4v1h-4zM68 237h8v1h-8zM72 247h4v1h-4zM72 257h4v1h-4zM72 267h4v1h-4zM72 277h4v1h-4zM68 286h8v1h-8zM72 296h4v1h-4zM72 306h4v1h-4zM72 316h4v1h-4zM72 326h4v1h-4zM68 336h8v1h-8zM72 346h4v1h-4zM72 356h4v1h-4zM72 366h4v1h-4zM72 376h4v1h-4zM68 386h8v1h-8zM72 396h4v1h-4zM72 406h4v1h-4zM72 416h4v1h-4zM72 426h4v1h-4zM68 436h8v1h-8zM72 446h4v1h-4zM72 456h4v1h-4zM72 466h4v1h-4zM72 476h4v1h-4zM68 486h8v1h-8zM72 496h4v1h-4zM72 506h4v1h-4zM84 514h150v1h-150zM368 83h355v1h-355zM369 77h1v6h-1zM375 81h1v2h-1zM381 81h1v2h-1zM387 81h1v2h-1zM393 81h1v2h-1zM399 77h1v6h-1zM405 81h1v2h-1zM412 81h1v2h-1zM418 81h1v2h-1zM424 81h1v2h-1zM430 77h1v6h-1zM436 81h1v2h-1zM442 81h1v2h-1zM448 81h1v2h-1zM455 81h1v2h-1zM461 77h1v6h-1zM467 81h1v2h-1zM473 81h1v2h-1zM479 81h1v2h-1zM485 81h1v2h-1zM491 77h1v6h-1zM497 81h1v2h-1zM504 81h1v2h-1zM510 81h1v2h-1zM516 81h1v2h-1zM522 77h1v6h-1zM528 81h1v2h-1zM534 81h1v2h-1zM540 81h1v2h-1zM547 81h1v2h-1zM553 77h1v6h-1zM559 81h1v2h-1zM565 81h1v2h-1zM571 81h1v2h-1zM577 81h1v2h-1zM583 77h1v6h-1zM589 81h1v2h-1zM596 81h1v2h-1zM602 81h1v2h-1zM608 81h1v2h-1zM614 77h1v6h-1zM620 81h1v2h-1zM626 81h1v2h-1zM632 81h1v2h-1zM639 81h1v2h-1zM645 77h1v6h-1zM651 81h1v2h-1zM657 81h1v2h-1zM663 81h1v2h-1zM669 81h1v2h-1zM675 77h1v6h-1zM681 81h1v2h-1zM688 81h1v2h-1zM694 81h1v2h-1zM700 81h1v2h-1zM706 77h1v6h-1zM712 81h1v2h-1zM718 81h1v2h-1zM364 87h1v429h-1zM356 87h8v1h-8zM360 97h4v1h-4zM360 107h4v1h-4zM360 117h4v1h-4zM360 127h4v1h-4zM356 137h8v1h-8zM360 147h4v1h-4zM360 157h4v1h-4zM360 167h4v1h-4zM360 177h4v1h-4zM356 188h8v1h-8zM360 198h4v1h-4zM360 208h4v1h-4zM360 218h4v1h-4zM360 228h4v1h-4zM356 238h8v1h-8zM360 248h4v1h-4zM360 258h4v1h-4zM360 268h4v1h-4zM360 278h4v1h-4zM356 288h8v1h-8zM360 298h4v1h-4zM360 308h4v1h-4zM360 318h4v1h-4zM360 328h4v1h-4zM356 338h8v1h-8zM360 348h4v1h-4zM360 358h4v1h-4zM360 368h4v1h-4zM360 378h4v1h-4zM356 388h8v1h-8zM360 399h4v1h-4zM360 409h4v1h-4zM360 419h4v1h-4zM360 429h4v1h-4zM356 439h8v1h-8zM360 449h4v1h-4zM360 459h4v1h-4zM360 469h4v1h-4zM360 479h4v1h-4zM356 489h8v1h-8zM360 499h4v1h-4zM360 509h4v1h-4zM753 87h1v430h-1zM753 516h8v1h-8zM753 504h4v1h-4zM753 492h6v1h-6zM753 480h4v1h-4zM753 468h8v1h-8zM753 455h4v1h-4zM753 443h6v1h-6zM753 431h4v1h-4zM753 419h8v1h-8zM753 406h4v1h-4zM753 394h6v1h-6zM753 382h4v1h-4zM753 370h8v1h-8zM753 357h4v1h-4zM753 345h6v1h-6zM753 333h4v1h-4zM753 320h8v1h-8zM753 308h4v1h-4zM753 296h6v1h-6zM753 284h4v1h-4zM753 271h8v1h-8zM753 259h4v1h-4zM753 247h6v1h-6zM753 235h4v1h-4zM753 222h8v1h-8zM753 210h4v1h-4zM753 198h6v1h-6zM753 186h4v1h-4zM753 173h8v1h-8zM753 161h4v1h-4zM753 149h6v1h-6zM753 136h4v1h-4zM753 124h8v1h-8zM753 112h4v1h-4zM753 100h6v1h-6zM753 87h8v1h-8z" fill="#000"/><polygon points="242.0,100.0 250.0,100.0 246.0,94.0" fill="#8c8c8c" stroke="#8c8c8c" stroke-width="2" stroke-linejoin="round"/><polygon points="242.0,501.0 250.0,501.0 246.0,507.0" fill="#8c8c8c" stroke="#8c8c8c" stroke-width="2" stroke-linejoin="round"/><rect x="244" y="107" width="4" height="206" rx="2" fill="#8c8c8c"/><polygon points="93.0,519.0 93.0,527.0 87.0,523.0" fill="#8c8c8c" stroke="#8c8c8c" stroke-width="2" stroke-linejoin="round"/><polygon points="225.0,519.0 225.0,527.0 231.0,523.0" fill="#8c8c8c" stroke="#8c8c8c" stroke-width="2" stroke-linejoin="round"/><rect x="100" y="521" width="118" height="4" rx="2" fill="#8c8c8c"/><polygon points="728.0,100.0 736.0,100.0 732.0,94.0" fill="#8c8c8c" stroke="#8c8c8c" stroke-width="2" stroke-linejoin="round"/><polygon points="728.0,504.0 736.0,504.0 732.0,510.0" fill="#8c8c8c" stroke="#8c8c8c" stroke-width="2" stroke-linejoin="round"/><rect x="730" y="107" width="4" height="206" rx="2" fill="#8c8c8c"/><polygon points="381.0,522.0 381.0,530.0 375.0,526.0" fill="#8c8c8c" stroke="#8c8c8c" stroke-width="2" stroke-linejoin="round"/><polygon points="711.0,522.0 711.0,530.0 717.0,526.0" fill="#8c8c8c" stroke="#8c8c8c" stroke-width="2" stroke-linejoin="round"/><rect x="388" y="524" width="316" height="4" rx="2" fill="#8c8c8c"/><path transform="translate(0 0)" d="M109.6 28.6L106.2 25.1L104.5 22.4Q104.5 20.4 106.4 20.5L107.7 20.8L108.9 23.2M108.3 21.6L107 18.4Q106.3 15.7 107.9 15.5L109.3 15.6L110.7 19.8M110.2 17.2Q110.2 14.4 111.8 14.5L112.9 14.7L113.5 19.9M113.4 15.7L115.5 15.9L116.7 20.7M116.8 18.6Q117.7 17.1 118.7 17.4L119.7 18.9L119.7 22.2L117.3 26.1L116.3 28.5" fill="none" stroke="#000" stroke-width="1.25" stroke-linecap="round" stroke-linejoin="round"/><g transform="translate(138 21.8)" fill="#0b4ea2"><rect x="-1.1" y="-7" width="2.2" height="4" transform="rotate(0)"/><rect x="-1.1" y="-7" width="2.2" height="4" transform="rotate(45)"/><rect x="-1.1" y="-7" width="2.2" height="4" transform="rotate(90)"/><rect x="-1.1" y="-7" width="2.2" height="4" transform="rotate(135)"/><rect x="-1.1" y="-7" width="2.2" height="4" transform="rotate(180)"/><rect x="-1.1" y="-7" width="2.2" height="4" transform="rotate(225)"/><rect x="-1.1" y="-7" width="2.2" height="4" transform="rotate(270)"/><rect x="-1.1" y="-7" width="2.2" height="4" transform="rotate(315)"/><circle r="3.6" fill="none" stroke="#0b4ea2" stroke-width="2.8"/></g><g transform="translate(0 0)"><path d="M157 14h1v1h-1zM159 14h1v1h-1zM161 14h1v1h-1zM163 14h1v1h-1zM165 14h1v1h-1zM167 14h1v1h-1zM169 14h1v1h-1zM171 14h1v1h-1zM157 16h1v1h-1zM157 18h1v1h-1zM157 20h1v1h-1zM157 22h1v1h-1zM157 24h1v1h-1zM157 26h1v1h-1zM157 28h1v1h-1zM159 29h1v1h-1zM161 29h1v1h-1zM163 29h1v1h-1zM165 29h1v1h-1zM172 16h1v1h-1zM172 18h1v1h-1zM172 20h1v1h-1zM172 22h1v1h-1z" fill="#222"/><path d="M160.2 17.1H166.9L160.2 23.8Z" fill="#3a3a3a"/><path d="M162.5 19.4L167 23.6" stroke="#3a3a3a" stroke-width="1.6"/><rect x="166.7" y="23.6" width="5.6" height="5.6" fill="none" stroke="#333" stroke-width="1.2"/></g><path d="M175.4 18.3L180.0 22.9L184.6 18.3" fill="none" stroke="#7a7a7a" stroke-width="1.1"/><g transform="translate(0 0)"><circle cx="199.9" cy="19.9" r="5.4" fill="none" stroke="#333" stroke-width="1.2"/><path d="M203.9 24.2L209 28.9" stroke="#333" stroke-width="2.2"/></g><g transform="translate(0 0)" fill="none" stroke="#333" stroke-width="1.15"><path d="M220.3 14.2Q222.2 14.3 222.5 16.4Q222.8 18.3 226 20"/><ellipse cx="230.3" cy="24.1" rx="4.6" ry="6.3" transform="rotate(-42 230.3 24.1)"/><path d="M226.2 20.2L229.6 23.2L232.6 20.6M229.6 23.2L227 26.2"/></g><path d="M271 21.2L272.6 22.4L271 23.6M273.9 21.2L275.6 22.4L273.9 23.6" fill="none" stroke="#777" stroke-width="1"/><rect x="427.6" y="12.6" width="18.8" height="18.6" rx="4" fill="#d6e4ef" stroke="#2783e0" stroke-width="1.3"/><path transform="translate(325 0)" d="M109.6 28.6L106.2 25.1L104.5 22.4Q104.5 20.4 106.4 20.5L107.7 20.8L107 18.4Q106.3 15.7 107.9 15.5L109.3 15.6L110.2 17.2Q110.2 14.4 111.8 14.5L112.9 14.7L113.4 15.7L115.5 15.9L116.8 18.6Q117.7 17.1 118.7 17.4L119.7 18.9L119.7 22.2L117.3 26.1L116.3 28.5Z" fill="#fff"/><path transform="translate(325 0)" d="M109.6 28.6L106.2 25.1L104.5 22.4Q104.5 20.4 106.4 20.5L107.7 20.8L108.9 23.2M108.3 21.6L107 18.4Q106.3 15.7 107.9 15.5L109.3 15.6L110.7 19.8M110.2 17.2Q110.2 14.4 111.8 14.5L112.9 14.7L113.5 19.9M113.4 15.7L115.5 15.9L116.7 20.7M116.8 18.6Q117.7 17.1 118.7 17.4L119.7 18.9L119.7 22.2L117.3 26.1L116.3 28.5" fill="none" stroke="#000" stroke-width="1.25" stroke-linecap="round" stroke-linejoin="round"/><g transform="translate(463 22)" fill="#0b4ea2"><rect x="-1.1" y="-7" width="2.2" height="4" transform="rotate(0)"/><rect x="-1.1" y="-7" width="2.2" height="4" transform="rotate(45)"/><rect x="-1.1" y="-7" width="2.2" height="4" transform="rotate(90)"/><rect x="-1.1" y="-7" width="2.2" height="4" transform="rotate(135)"/><rect x="-1.1" y="-7" width="2.2" height="4" transform="rotate(180)"/><rect x="-1.1" y="-7" width="2.2" height="4" transform="rotate(225)"/><rect x="-1.1" y="-7" width="2.2" height="4" transform="rotate(270)"/><rect x="-1.1" y="-7" width="2.2" height="4" transform="rotate(315)"/><circle r="3.6" fill="none" stroke="#0b4ea2" stroke-width="2.8"/></g><g transform="translate(325 0)"><path d="M157 14h1v1h-1zM159 14h1v1h-1zM161 14h1v1h-1zM163 14h1v1h-1zM165 14h1v1h-1zM167 14h1v1h-1zM169 14h1v1h-1zM171 14h1v1h-1zM157 16h1v1h-1zM157 18h1v1h-1zM157 20h1v1h-1zM157 22h1v1h-1zM157 24h1v1h-1zM157 26h1v1h-1zM157 28h1v1h-1zM159 29h1v1h-1zM161 29h1v1h-1zM163 29h1v1h-1zM165 29h1v1h-1zM172 16h1v1h-1zM172 18h1v1h-1zM172 20h1v1h-1zM172 22h1v1h-1z" fill="#222"/><path d="M160.2 17.1H166.9L160.2 23.8Z" fill="#3a3a3a"/><path d="M162.5 19.4L167 23.6" stroke="#3a3a3a" stroke-width="1.6"/><rect x="166.7" y="23.6" width="5.6" height="5.6" fill="none" stroke="#333" stroke-width="1.2"/></g><path d="M500.5 18.3L505.1 22.9L509.7 18.3" fill="none" stroke="#7a7a7a" stroke-width="1.1"/><g transform="translate(325 0)"><circle cx="199.9" cy="19.9" r="5.4" fill="none" stroke="#333" stroke-width="1.2"/><path d="M203.9 24.2L209 28.9" stroke="#333" stroke-width="2.2"/></g><g transform="translate(325 0)" fill="none" stroke="#333" stroke-width="1.15"><path d="M220.3 14.2Q222.2 14.3 222.5 16.4Q222.8 18.3 226 20"/><ellipse cx="230.3" cy="24.1" rx="4.6" ry="6.3" transform="rotate(-42 230.3 24.1)"/><path d="M226.2 20.2L229.6 23.2L232.6 20.6M229.6 23.2L227 26.2"/></g><path d="M571.4 19.6L578.9 15.3L586.6 19.6L578.9 23.8Z" fill="none" stroke="#333" stroke-width="1.15"/><path d="M571 24.3L574.8 22.2L578.9 24.5L583 22.2L586.8 24.3L578.9 28.4Z" fill="#0b4ea2"/><path d="M579 28.4L582.5 29.8L586.6 25.8" fill="none" stroke="#888" stroke-width="1.2"/><path d="M601.8000000000001 14q-3.2 2 0 4q3.2 2 0 4q-3.2 2 0 4q3.2 2 0 4" fill="none" stroke="#0b4ea2" stroke-width="1.2"/><path d="M606.4 14q-3.2 2 0 4q3.2 2 0 4q-3.2 2 0 4q3.2 2 0 4" fill="none" stroke="#e8702a" stroke-width="1.2"/><path d="M610.4 14q-3.2 2 0 4q3.2 2 0 4q-3.2 2 0 4q3.2 2 0 4" fill="none" stroke="#0b4ea2" stroke-width="1.2"/><path d="M616.3 18.3L620.9 22.9L625.5 18.3" fill="none" stroke="#7a7a7a" stroke-width="1.1"/><path d="M637.2 14.2q-3.2 2 0 4q3.2 2 0 4q-3.2 2 0 4q3.2 2 0 4" fill="none" stroke="#e8702a" stroke-width="1.2"/><rect x="639.1" y="18.1" width="11.6" height="7.6" rx="0.8" fill="#333"/><rect x="640.4" y="19.1" width="2.6" height="1.3" fill="#eee"/><rect x="644.0" y="19.1" width="2.6" height="1.3" fill="#eee"/><rect x="647.6" y="19.1" width="2.6" height="1.3" fill="#eee"/><rect x="640.4" y="21.3" width="2.6" height="1.3" fill="#eee"/><rect x="644.0" y="21.3" width="2.6" height="1.3" fill="#eee"/><rect x="647.6" y="21.3" width="2.6" height="1.3" fill="#eee"/><rect x="640.4" y="23.5" width="2.6" height="1.3" fill="#eee"/><rect x="644.0" y="23.5" width="2.6" height="1.3" fill="#eee"/><rect x="647.6" y="23.5" width="2.6" height="1.3" fill="#eee"/><path d="M663.4 15V28.4H676.8" fill="none" stroke="#333" stroke-width="1.2"/><path d="M665.5 26.5V19.5Q665.6 18.2 667.6 18Q668.6 16.1 669.5 16.1Q670.4 16.2 671.4 18.6Q675.6 20.4 675.7 23V26.5" fill="none" stroke="#e8702a" stroke-width="1.15"/><path d="M680.3 18.3L684.9 22.9L689.5 18.3" fill="none" stroke="#7a7a7a" stroke-width="1.1"/><path d="M707.1 14V16.5M707.1 17.6V18.8M707.1 24.3V25.5M707.1 26.7V29.5M699 21.5H701.3M702.2 21.5H703.6M710.6 21.5H712M713 21.5H715" stroke="#0b4ea2" stroke-width="1.2"/><path d="M703.3 21.5H711M707.1 17.8V25.4" stroke="#222" stroke-width="2"/><path d="M709.6 24.6L713.2 24.9L710 28Z" fill="#e8702a"/><path d="M711 26.2L714.3 29.2" stroke="#e8702a" stroke-width="1.5"/><path d="M726.9 16.4H739.3V25.8H733L728.4 29.2V25.8H726.9Z" fill="none" stroke="#333" stroke-width="1.2" stroke-linejoin="round"/><rect x="729.5" y="20.3" width="1.8" height="1.8" fill="#333"/><rect x="732.3" y="20.3" width="1.8" height="1.8" fill="#333"/><rect x="735.1" y="20.3" width="1.8" height="1.8" fill="#333"/><path d="M756 18.1H752.6V28.3H765.4V18.1H762.4" fill="none" stroke="#333" stroke-width="1.15"/><path d="M759.2 14L762.2 17H760.2V19.6H758.2V17H756.2Z" fill="#0b4ea2"/><path d="M752.8 22.6Q755 21 757 22.6T761.2 22.6T765.2 21.8M752.8 25.6Q755 24 757 25.6T761.2 25.6T765.2 24.8" fill="none" stroke="#333" stroke-width="1"/><circle cx="783" cy="22.3" r="5.5" fill="none" stroke="#333" stroke-width="1.2"/><circle cx="783" cy="22.3" r="2.4" fill="none" stroke="#333" stroke-width="1.2"/><path d="M783 27.8H792.6V26.4M788.5 22.3V27.8" fill="none" stroke="#333" stroke-width="1.2"/><circle cx="787.6" cy="17.4" r="0.8" fill="#333"/><circle cx="811.8" cy="21.9" r="7.4" fill="none" stroke="#333" stroke-width="1.2"/><path d="M811.8 14.2V15.6M811.8 28.2V29.6M804.1 21.9H805.5M818.1 21.9H819.5" stroke="#333" stroke-width="1.2"/><path d="M815.4 18.3L813 23.2L810.6 20.8Z" fill="#e8702a"/><path d="M808.3 25.5L810.6 20.8L813 23.2Z" fill="#0b4ea2"/><path d="M822.6 18.8L827.0 22.8L831.4 18.8" fill="none" stroke="#7a7a7a" stroke-width="1.1"/></svg>
<div class="a ttl" style="left:6px;top:14px">Current Cl...</div>
<div class="a ttl" style="left:294px;top:14px;letter-spacing:0.35px">Output - Outp...</div>
<div class="a l" style="left:124.5px;top:50.8px;font-size:11.5px">Trace [Trace]</div>
<div class="a l" style="left:18px;top:66px">TRCIDX</div>
<div class="a l" style="left:512px;top:50.8px;font-size:11.5px">Trace [Trace]</div>
<div class="a l" style="left:305px;top:66px;width:50px;overflow:hidden">CROSSLINE</div>
<div class="a n" style="left:79px;top:65px">1</div>
<div class="a n" style="left:70.8px;top:65px;width:60px;text-align:center">3</div>
<div class="a n" style="left:91.8px;top:65px;width:60px;text-align:center">5</div>
<div class="a n" style="left:112.80000000000001px;top:65px;width:60px;text-align:center">7</div>
<div class="a n" style="left:133.8px;top:65px;width:60px;text-align:center">9</div>
<div class="a n" style="left:154.8px;top:65px;width:60px;text-align:center">11</div>
<div class="a n" style="left:175.8px;top:65px;width:60px;text-align:center">13</div>
<div class="a n" style="left:196.8px;top:65px;width:60px;text-align:center">15</div>
<div class="a n" style="left:177px;top:65px;width:60px;text-align:right">16</div>
<div class="a n" style="left:3.5px;top:82px;width:60px;text-align:right">0</div>
<div class="a n" style="left:3.5px;top:132px;width:60px;text-align:right">500</div>
<div class="a n" style="left:3.5px;top:182px;width:60px;text-align:right">1000</div>
<div class="a n" style="left:3.5px;top:232px;width:60px;text-align:right">1500</div>
<div class="a n" style="left:3.5px;top:281px;width:60px;text-align:right">2000</div>
<div class="a n" style="left:3.5px;top:331px;width:60px;text-align:right">2500</div>
<div class="a n" style="left:3.5px;top:381px;width:60px;text-align:right">3000</div>
<div class="a n" style="left:3.5px;top:431px;width:60px;text-align:right">3500</div>
<div class="a n" style="left:3.5px;top:481px;width:60px;text-align:right">4000</div>
<div class="a n" style="left:368px;top:65px">0</div>
<div class="a n" style="left:368.85999999999996px;top:65px;width:60px;text-align:center">100</div>
<div class="a n" style="left:399.52px;top:65px;width:60px;text-align:center">200</div>
<div class="a n" style="left:430.18px;top:65px;width:60px;text-align:center">300</div>
<div class="a n" style="left:460.84px;top:65px;width:60px;text-align:center">400</div>
<div class="a n" style="left:491.4999999999999px;top:65px;width:60px;text-align:center">500</div>
<div class="a n" style="left:522.1599999999999px;top:65px;width:60px;text-align:center">600</div>
<div class="a n" style="left:552.8199999999999px;top:65px;width:60px;text-align:center">700</div>
<div class="a n" style="left:583.4799999999999px;top:65px;width:60px;text-align:center">800</div>
<div class="a n" style="left:614.1399999999999px;top:65px;width:60px;text-align:center">900</div>
<div class="a n" style="left:644.8px;top:65px;width:60px;text-align:center">1000</div>
<div class="a n" style="left:675.4599999999999px;top:65px;width:60px;text-align:center">1100</div>
<div class="a n" style="left:663px;top:65px;width:60px;text-align:right">1155</div>
<div class="a n" style="left:291.5px;top:82px;width:60px;text-align:right">0</div>
<div class="a n" style="left:291.5px;top:132px;width:60px;text-align:right">500</div>
<div class="a n" style="left:291.5px;top:183px;width:60px;text-align:right">1000</div>
<div class="a n" style="left:291.5px;top:233px;width:60px;text-align:right">1500</div>
<div class="a n" style="left:291.5px;top:283px;width:60px;text-align:right">2000</div>
<div class="a n" style="left:291.5px;top:333px;width:60px;text-align:right">2500</div>
<div class="a n" style="left:291.5px;top:383px;width:60px;text-align:right">3000</div>
<div class="a n" style="left:291.5px;top:434px;width:60px;text-align:right">3500</div>
<div class="a n" style="left:291.5px;top:484px;width:60px;text-align:right">4000</div>
<div class="a n" style="left:767px;top:512px;letter-spacing:0.3px">2000</div>
<div class="a n" style="left:767px;top:463px;letter-spacing:0.3px">2400</div>
<div class="a n" style="left:767px;top:414px;letter-spacing:0.3px">2800</div>
<div class="a n" style="left:767px;top:365px;letter-spacing:0.3px">3200</div>
<div class="a n" style="left:767px;top:315px;letter-spacing:0.3px">3600</div>
<div class="a n" style="left:767px;top:266px;letter-spacing:0.3px">4000</div>
<div class="a n" style="left:767px;top:217px;letter-spacing:0.3px">4400</div>
<div class="a n" style="left:767px;top:168px;letter-spacing:0.3px">4800</div>
<div class="a n" style="left:767px;top:119px;letter-spacing:0.3px">5200</div>
<div class="a n" style="left:767px;top:82px;letter-spacing:0.3px">5500</div>
<div class="a n" style="left:-12px;top:294px;width:75px;text-align:center;letter-spacing:0.3px;font-size:11.5px;transform:rotate(-90deg)">Depth [meter]</div>
<div class="a n" style="left:275px;top:295px;width:75px;text-align:center;letter-spacing:0.3px;font-size:11.5px;transform:rotate(-90deg)">Depth [meter]</div>
<svg width="834" height="539"><rect x="794" y="520" width="1" height="2" fill="#e8a870"/><rect x="794" y="471" width="1" height="2" fill="#e8a870"/><rect x="794" y="422" width="1" height="2" fill="#e8a870"/><rect x="794" y="373" width="1" height="2" fill="#e8a870"/><rect x="794" y="323" width="1" height="2" fill="#e8a870"/><rect x="794" y="274" width="1" height="2" fill="#e8a870"/><rect x="794" y="225" width="1" height="2" fill="#e8a870"/><rect x="794" y="176" width="1" height="2" fill="#e8a870"/><rect x="794" y="127" width="1" height="2" fill="#e8a870"/><rect x="794" y="90" width="1" height="2" fill="#e8a870"/></svg>
</body></html>
